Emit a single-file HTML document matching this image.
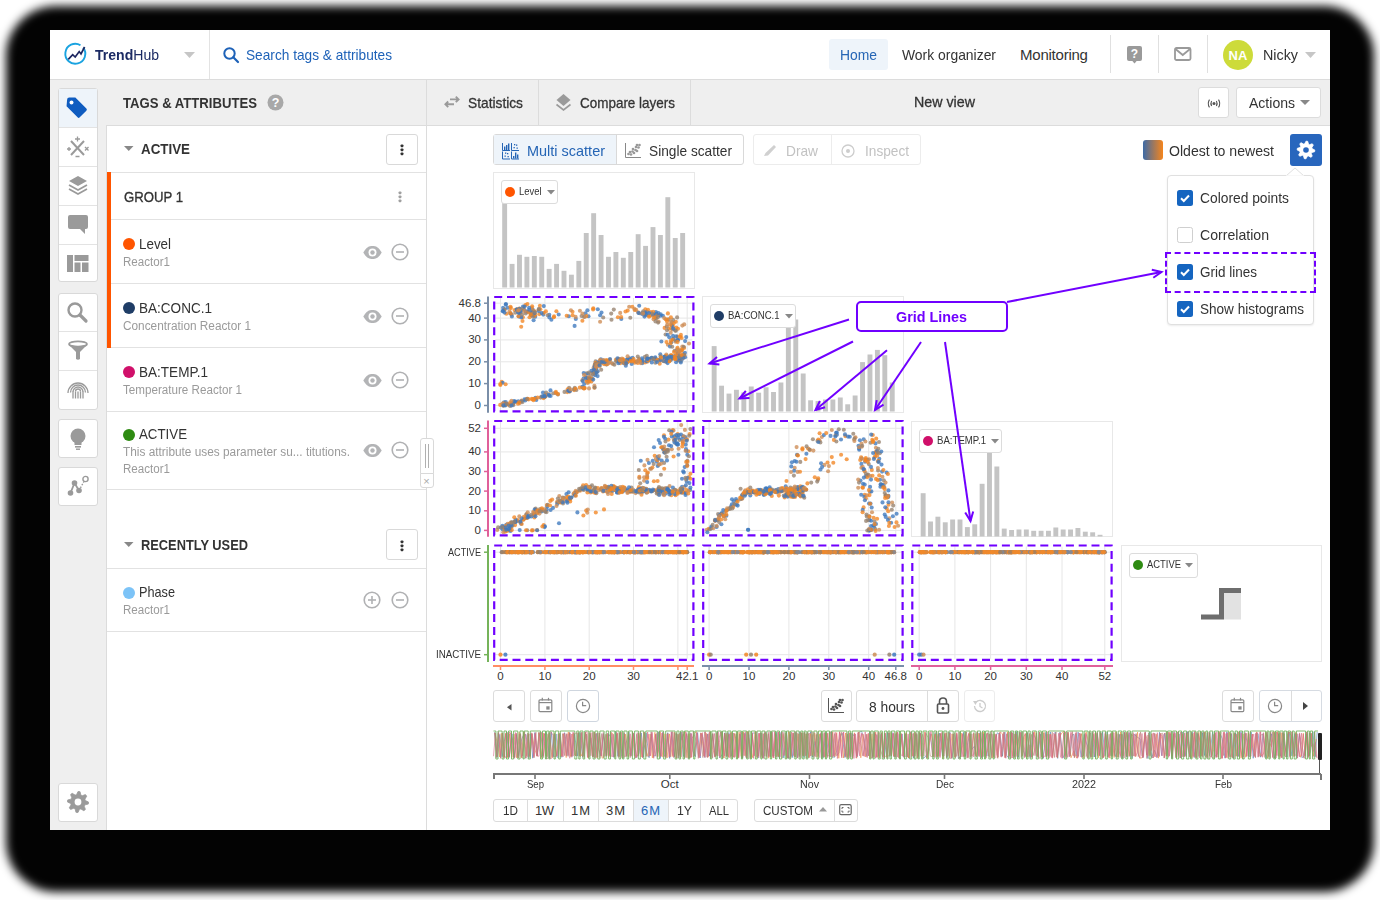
<!DOCTYPE html><html><head><meta charset="utf-8"><style>
*{box-sizing:border-box}
body{margin:0;width:1380px;height:900px;position:relative;overflow:hidden;background:#fff;font-family:"Liberation Sans", sans-serif;color:#333}
.ab{position:absolute}
.t{position:absolute;white-space:nowrap;line-height:1}
svg{position:absolute;overflow:visible}
</style></head><body>
<div class="ab" style="left:6px;top:6px;width:1368px;height:886px;border-radius:50px;background:#030303;filter:blur(5px)"></div>
<div class="ab" style="left:50px;top:30px;width:1280px;height:800px;background:#fff"></div>
<div class="ab" style="left:50px;top:79px;width:1280px;height:1px;background:#dcdcdc"></div>
<div class="ab" style="left:209px;top:30px;width:1px;height:49px;background:#e3e3e3"></div>
<svg style="left:64px;top:42px;" width="24" height="24" viewBox="0 0 24 24"><path d="M19.2,5.6 A10,10 0 1 1 16.5,3.2" fill="none" stroke="#1aa3e0" stroke-width="1.9"/><polyline points="4.3,17.3 8.7,12.6 11.2,15 15.2,9.6 17,12 20.6,5" fill="none" stroke="#1d2660" stroke-width="1.7" stroke-linejoin="miter"/></svg>
<div class="t" style="left:94.5px;top:46.9px;font-size:15.5px;color:#1b2a63;transform:scaleX(0.906);transform-origin:0 0"><b>Trend</b>Hub</div>
<svg style="left:183.5px;top:52px;" width="11" height="6" viewBox="0 0 11 6"><polygon points="0,0 11,0 5.5,6" fill="#c6c6c6"/></svg>
<svg style="left:223px;top:47px;" width="17" height="17" viewBox="0 0 17 17"><circle cx="6.5" cy="6.5" r="5.2" fill="none" stroke="#1e62b8" stroke-width="2"/><line x1="10.3" y1="10.3" x2="15" y2="15" stroke="#1e62b8" stroke-width="2.2" stroke-linecap="round"/></svg>
<div class="t" style="left:246.0px;top:47.3px;font-size:15px;color:#1e62b8;font-weight:normal;letter-spacing:0.00px;transform:scaleX(0.9120);transform-origin:0 0;">Search tags &amp; attributes</div>
<div class="ab" style="left:829px;top:39px;width:59px;height:31px;background:#eef4fa;border-radius:3px"></div>
<div class="t" style="left:840.0px;top:46.8px;font-size:15px;color:#2565b5;font-weight:normal;letter-spacing:0.00px;transform:scaleX(0.9247);transform-origin:0 0;">Home</div>
<div class="t" style="left:901.5px;top:46.8px;font-size:15px;color:#333;font-weight:normal;letter-spacing:0.00px;transform:scaleX(0.9268);transform-origin:0 0;">Work organizer</div>
<div class="t" style="left:1020.0px;top:46.8px;font-size:15px;color:#333;font-weight:normal;letter-spacing:-0.23px;">Monitoring</div>
<div class="ab" style="left:1110px;top:35px;width:1px;height:38px;background:#e0e0e0"></div>
<div class="ab" style="left:1158px;top:35px;width:1px;height:38px;background:#e0e0e0"></div>
<div class="ab" style="left:1207px;top:35px;width:1px;height:38px;background:#e0e0e0"></div>
<svg style="left:1126px;top:45px;" width="18" height="20" viewBox="0 0 18 20"><rect x="1" y="1" width="15" height="15" rx="2" fill="#9a9a9a"/><polygon points="5.5,15 11.5,15 8.5,18.5" fill="#9a9a9a"/><text x="8.5" y="13" font-size="12" font-weight="bold" text-anchor="middle" fill="#fff" font-family="Liberation Sans">?</text></svg>
<svg style="left:1174px;top:47px;" width="18" height="15" viewBox="0 0 18 15"><rect x="1" y="1" width="15.5" height="12" rx="1.5" fill="none" stroke="#9a9a9a" stroke-width="1.8"/><polyline points="1.5,2 8.75,8 16,2" fill="none" stroke="#9a9a9a" stroke-width="1.8"/></svg>
<div class="ab" style="left:1223px;top:39.5px;width:30px;height:30px;border-radius:50%;background:#cddb3a"></div>
<div class="t" style="left:1228.5px;top:48.5px;font-size:13px;color:#fff;font-weight:bold;letter-spacing:0.22px;">NA</div>
<div class="t" style="left:1263.0px;top:46.8px;font-size:15px;color:#333;font-weight:normal;letter-spacing:0.00px;transform:scaleX(0.9546);transform-origin:0 0;">Nicky</div>
<svg style="left:1304.5px;top:52px;" width="11" height="6" viewBox="0 0 11 6"><polygon points="0,0 11,0 5.5,6" fill="#c6c6c6"/></svg>
<div class="ab" style="left:50px;top:80px;width:57px;height:750px;background:#efefef"></div>
<div class="ab" style="left:107px;top:80px;width:320px;height:46px;background:#efefef"></div>
<div class="ab" style="left:427px;top:80px;width:903px;height:46px;background:#efefef"></div>
<div class="ab" style="left:107px;top:125px;width:1223px;height:1px;background:#dcdcdc"></div>
<div class="ab" style="left:106px;top:125px;width:1px;height:705px;background:#dcdcdc"></div>
<div class="ab" style="left:426px;top:80px;width:1px;height:750px;background:#dcdcdc"></div>
<div class="ab" style="left:58px;top:88px;width:40px;height:194px;background:#fff;border:1px solid #d9d9d9;border-radius:3px"></div>
<div class="ab" style="left:59px;top:127px;width:38px;height:1px;background:#e3e3e3"></div>
<div class="ab" style="left:59px;top:166px;width:38px;height:1px;background:#e3e3e3"></div>
<div class="ab" style="left:59px;top:205px;width:38px;height:1px;background:#e3e3e3"></div>
<div class="ab" style="left:59px;top:244px;width:38px;height:1px;background:#e3e3e3"></div>
<div class="ab" style="left:59px;top:89px;width:38px;height:38px;background:#eef4fa"></div>
<div class="ab" style="left:58px;top:292.5px;width:40px;height:117px;background:#fff;border:1px solid #d9d9d9;border-radius:3px"></div>
<div class="ab" style="left:59px;top:331px;width:38px;height:1px;background:#e3e3e3"></div>
<div class="ab" style="left:59px;top:370px;width:38px;height:1px;background:#e3e3e3"></div>
<div class="ab" style="left:58px;top:419px;width:40px;height:39px;background:#fff;border:1px solid #d9d9d9;border-radius:3px"></div>
<div class="ab" style="left:58px;top:466.5px;width:40px;height:39px;background:#fff;border:1px solid #d9d9d9;border-radius:3px"></div>
<div class="ab" style="left:58px;top:782.5px;width:40px;height:39px;background:#fff;border:1px solid #d9d9d9;border-radius:3px"></div>
<svg style="left:65px;top:96px;" width="24" height="24" viewBox="0 0 24 24"><g transform="translate(12,12) scale(1.1) translate(-12,-12)"><path d="M3,4.5 Q3,2.5 5,2.5 L10.5,2.5 L20.5,12.5 Q21.5,13.5 20.5,14.5 L14.5,20.5 Q13.5,21.5 12.5,20.5 L2.5,10.5 Z" fill="#0f5cc0"/><circle cx="7" cy="7" r="1.8" fill="#fff"/></g></svg>
<svg style="left:66px;top:136px;" width="24" height="24" viewBox="0 0 24 24"><line x1="5" y1="5" x2="18" y2="19" stroke="#9a9a9a" stroke-width="2"/><line x1="18" y1="5" x2="5" y2="19" stroke="#9a9a9a" stroke-width="2"/><path d="M11.5,0.5 v5 M9,3 h5 M1,13 h4 M3,11 v4 M19,11 l3.5,3.5 M22.5,11 l-3.5,3.5 M9.5,20.5 h4" stroke="#9a9a9a" stroke-width="1.3" fill="none"/></svg>
<svg style="left:66px;top:175px;" width="24" height="22" viewBox="0 0 24 22"><polygon points="12,1 21,6 12,11 3,6" fill="#9a9a9a"/><polyline points="3,10 12,15 21,10" fill="none" stroke="#9a9a9a" stroke-width="1.8"/><polyline points="3,14 12,19 21,14" fill="none" stroke="#9a9a9a" stroke-width="1.8"/></svg>
<svg style="left:66px;top:214px;" width="24" height="22" viewBox="0 0 24 22"><path d="M2,3 Q2,1 4,1 L20,1 Q22,1 22,3 L22,13 Q22,15 20,15 L19,15 L19,20 L14,15 L4,15 Q2,15 2,13 Z" fill="#9a9a9a"/></svg>
<svg style="left:66px;top:254px;" width="24" height="20" viewBox="0 0 24 20"><rect x="1" y="1" width="6" height="17" fill="#9a9a9a"/><rect x="8.5" y="1" width="14" height="6" fill="#9a9a9a"/><rect x="8.5" y="8.5" width="6" height="9.5" fill="#9a9a9a"/><rect x="16" y="8.5" width="6.5" height="9.5" fill="#9a9a9a"/></svg>
<svg style="left:66px;top:301px;" width="24" height="22" viewBox="0 0 24 22"><circle cx="9" cy="9" r="6.5" fill="none" stroke="#9a9a9a" stroke-width="2.4"/><line x1="14" y1="14" x2="20" y2="20" stroke="#9a9a9a" stroke-width="3.2" stroke-linecap="round"/></svg>
<svg style="left:67px;top:340px;" width="22" height="22" viewBox="0 0 22 22"><ellipse cx="11" cy="4" rx="9" ry="2.6" fill="none" stroke="#9a9a9a" stroke-width="1.8"/><path d="M2,4.5 Q3,6 9,12 L9,19 Q11,20.5 13,19 L13,12 Q19,6 20,4.5 Q11,8 2,4.5Z" fill="#9a9a9a"/></svg>
<svg style="left:67px;top:378px;" width="22" height="22" viewBox="0 0 22 22"><path d="M8.5,13.5 A2.5,2.5 0 0 1 13.5,13.5" fill="none" stroke="#9a9a9a" stroke-width="1.3"/><path d="M6,14.0 A5,5 0 0 1 16,14.0" fill="none" stroke="#9a9a9a" stroke-width="1.3"/><path d="M3.5,14.5 A7.5,7.5 0 0 1 18.5,14.5" fill="none" stroke="#9a9a9a" stroke-width="1.3"/><path d="M1,15.0 A10,10 0 0 1 21,15.0" fill="none" stroke="#9a9a9a" stroke-width="1.3"/><line x1="6" y1="13.5" x2="6" y2="20.5" stroke="#9a9a9a" stroke-width="1.3"/><line x1="8.5" y1="13.5" x2="8.5" y2="20.5" stroke="#9a9a9a" stroke-width="1.3"/><line x1="11" y1="13.5" x2="11" y2="20.5" stroke="#9a9a9a" stroke-width="1.3"/><line x1="13.5" y1="13.5" x2="13.5" y2="20.5" stroke="#9a9a9a" stroke-width="1.3"/><line x1="16" y1="13.5" x2="16" y2="20.5" stroke="#9a9a9a" stroke-width="1.3"/></svg>
<svg style="left:68px;top:427px;" width="20" height="24" viewBox="0 0 20 24"><circle cx="10" cy="9" r="7.5" fill="#9a9a9a"/><rect x="6.5" y="14" width="7" height="4" fill="#9a9a9a"/><rect x="7" y="19" width="6" height="1.6" fill="#9a9a9a"/><rect x="8" y="21.5" width="4" height="1.4" fill="#9a9a9a"/></svg>
<svg style="left:67px;top:475px;" width="22" height="22" viewBox="0 0 22 22"><circle cx="3.5" cy="18" r="2.8" fill="#9a9a9a"/><circle cx="7.5" cy="8" r="2.8" fill="#9a9a9a"/><circle cx="12" cy="15.5" r="2.8" fill="#9a9a9a"/><circle cx="18.5" cy="4" r="2.6" fill="none" stroke="#9a9a9a" stroke-width="1.4"/><polyline points="3.5,18 7.5,8 12,15.5" fill="none" stroke="#9a9a9a" stroke-width="1.8"/><line x1="12" y1="15.5" x2="17" y2="6.5" stroke="#9a9a9a" stroke-width="1.4" stroke-dasharray="1.5,1.5"/></svg>
<svg style="left:66px;top:790px;" width="24" height="24" viewBox="0 0 24 24"><polygon points="22.50,12.00 22.30,14.05 18.93,14.87 18.24,16.17 19.42,19.42 17.83,20.73 14.87,18.93 13.46,19.36 12.00,22.50 9.95,22.30 9.13,18.93 7.83,18.24 4.58,19.42 3.27,17.83 5.07,14.87 4.64,13.46 1.50,12.00 1.70,9.95 5.07,9.13 5.76,7.83 4.58,4.58 6.17,3.27 9.13,5.07 10.54,4.64 12.00,1.50 14.05,1.70 14.87,5.07 16.17,5.76 19.42,4.58 20.73,6.17 18.93,9.13 19.36,10.54" fill="#9a9a9a" stroke="#9a9a9a" stroke-width="0.8" stroke-linejoin="round"/><circle cx="12" cy="12" r="3.4" fill="#fff"/></svg>
<div class="t" style="left:122.5px;top:94.8px;font-size:15px;color:#333;font-weight:bold;letter-spacing:0.00px;transform:scaleX(0.8755);transform-origin:0 0;">TAGS &amp; ATTRIBUTES</div>
<svg style="left:267px;top:94px;" width="17" height="17" viewBox="0 0 17 17"><circle cx="8.5" cy="8.5" r="8" fill="#a8a8a8"/><text x="8.5" y="13.2" font-size="12.5" font-weight="bold" text-anchor="middle" fill="#fff" font-family="Liberation Sans">?</text></svg>
<div class="ab" style="left:107px;top:126px;width:319px;height:704px;background:#fff"></div>
<svg style="left:123.5px;top:146px;" width="9.5" height="5" viewBox="0 0 9.5 5"><polygon points="0,0 9.5,0 4.75,5" fill="#888"/></svg>
<div class="t" style="left:141.0px;top:141.3px;font-size:15px;color:#333;font-weight:bold;letter-spacing:0.00px;transform:scaleX(0.8908);transform-origin:0 0;">ACTIVE</div>
<div class="ab" style="left:386px;top:133.5px;width:32px;height:31px;background:#fff;border:1px solid #d9d9d9;border-radius:3px"></div>
<svg style="left:400.0px;top:142.0px;" width="4" height="14" viewBox="0 0 4 14"><rect x="0.6" y="2.4" width="2.8" height="2.8" rx="0.9" fill="#333"/><rect x="0.6" y="6.4" width="2.8" height="2.8" rx="0.9" fill="#333"/><rect x="0.6" y="10.4" width="2.8" height="2.8" rx="0.9" fill="#333"/></svg>
<div class="ab" style="left:107px;top:172px;width:319px;height:1px;background:#e2e2e2"></div>
<div class="ab" style="left:107px;top:172px;width:4px;height:176px;background:#ff5500"></div>
<div class="t" style="left:123.5px;top:189.3px;font-size:15px;color:#333;font-weight:normal;letter-spacing:0.00px;transform:scaleX(0.8774);transform-origin:0 0;-webkit-text-stroke:0.35px #333">GROUP 1</div>
<svg style="left:398.0px;top:188.5px;" width="4" height="14" viewBox="0 0 4 14"><rect x="0.6" y="2.4" width="2.8" height="2.8" rx="0.9" fill="#a0a0a0"/><rect x="0.6" y="6.4" width="2.8" height="2.8" rx="0.9" fill="#a0a0a0"/><rect x="0.6" y="10.4" width="2.8" height="2.8" rx="0.9" fill="#a0a0a0"/></svg>
<div class="ab" style="left:111px;top:219px;width:315px;height:1px;background:#e2e2e2"></div>
<div class="ab" style="left:123px;top:238.0px;width:12px;height:12px;border-radius:50%;background:#ff5500"></div>
<div class="t" style="left:139.0px;top:235.8px;font-size:15px;color:#333;font-weight:normal;letter-spacing:0.00px;transform:scaleX(0.8923);transform-origin:0 0;">Level</div>
<div class="t" style="left:123.0px;top:255.9px;font-size:12.5px;color:#9a9a9a;font-weight:normal;letter-spacing:0.00px;transform:scaleX(0.9266);transform-origin:0 0;">Reactor1</div>
<svg style="left:362.5px;top:245.5px;" width="19" height="13" viewBox="0 0 19 13"><path d="M0.3,6.5 C3.5,1 6,0 9.5,0 C13,0 15.5,1 18.7,6.5 C15.5,12 13,13 9.5,13 C6,13 3.5,12 0.3,6.5Z" fill="#b3b4b6"/><circle cx="9.5" cy="6.5" r="4" fill="#fff"/><circle cx="9.5" cy="6.5" r="2.2" fill="#b3b4b6"/></svg>
<svg style="left:391px;top:243px;" width="18" height="18" viewBox="0 0 18 18"><circle cx="9" cy="9" r="7.8" fill="none" stroke="#b0b1b3" stroke-width="1.6"/><line x1="5" y1="9" x2="13" y2="9" stroke="#b0b1b3" stroke-width="1.6"/></svg>
<div class="ab" style="left:111px;top:283px;width:315px;height:1px;background:#e2e2e2"></div>
<div class="ab" style="left:123px;top:302.0px;width:12px;height:12px;border-radius:50%;background:#1f3d66"></div>
<div class="t" style="left:139.0px;top:299.8px;font-size:15px;color:#333;font-weight:normal;letter-spacing:0.00px;transform:scaleX(0.9029);transform-origin:0 0;">BA:CONC.1</div>
<div class="t" style="left:123.0px;top:319.9px;font-size:12.5px;color:#9a9a9a;font-weight:normal;letter-spacing:0.00px;transform:scaleX(0.9447);transform-origin:0 0;">Concentration Reactor 1</div>
<svg style="left:362.5px;top:309.5px;" width="19" height="13" viewBox="0 0 19 13"><path d="M0.3,6.5 C3.5,1 6,0 9.5,0 C13,0 15.5,1 18.7,6.5 C15.5,12 13,13 9.5,13 C6,13 3.5,12 0.3,6.5Z" fill="#b3b4b6"/><circle cx="9.5" cy="6.5" r="4" fill="#fff"/><circle cx="9.5" cy="6.5" r="2.2" fill="#b3b4b6"/></svg>
<svg style="left:391px;top:307px;" width="18" height="18" viewBox="0 0 18 18"><circle cx="9" cy="9" r="7.8" fill="none" stroke="#b0b1b3" stroke-width="1.6"/><line x1="5" y1="9" x2="13" y2="9" stroke="#b0b1b3" stroke-width="1.6"/></svg>
<div class="ab" style="left:111px;top:347px;width:315px;height:1px;background:#e2e2e2"></div>
<div class="ab" style="left:123px;top:366.0px;width:12px;height:12px;border-radius:50%;background:#d0106a"></div>
<div class="t" style="left:139.0px;top:363.8px;font-size:15px;color:#333;font-weight:normal;letter-spacing:0.00px;transform:scaleX(0.9029);transform-origin:0 0;">BA:TEMP.1</div>
<div class="t" style="left:123.0px;top:383.9px;font-size:12.5px;color:#9a9a9a;font-weight:normal;letter-spacing:0.00px;transform:scaleX(0.9308);transform-origin:0 0;">Temperature Reactor 1</div>
<svg style="left:362.5px;top:373.5px;" width="19" height="13" viewBox="0 0 19 13"><path d="M0.3,6.5 C3.5,1 6,0 9.5,0 C13,0 15.5,1 18.7,6.5 C15.5,12 13,13 9.5,13 C6,13 3.5,12 0.3,6.5Z" fill="#b3b4b6"/><circle cx="9.5" cy="6.5" r="4" fill="#fff"/><circle cx="9.5" cy="6.5" r="2.2" fill="#b3b4b6"/></svg>
<svg style="left:391px;top:371px;" width="18" height="18" viewBox="0 0 18 18"><circle cx="9" cy="9" r="7.8" fill="none" stroke="#b0b1b3" stroke-width="1.6"/><line x1="5" y1="9" x2="13" y2="9" stroke="#b0b1b3" stroke-width="1.6"/></svg>
<div class="ab" style="left:107px;top:411px;width:319px;height:1px;background:#e2e2e2"></div>
<div class="ab" style="left:123px;top:428.5px;width:12px;height:12px;border-radius:50%;background:#2e8b12"></div>
<div class="t" style="left:139.0px;top:426.3px;font-size:15px;color:#333;font-weight:normal;letter-spacing:0.00px;transform:scaleX(0.8859);transform-origin:0 0;">ACTIVE</div>
<div class="t" style="left:123.0px;top:445.9px;font-size:12.5px;color:#9a9a9a;font-weight:normal;letter-spacing:0.00px;transform:scaleX(0.9470);transform-origin:0 0;">This attribute uses parameter su... titutions.</div>
<div class="t" style="left:123.0px;top:462.9px;font-size:12.5px;color:#9a9a9a;font-weight:normal;letter-spacing:0.00px;transform:scaleX(0.9266);transform-origin:0 0;">Reactor1</div>
<svg style="left:362.5px;top:443.5px;" width="19" height="13" viewBox="0 0 19 13"><path d="M0.3,6.5 C3.5,1 6,0 9.5,0 C13,0 15.5,1 18.7,6.5 C15.5,12 13,13 9.5,13 C6,13 3.5,12 0.3,6.5Z" fill="#b3b4b6"/><circle cx="9.5" cy="6.5" r="4" fill="#fff"/><circle cx="9.5" cy="6.5" r="2.2" fill="#b3b4b6"/></svg>
<svg style="left:391px;top:441px;" width="18" height="18" viewBox="0 0 18 18"><circle cx="9" cy="9" r="7.8" fill="none" stroke="#b0b1b3" stroke-width="1.6"/><line x1="5" y1="9" x2="13" y2="9" stroke="#b0b1b3" stroke-width="1.6"/></svg>
<div class="ab" style="left:107px;top:489px;width:319px;height:1px;background:#e2e2e2"></div>
<div class="ab" style="left:419.5px;top:438px;width:14px;height:36px;background:#fff;border:1px solid #d9d9d9;border-radius:3px 3px 0 0"></div>
<div class="ab" style="left:424.5px;top:444px;width:1.3px;height:24px;background:#b0b0b0"></div>
<div class="ab" style="left:428px;top:444px;width:1.3px;height:24px;background:#b0b0b0"></div>
<div class="ab" style="left:419.5px;top:473px;width:14px;height:15px;background:#fff;border:1px solid #d9d9d9;border-radius:0 0 3px 3px"></div>
<div class="t" style="left:423.3px;top:475.7px;font-size:11px;color:#aaa;font-weight:normal;letter-spacing:0.00px;">×</div>
<svg style="left:123.5px;top:542px;" width="9.5" height="5" viewBox="0 0 9.5 5"><polygon points="0,0 9.5,0 4.75,5" fill="#888"/></svg>
<div class="t" style="left:141.0px;top:537.3px;font-size:15px;color:#333;font-weight:bold;letter-spacing:0.00px;transform:scaleX(0.8557);transform-origin:0 0;">RECENTLY USED</div>
<div class="ab" style="left:386px;top:529px;width:32px;height:31px;background:#fff;border:1px solid #d9d9d9;border-radius:3px"></div>
<svg style="left:400.0px;top:537.5px;" width="4" height="14" viewBox="0 0 4 14"><rect x="0.6" y="2.4" width="2.8" height="2.8" rx="0.9" fill="#333"/><rect x="0.6" y="6.4" width="2.8" height="2.8" rx="0.9" fill="#333"/><rect x="0.6" y="10.4" width="2.8" height="2.8" rx="0.9" fill="#333"/></svg>
<div class="ab" style="left:107px;top:568px;width:319px;height:1px;background:#e2e2e2"></div>
<div class="ab" style="left:123px;top:586.5px;width:12px;height:12px;border-radius:50%;background:#7cc3f7"></div>
<div class="t" style="left:139.0px;top:584.3px;font-size:15px;color:#333;font-weight:normal;letter-spacing:0.00px;transform:scaleX(0.8464);transform-origin:0 0;">Phase</div>
<div class="t" style="left:123.0px;top:604.4px;font-size:12.5px;color:#9a9a9a;font-weight:normal;letter-spacing:0.00px;transform:scaleX(0.9266);transform-origin:0 0;">Reactor1</div>
<svg style="left:363px;top:591px;" width="18" height="18" viewBox="0 0 18 18"><circle cx="9" cy="9" r="7.8" fill="none" stroke="#b0b1b3" stroke-width="1.6"/><line x1="5" y1="9" x2="13" y2="9" stroke="#b0b1b3" stroke-width="1.6"/><line x1="9" y1="5" x2="9" y2="13" stroke="#b0b1b3" stroke-width="1.6"/></svg>
<svg style="left:391px;top:591px;" width="18" height="18" viewBox="0 0 18 18"><circle cx="9" cy="9" r="7.8" fill="none" stroke="#b0b1b3" stroke-width="1.6"/><line x1="5" y1="9" x2="13" y2="9" stroke="#b0b1b3" stroke-width="1.6"/></svg>
<div class="ab" style="left:107px;top:631px;width:319px;height:1px;background:#e2e2e2"></div>
<!--MAIN-->
<div class="ab" style="left:538px;top:80px;width:1px;height:45px;background:#dcdcdc"></div>
<div class="ab" style="left:690px;top:80px;width:1px;height:45px;background:#dcdcdc"></div>
<svg style="left:444px;top:95px;" width="16" height="14" viewBox="0 0 16 14"><path d="M6,4.4 H14.5 M11.8,1.6 L14.6,4.4 L11.8,7.2" fill="none" stroke="#9a9a9a" stroke-width="1.9" stroke-linejoin="miter"/><path d="M10,9.3 H1.5 M4.2,6.5 L1.4,9.3 L4.2,12.1" fill="none" stroke="#9a9a9a" stroke-width="1.9"/></svg>
<div class="t" style="left:468.0px;top:94.8px;font-size:15px;color:#333;font-weight:normal;letter-spacing:0.00px;transform:scaleX(0.9164);transform-origin:0 0;-webkit-text-stroke:0.3px #333">Statistics</div>
<svg style="left:555px;top:93px;" width="17" height="18" viewBox="0 0 17 18"><polygon points="8.5,1 15.5,7 8.5,13 1.5,7" fill="#9a9a9a"/><polyline points="1.5,11.5 8.5,17 15.5,11.5" fill="none" stroke="#9a9a9a" stroke-width="1.6"/></svg>
<div class="t" style="left:580.0px;top:94.8px;font-size:15px;color:#333;font-weight:normal;letter-spacing:0.00px;transform:scaleX(0.8973);transform-origin:0 0;-webkit-text-stroke:0.3px #333">Compare layers</div>
<div class="t" style="left:914.0px;top:94.3px;font-size:15px;color:#333;font-weight:normal;letter-spacing:0.00px;transform:scaleX(0.9504);transform-origin:0 0;-webkit-text-stroke:0.3px #333">New view</div>
<div class="ab" style="left:1198px;top:87px;width:31px;height:31px;background:#fff;border:1px solid #dcdcdc;border-radius:3px"></div>
<svg style="left:1206.5px;top:98.5px;" width="14" height="9" viewBox="0 0 14 9"><circle cx="7" cy="4.5" r="1.5" fill="#555"/><path d="M4.6,2 Q3.2,4.5 4.6,7 M9.4,2 Q10.8,4.5 9.4,7 M2.5,0.6 Q0,4.5 2.5,8.4 M11.5,0.6 Q14,4.5 11.5,8.4" fill="none" stroke="#555" stroke-width="1.1"/></svg>
<div class="ab" style="left:1236px;top:87px;width:85px;height:31px;background:#fff;border:1px solid #dcdcdc;border-radius:3px"></div>
<div class="t" style="left:1248.5px;top:95.3px;font-size:15px;color:#333;font-weight:normal;letter-spacing:0.00px;transform:scaleX(0.9351);transform-origin:0 0;">Actions</div>
<svg style="left:1299.5px;top:100px;" width="10" height="5" viewBox="0 0 10 5"><polygon points="0,0 10,0 5.0,5" fill="#888"/></svg>
<div class="ab" style="left:493px;top:134px;width:251px;height:31px;background:#fff;border:1px solid #d9d9d9;border-radius:3px"></div>
<div class="ab" style="left:494px;top:135px;width:122px;height:29px;background:#eef4fa"></div>
<div class="ab" style="left:616px;top:135px;width:1px;height:29px;background:#d9d9d9"></div>
<svg style="left:501.5px;top:143px;" width="18" height="17" viewBox="0 0 18 17"><path d="M0.5,0 V7.5 H8" fill="none" stroke="#2565b5" stroke-width="1"/><rect x="2" y="3.5" width="1.4" height="3.5" fill="#2565b5"/><rect x="4" y="2" width="1.4" height="5" fill="#2565b5"/><rect x="6" y="0.5" width="1.4" height="6.5" fill="#2565b5"/><path d="M9.5,0 V7.5 H17" fill="none" stroke="#2565b5" stroke-width="1"/><rect x="11.5" y="4" width="1.3" height="1.3" fill="#2565b5"/><rect x="14" y="1.5" width="1.3" height="1.3" fill="#2565b5"/><rect x="14.5" y="4.5" width="1.3" height="1.3" fill="#2565b5"/><rect x="12" y="1" width="1.3" height="1.3" fill="#2565b5"/><path d="M0.5,8.5 V16.0 H8" fill="none" stroke="#2565b5" stroke-width="1"/><rect x="2.5" y="12.5" width="1.3" height="1.3" fill="#2565b5"/><rect x="5" y="10.0" width="1.3" height="1.3" fill="#2565b5"/><rect x="5.5" y="13.0" width="1.3" height="1.3" fill="#2565b5"/><rect x="3" y="9.5" width="1.3" height="1.3" fill="#2565b5"/><path d="M9.5,8.5 V16.0 H17" fill="none" stroke="#2565b5" stroke-width="1"/><rect x="11" y="13.0" width="1.4" height="2.5" fill="#2565b5"/><rect x="13" y="9.5" width="1.4" height="6" fill="#2565b5"/><rect x="15" y="11.5" width="1.4" height="4" fill="#2565b5"/></svg>
<div class="t" style="left:526.5px;top:142.8px;font-size:15px;color:#2565b5;font-weight:normal;letter-spacing:0.00px;transform:scaleX(0.9647);transform-origin:0 0;">Multi scatter</div>
<svg style="left:625px;top:142px;" width="18" height="17" viewBox="0 0 18 17"><path d="M0.5,1 V15.5 H16" fill="none" stroke="#888" stroke-width="1"/><circle cx="3.5" cy="12" r="1.35" fill="#999"/><circle cx="6" cy="12.5" r="1.35" fill="#999"/><circle cx="5" cy="10" r="1.35" fill="#999"/><circle cx="7.5" cy="9.5" r="1.35" fill="#999"/><circle cx="9" cy="11" r="1.35" fill="#999"/><circle cx="8" cy="7" r="1.35" fill="#999"/><circle cx="10.5" cy="8" r="1.35" fill="#999"/><circle cx="12" cy="9" r="1.35" fill="#999"/><circle cx="11" cy="5" r="1.35" fill="#999"/><circle cx="13.5" cy="5.5" r="1.35" fill="#999"/><circle cx="14.5" cy="3" r="1.35" fill="#999"/><circle cx="12" cy="3" r="1.35" fill="#999"/></svg>
<div class="t" style="left:649.0px;top:142.8px;font-size:15px;color:#333;font-weight:normal;letter-spacing:0.00px;transform:scaleX(0.9133);transform-origin:0 0;">Single scatter</div>
<div class="ab" style="left:753px;top:134px;width:168px;height:31px;background:#fff;border:1px solid #ececec;border-radius:3px"></div>
<div class="ab" style="left:831px;top:135px;width:1px;height:29px;background:#ececec"></div>
<svg style="left:762px;top:143px;" width="16" height="15" viewBox="0 0 16 15"><path d="M2,13 L3.5,10 L12,2 L14,4 L6,12.5Z" fill="#d0d0d0"/></svg>
<div class="t" style="left:786.0px;top:142.8px;font-size:15px;color:#c2c2c2;font-weight:normal;letter-spacing:0.00px;transform:scaleX(0.9142);transform-origin:0 0;">Draw</div>
<svg style="left:841px;top:144px;" width="14" height="14" viewBox="0 0 14 14"><circle cx="7" cy="7" r="6" fill="none" stroke="#cdcdcd" stroke-width="1.3"/><circle cx="7" cy="7" r="2" fill="#cdcdcd"/></svg>
<div class="t" style="left:864.5px;top:142.8px;font-size:15px;color:#c2c2c2;font-weight:normal;letter-spacing:0.00px;transform:scaleX(0.9098);transform-origin:0 0;">Inspect</div>
<div class="ab" style="left:1142.5px;top:140px;width:20px;height:20px;border-radius:3px;background:linear-gradient(90deg,#3d6aa6,#f5851d)"></div>
<div class="t" style="left:1169.0px;top:142.8px;font-size:15px;color:#333;font-weight:normal;letter-spacing:0.00px;transform:scaleX(0.9398);transform-origin:0 0;">Oldest to newest</div>
<div class="ab" style="left:1290px;top:134px;width:32px;height:31.5px;background:#2866bd;border-radius:3px"></div>
<svg style="left:1296px;top:140px;" width="20" height="20" viewBox="0 0 20 20"><polygon points="18.80,10.00 18.63,11.72 15.91,12.45 15.32,13.56 16.22,16.22 14.89,17.32 12.45,15.91 11.25,16.28 10.00,18.80 8.28,18.63 7.55,15.91 6.44,15.32 3.78,16.22 2.68,14.89 4.09,12.45 3.72,11.25 1.20,10.00 1.37,8.28 4.09,7.55 4.68,6.44 3.78,3.78 5.11,2.68 7.55,4.09 8.75,3.72 10.00,1.20 11.72,1.37 12.45,4.09 13.56,4.68 16.22,3.78 17.32,5.11 15.91,7.55 16.28,8.75" fill="#fff" stroke="#fff" stroke-width="0.8" stroke-linejoin="round"/><circle cx="10" cy="10" r="2.8" fill="#2866bd"/></svg>
<div class="ab" style="left:1166.5px;top:175px;width:147.5px;height:149.5px;background:#fff;border:1px solid #e0e0e0;border-radius:4px;box-shadow:0 1px 2px rgba(0,0,0,.08)"></div>
<svg style="left:1286px;top:168px;" width="18" height="8" viewBox="0 0 18 8"><polygon points="0,8 9,0 18,8" fill="#fff" stroke="#e0e0e0" stroke-width="1"/><rect x="0" y="7.5" width="18" height="2" fill="#fff"/></svg>
<svg style="left:1176.5px;top:189.8px;" width="16" height="16" viewBox="0 0 16 16"><rect x="0" y="0" width="16" height="16" rx="2.5" fill="#1565c0"/><polyline points="4,8.2 6.8,11 12,5.5" fill="none" stroke="#fff" stroke-width="2"/></svg>
<div class="t" style="left:1200.0px;top:190.3px;font-size:15px;color:#333;font-weight:normal;letter-spacing:0.00px;transform:scaleX(0.9201);transform-origin:0 0;">Colored points</div>
<div class="ab" style="left:1176.5px;top:226.7px;width:16px;height:16px;border:1px solid #cfcfcf;border-radius:2.5px;background:#fff"></div>
<div class="t" style="left:1200.0px;top:227.3px;font-size:15px;color:#333;font-weight:normal;letter-spacing:0.00px;transform:scaleX(0.9404);transform-origin:0 0;">Correlation</div>
<svg style="left:1176.5px;top:263.7px;" width="16" height="16" viewBox="0 0 16 16"><rect x="0" y="0" width="16" height="16" rx="2.5" fill="#1565c0"/><polyline points="4,8.2 6.8,11 12,5.5" fill="none" stroke="#fff" stroke-width="2"/></svg>
<div class="t" style="left:1200.0px;top:264.3px;font-size:15px;color:#333;font-weight:normal;letter-spacing:0.00px;transform:scaleX(0.8997);transform-origin:0 0;">Grid lines</div>
<svg style="left:1176.5px;top:300.5px;" width="16" height="16" viewBox="0 0 16 16"><rect x="0" y="0" width="16" height="16" rx="2.5" fill="#1565c0"/><polyline points="4,8.2 6.8,11 12,5.5" fill="none" stroke="#fff" stroke-width="2"/></svg>
<div class="t" style="left:1200.0px;top:301.3px;font-size:15px;color:#333;font-weight:normal;letter-spacing:0.00px;transform:scaleX(0.9039);transform-origin:0 0;">Show histograms</div>
<div class="ab" style="left:493px;top:172px;width:201.5px;height:116.5px;background:#fff;border:1px solid #e8e8e8"></div>
<svg style="left:493px;top:172px;" width="201" height="116.5" viewBox="0 0 201 116.5"><rect x="9.20" y="25.50" width="4.9" height="90.00" fill="#c4c4c4"/><rect x="16.62" y="91.90" width="4.9" height="23.60" fill="#c4c4c4"/><rect x="24.03" y="82.80" width="4.9" height="32.70" fill="#c4c4c4"/><rect x="31.45" y="84.80" width="4.9" height="30.70" fill="#c4c4c4"/><rect x="38.87" y="84.00" width="4.9" height="31.50" fill="#c4c4c4"/><rect x="46.28" y="84.80" width="4.9" height="30.70" fill="#c4c4c4"/><rect x="53.70" y="96.90" width="4.9" height="18.60" fill="#c4c4c4"/><rect x="61.12" y="91.90" width="4.9" height="23.60" fill="#c4c4c4"/><rect x="68.54" y="98.80" width="4.9" height="16.70" fill="#c4c4c4"/><rect x="75.95" y="102.70" width="4.9" height="12.80" fill="#c4c4c4"/><rect x="83.37" y="88.90" width="4.9" height="26.60" fill="#c4c4c4"/><rect x="90.79" y="61.00" width="4.9" height="54.50" fill="#c4c4c4"/><rect x="98.20" y="41.20" width="4.9" height="74.30" fill="#c4c4c4"/><rect x="105.62" y="63.00" width="4.9" height="52.50" fill="#c4c4c4"/><rect x="113.04" y="84.80" width="4.9" height="30.70" fill="#c4c4c4"/><rect x="120.45" y="80.00" width="4.9" height="35.50" fill="#c4c4c4"/><rect x="127.87" y="85.80" width="4.9" height="29.70" fill="#c4c4c4"/><rect x="135.29" y="80.00" width="4.9" height="35.50" fill="#c4c4c4"/><rect x="142.71" y="62.20" width="4.9" height="53.30" fill="#c4c4c4"/><rect x="150.12" y="73.90" width="4.9" height="41.60" fill="#c4c4c4"/><rect x="157.54" y="55.10" width="4.9" height="60.40" fill="#c4c4c4"/><rect x="164.96" y="63.00" width="4.9" height="52.50" fill="#c4c4c4"/><rect x="172.37" y="25.20" width="4.9" height="90.30" fill="#c4c4c4"/><rect x="179.79" y="66.00" width="4.9" height="49.50" fill="#c4c4c4"/><rect x="187.21" y="61.00" width="4.9" height="54.50" fill="#c4c4c4"/></svg>
<div class="ab" style="left:500.5px;top:180px;width:57px;height:24px;background:#fff;border:1px solid #dcdcdc;border-radius:3px"></div>
<div class="ab" style="left:504.5px;top:187px;width:10px;height:10px;border-radius:50%;background:#ff5500"></div>
<div class="t" style="left:519.0px;top:186.3px;font-size:11.5px;color:#333;font-weight:normal;letter-spacing:0.00px;transform:scaleX(0.8184);transform-origin:0 0;">Level</div>
<svg style="left:546.5px;top:190px;" width="8" height="4.5" viewBox="0 0 8 4.5"><polygon points="0,0 8,0 4.0,4.5" fill="#888"/></svg>
<div class="ab" style="left:702px;top:296px;width:201.5px;height:116.5px;background:#fff;border:1px solid #e8e8e8"></div>
<svg style="left:702px;top:296px;" width="201" height="116.5" viewBox="0 0 201 116.5"><rect x="9.70" y="50.10" width="4.9" height="65.40" fill="#c4c4c4"/><rect x="17.12" y="89.70" width="4.9" height="25.80" fill="#c4c4c4"/><rect x="24.54" y="97.60" width="4.9" height="17.90" fill="#c4c4c4"/><rect x="31.96" y="93.80" width="4.9" height="21.70" fill="#c4c4c4"/><rect x="39.38" y="96.40" width="4.9" height="19.10" fill="#c4c4c4"/><rect x="46.80" y="90.50" width="4.9" height="25.00" fill="#c4c4c4"/><rect x="54.22" y="96.70" width="4.9" height="18.80" fill="#c4c4c4"/><rect x="61.64" y="91.30" width="4.9" height="24.20" fill="#c4c4c4"/><rect x="69.06" y="96.00" width="4.9" height="19.50" fill="#c4c4c4"/><rect x="76.48" y="86.50" width="4.9" height="29.00" fill="#c4c4c4"/><rect x="83.90" y="23.50" width="4.9" height="92.00" fill="#c4c4c4"/><rect x="91.32" y="23.50" width="4.9" height="92.00" fill="#c4c4c4"/><rect x="98.74" y="77.50" width="4.9" height="38.00" fill="#c4c4c4"/><rect x="106.16" y="104.30" width="4.9" height="11.20" fill="#c4c4c4"/><rect x="113.58" y="105.10" width="4.9" height="10.40" fill="#c4c4c4"/><rect x="121.00" y="103.50" width="4.9" height="12.00" fill="#c4c4c4"/><rect x="128.42" y="103.50" width="4.9" height="12.00" fill="#c4c4c4"/><rect x="135.84" y="101.50" width="4.9" height="14.00" fill="#c4c4c4"/><rect x="143.26" y="108.30" width="4.9" height="7.20" fill="#c4c4c4"/><rect x="150.68" y="99.50" width="4.9" height="16.00" fill="#c4c4c4"/><rect x="158.10" y="66.10" width="4.9" height="49.40" fill="#c4c4c4"/><rect x="165.52" y="58.50" width="4.9" height="57.00" fill="#c4c4c4"/><rect x="172.94" y="53.90" width="4.9" height="61.60" fill="#c4c4c4"/><rect x="180.36" y="59.20" width="4.9" height="56.30" fill="#c4c4c4"/><rect x="187.78" y="86.50" width="4.9" height="29.00" fill="#c4c4c4"/></svg>
<div class="ab" style="left:709.5px;top:304px;width:86px;height:24px;background:#fff;border:1px solid #dcdcdc;border-radius:3px"></div>
<div class="ab" style="left:713.5px;top:311px;width:10px;height:10px;border-radius:50%;background:#1f3d66"></div>
<div class="t" style="left:728.0px;top:310.3px;font-size:11.5px;color:#333;font-weight:normal;letter-spacing:0.00px;transform:scaleX(0.8308);transform-origin:0 0;">BA:CONC.1</div>
<svg style="left:784.5px;top:314px;" width="8" height="4.5" viewBox="0 0 8 4.5"><polygon points="0,0 8,0 4.0,4.5" fill="#888"/></svg>
<div class="ab" style="left:911px;top:420.5px;width:201.5px;height:116.5px;background:#fff;border:1px solid #e8e8e8"></div>
<svg style="left:911px;top:420.5px;" width="201" height="116.5" viewBox="0 0 201 116.5"><rect x="9.70" y="72.20" width="4.9" height="43.30" fill="#c4c4c4"/><rect x="17.07" y="100.50" width="4.9" height="15.00" fill="#c4c4c4"/><rect x="24.44" y="95.70" width="4.9" height="19.80" fill="#c4c4c4"/><rect x="31.81" y="101.30" width="4.9" height="14.20" fill="#c4c4c4"/><rect x="39.18" y="98.50" width="4.9" height="17.00" fill="#c4c4c4"/><rect x="46.55" y="98.50" width="4.9" height="17.00" fill="#c4c4c4"/><rect x="53.92" y="106.10" width="4.9" height="9.40" fill="#c4c4c4"/><rect x="61.29" y="103.30" width="4.9" height="12.20" fill="#c4c4c4"/><rect x="68.66" y="62.80" width="4.9" height="52.70" fill="#c4c4c4"/><rect x="76.03" y="31.50" width="4.9" height="84.00" fill="#c4c4c4"/><rect x="83.40" y="45.50" width="4.9" height="70.00" fill="#c4c4c4"/><rect x="90.77" y="107.60" width="4.9" height="7.90" fill="#c4c4c4"/><rect x="98.14" y="109.00" width="4.9" height="6.50" fill="#c4c4c4"/><rect x="105.51" y="108.50" width="4.9" height="7.00" fill="#c4c4c4"/><rect x="112.88" y="108.50" width="4.9" height="7.00" fill="#c4c4c4"/><rect x="120.25" y="109.80" width="4.9" height="5.70" fill="#c4c4c4"/><rect x="127.62" y="109.80" width="4.9" height="5.70" fill="#c4c4c4"/><rect x="134.99" y="109.80" width="4.9" height="5.70" fill="#c4c4c4"/><rect x="142.36" y="106.50" width="4.9" height="9.00" fill="#c4c4c4"/><rect x="149.73" y="108.50" width="4.9" height="7.00" fill="#c4c4c4"/><rect x="157.10" y="108.50" width="4.9" height="7.00" fill="#c4c4c4"/><rect x="164.47" y="107.00" width="4.9" height="8.50" fill="#c4c4c4"/><rect x="171.84" y="110.70" width="4.9" height="4.80" fill="#c4c4c4"/><rect x="179.21" y="111.30" width="4.9" height="4.20" fill="#c4c4c4"/><rect x="186.58" y="113.80" width="4.9" height="1.70" fill="#c4c4c4"/></svg>
<div class="ab" style="left:918.5px;top:428.5px;width:83px;height:24px;background:#fff;border:1px solid #dcdcdc;border-radius:3px"></div>
<div class="ab" style="left:922.5px;top:435.5px;width:10px;height:10px;border-radius:50%;background:#d0106a"></div>
<div class="t" style="left:937.0px;top:434.8px;font-size:11.5px;color:#333;font-weight:normal;letter-spacing:0.00px;transform:scaleX(0.8363);transform-origin:0 0;">BA:TEMP.1</div>
<svg style="left:990.5px;top:438.5px;" width="8" height="4.5" viewBox="0 0 8 4.5"><polygon points="0,0 8,0 4.0,4.5" fill="#888"/></svg>
<div class="ab" style="left:1121px;top:545px;width:201px;height:117px;background:#fff;border:1px solid #e8e8e8"></div>
<div class="ab" style="left:1128.5px;top:553px;width:69px;height:24.5px;background:#fff;border:1px solid #dcdcdc;border-radius:3px"></div>
<div class="ab" style="left:1132.5px;top:560px;width:10px;height:10px;border-radius:50%;background:#2e8b12"></div>
<div class="t" style="left:1147.0px;top:559.3px;font-size:11.5px;color:#333;font-weight:normal;letter-spacing:0.00px;transform:scaleX(0.8185);transform-origin:0 0;">ACTIVE</div>
<svg style="left:1185px;top:563px;" width="8" height="4.5" viewBox="0 0 8 4.5"><polygon points="0,0 8,0 4.0,4.5" fill="#888"/></svg>
<svg style="left:1201px;top:588px;" width="41" height="32" viewBox="0 0 41 32"><rect x="23" y="5" width="17" height="26.5" fill="#e2e2e2"/><path d="M0,29 H20.5 V2.5 H40" fill="none" stroke="#6e6e6e" stroke-width="5"/></svg>
<!--SCATTER-->
<svg style="left:0px;top:0px;" width="1380" height="900" viewBox="0 0 1380 900"><line x1="500.5" y1="298" x2="500.5" y2="410.3" stroke="#e6e6e6" stroke-width="1"/><line x1="544.9" y1="298" x2="544.9" y2="410.3" stroke="#e6e6e6" stroke-width="1"/><line x1="589.2" y1="298" x2="589.2" y2="410.3" stroke="#e6e6e6" stroke-width="1"/><line x1="633.5" y1="298" x2="633.5" y2="410.3" stroke="#e6e6e6" stroke-width="1"/><line x1="677.9" y1="298" x2="677.9" y2="410.3" stroke="#e6e6e6" stroke-width="1"/><line x1="687.2" y1="298" x2="687.2" y2="410.3" stroke="#e6e6e6" stroke-width="1"/><line x1="495.2" y1="405.5" x2="692.4" y2="405.5" stroke="#e6e6e6" stroke-width="1"/><line x1="495.2" y1="383.6" x2="692.4" y2="383.6" stroke="#e6e6e6" stroke-width="1"/><line x1="495.2" y1="361.8" x2="692.4" y2="361.8" stroke="#e6e6e6" stroke-width="1"/><line x1="495.2" y1="339.9" x2="692.4" y2="339.9" stroke="#e6e6e6" stroke-width="1"/><line x1="495.2" y1="318.1" x2="692.4" y2="318.1" stroke="#e6e6e6" stroke-width="1"/><line x1="495.2" y1="303.2" x2="692.4" y2="303.2" stroke="#e6e6e6" stroke-width="1"/><line x1="500.5" y1="422" x2="500.5" y2="534.3" stroke="#e6e6e6" stroke-width="1"/><line x1="544.9" y1="422" x2="544.9" y2="534.3" stroke="#e6e6e6" stroke-width="1"/><line x1="589.2" y1="422" x2="589.2" y2="534.3" stroke="#e6e6e6" stroke-width="1"/><line x1="633.5" y1="422" x2="633.5" y2="534.3" stroke="#e6e6e6" stroke-width="1"/><line x1="677.9" y1="422" x2="677.9" y2="534.3" stroke="#e6e6e6" stroke-width="1"/><line x1="687.2" y1="422" x2="687.2" y2="534.3" stroke="#e6e6e6" stroke-width="1"/><line x1="495.2" y1="530.4" x2="692.4" y2="530.4" stroke="#e6e6e6" stroke-width="1"/><line x1="495.2" y1="510.8" x2="692.4" y2="510.8" stroke="#e6e6e6" stroke-width="1"/><line x1="495.2" y1="491.1" x2="692.4" y2="491.1" stroke="#e6e6e6" stroke-width="1"/><line x1="495.2" y1="471.5" x2="692.4" y2="471.5" stroke="#e6e6e6" stroke-width="1"/><line x1="495.2" y1="451.9" x2="692.4" y2="451.9" stroke="#e6e6e6" stroke-width="1"/><line x1="495.2" y1="428.3" x2="692.4" y2="428.3" stroke="#e6e6e6" stroke-width="1"/><line x1="709.1" y1="422" x2="709.1" y2="534.3" stroke="#e6e6e6" stroke-width="1"/><line x1="749.0" y1="422" x2="749.0" y2="534.3" stroke="#e6e6e6" stroke-width="1"/><line x1="788.9" y1="422" x2="788.9" y2="534.3" stroke="#e6e6e6" stroke-width="1"/><line x1="828.8" y1="422" x2="828.8" y2="534.3" stroke="#e6e6e6" stroke-width="1"/><line x1="868.7" y1="422" x2="868.7" y2="534.3" stroke="#e6e6e6" stroke-width="1"/><line x1="895.8" y1="422" x2="895.8" y2="534.3" stroke="#e6e6e6" stroke-width="1"/><line x1="704.2" y1="530.4" x2="901.6" y2="530.4" stroke="#e6e6e6" stroke-width="1"/><line x1="704.2" y1="510.8" x2="901.6" y2="510.8" stroke="#e6e6e6" stroke-width="1"/><line x1="704.2" y1="491.1" x2="901.6" y2="491.1" stroke="#e6e6e6" stroke-width="1"/><line x1="704.2" y1="471.5" x2="901.6" y2="471.5" stroke="#e6e6e6" stroke-width="1"/><line x1="704.2" y1="451.9" x2="901.6" y2="451.9" stroke="#e6e6e6" stroke-width="1"/><line x1="704.2" y1="428.3" x2="901.6" y2="428.3" stroke="#e6e6e6" stroke-width="1"/><line x1="500.5" y1="546.5" x2="500.5" y2="658.8" stroke="#e6e6e6" stroke-width="1"/><line x1="544.9" y1="546.5" x2="544.9" y2="658.8" stroke="#e6e6e6" stroke-width="1"/><line x1="589.2" y1="546.5" x2="589.2" y2="658.8" stroke="#e6e6e6" stroke-width="1"/><line x1="633.5" y1="546.5" x2="633.5" y2="658.8" stroke="#e6e6e6" stroke-width="1"/><line x1="677.9" y1="546.5" x2="677.9" y2="658.8" stroke="#e6e6e6" stroke-width="1"/><line x1="687.2" y1="546.5" x2="687.2" y2="658.8" stroke="#e6e6e6" stroke-width="1"/><line x1="495.2" y1="552.2" x2="692.4" y2="552.2" stroke="#e6e6e6" stroke-width="1"/><line x1="495.2" y1="654.7" x2="692.4" y2="654.7" stroke="#e6e6e6" stroke-width="1"/><line x1="709.1" y1="546.5" x2="709.1" y2="658.8" stroke="#e6e6e6" stroke-width="1"/><line x1="749.0" y1="546.5" x2="749.0" y2="658.8" stroke="#e6e6e6" stroke-width="1"/><line x1="788.9" y1="546.5" x2="788.9" y2="658.8" stroke="#e6e6e6" stroke-width="1"/><line x1="828.8" y1="546.5" x2="828.8" y2="658.8" stroke="#e6e6e6" stroke-width="1"/><line x1="868.7" y1="546.5" x2="868.7" y2="658.8" stroke="#e6e6e6" stroke-width="1"/><line x1="895.8" y1="546.5" x2="895.8" y2="658.8" stroke="#e6e6e6" stroke-width="1"/><line x1="704.2" y1="552.2" x2="901.6" y2="552.2" stroke="#e6e6e6" stroke-width="1"/><line x1="704.2" y1="654.7" x2="901.6" y2="654.7" stroke="#e6e6e6" stroke-width="1"/><line x1="919.2" y1="546.5" x2="919.2" y2="658.8" stroke="#e6e6e6" stroke-width="1"/><line x1="954.9" y1="546.5" x2="954.9" y2="658.8" stroke="#e6e6e6" stroke-width="1"/><line x1="990.6" y1="546.5" x2="990.6" y2="658.8" stroke="#e6e6e6" stroke-width="1"/><line x1="1026.3" y1="546.5" x2="1026.3" y2="658.8" stroke="#e6e6e6" stroke-width="1"/><line x1="1062.0" y1="546.5" x2="1062.0" y2="658.8" stroke="#e6e6e6" stroke-width="1"/><line x1="1104.8" y1="546.5" x2="1104.8" y2="658.8" stroke="#e6e6e6" stroke-width="1"/><line x1="913.3" y1="552.2" x2="1110.6" y2="552.2" stroke="#e6e6e6" stroke-width="1"/><line x1="913.3" y1="654.7" x2="1110.6" y2="654.7" stroke="#e6e6e6" stroke-width="1"/><circle cx="540.6" cy="397.6" r="2.05" fill="#96826e" fill-opacity="0.78"/><circle cx="524.5" cy="399.3" r="2.05" fill="#3e78be" fill-opacity="0.78"/><circle cx="548.9" cy="394.4" r="2.05" fill="#cd8c55" fill-opacity="0.78"/><circle cx="535.5" cy="397.8" r="2.05" fill="#3e78be" fill-opacity="0.78"/><circle cx="543.0" cy="392.6" r="2.05" fill="#3e78be" fill-opacity="0.78"/><circle cx="510.9" cy="404.0" r="2.05" fill="#96826e" fill-opacity="0.78"/><circle cx="545.5" cy="394.5" r="2.05" fill="#cd8c55" fill-opacity="0.78"/><circle cx="516.2" cy="401.7" r="2.05" fill="#96826e" fill-opacity="0.78"/><circle cx="536.3" cy="399.9" r="2.05" fill="#3e78be" fill-opacity="0.78"/><circle cx="569.6" cy="391.6" r="2.05" fill="#cd8c55" fill-opacity="0.78"/><circle cx="574.1" cy="390.1" r="2.05" fill="#f28523" fill-opacity="0.78"/><circle cx="504.1" cy="402.3" r="2.05" fill="#3e78be" fill-opacity="0.78"/><circle cx="549.0" cy="395.7" r="2.05" fill="#3e78be" fill-opacity="0.78"/><circle cx="543.4" cy="398.1" r="2.05" fill="#f28523" fill-opacity="0.78"/><circle cx="569.1" cy="387.9" r="2.05" fill="#96826e" fill-opacity="0.78"/><circle cx="519.8" cy="403.1" r="2.05" fill="#cd8c55" fill-opacity="0.78"/><circle cx="513.4" cy="402.9" r="2.05" fill="#96826e" fill-opacity="0.78"/><circle cx="582.8" cy="387.5" r="2.05" fill="#96826e" fill-opacity="0.78"/><circle cx="584.1" cy="387.9" r="2.05" fill="#3e78be" fill-opacity="0.78"/><circle cx="518.3" cy="401.4" r="2.05" fill="#3e78be" fill-opacity="0.78"/><circle cx="531.8" cy="398.9" r="2.05" fill="#f28523" fill-opacity="0.78"/><circle cx="513.1" cy="404.1" r="2.05" fill="#cd8c55" fill-opacity="0.78"/><circle cx="567.3" cy="392.1" r="2.05" fill="#f28523" fill-opacity="0.78"/><circle cx="557.9" cy="394.4" r="2.05" fill="#96826e" fill-opacity="0.78"/><circle cx="504.0" cy="405.2" r="2.05" fill="#f28523" fill-opacity="0.78"/><circle cx="546.1" cy="392.6" r="2.05" fill="#96826e" fill-opacity="0.78"/><circle cx="518.0" cy="403.8" r="2.05" fill="#f28523" fill-opacity="0.78"/><circle cx="548.8" cy="394.8" r="2.05" fill="#3e78be" fill-opacity="0.78"/><circle cx="582.2" cy="386.8" r="2.05" fill="#3e78be" fill-opacity="0.78"/><circle cx="521.7" cy="400.5" r="2.05" fill="#f28523" fill-opacity="0.78"/><circle cx="503.9" cy="405.4" r="2.05" fill="#96826e" fill-opacity="0.78"/><circle cx="512.4" cy="403.5" r="2.05" fill="#cd8c55" fill-opacity="0.78"/><circle cx="505.9" cy="403.8" r="2.05" fill="#f28523" fill-opacity="0.78"/><circle cx="569.8" cy="391.2" r="2.05" fill="#3e78be" fill-opacity="0.78"/><circle cx="521.5" cy="401.2" r="2.05" fill="#3e78be" fill-opacity="0.78"/><circle cx="527.0" cy="398.9" r="2.05" fill="#3e78be" fill-opacity="0.78"/><circle cx="555.8" cy="393.0" r="2.05" fill="#cd8c55" fill-opacity="0.78"/><circle cx="534.5" cy="398.9" r="2.05" fill="#f28523" fill-opacity="0.78"/><circle cx="504.5" cy="404.0" r="2.05" fill="#3e78be" fill-opacity="0.78"/><circle cx="553.3" cy="393.3" r="2.05" fill="#96826e" fill-opacity="0.78"/><circle cx="574.8" cy="387.9" r="2.05" fill="#96826e" fill-opacity="0.78"/><circle cx="544.5" cy="397.3" r="2.05" fill="#96826e" fill-opacity="0.78"/><circle cx="567.6" cy="389.3" r="2.05" fill="#f28523" fill-opacity="0.78"/><circle cx="527.7" cy="398.9" r="2.05" fill="#f28523" fill-opacity="0.78"/><circle cx="555.9" cy="393.3" r="2.05" fill="#cd8c55" fill-opacity="0.78"/><circle cx="564.5" cy="391.9" r="2.05" fill="#96826e" fill-opacity="0.78"/><circle cx="555.9" cy="391.9" r="2.05" fill="#f28523" fill-opacity="0.78"/><circle cx="522.5" cy="402.1" r="2.05" fill="#96826e" fill-opacity="0.78"/><circle cx="525.2" cy="400.4" r="2.05" fill="#3e78be" fill-opacity="0.78"/><circle cx="576.4" cy="390.0" r="2.05" fill="#96826e" fill-opacity="0.78"/><circle cx="582.7" cy="387.8" r="2.05" fill="#cd8c55" fill-opacity="0.78"/><circle cx="515.0" cy="401.5" r="2.05" fill="#3e78be" fill-opacity="0.78"/><circle cx="533.4" cy="400.2" r="2.05" fill="#f28523" fill-opacity="0.78"/><circle cx="573.8" cy="389.3" r="2.05" fill="#96826e" fill-opacity="0.78"/><circle cx="568.2" cy="390.7" r="2.05" fill="#3e78be" fill-opacity="0.78"/><circle cx="508.2" cy="404.8" r="2.05" fill="#f28523" fill-opacity="0.78"/><circle cx="537.6" cy="397.6" r="2.05" fill="#f28523" fill-opacity="0.78"/><circle cx="544.4" cy="397.1" r="2.05" fill="#f28523" fill-opacity="0.78"/><circle cx="528.6" cy="399.4" r="2.05" fill="#f28523" fill-opacity="0.78"/><circle cx="514.0" cy="401.1" r="2.05" fill="#3e78be" fill-opacity="0.78"/><circle cx="532.9" cy="399.0" r="2.05" fill="#f28523" fill-opacity="0.78"/><circle cx="575.4" cy="388.7" r="2.05" fill="#f28523" fill-opacity="0.78"/><circle cx="545.3" cy="396.4" r="2.05" fill="#f28523" fill-opacity="0.78"/><circle cx="544.9" cy="396.5" r="2.05" fill="#3e78be" fill-opacity="0.78"/><circle cx="541.3" cy="396.8" r="2.05" fill="#cd8c55" fill-opacity="0.78"/><circle cx="513.8" cy="402.3" r="2.05" fill="#3e78be" fill-opacity="0.78"/><circle cx="558.0" cy="394.1" r="2.05" fill="#f28523" fill-opacity="0.78"/><circle cx="569.0" cy="390.5" r="2.05" fill="#3e78be" fill-opacity="0.78"/><circle cx="542.3" cy="396.4" r="2.05" fill="#3e78be" fill-opacity="0.78"/><circle cx="570.4" cy="389.4" r="2.05" fill="#cd8c55" fill-opacity="0.78"/><circle cx="510.3" cy="402.4" r="2.05" fill="#f28523" fill-opacity="0.78"/><circle cx="511.5" cy="400.9" r="2.05" fill="#cd8c55" fill-opacity="0.78"/><circle cx="526.8" cy="399.2" r="2.05" fill="#96826e" fill-opacity="0.78"/><circle cx="544.3" cy="395.9" r="2.05" fill="#3e78be" fill-opacity="0.78"/><circle cx="519.2" cy="402.2" r="2.05" fill="#f28523" fill-opacity="0.78"/><circle cx="550.5" cy="390.4" r="2.05" fill="#3e78be" fill-opacity="0.78"/><circle cx="589.0" cy="388.4" r="2.05" fill="#cd8c55" fill-opacity="0.78"/><circle cx="550.6" cy="396.0" r="2.05" fill="#3e78be" fill-opacity="0.78"/><circle cx="513.4" cy="405.1" r="2.05" fill="#96826e" fill-opacity="0.78"/><circle cx="503.3" cy="403.1" r="2.05" fill="#cd8c55" fill-opacity="0.78"/><circle cx="505.4" cy="405.5" r="2.05" fill="#3e78be" fill-opacity="0.78"/><circle cx="506.9" cy="403.9" r="2.05" fill="#f28523" fill-opacity="0.78"/><circle cx="505.8" cy="402.0" r="2.05" fill="#3e78be" fill-opacity="0.78"/><circle cx="505.5" cy="403.6" r="2.05" fill="#f28523" fill-opacity="0.78"/><circle cx="503.0" cy="405.6" r="2.05" fill="#96826e" fill-opacity="0.78"/><circle cx="500.2" cy="404.9" r="2.05" fill="#f28523" fill-opacity="0.78"/><circle cx="510.1" cy="405.9" r="2.05" fill="#96826e" fill-opacity="0.78"/><circle cx="505.6" cy="404.3" r="2.05" fill="#3e78be" fill-opacity="0.78"/><circle cx="511.6" cy="405.4" r="2.05" fill="#3e78be" fill-opacity="0.78"/><circle cx="502.5" cy="403.8" r="2.05" fill="#cd8c55" fill-opacity="0.78"/><circle cx="503.5" cy="405.2" r="2.05" fill="#3e78be" fill-opacity="0.78"/><circle cx="507.0" cy="404.0" r="2.05" fill="#96826e" fill-opacity="0.78"/><circle cx="587.1" cy="380.3" r="2.05" fill="#96826e" fill-opacity="0.78"/><circle cx="597.7" cy="371.3" r="2.05" fill="#3e78be" fill-opacity="0.78"/><circle cx="587.5" cy="378.1" r="2.05" fill="#3e78be" fill-opacity="0.78"/><circle cx="586.5" cy="373.3" r="2.05" fill="#96826e" fill-opacity="0.78"/><circle cx="594.3" cy="387.8" r="2.05" fill="#f28523" fill-opacity="0.78"/><circle cx="595.2" cy="367.3" r="2.05" fill="#f28523" fill-opacity="0.78"/><circle cx="584.2" cy="384.0" r="2.05" fill="#3e78be" fill-opacity="0.78"/><circle cx="592.1" cy="372.8" r="2.05" fill="#cd8c55" fill-opacity="0.78"/><circle cx="594.5" cy="365.4" r="2.05" fill="#cd8c55" fill-opacity="0.78"/><circle cx="579.8" cy="387.6" r="2.05" fill="#f28523" fill-opacity="0.78"/><circle cx="593.5" cy="368.1" r="2.05" fill="#cd8c55" fill-opacity="0.78"/><circle cx="591.4" cy="370.8" r="2.05" fill="#3e78be" fill-opacity="0.78"/><circle cx="583.6" cy="378.6" r="2.05" fill="#3e78be" fill-opacity="0.78"/><circle cx="586.5" cy="381.4" r="2.05" fill="#f28523" fill-opacity="0.78"/><circle cx="583.7" cy="373.0" r="2.05" fill="#3e78be" fill-opacity="0.78"/><circle cx="585.7" cy="376.5" r="2.05" fill="#cd8c55" fill-opacity="0.78"/><circle cx="593.8" cy="372.2" r="2.05" fill="#3e78be" fill-opacity="0.78"/><circle cx="582.3" cy="380.3" r="2.05" fill="#cd8c55" fill-opacity="0.78"/><circle cx="595.4" cy="372.7" r="2.05" fill="#3e78be" fill-opacity="0.78"/><circle cx="586.0" cy="377.7" r="2.05" fill="#3e78be" fill-opacity="0.78"/><circle cx="582.7" cy="381.1" r="2.05" fill="#3e78be" fill-opacity="0.78"/><circle cx="594.7" cy="366.3" r="2.05" fill="#3e78be" fill-opacity="0.78"/><circle cx="594.5" cy="369.8" r="2.05" fill="#96826e" fill-opacity="0.78"/><circle cx="584.0" cy="388.6" r="2.05" fill="#f28523" fill-opacity="0.78"/><circle cx="588.1" cy="373.8" r="2.05" fill="#3e78be" fill-opacity="0.78"/><circle cx="592.4" cy="378.7" r="2.05" fill="#96826e" fill-opacity="0.78"/><circle cx="588.9" cy="372.6" r="2.05" fill="#96826e" fill-opacity="0.78"/><circle cx="594.7" cy="373.7" r="2.05" fill="#cd8c55" fill-opacity="0.78"/><circle cx="588.2" cy="381.8" r="2.05" fill="#f28523" fill-opacity="0.78"/><circle cx="596.3" cy="368.7" r="2.05" fill="#3e78be" fill-opacity="0.78"/><circle cx="597.6" cy="376.1" r="2.05" fill="#3e78be" fill-opacity="0.78"/><circle cx="591.4" cy="381.4" r="2.05" fill="#f28523" fill-opacity="0.78"/><circle cx="584.0" cy="375.0" r="2.05" fill="#cd8c55" fill-opacity="0.78"/><circle cx="595.0" cy="375.3" r="2.05" fill="#3e78be" fill-opacity="0.78"/><circle cx="587.6" cy="382.9" r="2.05" fill="#cd8c55" fill-opacity="0.78"/><circle cx="591.0" cy="375.9" r="2.05" fill="#96826e" fill-opacity="0.78"/><circle cx="595.4" cy="368.8" r="2.05" fill="#3e78be" fill-opacity="0.78"/><circle cx="596.7" cy="372.1" r="2.05" fill="#96826e" fill-opacity="0.78"/><circle cx="589.2" cy="377.1" r="2.05" fill="#cd8c55" fill-opacity="0.78"/><circle cx="599.6" cy="366.5" r="2.05" fill="#cd8c55" fill-opacity="0.78"/><circle cx="591.5" cy="379.1" r="2.05" fill="#f28523" fill-opacity="0.78"/><circle cx="588.9" cy="378.5" r="2.05" fill="#3e78be" fill-opacity="0.78"/><circle cx="584.8" cy="388.0" r="2.05" fill="#f28523" fill-opacity="0.78"/><circle cx="593.1" cy="373.9" r="2.05" fill="#96826e" fill-opacity="0.78"/><circle cx="594.4" cy="385.8" r="2.05" fill="#cd8c55" fill-opacity="0.78"/><circle cx="594.7" cy="387.5" r="2.05" fill="#96826e" fill-opacity="0.78"/><circle cx="595.6" cy="361.4" r="2.05" fill="#96826e" fill-opacity="0.78"/><circle cx="595.4" cy="368.4" r="2.05" fill="#f28523" fill-opacity="0.78"/><circle cx="589.3" cy="378.3" r="2.05" fill="#f28523" fill-opacity="0.78"/><circle cx="594.0" cy="369.3" r="2.05" fill="#3e78be" fill-opacity="0.78"/><circle cx="596.6" cy="372.5" r="2.05" fill="#3e78be" fill-opacity="0.78"/><circle cx="601.2" cy="369.7" r="2.05" fill="#96826e" fill-opacity="0.78"/><circle cx="593.2" cy="379.6" r="2.05" fill="#3e78be" fill-opacity="0.78"/><circle cx="589.5" cy="378.8" r="2.05" fill="#96826e" fill-opacity="0.78"/><circle cx="589.2" cy="381.4" r="2.05" fill="#f28523" fill-opacity="0.78"/><circle cx="642.5" cy="360.3" r="2.05" fill="#3e78be" fill-opacity="0.78"/><circle cx="600.9" cy="359.2" r="2.05" fill="#3e78be" fill-opacity="0.78"/><circle cx="606.5" cy="364.6" r="2.05" fill="#96826e" fill-opacity="0.78"/><circle cx="649.3" cy="360.2" r="2.05" fill="#96826e" fill-opacity="0.78"/><circle cx="654.5" cy="359.3" r="2.05" fill="#96826e" fill-opacity="0.78"/><circle cx="630.8" cy="359.8" r="2.05" fill="#cd8c55" fill-opacity="0.78"/><circle cx="674.7" cy="358.8" r="2.05" fill="#3e78be" fill-opacity="0.78"/><circle cx="666.6" cy="355.7" r="2.05" fill="#f28523" fill-opacity="0.78"/><circle cx="647.2" cy="361.7" r="2.05" fill="#cd8c55" fill-opacity="0.78"/><circle cx="678.0" cy="359.9" r="2.05" fill="#f28523" fill-opacity="0.78"/><circle cx="606.3" cy="361.1" r="2.05" fill="#96826e" fill-opacity="0.78"/><circle cx="642.2" cy="363.3" r="2.05" fill="#3e78be" fill-opacity="0.78"/><circle cx="649.3" cy="358.7" r="2.05" fill="#f28523" fill-opacity="0.78"/><circle cx="663.8" cy="361.2" r="2.05" fill="#f28523" fill-opacity="0.78"/><circle cx="644.9" cy="362.5" r="2.05" fill="#f28523" fill-opacity="0.78"/><circle cx="617.3" cy="360.2" r="2.05" fill="#f28523" fill-opacity="0.78"/><circle cx="623.9" cy="363.2" r="2.05" fill="#3e78be" fill-opacity="0.78"/><circle cx="646.5" cy="358.8" r="2.05" fill="#3e78be" fill-opacity="0.78"/><circle cx="602.0" cy="361.9" r="2.05" fill="#f28523" fill-opacity="0.78"/><circle cx="617.7" cy="361.3" r="2.05" fill="#3e78be" fill-opacity="0.78"/><circle cx="679.6" cy="355.6" r="2.05" fill="#3e78be" fill-opacity="0.78"/><circle cx="666.1" cy="362.0" r="2.05" fill="#96826e" fill-opacity="0.78"/><circle cx="616.0" cy="359.6" r="2.05" fill="#f28523" fill-opacity="0.78"/><circle cx="667.8" cy="358.2" r="2.05" fill="#3e78be" fill-opacity="0.78"/><circle cx="679.2" cy="358.6" r="2.05" fill="#3e78be" fill-opacity="0.78"/><circle cx="666.3" cy="354.6" r="2.05" fill="#cd8c55" fill-opacity="0.78"/><circle cx="595.7" cy="363.8" r="2.05" fill="#3e78be" fill-opacity="0.78"/><circle cx="654.0" cy="358.9" r="2.05" fill="#3e78be" fill-opacity="0.78"/><circle cx="603.7" cy="362.1" r="2.05" fill="#f28523" fill-opacity="0.78"/><circle cx="630.1" cy="359.3" r="2.05" fill="#96826e" fill-opacity="0.78"/><circle cx="634.8" cy="362.8" r="2.05" fill="#f28523" fill-opacity="0.78"/><circle cx="642.5" cy="361.7" r="2.05" fill="#3e78be" fill-opacity="0.78"/><circle cx="607.5" cy="363.9" r="2.05" fill="#f28523" fill-opacity="0.78"/><circle cx="676.4" cy="357.6" r="2.05" fill="#3e78be" fill-opacity="0.78"/><circle cx="628.0" cy="361.6" r="2.05" fill="#cd8c55" fill-opacity="0.78"/><circle cx="665.0" cy="356.3" r="2.05" fill="#f28523" fill-opacity="0.78"/><circle cx="602.7" cy="361.5" r="2.05" fill="#3e78be" fill-opacity="0.78"/><circle cx="629.4" cy="358.3" r="2.05" fill="#3e78be" fill-opacity="0.78"/><circle cx="652.1" cy="357.7" r="2.05" fill="#96826e" fill-opacity="0.78"/><circle cx="599.5" cy="361.3" r="2.05" fill="#f28523" fill-opacity="0.78"/><circle cx="674.5" cy="356.0" r="2.05" fill="#3e78be" fill-opacity="0.78"/><circle cx="595.0" cy="364.0" r="2.05" fill="#96826e" fill-opacity="0.78"/><circle cx="623.1" cy="360.0" r="2.05" fill="#f28523" fill-opacity="0.78"/><circle cx="632.5" cy="357.7" r="2.05" fill="#3e78be" fill-opacity="0.78"/><circle cx="678.3" cy="358.9" r="2.05" fill="#f28523" fill-opacity="0.78"/><circle cx="597.2" cy="365.1" r="2.05" fill="#3e78be" fill-opacity="0.78"/><circle cx="640.7" cy="363.1" r="2.05" fill="#cd8c55" fill-opacity="0.78"/><circle cx="639.6" cy="359.6" r="2.05" fill="#96826e" fill-opacity="0.78"/><circle cx="600.1" cy="361.6" r="2.05" fill="#f28523" fill-opacity="0.78"/><circle cx="676.7" cy="358.0" r="2.05" fill="#3e78be" fill-opacity="0.78"/><circle cx="619.8" cy="359.1" r="2.05" fill="#96826e" fill-opacity="0.78"/><circle cx="629.9" cy="361.1" r="2.05" fill="#f28523" fill-opacity="0.78"/><circle cx="627.2" cy="359.4" r="2.05" fill="#3e78be" fill-opacity="0.78"/><circle cx="637.8" cy="362.9" r="2.05" fill="#f28523" fill-opacity="0.78"/><circle cx="603.3" cy="360.6" r="2.05" fill="#3e78be" fill-opacity="0.78"/><circle cx="660.3" cy="354.2" r="2.05" fill="#3e78be" fill-opacity="0.78"/><circle cx="663.8" cy="360.9" r="2.05" fill="#3e78be" fill-opacity="0.78"/><circle cx="655.2" cy="358.3" r="2.05" fill="#cd8c55" fill-opacity="0.78"/><circle cx="664.7" cy="356.9" r="2.05" fill="#3e78be" fill-opacity="0.78"/><circle cx="657.1" cy="359.9" r="2.05" fill="#96826e" fill-opacity="0.78"/><circle cx="655.3" cy="357.2" r="2.05" fill="#3e78be" fill-opacity="0.78"/><circle cx="625.8" cy="365.8" r="2.05" fill="#3e78be" fill-opacity="0.78"/><circle cx="606.3" cy="362.1" r="2.05" fill="#3e78be" fill-opacity="0.78"/><circle cx="651.4" cy="357.8" r="2.05" fill="#3e78be" fill-opacity="0.78"/><circle cx="677.9" cy="360.3" r="2.05" fill="#cd8c55" fill-opacity="0.78"/><circle cx="605.6" cy="363.6" r="2.05" fill="#cd8c55" fill-opacity="0.78"/><circle cx="616.0" cy="361.3" r="2.05" fill="#96826e" fill-opacity="0.78"/><circle cx="680.9" cy="358.6" r="2.05" fill="#3e78be" fill-opacity="0.78"/><circle cx="670.3" cy="356.4" r="2.05" fill="#f28523" fill-opacity="0.78"/><circle cx="667.6" cy="363.1" r="2.05" fill="#3e78be" fill-opacity="0.78"/><circle cx="674.0" cy="358.0" r="2.05" fill="#f28523" fill-opacity="0.78"/><circle cx="646.8" cy="355.7" r="2.05" fill="#96826e" fill-opacity="0.78"/><circle cx="659.7" cy="363.8" r="2.05" fill="#f28523" fill-opacity="0.78"/><circle cx="659.5" cy="359.6" r="2.05" fill="#3e78be" fill-opacity="0.78"/><circle cx="602.2" cy="362.7" r="2.05" fill="#96826e" fill-opacity="0.78"/><circle cx="648.5" cy="358.7" r="2.05" fill="#3e78be" fill-opacity="0.78"/><circle cx="610.0" cy="359.9" r="2.05" fill="#f28523" fill-opacity="0.78"/><circle cx="618.7" cy="358.8" r="2.05" fill="#cd8c55" fill-opacity="0.78"/><circle cx="623.4" cy="362.7" r="2.05" fill="#96826e" fill-opacity="0.78"/><circle cx="627.0" cy="359.8" r="2.05" fill="#3e78be" fill-opacity="0.78"/><circle cx="604.2" cy="364.3" r="2.05" fill="#f28523" fill-opacity="0.78"/><circle cx="612.0" cy="363.3" r="2.05" fill="#96826e" fill-opacity="0.78"/><circle cx="617.5" cy="358.3" r="2.05" fill="#3e78be" fill-opacity="0.78"/><circle cx="636.2" cy="361.6" r="2.05" fill="#96826e" fill-opacity="0.78"/><circle cx="660.6" cy="356.4" r="2.05" fill="#96826e" fill-opacity="0.78"/><circle cx="669.2" cy="361.3" r="2.05" fill="#f28523" fill-opacity="0.78"/><circle cx="664.7" cy="358.9" r="2.05" fill="#3e78be" fill-opacity="0.78"/><circle cx="627.1" cy="362.4" r="2.05" fill="#f28523" fill-opacity="0.78"/><circle cx="598.1" cy="364.5" r="2.05" fill="#f28523" fill-opacity="0.78"/><circle cx="681.7" cy="359.7" r="2.05" fill="#3e78be" fill-opacity="0.78"/><circle cx="596.6" cy="366.7" r="2.05" fill="#cd8c55" fill-opacity="0.78"/><circle cx="639.8" cy="360.4" r="2.05" fill="#f28523" fill-opacity="0.78"/><circle cx="620.2" cy="363.2" r="2.05" fill="#f28523" fill-opacity="0.78"/><circle cx="625.4" cy="363.5" r="2.05" fill="#f28523" fill-opacity="0.78"/><circle cx="644.9" cy="356.8" r="2.05" fill="#96826e" fill-opacity="0.78"/><circle cx="603.6" cy="360.1" r="2.05" fill="#cd8c55" fill-opacity="0.78"/><circle cx="672.3" cy="358.6" r="2.05" fill="#cd8c55" fill-opacity="0.78"/><circle cx="672.8" cy="357.7" r="2.05" fill="#96826e" fill-opacity="0.78"/><circle cx="679.1" cy="359.7" r="2.05" fill="#3e78be" fill-opacity="0.78"/><circle cx="627.6" cy="356.3" r="2.05" fill="#cd8c55" fill-opacity="0.78"/><circle cx="660.7" cy="360.5" r="2.05" fill="#cd8c55" fill-opacity="0.78"/><circle cx="680.5" cy="361.3" r="2.05" fill="#96826e" fill-opacity="0.78"/><circle cx="671.2" cy="355.9" r="2.05" fill="#f28523" fill-opacity="0.78"/><circle cx="634.3" cy="361.3" r="2.05" fill="#f28523" fill-opacity="0.78"/><circle cx="653.3" cy="359.3" r="2.05" fill="#96826e" fill-opacity="0.78"/><circle cx="621.6" cy="361.3" r="2.05" fill="#96826e" fill-opacity="0.78"/><circle cx="619.4" cy="360.5" r="2.05" fill="#96826e" fill-opacity="0.78"/><circle cx="671.0" cy="355.0" r="2.05" fill="#f28523" fill-opacity="0.78"/><circle cx="685.1" cy="357.3" r="2.05" fill="#3e78be" fill-opacity="0.78"/><circle cx="608.2" cy="360.5" r="2.05" fill="#f28523" fill-opacity="0.78"/><circle cx="675.9" cy="358.5" r="2.05" fill="#cd8c55" fill-opacity="0.78"/><circle cx="666.0" cy="357.6" r="2.05" fill="#f28523" fill-opacity="0.78"/><circle cx="683.1" cy="358.1" r="2.05" fill="#cd8c55" fill-opacity="0.78"/><circle cx="642.0" cy="358.3" r="2.05" fill="#3e78be" fill-opacity="0.78"/><circle cx="665.3" cy="359.9" r="2.05" fill="#cd8c55" fill-opacity="0.78"/><circle cx="673.8" cy="357.4" r="2.05" fill="#f28523" fill-opacity="0.78"/><circle cx="609.6" cy="362.0" r="2.05" fill="#cd8c55" fill-opacity="0.78"/><circle cx="669.4" cy="361.2" r="2.05" fill="#f28523" fill-opacity="0.78"/><circle cx="646.6" cy="361.3" r="2.05" fill="#3e78be" fill-opacity="0.78"/><circle cx="655.4" cy="362.8" r="2.05" fill="#96826e" fill-opacity="0.78"/><circle cx="657.6" cy="359.7" r="2.05" fill="#f28523" fill-opacity="0.78"/><circle cx="622.4" cy="360.6" r="2.05" fill="#f28523" fill-opacity="0.78"/><circle cx="610.0" cy="359.0" r="2.05" fill="#3e78be" fill-opacity="0.78"/><circle cx="619.2" cy="361.5" r="2.05" fill="#3e78be" fill-opacity="0.78"/><circle cx="631.7" cy="364.0" r="2.05" fill="#3e78be" fill-opacity="0.78"/><circle cx="597.5" cy="362.3" r="2.05" fill="#3e78be" fill-opacity="0.78"/><circle cx="646.6" cy="358.6" r="2.05" fill="#cd8c55" fill-opacity="0.78"/><circle cx="622.0" cy="360.1" r="2.05" fill="#96826e" fill-opacity="0.78"/><circle cx="631.7" cy="361.4" r="2.05" fill="#f28523" fill-opacity="0.78"/><circle cx="600.2" cy="359.7" r="2.05" fill="#cd8c55" fill-opacity="0.78"/><circle cx="595.7" cy="362.9" r="2.05" fill="#f28523" fill-opacity="0.78"/><circle cx="671.5" cy="355.8" r="2.05" fill="#f28523" fill-opacity="0.78"/><circle cx="600.0" cy="363.5" r="2.05" fill="#f28523" fill-opacity="0.78"/><circle cx="676.1" cy="362.2" r="2.05" fill="#3e78be" fill-opacity="0.78"/><circle cx="596.8" cy="363.5" r="2.05" fill="#96826e" fill-opacity="0.78"/><circle cx="674.7" cy="358.2" r="2.05" fill="#cd8c55" fill-opacity="0.78"/><circle cx="648.2" cy="360.5" r="2.05" fill="#f28523" fill-opacity="0.78"/><circle cx="671.9" cy="357.4" r="2.05" fill="#f28523" fill-opacity="0.78"/><circle cx="618.4" cy="363.3" r="2.05" fill="#3e78be" fill-opacity="0.78"/><circle cx="625.5" cy="360.8" r="2.05" fill="#96826e" fill-opacity="0.78"/><circle cx="669.5" cy="359.7" r="2.05" fill="#f28523" fill-opacity="0.78"/><circle cx="601.3" cy="362.0" r="2.05" fill="#3e78be" fill-opacity="0.78"/><circle cx="663.6" cy="357.1" r="2.05" fill="#3e78be" fill-opacity="0.78"/><circle cx="595.4" cy="364.3" r="2.05" fill="#96826e" fill-opacity="0.78"/><circle cx="651.8" cy="362.4" r="2.05" fill="#3e78be" fill-opacity="0.78"/><circle cx="604.4" cy="362.2" r="2.05" fill="#3e78be" fill-opacity="0.78"/><circle cx="672.6" cy="357.6" r="2.05" fill="#96826e" fill-opacity="0.78"/><circle cx="637.2" cy="361.6" r="2.05" fill="#cd8c55" fill-opacity="0.78"/><circle cx="608.6" cy="363.3" r="2.05" fill="#cd8c55" fill-opacity="0.78"/><circle cx="633.6" cy="359.0" r="2.05" fill="#f28523" fill-opacity="0.78"/><circle cx="670.9" cy="359.7" r="2.05" fill="#3e78be" fill-opacity="0.78"/><circle cx="660.6" cy="360.0" r="2.05" fill="#3e78be" fill-opacity="0.78"/><circle cx="684.2" cy="355.4" r="2.05" fill="#f28523" fill-opacity="0.78"/><circle cx="669.4" cy="356.6" r="2.05" fill="#3e78be" fill-opacity="0.78"/><circle cx="622.0" cy="358.5" r="2.05" fill="#cd8c55" fill-opacity="0.78"/><circle cx="657.0" cy="362.0" r="2.05" fill="#3e78be" fill-opacity="0.78"/><circle cx="619.9" cy="360.6" r="2.05" fill="#f28523" fill-opacity="0.78"/><circle cx="666.7" cy="358.3" r="2.05" fill="#3e78be" fill-opacity="0.78"/><circle cx="623.2" cy="359.3" r="2.05" fill="#f28523" fill-opacity="0.78"/><circle cx="647.7" cy="358.6" r="2.05" fill="#3e78be" fill-opacity="0.78"/><circle cx="669.4" cy="360.2" r="2.05" fill="#f28523" fill-opacity="0.78"/><circle cx="612.9" cy="364.0" r="2.05" fill="#cd8c55" fill-opacity="0.78"/><circle cx="661.1" cy="357.6" r="2.05" fill="#f28523" fill-opacity="0.78"/><circle cx="626.2" cy="363.4" r="2.05" fill="#3e78be" fill-opacity="0.78"/><circle cx="596.1" cy="366.5" r="2.05" fill="#cd8c55" fill-opacity="0.78"/><circle cx="638.8" cy="358.8" r="2.05" fill="#cd8c55" fill-opacity="0.78"/><circle cx="614.4" cy="364.7" r="2.05" fill="#96826e" fill-opacity="0.78"/><circle cx="621.2" cy="360.2" r="2.05" fill="#cd8c55" fill-opacity="0.78"/><circle cx="637.6" cy="361.0" r="2.05" fill="#cd8c55" fill-opacity="0.78"/><circle cx="681.3" cy="355.7" r="2.05" fill="#f28523" fill-opacity="0.78"/><circle cx="675.2" cy="358.9" r="2.05" fill="#f28523" fill-opacity="0.78"/><circle cx="674.6" cy="358.6" r="2.05" fill="#f28523" fill-opacity="0.78"/><circle cx="637.8" cy="356.5" r="2.05" fill="#96826e" fill-opacity="0.78"/><circle cx="647.2" cy="358.9" r="2.05" fill="#3e78be" fill-opacity="0.78"/><circle cx="596.8" cy="364.5" r="2.05" fill="#cd8c55" fill-opacity="0.78"/><circle cx="606.4" cy="360.0" r="2.05" fill="#f28523" fill-opacity="0.78"/><circle cx="668.0" cy="358.1" r="2.05" fill="#3e78be" fill-opacity="0.78"/><circle cx="666.2" cy="360.7" r="2.05" fill="#3e78be" fill-opacity="0.78"/><circle cx="671.7" cy="356.8" r="2.05" fill="#3e78be" fill-opacity="0.78"/><circle cx="599.6" cy="365.3" r="2.05" fill="#3e78be" fill-opacity="0.78"/><circle cx="683.1" cy="354.2" r="2.05" fill="#96826e" fill-opacity="0.78"/><circle cx="673.0" cy="335.9" r="2.05" fill="#3e78be" fill-opacity="0.78"/><circle cx="684.1" cy="347.9" r="2.05" fill="#f28523" fill-opacity="0.78"/><circle cx="664.6" cy="327.9" r="2.05" fill="#f28523" fill-opacity="0.78"/><circle cx="668.8" cy="328.8" r="2.05" fill="#f28523" fill-opacity="0.78"/><circle cx="667.9" cy="344.8" r="2.05" fill="#cd8c55" fill-opacity="0.78"/><circle cx="667.0" cy="330.2" r="2.05" fill="#96826e" fill-opacity="0.78"/><circle cx="682.3" cy="325.6" r="2.05" fill="#cd8c55" fill-opacity="0.78"/><circle cx="678.0" cy="354.9" r="2.05" fill="#96826e" fill-opacity="0.78"/><circle cx="682.3" cy="346.5" r="2.05" fill="#cd8c55" fill-opacity="0.78"/><circle cx="684.9" cy="352.7" r="2.05" fill="#3e78be" fill-opacity="0.78"/><circle cx="682.0" cy="350.4" r="2.05" fill="#cd8c55" fill-opacity="0.78"/><circle cx="677.0" cy="349.3" r="2.05" fill="#cd8c55" fill-opacity="0.78"/><circle cx="679.6" cy="358.0" r="2.05" fill="#3e78be" fill-opacity="0.78"/><circle cx="685.1" cy="341.1" r="2.05" fill="#3e78be" fill-opacity="0.78"/><circle cx="665.6" cy="334.5" r="2.05" fill="#96826e" fill-opacity="0.78"/><circle cx="674.9" cy="356.5" r="2.05" fill="#f28523" fill-opacity="0.78"/><circle cx="666.5" cy="342.1" r="2.05" fill="#f28523" fill-opacity="0.78"/><circle cx="671.3" cy="328.6" r="2.05" fill="#f28523" fill-opacity="0.78"/><circle cx="684.4" cy="354.9" r="2.05" fill="#96826e" fill-opacity="0.78"/><circle cx="671.9" cy="322.4" r="2.05" fill="#96826e" fill-opacity="0.78"/><circle cx="672.9" cy="325.9" r="2.05" fill="#f28523" fill-opacity="0.78"/><circle cx="678.3" cy="339.8" r="2.05" fill="#3e78be" fill-opacity="0.78"/><circle cx="684.2" cy="324.4" r="2.05" fill="#cd8c55" fill-opacity="0.78"/><circle cx="678.0" cy="351.3" r="2.05" fill="#f28523" fill-opacity="0.78"/><circle cx="671.3" cy="342.3" r="2.05" fill="#3e78be" fill-opacity="0.78"/><circle cx="680.2" cy="336.8" r="2.05" fill="#f28523" fill-opacity="0.78"/><circle cx="670.0" cy="346.4" r="2.05" fill="#3e78be" fill-opacity="0.78"/><circle cx="677.6" cy="336.6" r="2.05" fill="#f28523" fill-opacity="0.78"/><circle cx="680.9" cy="334.9" r="2.05" fill="#f28523" fill-opacity="0.78"/><circle cx="670.7" cy="332.7" r="2.05" fill="#cd8c55" fill-opacity="0.78"/><circle cx="675.6" cy="341.8" r="2.05" fill="#cd8c55" fill-opacity="0.78"/><circle cx="677.5" cy="347.7" r="2.05" fill="#f28523" fill-opacity="0.78"/><circle cx="678.0" cy="328.8" r="2.05" fill="#f28523" fill-opacity="0.78"/><circle cx="677.9" cy="353.2" r="2.05" fill="#3e78be" fill-opacity="0.78"/><circle cx="680.8" cy="362.5" r="2.05" fill="#3e78be" fill-opacity="0.78"/><circle cx="683.3" cy="357.8" r="2.05" fill="#3e78be" fill-opacity="0.78"/><circle cx="666.8" cy="326.5" r="2.05" fill="#96826e" fill-opacity="0.78"/><circle cx="667.9" cy="313.4" r="2.05" fill="#f28523" fill-opacity="0.78"/><circle cx="683.7" cy="346.8" r="2.05" fill="#96826e" fill-opacity="0.78"/><circle cx="672.5" cy="329.4" r="2.05" fill="#cd8c55" fill-opacity="0.78"/><circle cx="673.2" cy="338.9" r="2.05" fill="#3e78be" fill-opacity="0.78"/><circle cx="671.9" cy="325.4" r="2.05" fill="#3e78be" fill-opacity="0.78"/><circle cx="679.7" cy="357.0" r="2.05" fill="#96826e" fill-opacity="0.78"/><circle cx="676.1" cy="336.4" r="2.05" fill="#3e78be" fill-opacity="0.78"/><circle cx="670.3" cy="324.9" r="2.05" fill="#f28523" fill-opacity="0.78"/><circle cx="670.6" cy="343.3" r="2.05" fill="#f28523" fill-opacity="0.78"/><circle cx="686.2" cy="337.1" r="2.05" fill="#3e78be" fill-opacity="0.78"/><circle cx="676.3" cy="354.0" r="2.05" fill="#f28523" fill-opacity="0.78"/><circle cx="675.9" cy="330.7" r="2.05" fill="#96826e" fill-opacity="0.78"/><circle cx="676.2" cy="327.5" r="2.05" fill="#f28523" fill-opacity="0.78"/><circle cx="672.7" cy="339.6" r="2.05" fill="#f28523" fill-opacity="0.78"/><circle cx="675.6" cy="340.5" r="2.05" fill="#96826e" fill-opacity="0.78"/><circle cx="679.5" cy="351.1" r="2.05" fill="#f28523" fill-opacity="0.78"/><circle cx="670.9" cy="340.5" r="2.05" fill="#f28523" fill-opacity="0.78"/><circle cx="677.5" cy="340.1" r="2.05" fill="#3e78be" fill-opacity="0.78"/><circle cx="681.6" cy="338.0" r="2.05" fill="#f28523" fill-opacity="0.78"/><circle cx="674.6" cy="350.8" r="2.05" fill="#96826e" fill-opacity="0.78"/><circle cx="667.6" cy="334.7" r="2.05" fill="#3e78be" fill-opacity="0.78"/><circle cx="681.8" cy="355.0" r="2.05" fill="#f28523" fill-opacity="0.78"/><circle cx="675.8" cy="321.7" r="2.05" fill="#f28523" fill-opacity="0.78"/><circle cx="678.1" cy="349.6" r="2.05" fill="#cd8c55" fill-opacity="0.78"/><circle cx="669.3" cy="337.3" r="2.05" fill="#3e78be" fill-opacity="0.78"/><circle cx="661.4" cy="341.5" r="2.05" fill="#3e78be" fill-opacity="0.78"/><circle cx="681.9" cy="349.3" r="2.05" fill="#f28523" fill-opacity="0.78"/><circle cx="673.8" cy="323.1" r="2.05" fill="#f28523" fill-opacity="0.78"/><circle cx="677.6" cy="341.9" r="2.05" fill="#f28523" fill-opacity="0.78"/><circle cx="674.0" cy="352.0" r="2.05" fill="#f28523" fill-opacity="0.78"/><circle cx="679.2" cy="352.7" r="2.05" fill="#cd8c55" fill-opacity="0.78"/><circle cx="681.2" cy="350.8" r="2.05" fill="#f28523" fill-opacity="0.78"/><circle cx="675.2" cy="330.6" r="2.05" fill="#96826e" fill-opacity="0.78"/><circle cx="672.2" cy="346.7" r="2.05" fill="#96826e" fill-opacity="0.78"/><circle cx="689.0" cy="343.5" r="2.05" fill="#cd8c55" fill-opacity="0.78"/><circle cx="673.2" cy="328.6" r="2.05" fill="#3e78be" fill-opacity="0.78"/><circle cx="679.5" cy="350.6" r="2.05" fill="#cd8c55" fill-opacity="0.78"/><circle cx="632.3" cy="306.8" r="2.05" fill="#f28523" fill-opacity="0.78"/><circle cx="673.1" cy="319.7" r="2.05" fill="#96826e" fill-opacity="0.78"/><circle cx="645.3" cy="309.4" r="2.05" fill="#f28523" fill-opacity="0.78"/><circle cx="650.8" cy="312.1" r="2.05" fill="#f28523" fill-opacity="0.78"/><circle cx="642.8" cy="312.9" r="2.05" fill="#3e78be" fill-opacity="0.78"/><circle cx="655.9" cy="312.1" r="2.05" fill="#3e78be" fill-opacity="0.78"/><circle cx="654.4" cy="315.1" r="2.05" fill="#3e78be" fill-opacity="0.78"/><circle cx="653.6" cy="319.3" r="2.05" fill="#cd8c55" fill-opacity="0.78"/><circle cx="629.2" cy="306.8" r="2.05" fill="#cd8c55" fill-opacity="0.78"/><circle cx="662.9" cy="315.7" r="2.05" fill="#3e78be" fill-opacity="0.78"/><circle cx="653.2" cy="311.8" r="2.05" fill="#f28523" fill-opacity="0.78"/><circle cx="642.1" cy="314.0" r="2.05" fill="#3e78be" fill-opacity="0.78"/><circle cx="648.2" cy="315.4" r="2.05" fill="#96826e" fill-opacity="0.78"/><circle cx="645.1" cy="313.0" r="2.05" fill="#3e78be" fill-opacity="0.78"/><circle cx="650.4" cy="315.8" r="2.05" fill="#f28523" fill-opacity="0.78"/><circle cx="645.4" cy="312.6" r="2.05" fill="#3e78be" fill-opacity="0.78"/><circle cx="647.0" cy="311.8" r="2.05" fill="#3e78be" fill-opacity="0.78"/><circle cx="667.1" cy="321.6" r="2.05" fill="#f28523" fill-opacity="0.78"/><circle cx="644.6" cy="314.9" r="2.05" fill="#96826e" fill-opacity="0.78"/><circle cx="655.9" cy="316.5" r="2.05" fill="#f28523" fill-opacity="0.78"/><circle cx="653.1" cy="315.0" r="2.05" fill="#3e78be" fill-opacity="0.78"/><circle cx="652.3" cy="313.6" r="2.05" fill="#96826e" fill-opacity="0.78"/><circle cx="655.5" cy="318.1" r="2.05" fill="#cd8c55" fill-opacity="0.78"/><circle cx="665.6" cy="319.3" r="2.05" fill="#f28523" fill-opacity="0.78"/><circle cx="658.1" cy="317.0" r="2.05" fill="#96826e" fill-opacity="0.78"/><circle cx="646.1" cy="314.7" r="2.05" fill="#3e78be" fill-opacity="0.78"/><circle cx="658.6" cy="321.6" r="2.05" fill="#cd8c55" fill-opacity="0.78"/><circle cx="648.0" cy="309.8" r="2.05" fill="#f28523" fill-opacity="0.78"/><circle cx="660.7" cy="314.3" r="2.05" fill="#3e78be" fill-opacity="0.78"/><circle cx="639.5" cy="313.2" r="2.05" fill="#96826e" fill-opacity="0.78"/><circle cx="636.2" cy="309.9" r="2.05" fill="#cd8c55" fill-opacity="0.78"/><circle cx="643.2" cy="311.2" r="2.05" fill="#96826e" fill-opacity="0.78"/><circle cx="671.0" cy="321.8" r="2.05" fill="#cd8c55" fill-opacity="0.78"/><circle cx="668.7" cy="319.3" r="2.05" fill="#96826e" fill-opacity="0.78"/><circle cx="656.3" cy="313.9" r="2.05" fill="#3e78be" fill-opacity="0.78"/><circle cx="655.5" cy="321.5" r="2.05" fill="#96826e" fill-opacity="0.78"/><circle cx="649.1" cy="313.0" r="2.05" fill="#3e78be" fill-opacity="0.78"/><circle cx="644.5" cy="316.6" r="2.05" fill="#3e78be" fill-opacity="0.78"/><circle cx="656.4" cy="318.2" r="2.05" fill="#96826e" fill-opacity="0.78"/><circle cx="677.1" cy="317.4" r="2.05" fill="#96826e" fill-opacity="0.78"/><circle cx="634.7" cy="310.0" r="2.05" fill="#f28523" fill-opacity="0.78"/><circle cx="660.6" cy="315.8" r="2.05" fill="#3e78be" fill-opacity="0.78"/><circle cx="658.1" cy="322.6" r="2.05" fill="#96826e" fill-opacity="0.78"/><circle cx="667.3" cy="324.6" r="2.05" fill="#cd8c55" fill-opacity="0.78"/><circle cx="638.1" cy="312.3" r="2.05" fill="#cd8c55" fill-opacity="0.78"/><circle cx="643.0" cy="313.6" r="2.05" fill="#cd8c55" fill-opacity="0.78"/><circle cx="657.4" cy="315.2" r="2.05" fill="#cd8c55" fill-opacity="0.78"/><circle cx="667.0" cy="319.5" r="2.05" fill="#f28523" fill-opacity="0.78"/><circle cx="639.2" cy="305.7" r="2.05" fill="#3e78be" fill-opacity="0.78"/><circle cx="657.9" cy="315.2" r="2.05" fill="#96826e" fill-opacity="0.78"/><circle cx="638.5" cy="313.0" r="2.05" fill="#3e78be" fill-opacity="0.78"/><circle cx="670.9" cy="317.4" r="2.05" fill="#f28523" fill-opacity="0.78"/><circle cx="664.2" cy="318.0" r="2.05" fill="#cd8c55" fill-opacity="0.78"/><circle cx="649.0" cy="316.6" r="2.05" fill="#f28523" fill-opacity="0.78"/><circle cx="658.4" cy="313.0" r="2.05" fill="#3e78be" fill-opacity="0.78"/><circle cx="634.4" cy="308.7" r="2.05" fill="#cd8c55" fill-opacity="0.78"/><circle cx="543.2" cy="314.6" r="2.05" fill="#3e78be" fill-opacity="0.78"/><circle cx="613.8" cy="309.6" r="2.05" fill="#96826e" fill-opacity="0.78"/><circle cx="521.2" cy="326.8" r="2.05" fill="#f28523" fill-opacity="0.78"/><circle cx="568.8" cy="316.2" r="2.05" fill="#3e78be" fill-opacity="0.78"/><circle cx="535.2" cy="316.8" r="2.05" fill="#3e78be" fill-opacity="0.78"/><circle cx="611.2" cy="313.6" r="2.05" fill="#96826e" fill-opacity="0.78"/><circle cx="558.7" cy="314.5" r="2.05" fill="#3e78be" fill-opacity="0.78"/><circle cx="556.4" cy="311.2" r="2.05" fill="#f28523" fill-opacity="0.78"/><circle cx="539.4" cy="314.1" r="2.05" fill="#f28523" fill-opacity="0.78"/><circle cx="585.5" cy="313.2" r="2.05" fill="#3e78be" fill-opacity="0.78"/><circle cx="522.9" cy="317.2" r="2.05" fill="#f28523" fill-opacity="0.78"/><circle cx="549.3" cy="314.7" r="2.05" fill="#3e78be" fill-opacity="0.78"/><circle cx="584.3" cy="316.8" r="2.05" fill="#3e78be" fill-opacity="0.78"/><circle cx="588.5" cy="316.2" r="2.05" fill="#3e78be" fill-opacity="0.78"/><circle cx="620.2" cy="312.9" r="2.05" fill="#cd8c55" fill-opacity="0.78"/><circle cx="617.9" cy="317.3" r="2.05" fill="#f28523" fill-opacity="0.78"/><circle cx="572.5" cy="311.7" r="2.05" fill="#f28523" fill-opacity="0.78"/><circle cx="575.8" cy="318.9" r="2.05" fill="#3e78be" fill-opacity="0.78"/><circle cx="603.2" cy="317.5" r="2.05" fill="#96826e" fill-opacity="0.78"/><circle cx="593.1" cy="309.4" r="2.05" fill="#f28523" fill-opacity="0.78"/><circle cx="570.9" cy="310.3" r="2.05" fill="#cd8c55" fill-opacity="0.78"/><circle cx="654.0" cy="317.4" r="2.05" fill="#f28523" fill-opacity="0.78"/><circle cx="587.4" cy="310.2" r="2.05" fill="#3e78be" fill-opacity="0.78"/><circle cx="586.4" cy="316.1" r="2.05" fill="#f28523" fill-opacity="0.78"/><circle cx="600.1" cy="315.2" r="2.05" fill="#3e78be" fill-opacity="0.78"/><circle cx="621.3" cy="319.0" r="2.05" fill="#3e78be" fill-opacity="0.78"/><circle cx="611.5" cy="319.8" r="2.05" fill="#96826e" fill-opacity="0.78"/><circle cx="575.6" cy="316.9" r="2.05" fill="#cd8c55" fill-opacity="0.78"/><circle cx="584.3" cy="317.0" r="2.05" fill="#cd8c55" fill-opacity="0.78"/><circle cx="630.3" cy="317.7" r="2.05" fill="#96826e" fill-opacity="0.78"/><circle cx="601.5" cy="312.6" r="2.05" fill="#3e78be" fill-opacity="0.78"/><circle cx="524.2" cy="309.6" r="2.05" fill="#cd8c55" fill-opacity="0.78"/><circle cx="547.7" cy="315.2" r="2.05" fill="#96826e" fill-opacity="0.78"/><circle cx="549.4" cy="317.4" r="2.05" fill="#3e78be" fill-opacity="0.78"/><circle cx="551.4" cy="319.8" r="2.05" fill="#3e78be" fill-opacity="0.78"/><circle cx="531.2" cy="312.7" r="2.05" fill="#96826e" fill-opacity="0.78"/><circle cx="593.3" cy="308.2" r="2.05" fill="#f28523" fill-opacity="0.78"/><circle cx="553.8" cy="317.2" r="2.05" fill="#f28523" fill-opacity="0.78"/><circle cx="582.4" cy="320.7" r="2.05" fill="#f28523" fill-opacity="0.78"/><circle cx="579.9" cy="310.7" r="2.05" fill="#cd8c55" fill-opacity="0.78"/><circle cx="581.6" cy="316.0" r="2.05" fill="#96826e" fill-opacity="0.78"/><circle cx="621.2" cy="317.1" r="2.05" fill="#f28523" fill-opacity="0.78"/><circle cx="554.1" cy="316.4" r="2.05" fill="#f28523" fill-opacity="0.78"/><circle cx="572.6" cy="315.2" r="2.05" fill="#f28523" fill-opacity="0.78"/><circle cx="543.8" cy="306.1" r="2.05" fill="#3e78be" fill-opacity="0.78"/><circle cx="627.7" cy="310.6" r="2.05" fill="#f28523" fill-opacity="0.78"/><circle cx="600.1" cy="321.8" r="2.05" fill="#cd8c55" fill-opacity="0.78"/><circle cx="582.5" cy="313.5" r="2.05" fill="#cd8c55" fill-opacity="0.78"/><circle cx="574.6" cy="325.9" r="2.05" fill="#3e78be" fill-opacity="0.78"/><circle cx="539.9" cy="305.7" r="2.05" fill="#f28523" fill-opacity="0.78"/><circle cx="597.8" cy="309.2" r="2.05" fill="#3e78be" fill-opacity="0.78"/><circle cx="543.9" cy="312.8" r="2.05" fill="#f28523" fill-opacity="0.78"/><circle cx="625.5" cy="311.5" r="2.05" fill="#f28523" fill-opacity="0.78"/><circle cx="566.7" cy="315.7" r="2.05" fill="#f28523" fill-opacity="0.78"/><circle cx="505.8" cy="304.6" r="2.05" fill="#3e78be" fill-opacity="0.78"/><circle cx="519.3" cy="308.6" r="2.05" fill="#f28523" fill-opacity="0.78"/><circle cx="511.7" cy="314.6" r="2.05" fill="#f28523" fill-opacity="0.78"/><circle cx="504.5" cy="309.7" r="2.05" fill="#f28523" fill-opacity="0.78"/><circle cx="516.8" cy="309.6" r="2.05" fill="#f28523" fill-opacity="0.78"/><circle cx="506.4" cy="313.7" r="2.05" fill="#f28523" fill-opacity="0.78"/><circle cx="541.6" cy="313.0" r="2.05" fill="#3e78be" fill-opacity="0.78"/><circle cx="510.5" cy="313.6" r="2.05" fill="#3e78be" fill-opacity="0.78"/><circle cx="511.9" cy="316.4" r="2.05" fill="#3e78be" fill-opacity="0.78"/><circle cx="525.7" cy="313.5" r="2.05" fill="#96826e" fill-opacity="0.78"/><circle cx="532.7" cy="309.5" r="2.05" fill="#3e78be" fill-opacity="0.78"/><circle cx="520.2" cy="313.1" r="2.05" fill="#f28523" fill-opacity="0.78"/><circle cx="534.2" cy="315.9" r="2.05" fill="#f28523" fill-opacity="0.78"/><circle cx="532.4" cy="310.2" r="2.05" fill="#96826e" fill-opacity="0.78"/><circle cx="538.7" cy="310.9" r="2.05" fill="#3e78be" fill-opacity="0.78"/><circle cx="533.5" cy="314.7" r="2.05" fill="#3e78be" fill-opacity="0.78"/><circle cx="531.0" cy="315.0" r="2.05" fill="#3e78be" fill-opacity="0.78"/><circle cx="528.0" cy="311.8" r="2.05" fill="#3e78be" fill-opacity="0.78"/><circle cx="503.1" cy="307.7" r="2.05" fill="#3e78be" fill-opacity="0.78"/><circle cx="534.7" cy="311.2" r="2.05" fill="#f28523" fill-opacity="0.78"/><circle cx="531.8" cy="312.9" r="2.05" fill="#3e78be" fill-opacity="0.78"/><circle cx="533.7" cy="313.0" r="2.05" fill="#cd8c55" fill-opacity="0.78"/><circle cx="514.6" cy="310.0" r="2.05" fill="#f28523" fill-opacity="0.78"/><circle cx="523.0" cy="306.5" r="2.05" fill="#3e78be" fill-opacity="0.78"/><circle cx="519.1" cy="310.9" r="2.05" fill="#cd8c55" fill-opacity="0.78"/><circle cx="519.7" cy="308.8" r="2.05" fill="#3e78be" fill-opacity="0.78"/><circle cx="532.1" cy="314.4" r="2.05" fill="#f28523" fill-opacity="0.78"/><circle cx="521.3" cy="310.2" r="2.05" fill="#96826e" fill-opacity="0.78"/><circle cx="517.1" cy="309.4" r="2.05" fill="#96826e" fill-opacity="0.78"/><circle cx="535.5" cy="314.7" r="2.05" fill="#f28523" fill-opacity="0.78"/><circle cx="504.6" cy="309.2" r="2.05" fill="#96826e" fill-opacity="0.78"/><circle cx="515.3" cy="312.8" r="2.05" fill="#96826e" fill-opacity="0.78"/><circle cx="521.2" cy="317.4" r="2.05" fill="#3e78be" fill-opacity="0.78"/><circle cx="526.0" cy="311.4" r="2.05" fill="#3e78be" fill-opacity="0.78"/><circle cx="519.0" cy="316.4" r="2.05" fill="#3e78be" fill-opacity="0.78"/><circle cx="518.1" cy="312.3" r="2.05" fill="#3e78be" fill-opacity="0.78"/><circle cx="518.4" cy="316.2" r="2.05" fill="#f28523" fill-opacity="0.78"/><circle cx="525.4" cy="305.1" r="2.05" fill="#f28523" fill-opacity="0.78"/><circle cx="527.4" cy="304.1" r="2.05" fill="#f28523" fill-opacity="0.78"/><circle cx="522.9" cy="308.5" r="2.05" fill="#96826e" fill-opacity="0.78"/><circle cx="519.6" cy="312.0" r="2.05" fill="#96826e" fill-opacity="0.78"/><circle cx="502.8" cy="311.2" r="2.05" fill="#3e78be" fill-opacity="0.78"/><circle cx="519.0" cy="312.9" r="2.05" fill="#3e78be" fill-opacity="0.78"/><circle cx="520.8" cy="312.0" r="2.05" fill="#3e78be" fill-opacity="0.78"/><circle cx="533.6" cy="320.2" r="2.05" fill="#3e78be" fill-opacity="0.78"/><circle cx="531.1" cy="314.3" r="2.05" fill="#96826e" fill-opacity="0.78"/><circle cx="534.6" cy="313.0" r="2.05" fill="#3e78be" fill-opacity="0.78"/><circle cx="532.0" cy="308.1" r="2.05" fill="#cd8c55" fill-opacity="0.78"/><circle cx="522.0" cy="314.5" r="2.05" fill="#96826e" fill-opacity="0.78"/><circle cx="516.7" cy="309.6" r="2.05" fill="#3e78be" fill-opacity="0.78"/><circle cx="509.5" cy="311.4" r="2.05" fill="#cd8c55" fill-opacity="0.78"/><circle cx="545.9" cy="311.4" r="2.05" fill="#f28523" fill-opacity="0.78"/><circle cx="528.1" cy="312.1" r="2.05" fill="#f28523" fill-opacity="0.78"/><circle cx="518.0" cy="310.5" r="2.05" fill="#cd8c55" fill-opacity="0.78"/><circle cx="502.9" cy="310.7" r="2.05" fill="#3e78be" fill-opacity="0.78"/><circle cx="540.3" cy="309.3" r="2.05" fill="#f28523" fill-opacity="0.78"/><circle cx="529.2" cy="309.7" r="2.05" fill="#3e78be" fill-opacity="0.78"/><circle cx="510.5" cy="313.4" r="2.05" fill="#f28523" fill-opacity="0.78"/><circle cx="505.9" cy="304.0" r="2.05" fill="#3e78be" fill-opacity="0.78"/><circle cx="507.6" cy="307.7" r="2.05" fill="#3e78be" fill-opacity="0.78"/><circle cx="532.1" cy="306.2" r="2.05" fill="#f28523" fill-opacity="0.78"/><circle cx="504.5" cy="312.6" r="2.05" fill="#3e78be" fill-opacity="0.78"/><circle cx="529.1" cy="307.8" r="2.05" fill="#3e78be" fill-opacity="0.78"/><circle cx="510.5" cy="306.7" r="2.05" fill="#f28523" fill-opacity="0.78"/><circle cx="538.7" cy="309.2" r="2.05" fill="#96826e" fill-opacity="0.78"/><circle cx="538.9" cy="309.0" r="2.05" fill="#96826e" fill-opacity="0.78"/><circle cx="529.5" cy="317.3" r="2.05" fill="#f28523" fill-opacity="0.78"/><circle cx="522.5" cy="321.0" r="2.05" fill="#f28523" fill-opacity="0.78"/><circle cx="510.9" cy="308.1" r="2.05" fill="#f28523" fill-opacity="0.78"/><circle cx="524.5" cy="311.4" r="2.05" fill="#cd8c55" fill-opacity="0.78"/><circle cx="534.9" cy="312.1" r="2.05" fill="#96826e" fill-opacity="0.78"/><circle cx="518.9" cy="310.3" r="2.05" fill="#cd8c55" fill-opacity="0.78"/><circle cx="532.8" cy="316.4" r="2.05" fill="#96826e" fill-opacity="0.78"/><circle cx="530.7" cy="314.6" r="2.05" fill="#f28523" fill-opacity="0.78"/><circle cx="524.6" cy="306.6" r="2.05" fill="#3e78be" fill-opacity="0.78"/><circle cx="500.4" cy="385.0" r="2.05" fill="#f28523" fill-opacity="0.78"/><circle cx="501.7" cy="381.9" r="2.05" fill="#f28523" fill-opacity="0.78"/><circle cx="502.7" cy="382.8" r="2.05" fill="#3e78be" fill-opacity="0.78"/><circle cx="500.3" cy="384.0" r="2.05" fill="#f28523" fill-opacity="0.78"/><circle cx="505.6" cy="384.3" r="2.05" fill="#f28523" fill-opacity="0.78"/><circle cx="564.2" cy="497.7" r="2.05" fill="#96826e" fill-opacity="0.78"/><circle cx="546.6" cy="512.1" r="2.05" fill="#96826e" fill-opacity="0.78"/><circle cx="526.3" cy="517.7" r="2.05" fill="#f28523" fill-opacity="0.78"/><circle cx="556.9" cy="502.0" r="2.05" fill="#cd8c55" fill-opacity="0.78"/><circle cx="524.7" cy="518.3" r="2.05" fill="#3e78be" fill-opacity="0.78"/><circle cx="534.1" cy="512.1" r="2.05" fill="#f28523" fill-opacity="0.78"/><circle cx="559.4" cy="501.7" r="2.05" fill="#3e78be" fill-opacity="0.78"/><circle cx="526.3" cy="514.5" r="2.05" fill="#cd8c55" fill-opacity="0.78"/><circle cx="575.8" cy="490.7" r="2.05" fill="#cd8c55" fill-opacity="0.78"/><circle cx="569.9" cy="499.3" r="2.05" fill="#f28523" fill-opacity="0.78"/><circle cx="580.0" cy="490.8" r="2.05" fill="#f28523" fill-opacity="0.78"/><circle cx="523.6" cy="519.5" r="2.05" fill="#cd8c55" fill-opacity="0.78"/><circle cx="574.0" cy="494.4" r="2.05" fill="#96826e" fill-opacity="0.78"/><circle cx="566.4" cy="494.1" r="2.05" fill="#3e78be" fill-opacity="0.78"/><circle cx="541.6" cy="511.4" r="2.05" fill="#3e78be" fill-opacity="0.78"/><circle cx="510.6" cy="527.6" r="2.05" fill="#f28523" fill-opacity="0.78"/><circle cx="520.5" cy="521.7" r="2.05" fill="#96826e" fill-opacity="0.78"/><circle cx="527.0" cy="517.9" r="2.05" fill="#f28523" fill-opacity="0.78"/><circle cx="545.2" cy="511.6" r="2.05" fill="#96826e" fill-opacity="0.78"/><circle cx="502.8" cy="529.4" r="2.05" fill="#3e78be" fill-opacity="0.78"/><circle cx="517.2" cy="521.0" r="2.05" fill="#96826e" fill-opacity="0.78"/><circle cx="552.1" cy="499.6" r="2.05" fill="#f28523" fill-opacity="0.78"/><circle cx="542.3" cy="509.5" r="2.05" fill="#f28523" fill-opacity="0.78"/><circle cx="541.4" cy="509.8" r="2.05" fill="#cd8c55" fill-opacity="0.78"/><circle cx="511.9" cy="522.6" r="2.05" fill="#3e78be" fill-opacity="0.78"/><circle cx="515.1" cy="525.1" r="2.05" fill="#f28523" fill-opacity="0.78"/><circle cx="512.7" cy="525.1" r="2.05" fill="#96826e" fill-opacity="0.78"/><circle cx="526.5" cy="514.4" r="2.05" fill="#96826e" fill-opacity="0.78"/><circle cx="546.7" cy="509.3" r="2.05" fill="#3e78be" fill-opacity="0.78"/><circle cx="515.1" cy="521.8" r="2.05" fill="#3e78be" fill-opacity="0.78"/><circle cx="547.2" cy="506.5" r="2.05" fill="#3e78be" fill-opacity="0.78"/><circle cx="580.8" cy="488.6" r="2.05" fill="#96826e" fill-opacity="0.78"/><circle cx="562.7" cy="497.6" r="2.05" fill="#96826e" fill-opacity="0.78"/><circle cx="546.9" cy="505.0" r="2.05" fill="#f28523" fill-opacity="0.78"/><circle cx="505.2" cy="531.7" r="2.05" fill="#f28523" fill-opacity="0.78"/><circle cx="562.3" cy="499.9" r="2.05" fill="#cd8c55" fill-opacity="0.78"/><circle cx="523.9" cy="516.9" r="2.05" fill="#f28523" fill-opacity="0.78"/><circle cx="521.1" cy="523.8" r="2.05" fill="#3e78be" fill-opacity="0.78"/><circle cx="509.1" cy="530.2" r="2.05" fill="#cd8c55" fill-opacity="0.78"/><circle cx="523.3" cy="519.8" r="2.05" fill="#f28523" fill-opacity="0.78"/><circle cx="550.6" cy="510.0" r="2.05" fill="#3e78be" fill-opacity="0.78"/><circle cx="568.6" cy="492.3" r="2.05" fill="#3e78be" fill-opacity="0.78"/><circle cx="505.2" cy="530.0" r="2.05" fill="#3e78be" fill-opacity="0.78"/><circle cx="557.2" cy="503.9" r="2.05" fill="#3e78be" fill-opacity="0.78"/><circle cx="567.4" cy="500.0" r="2.05" fill="#96826e" fill-opacity="0.78"/><circle cx="497.2" cy="529.9" r="2.05" fill="#cd8c55" fill-opacity="0.78"/><circle cx="561.8" cy="501.1" r="2.05" fill="#f28523" fill-opacity="0.78"/><circle cx="541.2" cy="510.6" r="2.05" fill="#96826e" fill-opacity="0.78"/><circle cx="574.6" cy="492.6" r="2.05" fill="#f28523" fill-opacity="0.78"/><circle cx="553.0" cy="507.9" r="2.05" fill="#3e78be" fill-opacity="0.78"/><circle cx="534.7" cy="509.2" r="2.05" fill="#3e78be" fill-opacity="0.78"/><circle cx="556.5" cy="506.0" r="2.05" fill="#cd8c55" fill-opacity="0.78"/><circle cx="507.1" cy="530.9" r="2.05" fill="#f28523" fill-opacity="0.78"/><circle cx="563.6" cy="501.1" r="2.05" fill="#cd8c55" fill-opacity="0.78"/><circle cx="563.0" cy="503.5" r="2.05" fill="#96826e" fill-opacity="0.78"/><circle cx="535.7" cy="508.6" r="2.05" fill="#96826e" fill-opacity="0.78"/><circle cx="517.7" cy="520.0" r="2.05" fill="#f28523" fill-opacity="0.78"/><circle cx="571.3" cy="497.6" r="2.05" fill="#96826e" fill-opacity="0.78"/><circle cx="534.4" cy="517.5" r="2.05" fill="#f28523" fill-opacity="0.78"/><circle cx="539.5" cy="513.6" r="2.05" fill="#cd8c55" fill-opacity="0.78"/><circle cx="506.3" cy="524.8" r="2.05" fill="#3e78be" fill-opacity="0.78"/><circle cx="510.1" cy="526.5" r="2.05" fill="#3e78be" fill-opacity="0.78"/><circle cx="560.0" cy="502.4" r="2.05" fill="#cd8c55" fill-opacity="0.78"/><circle cx="520.0" cy="522.1" r="2.05" fill="#cd8c55" fill-opacity="0.78"/><circle cx="562.2" cy="500.5" r="2.05" fill="#cd8c55" fill-opacity="0.78"/><circle cx="527.7" cy="517.4" r="2.05" fill="#3e78be" fill-opacity="0.78"/><circle cx="511.9" cy="526.3" r="2.05" fill="#96826e" fill-opacity="0.78"/><circle cx="521.7" cy="524.0" r="2.05" fill="#f28523" fill-opacity="0.78"/><circle cx="583.7" cy="489.9" r="2.05" fill="#96826e" fill-opacity="0.78"/><circle cx="535.6" cy="509.8" r="2.05" fill="#3e78be" fill-opacity="0.78"/><circle cx="559.3" cy="496.1" r="2.05" fill="#cd8c55" fill-opacity="0.78"/><circle cx="576.2" cy="492.6" r="2.05" fill="#3e78be" fill-opacity="0.78"/><circle cx="505.7" cy="526.1" r="2.05" fill="#f28523" fill-opacity="0.78"/><circle cx="582.5" cy="489.3" r="2.05" fill="#96826e" fill-opacity="0.78"/><circle cx="573.5" cy="493.8" r="2.05" fill="#cd8c55" fill-opacity="0.78"/><circle cx="560.3" cy="502.3" r="2.05" fill="#f28523" fill-opacity="0.78"/><circle cx="544.7" cy="509.3" r="2.05" fill="#cd8c55" fill-opacity="0.78"/><circle cx="521.5" cy="518.3" r="2.05" fill="#3e78be" fill-opacity="0.78"/><circle cx="547.7" cy="504.8" r="2.05" fill="#96826e" fill-opacity="0.78"/><circle cx="567.1" cy="497.3" r="2.05" fill="#f28523" fill-opacity="0.78"/><circle cx="540.0" cy="509.0" r="2.05" fill="#96826e" fill-opacity="0.78"/><circle cx="510.5" cy="530.9" r="2.05" fill="#3e78be" fill-opacity="0.78"/><circle cx="536.7" cy="513.5" r="2.05" fill="#f28523" fill-opacity="0.78"/><circle cx="503.3" cy="532.3" r="2.05" fill="#cd8c55" fill-opacity="0.78"/><circle cx="514.9" cy="522.0" r="2.05" fill="#96826e" fill-opacity="0.78"/><circle cx="541.9" cy="508.2" r="2.05" fill="#f28523" fill-opacity="0.78"/><circle cx="571.3" cy="497.6" r="2.05" fill="#3e78be" fill-opacity="0.78"/><circle cx="537.3" cy="510.3" r="2.05" fill="#f28523" fill-opacity="0.78"/><circle cx="531.4" cy="516.5" r="2.05" fill="#3e78be" fill-opacity="0.78"/><circle cx="529.0" cy="516.7" r="2.05" fill="#3e78be" fill-opacity="0.78"/><circle cx="515.6" cy="522.0" r="2.05" fill="#3e78be" fill-opacity="0.78"/><circle cx="507.6" cy="523.9" r="2.05" fill="#cd8c55" fill-opacity="0.78"/><circle cx="538.1" cy="512.0" r="2.05" fill="#f28523" fill-opacity="0.78"/><circle cx="557.9" cy="498.5" r="2.05" fill="#96826e" fill-opacity="0.78"/><circle cx="568.4" cy="496.6" r="2.05" fill="#f28523" fill-opacity="0.78"/><circle cx="527.7" cy="512.2" r="2.05" fill="#cd8c55" fill-opacity="0.78"/><circle cx="557.9" cy="502.0" r="2.05" fill="#96826e" fill-opacity="0.78"/><circle cx="562.9" cy="498.4" r="2.05" fill="#cd8c55" fill-opacity="0.78"/><circle cx="536.7" cy="512.5" r="2.05" fill="#cd8c55" fill-opacity="0.78"/><circle cx="570.2" cy="501.4" r="2.05" fill="#f28523" fill-opacity="0.78"/><circle cx="509.4" cy="524.0" r="2.05" fill="#f28523" fill-opacity="0.78"/><circle cx="538.5" cy="510.8" r="2.05" fill="#f28523" fill-opacity="0.78"/><circle cx="511.3" cy="525.1" r="2.05" fill="#3e78be" fill-opacity="0.78"/><circle cx="567.3" cy="499.4" r="2.05" fill="#f28523" fill-opacity="0.78"/><circle cx="515.5" cy="519.9" r="2.05" fill="#3e78be" fill-opacity="0.78"/><circle cx="550.3" cy="500.9" r="2.05" fill="#f28523" fill-opacity="0.78"/><circle cx="567.4" cy="502.7" r="2.05" fill="#3e78be" fill-opacity="0.78"/><circle cx="566.7" cy="501.3" r="2.05" fill="#3e78be" fill-opacity="0.78"/><circle cx="534.4" cy="514.2" r="2.05" fill="#96826e" fill-opacity="0.78"/><circle cx="575.0" cy="495.4" r="2.05" fill="#3e78be" fill-opacity="0.78"/><circle cx="505.7" cy="530.1" r="2.05" fill="#cd8c55" fill-opacity="0.78"/><circle cx="519.3" cy="516.4" r="2.05" fill="#cd8c55" fill-opacity="0.78"/><circle cx="558.9" cy="501.2" r="2.05" fill="#cd8c55" fill-opacity="0.78"/><circle cx="533.9" cy="514.3" r="2.05" fill="#f28523" fill-opacity="0.78"/><circle cx="535.4" cy="516.2" r="2.05" fill="#3e78be" fill-opacity="0.78"/><circle cx="510.6" cy="522.5" r="2.05" fill="#cd8c55" fill-opacity="0.78"/><circle cx="528.7" cy="515.8" r="2.05" fill="#3e78be" fill-opacity="0.78"/><circle cx="562.5" cy="502.3" r="2.05" fill="#3e78be" fill-opacity="0.78"/><circle cx="545.2" cy="511.5" r="2.05" fill="#96826e" fill-opacity="0.78"/><circle cx="575.9" cy="495.8" r="2.05" fill="#f28523" fill-opacity="0.78"/><circle cx="514.3" cy="517.3" r="2.05" fill="#f28523" fill-opacity="0.78"/><circle cx="533.1" cy="512.1" r="2.05" fill="#cd8c55" fill-opacity="0.78"/><circle cx="570.0" cy="498.5" r="2.05" fill="#f28523" fill-opacity="0.78"/><circle cx="514.3" cy="521.7" r="2.05" fill="#96826e" fill-opacity="0.78"/><circle cx="531.0" cy="514.9" r="2.05" fill="#96826e" fill-opacity="0.78"/><circle cx="539.6" cy="511.2" r="2.05" fill="#96826e" fill-opacity="0.78"/><circle cx="550.0" cy="505.5" r="2.05" fill="#f28523" fill-opacity="0.78"/><circle cx="577.1" cy="492.1" r="2.05" fill="#f28523" fill-opacity="0.78"/><circle cx="511.7" cy="522.4" r="2.05" fill="#96826e" fill-opacity="0.78"/><circle cx="560.0" cy="500.5" r="2.05" fill="#96826e" fill-opacity="0.78"/><circle cx="579.5" cy="490.2" r="2.05" fill="#96826e" fill-opacity="0.78"/><circle cx="569.9" cy="497.9" r="2.05" fill="#3e78be" fill-opacity="0.78"/><circle cx="503.1" cy="527.0" r="2.05" fill="#96826e" fill-opacity="0.78"/><circle cx="520.4" cy="521.6" r="2.05" fill="#3e78be" fill-opacity="0.78"/><circle cx="504.9" cy="528.8" r="2.05" fill="#f28523" fill-opacity="0.78"/><circle cx="500.8" cy="527.6" r="2.05" fill="#3e78be" fill-opacity="0.78"/><circle cx="502.4" cy="525.9" r="2.05" fill="#3e78be" fill-opacity="0.78"/><circle cx="511.8" cy="529.9" r="2.05" fill="#f28523" fill-opacity="0.78"/><circle cx="508.2" cy="529.0" r="2.05" fill="#3e78be" fill-opacity="0.78"/><circle cx="498.1" cy="527.4" r="2.05" fill="#96826e" fill-opacity="0.78"/><circle cx="508.7" cy="525.5" r="2.05" fill="#3e78be" fill-opacity="0.78"/><circle cx="506.2" cy="529.7" r="2.05" fill="#3e78be" fill-opacity="0.78"/><circle cx="509.3" cy="528.4" r="2.05" fill="#3e78be" fill-opacity="0.78"/><circle cx="505.7" cy="527.5" r="2.05" fill="#3e78be" fill-opacity="0.78"/><circle cx="502.2" cy="527.4" r="2.05" fill="#96826e" fill-opacity="0.78"/><circle cx="658.5" cy="494.3" r="2.05" fill="#f28523" fill-opacity="0.78"/><circle cx="661.6" cy="489.5" r="2.05" fill="#f28523" fill-opacity="0.78"/><circle cx="619.2" cy="490.3" r="2.05" fill="#cd8c55" fill-opacity="0.78"/><circle cx="643.9" cy="491.3" r="2.05" fill="#3e78be" fill-opacity="0.78"/><circle cx="642.3" cy="487.7" r="2.05" fill="#96826e" fill-opacity="0.78"/><circle cx="641.9" cy="492.4" r="2.05" fill="#3e78be" fill-opacity="0.78"/><circle cx="595.6" cy="488.1" r="2.05" fill="#96826e" fill-opacity="0.78"/><circle cx="605.8" cy="491.1" r="2.05" fill="#f28523" fill-opacity="0.78"/><circle cx="682.7" cy="491.6" r="2.05" fill="#96826e" fill-opacity="0.78"/><circle cx="611.5" cy="489.7" r="2.05" fill="#f28523" fill-opacity="0.78"/><circle cx="631.5" cy="487.5" r="2.05" fill="#96826e" fill-opacity="0.78"/><circle cx="669.9" cy="491.9" r="2.05" fill="#3e78be" fill-opacity="0.78"/><circle cx="642.3" cy="490.9" r="2.05" fill="#96826e" fill-opacity="0.78"/><circle cx="658.4" cy="488.6" r="2.05" fill="#96826e" fill-opacity="0.78"/><circle cx="668.5" cy="492.2" r="2.05" fill="#f28523" fill-opacity="0.78"/><circle cx="615.8" cy="490.0" r="2.05" fill="#3e78be" fill-opacity="0.78"/><circle cx="657.8" cy="492.0" r="2.05" fill="#3e78be" fill-opacity="0.78"/><circle cx="617.7" cy="488.5" r="2.05" fill="#3e78be" fill-opacity="0.78"/><circle cx="637.3" cy="491.4" r="2.05" fill="#f28523" fill-opacity="0.78"/><circle cx="665.5" cy="493.6" r="2.05" fill="#3e78be" fill-opacity="0.78"/><circle cx="601.8" cy="488.0" r="2.05" fill="#f28523" fill-opacity="0.78"/><circle cx="664.0" cy="495.2" r="2.05" fill="#cd8c55" fill-opacity="0.78"/><circle cx="669.6" cy="486.1" r="2.05" fill="#cd8c55" fill-opacity="0.78"/><circle cx="681.0" cy="492.6" r="2.05" fill="#96826e" fill-opacity="0.78"/><circle cx="671.3" cy="495.2" r="2.05" fill="#f28523" fill-opacity="0.78"/><circle cx="633.3" cy="491.8" r="2.05" fill="#cd8c55" fill-opacity="0.78"/><circle cx="625.3" cy="489.9" r="2.05" fill="#cd8c55" fill-opacity="0.78"/><circle cx="586.1" cy="485.1" r="2.05" fill="#f28523" fill-opacity="0.78"/><circle cx="590.7" cy="492.4" r="2.05" fill="#f28523" fill-opacity="0.78"/><circle cx="635.6" cy="493.1" r="2.05" fill="#cd8c55" fill-opacity="0.78"/><circle cx="622.9" cy="491.4" r="2.05" fill="#3e78be" fill-opacity="0.78"/><circle cx="624.8" cy="488.3" r="2.05" fill="#3e78be" fill-opacity="0.78"/><circle cx="682.8" cy="492.6" r="2.05" fill="#3e78be" fill-opacity="0.78"/><circle cx="596.3" cy="493.3" r="2.05" fill="#96826e" fill-opacity="0.78"/><circle cx="690.1" cy="489.9" r="2.05" fill="#3e78be" fill-opacity="0.78"/><circle cx="615.4" cy="487.4" r="2.05" fill="#cd8c55" fill-opacity="0.78"/><circle cx="615.8" cy="490.3" r="2.05" fill="#f28523" fill-opacity="0.78"/><circle cx="622.7" cy="486.9" r="2.05" fill="#f28523" fill-opacity="0.78"/><circle cx="628.2" cy="489.8" r="2.05" fill="#3e78be" fill-opacity="0.78"/><circle cx="638.8" cy="490.7" r="2.05" fill="#cd8c55" fill-opacity="0.78"/><circle cx="646.9" cy="492.2" r="2.05" fill="#f28523" fill-opacity="0.78"/><circle cx="656.8" cy="490.8" r="2.05" fill="#cd8c55" fill-opacity="0.78"/><circle cx="646.6" cy="492.8" r="2.05" fill="#96826e" fill-opacity="0.78"/><circle cx="682.1" cy="486.8" r="2.05" fill="#3e78be" fill-opacity="0.78"/><circle cx="600.6" cy="489.5" r="2.05" fill="#f28523" fill-opacity="0.78"/><circle cx="604.9" cy="485.9" r="2.05" fill="#cd8c55" fill-opacity="0.78"/><circle cx="637.4" cy="491.6" r="2.05" fill="#96826e" fill-opacity="0.78"/><circle cx="597.8" cy="488.1" r="2.05" fill="#f28523" fill-opacity="0.78"/><circle cx="665.7" cy="491.7" r="2.05" fill="#f28523" fill-opacity="0.78"/><circle cx="636.3" cy="491.6" r="2.05" fill="#3e78be" fill-opacity="0.78"/><circle cx="670.6" cy="492.9" r="2.05" fill="#96826e" fill-opacity="0.78"/><circle cx="633.3" cy="489.9" r="2.05" fill="#cd8c55" fill-opacity="0.78"/><circle cx="591.5" cy="491.4" r="2.05" fill="#3e78be" fill-opacity="0.78"/><circle cx="601.1" cy="489.4" r="2.05" fill="#96826e" fill-opacity="0.78"/><circle cx="622.0" cy="492.1" r="2.05" fill="#f28523" fill-opacity="0.78"/><circle cx="658.7" cy="489.0" r="2.05" fill="#3e78be" fill-opacity="0.78"/><circle cx="586.2" cy="487.2" r="2.05" fill="#cd8c55" fill-opacity="0.78"/><circle cx="641.5" cy="494.7" r="2.05" fill="#f28523" fill-opacity="0.78"/><circle cx="618.9" cy="489.1" r="2.05" fill="#f28523" fill-opacity="0.78"/><circle cx="613.6" cy="486.0" r="2.05" fill="#f28523" fill-opacity="0.78"/><circle cx="647.7" cy="491.2" r="2.05" fill="#cd8c55" fill-opacity="0.78"/><circle cx="631.2" cy="491.4" r="2.05" fill="#f28523" fill-opacity="0.78"/><circle cx="641.9" cy="489.4" r="2.05" fill="#3e78be" fill-opacity="0.78"/><circle cx="644.8" cy="490.9" r="2.05" fill="#3e78be" fill-opacity="0.78"/><circle cx="638.2" cy="489.1" r="2.05" fill="#f28523" fill-opacity="0.78"/><circle cx="681.4" cy="491.6" r="2.05" fill="#cd8c55" fill-opacity="0.78"/><circle cx="635.3" cy="491.0" r="2.05" fill="#3e78be" fill-opacity="0.78"/><circle cx="632.6" cy="491.4" r="2.05" fill="#96826e" fill-opacity="0.78"/><circle cx="594.3" cy="489.3" r="2.05" fill="#96826e" fill-opacity="0.78"/><circle cx="672.3" cy="492.1" r="2.05" fill="#96826e" fill-opacity="0.78"/><circle cx="617.6" cy="490.9" r="2.05" fill="#3e78be" fill-opacity="0.78"/><circle cx="613.5" cy="487.1" r="2.05" fill="#96826e" fill-opacity="0.78"/><circle cx="658.8" cy="488.7" r="2.05" fill="#96826e" fill-opacity="0.78"/><circle cx="669.4" cy="494.4" r="2.05" fill="#3e78be" fill-opacity="0.78"/><circle cx="669.3" cy="491.1" r="2.05" fill="#f28523" fill-opacity="0.78"/><circle cx="609.9" cy="490.6" r="2.05" fill="#3e78be" fill-opacity="0.78"/><circle cx="612.1" cy="491.3" r="2.05" fill="#3e78be" fill-opacity="0.78"/><circle cx="609.8" cy="488.9" r="2.05" fill="#f28523" fill-opacity="0.78"/><circle cx="663.6" cy="489.3" r="2.05" fill="#f28523" fill-opacity="0.78"/><circle cx="590.4" cy="486.9" r="2.05" fill="#3e78be" fill-opacity="0.78"/><circle cx="583.1" cy="485.3" r="2.05" fill="#f28523" fill-opacity="0.78"/><circle cx="594.0" cy="492.4" r="2.05" fill="#f28523" fill-opacity="0.78"/><circle cx="608.3" cy="486.7" r="2.05" fill="#3e78be" fill-opacity="0.78"/><circle cx="638.9" cy="487.1" r="2.05" fill="#f28523" fill-opacity="0.78"/><circle cx="641.6" cy="491.1" r="2.05" fill="#3e78be" fill-opacity="0.78"/><circle cx="630.0" cy="491.7" r="2.05" fill="#f28523" fill-opacity="0.78"/><circle cx="663.0" cy="493.8" r="2.05" fill="#96826e" fill-opacity="0.78"/><circle cx="646.4" cy="491.3" r="2.05" fill="#3e78be" fill-opacity="0.78"/><circle cx="684.1" cy="492.5" r="2.05" fill="#f28523" fill-opacity="0.78"/><circle cx="588.5" cy="489.2" r="2.05" fill="#96826e" fill-opacity="0.78"/><circle cx="650.7" cy="490.6" r="2.05" fill="#cd8c55" fill-opacity="0.78"/><circle cx="613.2" cy="489.0" r="2.05" fill="#96826e" fill-opacity="0.78"/><circle cx="603.0" cy="491.5" r="2.05" fill="#f28523" fill-opacity="0.78"/><circle cx="621.6" cy="488.2" r="2.05" fill="#f28523" fill-opacity="0.78"/><circle cx="654.7" cy="490.0" r="2.05" fill="#f28523" fill-opacity="0.78"/><circle cx="615.8" cy="488.5" r="2.05" fill="#cd8c55" fill-opacity="0.78"/><circle cx="647.0" cy="491.1" r="2.05" fill="#f28523" fill-opacity="0.78"/><circle cx="592.0" cy="485.4" r="2.05" fill="#96826e" fill-opacity="0.78"/><circle cx="682.3" cy="489.4" r="2.05" fill="#f28523" fill-opacity="0.78"/><circle cx="608.0" cy="494.0" r="2.05" fill="#cd8c55" fill-opacity="0.78"/><circle cx="643.5" cy="490.6" r="2.05" fill="#3e78be" fill-opacity="0.78"/><circle cx="671.5" cy="491.1" r="2.05" fill="#cd8c55" fill-opacity="0.78"/><circle cx="617.3" cy="491.3" r="2.05" fill="#f28523" fill-opacity="0.78"/><circle cx="663.4" cy="492.8" r="2.05" fill="#3e78be" fill-opacity="0.78"/><circle cx="677.4" cy="491.9" r="2.05" fill="#f28523" fill-opacity="0.78"/><circle cx="595.4" cy="492.8" r="2.05" fill="#f28523" fill-opacity="0.78"/><circle cx="606.8" cy="487.4" r="2.05" fill="#f28523" fill-opacity="0.78"/><circle cx="605.1" cy="486.5" r="2.05" fill="#cd8c55" fill-opacity="0.78"/><circle cx="583.8" cy="488.8" r="2.05" fill="#96826e" fill-opacity="0.78"/><circle cx="629.0" cy="491.5" r="2.05" fill="#cd8c55" fill-opacity="0.78"/><circle cx="594.0" cy="489.5" r="2.05" fill="#96826e" fill-opacity="0.78"/><circle cx="640.1" cy="489.6" r="2.05" fill="#cd8c55" fill-opacity="0.78"/><circle cx="667.3" cy="488.0" r="2.05" fill="#96826e" fill-opacity="0.78"/><circle cx="587.8" cy="490.3" r="2.05" fill="#3e78be" fill-opacity="0.78"/><circle cx="653.3" cy="490.5" r="2.05" fill="#96826e" fill-opacity="0.78"/><circle cx="660.3" cy="488.4" r="2.05" fill="#cd8c55" fill-opacity="0.78"/><circle cx="651.2" cy="491.1" r="2.05" fill="#3e78be" fill-opacity="0.78"/><circle cx="620.8" cy="490.9" r="2.05" fill="#cd8c55" fill-opacity="0.78"/><circle cx="659.5" cy="491.3" r="2.05" fill="#3e78be" fill-opacity="0.78"/><circle cx="671.6" cy="492.2" r="2.05" fill="#3e78be" fill-opacity="0.78"/><circle cx="617.1" cy="492.5" r="2.05" fill="#3e78be" fill-opacity="0.78"/><circle cx="627.1" cy="490.7" r="2.05" fill="#3e78be" fill-opacity="0.78"/><circle cx="609.8" cy="487.8" r="2.05" fill="#3e78be" fill-opacity="0.78"/><circle cx="656.7" cy="493.5" r="2.05" fill="#96826e" fill-opacity="0.78"/><circle cx="614.8" cy="489.9" r="2.05" fill="#cd8c55" fill-opacity="0.78"/><circle cx="598.1" cy="490.5" r="2.05" fill="#cd8c55" fill-opacity="0.78"/><circle cx="611.7" cy="494.0" r="2.05" fill="#f28523" fill-opacity="0.78"/><circle cx="592.9" cy="491.0" r="2.05" fill="#96826e" fill-opacity="0.78"/><circle cx="684.4" cy="487.1" r="2.05" fill="#cd8c55" fill-opacity="0.78"/><circle cx="611.4" cy="485.7" r="2.05" fill="#3e78be" fill-opacity="0.78"/><circle cx="618.7" cy="488.3" r="2.05" fill="#3e78be" fill-opacity="0.78"/><circle cx="677.0" cy="491.8" r="2.05" fill="#3e78be" fill-opacity="0.78"/><circle cx="643.8" cy="488.5" r="2.05" fill="#f28523" fill-opacity="0.78"/><circle cx="658.5" cy="490.6" r="2.05" fill="#f28523" fill-opacity="0.78"/><circle cx="677.2" cy="490.9" r="2.05" fill="#f28523" fill-opacity="0.78"/><circle cx="645.6" cy="489.9" r="2.05" fill="#f28523" fill-opacity="0.78"/><circle cx="680.3" cy="489.1" r="2.05" fill="#f28523" fill-opacity="0.78"/><circle cx="621.1" cy="491.8" r="2.05" fill="#f28523" fill-opacity="0.78"/><circle cx="610.6" cy="488.1" r="2.05" fill="#f28523" fill-opacity="0.78"/><circle cx="682.2" cy="489.3" r="2.05" fill="#3e78be" fill-opacity="0.78"/><circle cx="646.3" cy="488.8" r="2.05" fill="#96826e" fill-opacity="0.78"/><circle cx="657.0" cy="492.0" r="2.05" fill="#96826e" fill-opacity="0.78"/><circle cx="613.7" cy="489.5" r="2.05" fill="#cd8c55" fill-opacity="0.78"/><circle cx="643.2" cy="490.5" r="2.05" fill="#f28523" fill-opacity="0.78"/><circle cx="601.4" cy="488.4" r="2.05" fill="#cd8c55" fill-opacity="0.78"/><circle cx="652.2" cy="491.3" r="2.05" fill="#96826e" fill-opacity="0.78"/><circle cx="641.3" cy="489.1" r="2.05" fill="#f28523" fill-opacity="0.78"/><circle cx="648.5" cy="490.6" r="2.05" fill="#f28523" fill-opacity="0.78"/><circle cx="638.3" cy="489.5" r="2.05" fill="#3e78be" fill-opacity="0.78"/><circle cx="685.5" cy="495.0" r="2.05" fill="#3e78be" fill-opacity="0.78"/><circle cx="652.9" cy="489.6" r="2.05" fill="#3e78be" fill-opacity="0.78"/><circle cx="681.1" cy="490.6" r="2.05" fill="#3e78be" fill-opacity="0.78"/><circle cx="682.1" cy="492.4" r="2.05" fill="#f28523" fill-opacity="0.78"/><circle cx="677.5" cy="492.6" r="2.05" fill="#f28523" fill-opacity="0.78"/><circle cx="585.6" cy="487.2" r="2.05" fill="#3e78be" fill-opacity="0.78"/><circle cx="606.4" cy="488.0" r="2.05" fill="#3e78be" fill-opacity="0.78"/><circle cx="607.8" cy="491.6" r="2.05" fill="#96826e" fill-opacity="0.78"/><circle cx="680.6" cy="492.0" r="2.05" fill="#3e78be" fill-opacity="0.78"/><circle cx="588.7" cy="486.7" r="2.05" fill="#cd8c55" fill-opacity="0.78"/><circle cx="675.6" cy="495.3" r="2.05" fill="#f28523" fill-opacity="0.78"/><circle cx="659.5" cy="490.9" r="2.05" fill="#96826e" fill-opacity="0.78"/><circle cx="603.1" cy="489.3" r="2.05" fill="#cd8c55" fill-opacity="0.78"/><circle cx="646.3" cy="489.3" r="2.05" fill="#cd8c55" fill-opacity="0.78"/><circle cx="582.9" cy="488.8" r="2.05" fill="#3e78be" fill-opacity="0.78"/><circle cx="674.5" cy="489.8" r="2.05" fill="#f28523" fill-opacity="0.78"/><circle cx="629.9" cy="491.3" r="2.05" fill="#3e78be" fill-opacity="0.78"/><circle cx="644.0" cy="488.2" r="2.05" fill="#96826e" fill-opacity="0.78"/><circle cx="607.4" cy="491.9" r="2.05" fill="#cd8c55" fill-opacity="0.78"/><circle cx="579.1" cy="488.7" r="2.05" fill="#96826e" fill-opacity="0.78"/><circle cx="595.7" cy="492.1" r="2.05" fill="#3e78be" fill-opacity="0.78"/><circle cx="660.4" cy="491.2" r="2.05" fill="#3e78be" fill-opacity="0.78"/><circle cx="627.5" cy="492.9" r="2.05" fill="#cd8c55" fill-opacity="0.78"/><circle cx="659.4" cy="492.1" r="2.05" fill="#96826e" fill-opacity="0.78"/><circle cx="672.9" cy="487.6" r="2.05" fill="#3e78be" fill-opacity="0.78"/><circle cx="665.5" cy="490.5" r="2.05" fill="#f28523" fill-opacity="0.78"/><circle cx="658.7" cy="490.4" r="2.05" fill="#3e78be" fill-opacity="0.78"/><circle cx="665.7" cy="488.6" r="2.05" fill="#3e78be" fill-opacity="0.78"/><circle cx="662.4" cy="491.4" r="2.05" fill="#3e78be" fill-opacity="0.78"/><circle cx="624.4" cy="487.6" r="2.05" fill="#f28523" fill-opacity="0.78"/><circle cx="620.3" cy="487.1" r="2.05" fill="#cd8c55" fill-opacity="0.78"/><circle cx="630.9" cy="491.2" r="2.05" fill="#96826e" fill-opacity="0.78"/><circle cx="611.1" cy="489.2" r="2.05" fill="#f28523" fill-opacity="0.78"/><circle cx="627.4" cy="492.0" r="2.05" fill="#cd8c55" fill-opacity="0.78"/><circle cx="606.3" cy="487.3" r="2.05" fill="#f28523" fill-opacity="0.78"/><circle cx="671.0" cy="492.4" r="2.05" fill="#3e78be" fill-opacity="0.78"/><circle cx="685.8" cy="493.1" r="2.05" fill="#3e78be" fill-opacity="0.78"/><circle cx="639.1" cy="492.5" r="2.05" fill="#96826e" fill-opacity="0.78"/><circle cx="649.2" cy="489.7" r="2.05" fill="#3e78be" fill-opacity="0.78"/><circle cx="665.0" cy="488.4" r="2.05" fill="#cd8c55" fill-opacity="0.78"/><circle cx="617.2" cy="488.1" r="2.05" fill="#96826e" fill-opacity="0.78"/><circle cx="629.0" cy="487.2" r="2.05" fill="#3e78be" fill-opacity="0.78"/><circle cx="595.0" cy="487.5" r="2.05" fill="#96826e" fill-opacity="0.78"/><circle cx="640.3" cy="488.7" r="2.05" fill="#3e78be" fill-opacity="0.78"/><circle cx="587.4" cy="492.5" r="2.05" fill="#f28523" fill-opacity="0.78"/><circle cx="589.9" cy="488.1" r="2.05" fill="#f28523" fill-opacity="0.78"/><circle cx="647.0" cy="490.7" r="2.05" fill="#f28523" fill-opacity="0.78"/><circle cx="669.3" cy="492.1" r="2.05" fill="#3e78be" fill-opacity="0.78"/><circle cx="659.0" cy="487.1" r="2.05" fill="#96826e" fill-opacity="0.78"/><circle cx="674.9" cy="494.1" r="2.05" fill="#3e78be" fill-opacity="0.78"/><circle cx="614.2" cy="487.2" r="2.05" fill="#f28523" fill-opacity="0.78"/><circle cx="587.4" cy="489.4" r="2.05" fill="#3e78be" fill-opacity="0.78"/><circle cx="644.6" cy="490.5" r="2.05" fill="#f28523" fill-opacity="0.78"/><circle cx="620.1" cy="489.6" r="2.05" fill="#f28523" fill-opacity="0.78"/><circle cx="619.5" cy="489.8" r="2.05" fill="#f28523" fill-opacity="0.78"/><circle cx="643.3" cy="490.1" r="2.05" fill="#f28523" fill-opacity="0.78"/><circle cx="618.8" cy="492.9" r="2.05" fill="#cd8c55" fill-opacity="0.78"/><circle cx="662.1" cy="488.3" r="2.05" fill="#96826e" fill-opacity="0.78"/><circle cx="588.8" cy="487.0" r="2.05" fill="#cd8c55" fill-opacity="0.78"/><circle cx="672.7" cy="492.4" r="2.05" fill="#96826e" fill-opacity="0.78"/><circle cx="608.3" cy="487.7" r="2.05" fill="#96826e" fill-opacity="0.78"/><circle cx="678.1" cy="491.8" r="2.05" fill="#cd8c55" fill-opacity="0.78"/><circle cx="617.1" cy="492.4" r="2.05" fill="#3e78be" fill-opacity="0.78"/><circle cx="668.7" cy="490.4" r="2.05" fill="#3e78be" fill-opacity="0.78"/><circle cx="619.1" cy="491.0" r="2.05" fill="#3e78be" fill-opacity="0.78"/><circle cx="623.3" cy="490.1" r="2.05" fill="#f28523" fill-opacity="0.78"/><circle cx="624.1" cy="488.7" r="2.05" fill="#cd8c55" fill-opacity="0.78"/><circle cx="677.9" cy="493.6" r="2.05" fill="#f28523" fill-opacity="0.78"/><circle cx="641.4" cy="490.1" r="2.05" fill="#f28523" fill-opacity="0.78"/><circle cx="609.9" cy="490.2" r="2.05" fill="#f28523" fill-opacity="0.78"/><circle cx="680.6" cy="490.6" r="2.05" fill="#96826e" fill-opacity="0.78"/><circle cx="663.8" cy="493.5" r="2.05" fill="#cd8c55" fill-opacity="0.78"/><circle cx="639.4" cy="491.5" r="2.05" fill="#3e78be" fill-opacity="0.78"/><circle cx="617.3" cy="489.2" r="2.05" fill="#3e78be" fill-opacity="0.78"/><circle cx="646.3" cy="490.8" r="2.05" fill="#3e78be" fill-opacity="0.78"/><circle cx="675.2" cy="489.8" r="2.05" fill="#96826e" fill-opacity="0.78"/><circle cx="603.4" cy="490.9" r="2.05" fill="#3e78be" fill-opacity="0.78"/><circle cx="590.5" cy="491.2" r="2.05" fill="#3e78be" fill-opacity="0.78"/><circle cx="659.2" cy="494.9" r="2.05" fill="#3e78be" fill-opacity="0.78"/><circle cx="619.8" cy="492.3" r="2.05" fill="#f28523" fill-opacity="0.78"/><circle cx="667.9" cy="489.8" r="2.05" fill="#3e78be" fill-opacity="0.78"/><circle cx="651.1" cy="491.4" r="2.05" fill="#3e78be" fill-opacity="0.78"/><circle cx="639.7" cy="490.7" r="2.05" fill="#f28523" fill-opacity="0.78"/><circle cx="647.5" cy="492.2" r="2.05" fill="#cd8c55" fill-opacity="0.78"/><circle cx="582.3" cy="487.3" r="2.05" fill="#96826e" fill-opacity="0.78"/><circle cx="645.7" cy="489.7" r="2.05" fill="#3e78be" fill-opacity="0.78"/><circle cx="672.6" cy="491.7" r="2.05" fill="#f28523" fill-opacity="0.78"/><circle cx="667.3" cy="489.0" r="2.05" fill="#3e78be" fill-opacity="0.78"/><circle cx="667.6" cy="489.5" r="2.05" fill="#3e78be" fill-opacity="0.78"/><circle cx="680.8" cy="488.4" r="2.05" fill="#96826e" fill-opacity="0.78"/><circle cx="630.5" cy="490.2" r="2.05" fill="#f28523" fill-opacity="0.78"/><circle cx="654.7" cy="455.8" r="2.05" fill="#f28523" fill-opacity="0.78"/><circle cx="660.0" cy="443.0" r="2.05" fill="#3e78be" fill-opacity="0.78"/><circle cx="640.2" cy="483.2" r="2.05" fill="#96826e" fill-opacity="0.78"/><circle cx="671.8" cy="449.2" r="2.05" fill="#cd8c55" fill-opacity="0.78"/><circle cx="664.0" cy="435.2" r="2.05" fill="#f28523" fill-opacity="0.78"/><circle cx="639.3" cy="476.9" r="2.05" fill="#f28523" fill-opacity="0.78"/><circle cx="664.2" cy="452.2" r="2.05" fill="#96826e" fill-opacity="0.78"/><circle cx="672.8" cy="430.1" r="2.05" fill="#f28523" fill-opacity="0.78"/><circle cx="662.1" cy="447.2" r="2.05" fill="#96826e" fill-opacity="0.78"/><circle cx="654.0" cy="447.3" r="2.05" fill="#3e78be" fill-opacity="0.78"/><circle cx="656.9" cy="461.8" r="2.05" fill="#3e78be" fill-opacity="0.78"/><circle cx="661.7" cy="460.5" r="2.05" fill="#3e78be" fill-opacity="0.78"/><circle cx="667.0" cy="449.8" r="2.05" fill="#f28523" fill-opacity="0.78"/><circle cx="658.7" cy="440.1" r="2.05" fill="#3e78be" fill-opacity="0.78"/><circle cx="640.8" cy="460.7" r="2.05" fill="#3e78be" fill-opacity="0.78"/><circle cx="676.4" cy="443.7" r="2.05" fill="#f28523" fill-opacity="0.78"/><circle cx="673.6" cy="456.5" r="2.05" fill="#f28523" fill-opacity="0.78"/><circle cx="638.8" cy="470.0" r="2.05" fill="#96826e" fill-opacity="0.78"/><circle cx="657.7" cy="466.0" r="2.05" fill="#3e78be" fill-opacity="0.78"/><circle cx="663.6" cy="448.7" r="2.05" fill="#96826e" fill-opacity="0.78"/><circle cx="663.1" cy="449.2" r="2.05" fill="#3e78be" fill-opacity="0.78"/><circle cx="671.2" cy="446.1" r="2.05" fill="#3e78be" fill-opacity="0.78"/><circle cx="668.2" cy="449.7" r="2.05" fill="#96826e" fill-opacity="0.78"/><circle cx="657.5" cy="460.3" r="2.05" fill="#f28523" fill-opacity="0.78"/><circle cx="663.9" cy="436.7" r="2.05" fill="#3e78be" fill-opacity="0.78"/><circle cx="664.2" cy="446.5" r="2.05" fill="#cd8c55" fill-opacity="0.78"/><circle cx="674.3" cy="436.3" r="2.05" fill="#3e78be" fill-opacity="0.78"/><circle cx="657.7" cy="456.9" r="2.05" fill="#3e78be" fill-opacity="0.78"/><circle cx="650.2" cy="468.7" r="2.05" fill="#96826e" fill-opacity="0.78"/><circle cx="668.5" cy="439.6" r="2.05" fill="#f28523" fill-opacity="0.78"/><circle cx="658.5" cy="458.5" r="2.05" fill="#3e78be" fill-opacity="0.78"/><circle cx="647.5" cy="459.9" r="2.05" fill="#cd8c55" fill-opacity="0.78"/><circle cx="661.3" cy="447.2" r="2.05" fill="#f28523" fill-opacity="0.78"/><circle cx="655.8" cy="459.1" r="2.05" fill="#cd8c55" fill-opacity="0.78"/><circle cx="647.2" cy="476.9" r="2.05" fill="#96826e" fill-opacity="0.78"/><circle cx="652.7" cy="460.9" r="2.05" fill="#3e78be" fill-opacity="0.78"/><circle cx="645.3" cy="470.3" r="2.05" fill="#f28523" fill-opacity="0.78"/><circle cx="647.2" cy="473.6" r="2.05" fill="#cd8c55" fill-opacity="0.78"/><circle cx="644.4" cy="465.4" r="2.05" fill="#cd8c55" fill-opacity="0.78"/><circle cx="639.4" cy="478.0" r="2.05" fill="#cd8c55" fill-opacity="0.78"/><circle cx="644.1" cy="477.3" r="2.05" fill="#cd8c55" fill-opacity="0.78"/><circle cx="660.9" cy="474.7" r="2.05" fill="#96826e" fill-opacity="0.78"/><circle cx="664.5" cy="450.2" r="2.05" fill="#f28523" fill-opacity="0.78"/><circle cx="685.7" cy="444.6" r="2.05" fill="#3e78be" fill-opacity="0.78"/><circle cx="678.1" cy="444.4" r="2.05" fill="#3e78be" fill-opacity="0.78"/><circle cx="653.7" cy="464.1" r="2.05" fill="#96826e" fill-opacity="0.78"/><circle cx="674.9" cy="440.7" r="2.05" fill="#f28523" fill-opacity="0.78"/><circle cx="667.0" cy="450.4" r="2.05" fill="#96826e" fill-opacity="0.78"/><circle cx="682.3" cy="446.4" r="2.05" fill="#f28523" fill-opacity="0.78"/><circle cx="667.8" cy="451.6" r="2.05" fill="#96826e" fill-opacity="0.78"/><circle cx="643.4" cy="488.6" r="2.05" fill="#cd8c55" fill-opacity="0.78"/><circle cx="653.9" cy="481.3" r="2.05" fill="#f28523" fill-opacity="0.78"/><circle cx="664.2" cy="468.7" r="2.05" fill="#f28523" fill-opacity="0.78"/><circle cx="642.2" cy="489.9" r="2.05" fill="#96826e" fill-opacity="0.78"/><circle cx="664.1" cy="462.9" r="2.05" fill="#96826e" fill-opacity="0.78"/><circle cx="647.8" cy="472.6" r="2.05" fill="#f28523" fill-opacity="0.78"/><circle cx="658.7" cy="464.8" r="2.05" fill="#96826e" fill-opacity="0.78"/><circle cx="647.1" cy="475.9" r="2.05" fill="#cd8c55" fill-opacity="0.78"/><circle cx="659.2" cy="456.0" r="2.05" fill="#cd8c55" fill-opacity="0.78"/><circle cx="644.1" cy="480.8" r="2.05" fill="#cd8c55" fill-opacity="0.78"/><circle cx="678.4" cy="454.8" r="2.05" fill="#3e78be" fill-opacity="0.78"/><circle cx="661.0" cy="463.8" r="2.05" fill="#cd8c55" fill-opacity="0.78"/><circle cx="659.2" cy="464.2" r="2.05" fill="#cd8c55" fill-opacity="0.78"/><circle cx="652.4" cy="467.5" r="2.05" fill="#f28523" fill-opacity="0.78"/><circle cx="685.8" cy="439.2" r="2.05" fill="#f28523" fill-opacity="0.78"/><circle cx="651.2" cy="468.7" r="2.05" fill="#cd8c55" fill-opacity="0.78"/><circle cx="678.6" cy="448.8" r="2.05" fill="#cd8c55" fill-opacity="0.78"/><circle cx="647.0" cy="478.3" r="2.05" fill="#f28523" fill-opacity="0.78"/><circle cx="664.5" cy="452.6" r="2.05" fill="#3e78be" fill-opacity="0.78"/><circle cx="648.9" cy="463.0" r="2.05" fill="#3e78be" fill-opacity="0.78"/><circle cx="657.6" cy="481.0" r="2.05" fill="#f28523" fill-opacity="0.78"/><circle cx="665.5" cy="452.8" r="2.05" fill="#96826e" fill-opacity="0.78"/><circle cx="666.6" cy="456.8" r="2.05" fill="#96826e" fill-opacity="0.78"/><circle cx="647.2" cy="482.1" r="2.05" fill="#3e78be" fill-opacity="0.78"/><circle cx="667.0" cy="460.4" r="2.05" fill="#3e78be" fill-opacity="0.78"/><circle cx="673.5" cy="430.6" r="2.05" fill="#cd8c55" fill-opacity="0.78"/><circle cx="669.2" cy="430.3" r="2.05" fill="#96826e" fill-opacity="0.78"/><circle cx="689.7" cy="434.1" r="2.05" fill="#f28523" fill-opacity="0.78"/><circle cx="675.5" cy="437.7" r="2.05" fill="#cd8c55" fill-opacity="0.78"/><circle cx="681.0" cy="434.5" r="2.05" fill="#3e78be" fill-opacity="0.78"/><circle cx="679.6" cy="440.0" r="2.05" fill="#96826e" fill-opacity="0.78"/><circle cx="685.3" cy="437.1" r="2.05" fill="#3e78be" fill-opacity="0.78"/><circle cx="677.7" cy="434.1" r="2.05" fill="#f28523" fill-opacity="0.78"/><circle cx="676.7" cy="443.6" r="2.05" fill="#3e78be" fill-opacity="0.78"/><circle cx="682.7" cy="443.4" r="2.05" fill="#f28523" fill-opacity="0.78"/><circle cx="683.1" cy="436.2" r="2.05" fill="#3e78be" fill-opacity="0.78"/><circle cx="677.1" cy="443.4" r="2.05" fill="#3e78be" fill-opacity="0.78"/><circle cx="677.3" cy="444.6" r="2.05" fill="#3e78be" fill-opacity="0.78"/><circle cx="665.2" cy="438.8" r="2.05" fill="#3e78be" fill-opacity="0.78"/><circle cx="674.1" cy="440.6" r="2.05" fill="#3e78be" fill-opacity="0.78"/><circle cx="665.5" cy="441.5" r="2.05" fill="#96826e" fill-opacity="0.78"/><circle cx="669.0" cy="445.2" r="2.05" fill="#3e78be" fill-opacity="0.78"/><circle cx="678.8" cy="435.1" r="2.05" fill="#3e78be" fill-opacity="0.78"/><circle cx="671.5" cy="431.8" r="2.05" fill="#3e78be" fill-opacity="0.78"/><circle cx="676.3" cy="435.1" r="2.05" fill="#3e78be" fill-opacity="0.78"/><circle cx="674.5" cy="442.6" r="2.05" fill="#3e78be" fill-opacity="0.78"/><circle cx="681.2" cy="425.1" r="2.05" fill="#cd8c55" fill-opacity="0.78"/><circle cx="683.7" cy="436.2" r="2.05" fill="#cd8c55" fill-opacity="0.78"/><circle cx="682.8" cy="441.9" r="2.05" fill="#f28523" fill-opacity="0.78"/><circle cx="671.8" cy="436.4" r="2.05" fill="#3e78be" fill-opacity="0.78"/><circle cx="673.9" cy="439.6" r="2.05" fill="#cd8c55" fill-opacity="0.78"/><circle cx="681.9" cy="439.0" r="2.05" fill="#3e78be" fill-opacity="0.78"/><circle cx="671.2" cy="433.7" r="2.05" fill="#f28523" fill-opacity="0.78"/><circle cx="678.2" cy="437.7" r="2.05" fill="#3e78be" fill-opacity="0.78"/><circle cx="675.2" cy="439.8" r="2.05" fill="#3e78be" fill-opacity="0.78"/><circle cx="686.8" cy="439.6" r="2.05" fill="#f28523" fill-opacity="0.78"/><circle cx="686.2" cy="461.9" r="2.05" fill="#f28523" fill-opacity="0.78"/><circle cx="689.0" cy="477.1" r="2.05" fill="#f28523" fill-opacity="0.78"/><circle cx="687.2" cy="465.3" r="2.05" fill="#3e78be" fill-opacity="0.78"/><circle cx="683.2" cy="471.2" r="2.05" fill="#3e78be" fill-opacity="0.78"/><circle cx="682.0" cy="478.7" r="2.05" fill="#3e78be" fill-opacity="0.78"/><circle cx="684.9" cy="429.9" r="2.05" fill="#cd8c55" fill-opacity="0.78"/><circle cx="690.4" cy="473.8" r="2.05" fill="#f28523" fill-opacity="0.78"/><circle cx="684.7" cy="467.1" r="2.05" fill="#3e78be" fill-opacity="0.78"/><circle cx="686.7" cy="481.7" r="2.05" fill="#3e78be" fill-opacity="0.78"/><circle cx="690.4" cy="429.1" r="2.05" fill="#96826e" fill-opacity="0.78"/><circle cx="683.0" cy="441.0" r="2.05" fill="#cd8c55" fill-opacity="0.78"/><circle cx="688.3" cy="451.3" r="2.05" fill="#f28523" fill-opacity="0.78"/><circle cx="689.4" cy="483.1" r="2.05" fill="#3e78be" fill-opacity="0.78"/><circle cx="686.0" cy="479.4" r="2.05" fill="#96826e" fill-opacity="0.78"/><circle cx="686.5" cy="490.1" r="2.05" fill="#f28523" fill-opacity="0.78"/><circle cx="687.4" cy="460.8" r="2.05" fill="#96826e" fill-opacity="0.78"/><circle cx="687.5" cy="478.1" r="2.05" fill="#3e78be" fill-opacity="0.78"/><circle cx="688.8" cy="490.6" r="2.05" fill="#cd8c55" fill-opacity="0.78"/><circle cx="683.8" cy="472.5" r="2.05" fill="#3e78be" fill-opacity="0.78"/><circle cx="689.2" cy="435.7" r="2.05" fill="#96826e" fill-opacity="0.78"/><circle cx="687.2" cy="465.9" r="2.05" fill="#f28523" fill-opacity="0.78"/><circle cx="686.4" cy="450.7" r="2.05" fill="#3e78be" fill-opacity="0.78"/><circle cx="685.9" cy="449.1" r="2.05" fill="#3e78be" fill-opacity="0.78"/><circle cx="686.8" cy="439.6" r="2.05" fill="#cd8c55" fill-opacity="0.78"/><circle cx="685.8" cy="485.3" r="2.05" fill="#3e78be" fill-opacity="0.78"/><circle cx="685.5" cy="477.8" r="2.05" fill="#96826e" fill-opacity="0.78"/><circle cx="687.5" cy="461.9" r="2.05" fill="#f28523" fill-opacity="0.78"/><circle cx="690.4" cy="487.6" r="2.05" fill="#3e78be" fill-opacity="0.78"/><circle cx="687.3" cy="454.7" r="2.05" fill="#3e78be" fill-opacity="0.78"/><circle cx="686.7" cy="440.8" r="2.05" fill="#3e78be" fill-opacity="0.78"/><circle cx="690.4" cy="478.8" r="2.05" fill="#f28523" fill-opacity="0.78"/><circle cx="685.6" cy="450.7" r="2.05" fill="#cd8c55" fill-opacity="0.78"/><circle cx="688.3" cy="493.5" r="2.05" fill="#f28523" fill-opacity="0.78"/><circle cx="688.9" cy="456.3" r="2.05" fill="#96826e" fill-opacity="0.78"/><circle cx="527.3" cy="530.2" r="2.05" fill="#96826e" fill-opacity="0.78"/><circle cx="519.7" cy="530.1" r="2.05" fill="#3e78be" fill-opacity="0.78"/><circle cx="537.1" cy="530.0" r="2.05" fill="#f28523" fill-opacity="0.78"/><circle cx="526.0" cy="530.2" r="2.05" fill="#f28523" fill-opacity="0.78"/><circle cx="532.9" cy="530.2" r="2.05" fill="#cd8c55" fill-opacity="0.78"/><circle cx="537.1" cy="530.2" r="2.05" fill="#3e78be" fill-opacity="0.78"/><circle cx="531.9" cy="530.4" r="2.05" fill="#f28523" fill-opacity="0.78"/><circle cx="543.7" cy="525.1" r="2.05" fill="#f28523" fill-opacity="0.78"/><circle cx="544.6" cy="527.1" r="2.05" fill="#3e78be" fill-opacity="0.78"/><circle cx="544.9" cy="526.2" r="2.05" fill="#3e78be" fill-opacity="0.78"/><circle cx="542.4" cy="526.5" r="2.05" fill="#f28523" fill-opacity="0.78"/><circle cx="587.3" cy="512.8" r="2.05" fill="#cd8c55" fill-opacity="0.78"/><circle cx="583.4" cy="515.5" r="2.05" fill="#f28523" fill-opacity="0.78"/><circle cx="604.0" cy="509.4" r="2.05" fill="#f28523" fill-opacity="0.78"/><circle cx="595.8" cy="512.5" r="2.05" fill="#f28523" fill-opacity="0.78"/><circle cx="559.0" cy="523.2" r="2.05" fill="#3e78be" fill-opacity="0.78"/><circle cx="577.4" cy="512.4" r="2.05" fill="#3e78be" fill-opacity="0.78"/><circle cx="586.2" cy="510.6" r="2.05" fill="#f28523" fill-opacity="0.78"/><circle cx="587.8" cy="509.6" r="2.05" fill="#cd8c55" fill-opacity="0.78"/><circle cx="741.8" cy="498.9" r="2.05" fill="#cd8c55" fill-opacity="0.78"/><circle cx="728.4" cy="509.0" r="2.05" fill="#3e78be" fill-opacity="0.78"/><circle cx="744.0" cy="493.9" r="2.05" fill="#cd8c55" fill-opacity="0.78"/><circle cx="731.9" cy="504.3" r="2.05" fill="#3e78be" fill-opacity="0.78"/><circle cx="717.4" cy="520.1" r="2.05" fill="#3e78be" fill-opacity="0.78"/><circle cx="721.4" cy="513.5" r="2.05" fill="#3e78be" fill-opacity="0.78"/><circle cx="715.1" cy="519.8" r="2.05" fill="#3e78be" fill-opacity="0.78"/><circle cx="718.1" cy="514.0" r="2.05" fill="#96826e" fill-opacity="0.78"/><circle cx="708.8" cy="528.8" r="2.05" fill="#f28523" fill-opacity="0.78"/><circle cx="750.3" cy="495.4" r="2.05" fill="#3e78be" fill-opacity="0.78"/><circle cx="725.9" cy="510.6" r="2.05" fill="#cd8c55" fill-opacity="0.78"/><circle cx="737.7" cy="505.6" r="2.05" fill="#3e78be" fill-opacity="0.78"/><circle cx="734.9" cy="504.7" r="2.05" fill="#3e78be" fill-opacity="0.78"/><circle cx="721.6" cy="513.2" r="2.05" fill="#3e78be" fill-opacity="0.78"/><circle cx="742.5" cy="498.1" r="2.05" fill="#96826e" fill-opacity="0.78"/><circle cx="750.1" cy="492.9" r="2.05" fill="#f28523" fill-opacity="0.78"/><circle cx="711.4" cy="526.6" r="2.05" fill="#3e78be" fill-opacity="0.78"/><circle cx="723.8" cy="516.5" r="2.05" fill="#96826e" fill-opacity="0.78"/><circle cx="740.3" cy="499.2" r="2.05" fill="#96826e" fill-opacity="0.78"/><circle cx="731.1" cy="506.6" r="2.05" fill="#3e78be" fill-opacity="0.78"/><circle cx="744.8" cy="495.7" r="2.05" fill="#3e78be" fill-opacity="0.78"/><circle cx="721.4" cy="524.2" r="2.05" fill="#3e78be" fill-opacity="0.78"/><circle cx="715.1" cy="520.8" r="2.05" fill="#cd8c55" fill-opacity="0.78"/><circle cx="718.0" cy="519.4" r="2.05" fill="#f28523" fill-opacity="0.78"/><circle cx="741.4" cy="497.1" r="2.05" fill="#f28523" fill-opacity="0.78"/><circle cx="742.0" cy="495.5" r="2.05" fill="#96826e" fill-opacity="0.78"/><circle cx="711.3" cy="528.3" r="2.05" fill="#3e78be" fill-opacity="0.78"/><circle cx="733.8" cy="501.3" r="2.05" fill="#3e78be" fill-opacity="0.78"/><circle cx="733.1" cy="507.1" r="2.05" fill="#f28523" fill-opacity="0.78"/><circle cx="730.1" cy="509.0" r="2.05" fill="#96826e" fill-opacity="0.78"/><circle cx="729.9" cy="507.9" r="2.05" fill="#96826e" fill-opacity="0.78"/><circle cx="736.7" cy="504.5" r="2.05" fill="#3e78be" fill-opacity="0.78"/><circle cx="721.3" cy="514.5" r="2.05" fill="#f28523" fill-opacity="0.78"/><circle cx="706.8" cy="529.8" r="2.05" fill="#cd8c55" fill-opacity="0.78"/><circle cx="732.4" cy="508.4" r="2.05" fill="#96826e" fill-opacity="0.78"/><circle cx="710.0" cy="529.2" r="2.05" fill="#96826e" fill-opacity="0.78"/><circle cx="726.4" cy="515.8" r="2.05" fill="#3e78be" fill-opacity="0.78"/><circle cx="724.1" cy="513.3" r="2.05" fill="#96826e" fill-opacity="0.78"/><circle cx="715.0" cy="520.6" r="2.05" fill="#f28523" fill-opacity="0.78"/><circle cx="725.2" cy="519.2" r="2.05" fill="#cd8c55" fill-opacity="0.78"/><circle cx="745.3" cy="490.3" r="2.05" fill="#cd8c55" fill-opacity="0.78"/><circle cx="736.7" cy="500.7" r="2.05" fill="#96826e" fill-opacity="0.78"/><circle cx="734.4" cy="504.0" r="2.05" fill="#96826e" fill-opacity="0.78"/><circle cx="718.9" cy="517.6" r="2.05" fill="#cd8c55" fill-opacity="0.78"/><circle cx="719.1" cy="522.1" r="2.05" fill="#96826e" fill-opacity="0.78"/><circle cx="719.3" cy="515.2" r="2.05" fill="#3e78be" fill-opacity="0.78"/><circle cx="732.0" cy="499.2" r="2.05" fill="#3e78be" fill-opacity="0.78"/><circle cx="715.3" cy="520.4" r="2.05" fill="#3e78be" fill-opacity="0.78"/><circle cx="726.8" cy="510.3" r="2.05" fill="#96826e" fill-opacity="0.78"/><circle cx="713.3" cy="528.2" r="2.05" fill="#cd8c55" fill-opacity="0.78"/><circle cx="736.0" cy="499.1" r="2.05" fill="#3e78be" fill-opacity="0.78"/><circle cx="721.2" cy="519.5" r="2.05" fill="#f28523" fill-opacity="0.78"/><circle cx="716.6" cy="526.9" r="2.05" fill="#3e78be" fill-opacity="0.78"/><circle cx="719.3" cy="516.1" r="2.05" fill="#cd8c55" fill-opacity="0.78"/><circle cx="716.7" cy="525.9" r="2.05" fill="#cd8c55" fill-opacity="0.78"/><circle cx="740.1" cy="497.8" r="2.05" fill="#f28523" fill-opacity="0.78"/><circle cx="737.6" cy="501.5" r="2.05" fill="#f28523" fill-opacity="0.78"/><circle cx="723.8" cy="516.0" r="2.05" fill="#f28523" fill-opacity="0.78"/><circle cx="742.5" cy="494.5" r="2.05" fill="#3e78be" fill-opacity="0.78"/><circle cx="712.7" cy="524.9" r="2.05" fill="#96826e" fill-opacity="0.78"/><circle cx="707.3" cy="532.3" r="2.05" fill="#3e78be" fill-opacity="0.78"/><circle cx="726.3" cy="514.6" r="2.05" fill="#f28523" fill-opacity="0.78"/><circle cx="723.2" cy="510.1" r="2.05" fill="#3e78be" fill-opacity="0.78"/><circle cx="727.1" cy="508.4" r="2.05" fill="#cd8c55" fill-opacity="0.78"/><circle cx="726.4" cy="510.9" r="2.05" fill="#f28523" fill-opacity="0.78"/><circle cx="802.5" cy="490.0" r="2.05" fill="#cd8c55" fill-opacity="0.78"/><circle cx="748.0" cy="489.4" r="2.05" fill="#f28523" fill-opacity="0.78"/><circle cx="800.9" cy="488.1" r="2.05" fill="#96826e" fill-opacity="0.78"/><circle cx="760.9" cy="491.6" r="2.05" fill="#f28523" fill-opacity="0.78"/><circle cx="776.8" cy="492.4" r="2.05" fill="#cd8c55" fill-opacity="0.78"/><circle cx="790.8" cy="490.0" r="2.05" fill="#96826e" fill-opacity="0.78"/><circle cx="790.5" cy="487.5" r="2.05" fill="#96826e" fill-opacity="0.78"/><circle cx="779.9" cy="492.0" r="2.05" fill="#f28523" fill-opacity="0.78"/><circle cx="768.9" cy="492.0" r="2.05" fill="#3e78be" fill-opacity="0.78"/><circle cx="769.6" cy="489.2" r="2.05" fill="#cd8c55" fill-opacity="0.78"/><circle cx="756.9" cy="492.6" r="2.05" fill="#96826e" fill-opacity="0.78"/><circle cx="771.9" cy="490.4" r="2.05" fill="#96826e" fill-opacity="0.78"/><circle cx="785.2" cy="489.6" r="2.05" fill="#3e78be" fill-opacity="0.78"/><circle cx="803.1" cy="487.7" r="2.05" fill="#cd8c55" fill-opacity="0.78"/><circle cx="801.9" cy="490.1" r="2.05" fill="#3e78be" fill-opacity="0.78"/><circle cx="763.5" cy="491.0" r="2.05" fill="#3e78be" fill-opacity="0.78"/><circle cx="761.6" cy="491.9" r="2.05" fill="#f28523" fill-opacity="0.78"/><circle cx="799.1" cy="490.0" r="2.05" fill="#3e78be" fill-opacity="0.78"/><circle cx="743.3" cy="493.7" r="2.05" fill="#f28523" fill-opacity="0.78"/><circle cx="793.6" cy="492.0" r="2.05" fill="#96826e" fill-opacity="0.78"/><circle cx="740.6" cy="488.8" r="2.05" fill="#96826e" fill-opacity="0.78"/><circle cx="759.4" cy="494.0" r="2.05" fill="#3e78be" fill-opacity="0.78"/><circle cx="782.9" cy="490.5" r="2.05" fill="#f28523" fill-opacity="0.78"/><circle cx="791.4" cy="492.7" r="2.05" fill="#3e78be" fill-opacity="0.78"/><circle cx="744.8" cy="491.6" r="2.05" fill="#cd8c55" fill-opacity="0.78"/><circle cx="748.5" cy="492.2" r="2.05" fill="#96826e" fill-opacity="0.78"/><circle cx="802.7" cy="486.8" r="2.05" fill="#3e78be" fill-opacity="0.78"/><circle cx="752.9" cy="492.3" r="2.05" fill="#3e78be" fill-opacity="0.78"/><circle cx="752.1" cy="490.8" r="2.05" fill="#3e78be" fill-opacity="0.78"/><circle cx="799.3" cy="490.2" r="2.05" fill="#3e78be" fill-opacity="0.78"/><circle cx="791.2" cy="492.6" r="2.05" fill="#f28523" fill-opacity="0.78"/><circle cx="778.3" cy="489.0" r="2.05" fill="#3e78be" fill-opacity="0.78"/><circle cx="749.8" cy="492.2" r="2.05" fill="#f28523" fill-opacity="0.78"/><circle cx="748.1" cy="492.2" r="2.05" fill="#3e78be" fill-opacity="0.78"/><circle cx="766.2" cy="493.3" r="2.05" fill="#96826e" fill-opacity="0.78"/><circle cx="785.7" cy="486.3" r="2.05" fill="#3e78be" fill-opacity="0.78"/><circle cx="749.8" cy="492.8" r="2.05" fill="#cd8c55" fill-opacity="0.78"/><circle cx="770.6" cy="491.2" r="2.05" fill="#3e78be" fill-opacity="0.78"/><circle cx="801.0" cy="493.2" r="2.05" fill="#3e78be" fill-opacity="0.78"/><circle cx="745.2" cy="494.5" r="2.05" fill="#3e78be" fill-opacity="0.78"/><circle cx="762.2" cy="490.5" r="2.05" fill="#96826e" fill-opacity="0.78"/><circle cx="766.4" cy="488.2" r="2.05" fill="#3e78be" fill-opacity="0.78"/><circle cx="798.4" cy="487.6" r="2.05" fill="#3e78be" fill-opacity="0.78"/><circle cx="748.1" cy="491.9" r="2.05" fill="#96826e" fill-opacity="0.78"/><circle cx="787.2" cy="488.9" r="2.05" fill="#cd8c55" fill-opacity="0.78"/><circle cx="765.4" cy="488.6" r="2.05" fill="#3e78be" fill-opacity="0.78"/><circle cx="757.8" cy="493.4" r="2.05" fill="#cd8c55" fill-opacity="0.78"/><circle cx="800.5" cy="489.5" r="2.05" fill="#cd8c55" fill-opacity="0.78"/><circle cx="786.2" cy="488.3" r="2.05" fill="#f28523" fill-opacity="0.78"/><circle cx="770.2" cy="489.4" r="2.05" fill="#f28523" fill-opacity="0.78"/><circle cx="800.9" cy="491.4" r="2.05" fill="#f28523" fill-opacity="0.78"/><circle cx="759.9" cy="491.2" r="2.05" fill="#96826e" fill-opacity="0.78"/><circle cx="763.5" cy="494.3" r="2.05" fill="#cd8c55" fill-opacity="0.78"/><circle cx="758.7" cy="493.2" r="2.05" fill="#f28523" fill-opacity="0.78"/><circle cx="802.7" cy="491.0" r="2.05" fill="#f28523" fill-opacity="0.78"/><circle cx="782.2" cy="488.0" r="2.05" fill="#f28523" fill-opacity="0.78"/><circle cx="802.4" cy="493.2" r="2.05" fill="#f28523" fill-opacity="0.78"/><circle cx="750.3" cy="487.6" r="2.05" fill="#96826e" fill-opacity="0.78"/><circle cx="769.3" cy="493.3" r="2.05" fill="#96826e" fill-opacity="0.78"/><circle cx="802.7" cy="491.4" r="2.05" fill="#96826e" fill-opacity="0.78"/><circle cx="798.9" cy="489.6" r="2.05" fill="#f28523" fill-opacity="0.78"/><circle cx="793.6" cy="491.9" r="2.05" fill="#96826e" fill-opacity="0.78"/><circle cx="763.9" cy="495.0" r="2.05" fill="#3e78be" fill-opacity="0.78"/><circle cx="756.4" cy="494.8" r="2.05" fill="#f28523" fill-opacity="0.78"/><circle cx="788.9" cy="493.0" r="2.05" fill="#3e78be" fill-opacity="0.78"/><circle cx="789.3" cy="492.4" r="2.05" fill="#f28523" fill-opacity="0.78"/><circle cx="805.7" cy="489.5" r="2.05" fill="#f28523" fill-opacity="0.78"/><circle cx="803.1" cy="489.9" r="2.05" fill="#96826e" fill-opacity="0.78"/><circle cx="767.7" cy="492.0" r="2.05" fill="#f28523" fill-opacity="0.78"/><circle cx="802.0" cy="490.3" r="2.05" fill="#3e78be" fill-opacity="0.78"/><circle cx="794.0" cy="489.4" r="2.05" fill="#3e78be" fill-opacity="0.78"/><circle cx="766.5" cy="488.8" r="2.05" fill="#3e78be" fill-opacity="0.78"/><circle cx="797.8" cy="487.0" r="2.05" fill="#3e78be" fill-opacity="0.78"/><circle cx="793.9" cy="489.4" r="2.05" fill="#96826e" fill-opacity="0.78"/><circle cx="797.2" cy="487.7" r="2.05" fill="#3e78be" fill-opacity="0.78"/><circle cx="799.7" cy="490.8" r="2.05" fill="#f28523" fill-opacity="0.78"/><circle cx="775.3" cy="491.9" r="2.05" fill="#96826e" fill-opacity="0.78"/><circle cx="765.1" cy="491.3" r="2.05" fill="#96826e" fill-opacity="0.78"/><circle cx="746.1" cy="493.4" r="2.05" fill="#96826e" fill-opacity="0.78"/><circle cx="768.6" cy="490.8" r="2.05" fill="#3e78be" fill-opacity="0.78"/><circle cx="760.9" cy="490.0" r="2.05" fill="#f28523" fill-opacity="0.78"/><circle cx="767.9" cy="490.2" r="2.05" fill="#3e78be" fill-opacity="0.78"/><circle cx="771.8" cy="495.9" r="2.05" fill="#f28523" fill-opacity="0.78"/><circle cx="775.7" cy="490.1" r="2.05" fill="#3e78be" fill-opacity="0.78"/><circle cx="790.4" cy="489.7" r="2.05" fill="#f28523" fill-opacity="0.78"/><circle cx="780.0" cy="490.9" r="2.05" fill="#96826e" fill-opacity="0.78"/><circle cx="749.5" cy="492.1" r="2.05" fill="#3e78be" fill-opacity="0.78"/><circle cx="796.0" cy="491.9" r="2.05" fill="#f28523" fill-opacity="0.78"/><circle cx="797.4" cy="489.3" r="2.05" fill="#3e78be" fill-opacity="0.78"/><circle cx="791.8" cy="489.9" r="2.05" fill="#f28523" fill-opacity="0.78"/><circle cx="795.9" cy="487.5" r="2.05" fill="#96826e" fill-opacity="0.78"/><circle cx="769.7" cy="487.4" r="2.05" fill="#3e78be" fill-opacity="0.78"/><circle cx="786.5" cy="490.2" r="2.05" fill="#3e78be" fill-opacity="0.78"/><circle cx="764.8" cy="492.5" r="2.05" fill="#f28523" fill-opacity="0.78"/><circle cx="758.0" cy="491.2" r="2.05" fill="#3e78be" fill-opacity="0.78"/><circle cx="744.2" cy="492.5" r="2.05" fill="#f28523" fill-opacity="0.78"/><circle cx="770.0" cy="494.1" r="2.05" fill="#3e78be" fill-opacity="0.78"/><circle cx="793.1" cy="494.0" r="2.05" fill="#cd8c55" fill-opacity="0.78"/><circle cx="791.2" cy="489.0" r="2.05" fill="#cd8c55" fill-opacity="0.78"/><circle cx="759.1" cy="491.7" r="2.05" fill="#cd8c55" fill-opacity="0.78"/><circle cx="772.1" cy="489.6" r="2.05" fill="#96826e" fill-opacity="0.78"/><circle cx="792.4" cy="490.2" r="2.05" fill="#96826e" fill-opacity="0.78"/><circle cx="772.9" cy="490.9" r="2.05" fill="#96826e" fill-opacity="0.78"/><circle cx="793.2" cy="488.3" r="2.05" fill="#cd8c55" fill-opacity="0.78"/><circle cx="800.4" cy="486.4" r="2.05" fill="#f28523" fill-opacity="0.78"/><circle cx="758.1" cy="489.7" r="2.05" fill="#3e78be" fill-opacity="0.78"/><circle cx="752.7" cy="490.6" r="2.05" fill="#f28523" fill-opacity="0.78"/><circle cx="769.7" cy="490.0" r="2.05" fill="#f28523" fill-opacity="0.78"/><circle cx="788.9" cy="489.1" r="2.05" fill="#cd8c55" fill-opacity="0.78"/><circle cx="753.0" cy="492.3" r="2.05" fill="#cd8c55" fill-opacity="0.78"/><circle cx="786.2" cy="493.3" r="2.05" fill="#f28523" fill-opacity="0.78"/><circle cx="770.0" cy="490.6" r="2.05" fill="#f28523" fill-opacity="0.78"/><circle cx="786.7" cy="490.4" r="2.05" fill="#f28523" fill-opacity="0.78"/><circle cx="771.2" cy="493.0" r="2.05" fill="#3e78be" fill-opacity="0.78"/><circle cx="776.5" cy="490.3" r="2.05" fill="#96826e" fill-opacity="0.78"/><circle cx="782.0" cy="488.8" r="2.05" fill="#f28523" fill-opacity="0.78"/><circle cx="794.8" cy="486.6" r="2.05" fill="#cd8c55" fill-opacity="0.78"/><circle cx="782.1" cy="491.1" r="2.05" fill="#f28523" fill-opacity="0.78"/><circle cx="781.7" cy="491.0" r="2.05" fill="#3e78be" fill-opacity="0.78"/><circle cx="760.1" cy="489.9" r="2.05" fill="#3e78be" fill-opacity="0.78"/><circle cx="806.1" cy="489.8" r="2.05" fill="#3e78be" fill-opacity="0.78"/><circle cx="777.6" cy="491.8" r="2.05" fill="#3e78be" fill-opacity="0.78"/><circle cx="785.7" cy="490.6" r="2.05" fill="#cd8c55" fill-opacity="0.78"/><circle cx="795.0" cy="490.9" r="2.05" fill="#f28523" fill-opacity="0.78"/><circle cx="801.7" cy="487.3" r="2.05" fill="#3e78be" fill-opacity="0.78"/><circle cx="788.9" cy="490.2" r="2.05" fill="#f28523" fill-opacity="0.78"/><circle cx="759.3" cy="493.0" r="2.05" fill="#f28523" fill-opacity="0.78"/><circle cx="775.1" cy="492.0" r="2.05" fill="#f28523" fill-opacity="0.78"/><circle cx="803.4" cy="488.7" r="2.05" fill="#cd8c55" fill-opacity="0.78"/><circle cx="780.5" cy="488.5" r="2.05" fill="#cd8c55" fill-opacity="0.78"/><circle cx="765.2" cy="492.4" r="2.05" fill="#3e78be" fill-opacity="0.78"/><circle cx="754.6" cy="492.6" r="2.05" fill="#96826e" fill-opacity="0.78"/><circle cx="791.0" cy="490.9" r="2.05" fill="#cd8c55" fill-opacity="0.78"/><circle cx="749.8" cy="491.3" r="2.05" fill="#f28523" fill-opacity="0.78"/><circle cx="806.2" cy="489.5" r="2.05" fill="#f28523" fill-opacity="0.78"/><circle cx="753.7" cy="492.1" r="2.05" fill="#3e78be" fill-opacity="0.78"/><circle cx="755.0" cy="491.8" r="2.05" fill="#f28523" fill-opacity="0.78"/><circle cx="765.5" cy="494.3" r="2.05" fill="#f28523" fill-opacity="0.78"/><circle cx="763.7" cy="491.6" r="2.05" fill="#3e78be" fill-opacity="0.78"/><circle cx="756.1" cy="490.6" r="2.05" fill="#f28523" fill-opacity="0.78"/><circle cx="790.2" cy="496.4" r="2.05" fill="#f28523" fill-opacity="0.78"/><circle cx="800.7" cy="496.5" r="2.05" fill="#f28523" fill-opacity="0.78"/><circle cx="787.1" cy="495.3" r="2.05" fill="#3e78be" fill-opacity="0.78"/><circle cx="778.9" cy="495.6" r="2.05" fill="#f28523" fill-opacity="0.78"/><circle cx="788.1" cy="495.0" r="2.05" fill="#f28523" fill-opacity="0.78"/><circle cx="798.9" cy="493.7" r="2.05" fill="#3e78be" fill-opacity="0.78"/><circle cx="795.0" cy="496.9" r="2.05" fill="#f28523" fill-opacity="0.78"/><circle cx="793.9" cy="496.4" r="2.05" fill="#f28523" fill-opacity="0.78"/><circle cx="794.5" cy="496.0" r="2.05" fill="#3e78be" fill-opacity="0.78"/><circle cx="800.6" cy="495.5" r="2.05" fill="#3e78be" fill-opacity="0.78"/><circle cx="792.9" cy="496.7" r="2.05" fill="#96826e" fill-opacity="0.78"/><circle cx="786.6" cy="495.7" r="2.05" fill="#cd8c55" fill-opacity="0.78"/><circle cx="799.4" cy="495.2" r="2.05" fill="#f28523" fill-opacity="0.78"/><circle cx="793.6" cy="495.6" r="2.05" fill="#96826e" fill-opacity="0.78"/><circle cx="792.6" cy="494.3" r="2.05" fill="#96826e" fill-opacity="0.78"/><circle cx="786.6" cy="494.6" r="2.05" fill="#3e78be" fill-opacity="0.78"/><circle cx="796.9" cy="494.3" r="2.05" fill="#3e78be" fill-opacity="0.78"/><circle cx="783.8" cy="495.5" r="2.05" fill="#96826e" fill-opacity="0.78"/><circle cx="787.7" cy="496.6" r="2.05" fill="#3e78be" fill-opacity="0.78"/><circle cx="790.3" cy="493.3" r="2.05" fill="#3e78be" fill-opacity="0.78"/><circle cx="788.3" cy="494.4" r="2.05" fill="#96826e" fill-opacity="0.78"/><circle cx="787.8" cy="493.8" r="2.05" fill="#96826e" fill-opacity="0.78"/><circle cx="792.0" cy="496.7" r="2.05" fill="#f28523" fill-opacity="0.78"/><circle cx="803.3" cy="496.4" r="2.05" fill="#96826e" fill-opacity="0.78"/><circle cx="790.2" cy="494.9" r="2.05" fill="#f28523" fill-opacity="0.78"/><circle cx="791.2" cy="494.8" r="2.05" fill="#3e78be" fill-opacity="0.78"/><circle cx="792.3" cy="495.0" r="2.05" fill="#cd8c55" fill-opacity="0.78"/><circle cx="793.3" cy="496.4" r="2.05" fill="#96826e" fill-opacity="0.78"/><circle cx="793.3" cy="495.6" r="2.05" fill="#3e78be" fill-opacity="0.78"/><circle cx="788.5" cy="493.1" r="2.05" fill="#f28523" fill-opacity="0.78"/><circle cx="804.3" cy="497.8" r="2.05" fill="#96826e" fill-opacity="0.78"/><circle cx="803.6" cy="495.8" r="2.05" fill="#3e78be" fill-opacity="0.78"/><circle cx="784.6" cy="497.5" r="2.05" fill="#f28523" fill-opacity="0.78"/><circle cx="796.4" cy="494.6" r="2.05" fill="#f28523" fill-opacity="0.78"/><circle cx="784.7" cy="496.2" r="2.05" fill="#3e78be" fill-opacity="0.78"/><circle cx="797.9" cy="455.5" r="2.05" fill="#f28523" fill-opacity="0.78"/><circle cx="794.7" cy="467.9" r="2.05" fill="#cd8c55" fill-opacity="0.78"/><circle cx="809.9" cy="449.9" r="2.05" fill="#f28523" fill-opacity="0.78"/><circle cx="791.9" cy="462.2" r="2.05" fill="#3e78be" fill-opacity="0.78"/><circle cx="800.0" cy="471.8" r="2.05" fill="#f28523" fill-opacity="0.78"/><circle cx="786.5" cy="481.0" r="2.05" fill="#f28523" fill-opacity="0.78"/><circle cx="797.0" cy="454.7" r="2.05" fill="#3e78be" fill-opacity="0.78"/><circle cx="797.5" cy="455.2" r="2.05" fill="#f28523" fill-opacity="0.78"/><circle cx="793.9" cy="475.6" r="2.05" fill="#96826e" fill-opacity="0.78"/><circle cx="791.1" cy="489.4" r="2.05" fill="#f28523" fill-opacity="0.78"/><circle cx="794.1" cy="470.8" r="2.05" fill="#3e78be" fill-opacity="0.78"/><circle cx="805.6" cy="459.1" r="2.05" fill="#f28523" fill-opacity="0.78"/><circle cx="794.7" cy="461.0" r="2.05" fill="#3e78be" fill-opacity="0.78"/><circle cx="791.0" cy="472.0" r="2.05" fill="#cd8c55" fill-opacity="0.78"/><circle cx="797.6" cy="471.9" r="2.05" fill="#cd8c55" fill-opacity="0.78"/><circle cx="791.3" cy="466.4" r="2.05" fill="#3e78be" fill-opacity="0.78"/><circle cx="796.5" cy="461.7" r="2.05" fill="#3e78be" fill-opacity="0.78"/><circle cx="800.3" cy="461.9" r="2.05" fill="#96826e" fill-opacity="0.78"/><circle cx="819.6" cy="433.3" r="2.05" fill="#f28523" fill-opacity="0.78"/><circle cx="813.4" cy="450.6" r="2.05" fill="#cd8c55" fill-opacity="0.78"/><circle cx="808.1" cy="448.5" r="2.05" fill="#f28523" fill-opacity="0.78"/><circle cx="802.5" cy="448.4" r="2.05" fill="#f28523" fill-opacity="0.78"/><circle cx="817.5" cy="440.9" r="2.05" fill="#96826e" fill-opacity="0.78"/><circle cx="802.4" cy="449.4" r="2.05" fill="#f28523" fill-opacity="0.78"/><circle cx="821.8" cy="437.0" r="2.05" fill="#cd8c55" fill-opacity="0.78"/><circle cx="809.5" cy="449.6" r="2.05" fill="#96826e" fill-opacity="0.78"/><circle cx="796.6" cy="447.1" r="2.05" fill="#cd8c55" fill-opacity="0.78"/><circle cx="823.9" cy="435.1" r="2.05" fill="#3e78be" fill-opacity="0.78"/><circle cx="819.5" cy="440.5" r="2.05" fill="#cd8c55" fill-opacity="0.78"/><circle cx="820.4" cy="442.4" r="2.05" fill="#96826e" fill-opacity="0.78"/><circle cx="818.3" cy="439.6" r="2.05" fill="#f28523" fill-opacity="0.78"/><circle cx="806.4" cy="453.8" r="2.05" fill="#3e78be" fill-opacity="0.78"/><circle cx="806.6" cy="446.4" r="2.05" fill="#96826e" fill-opacity="0.78"/><circle cx="818.3" cy="442.0" r="2.05" fill="#3e78be" fill-opacity="0.78"/><circle cx="826.2" cy="433.1" r="2.05" fill="#f28523" fill-opacity="0.78"/><circle cx="812.9" cy="439.3" r="2.05" fill="#96826e" fill-opacity="0.78"/><circle cx="841.1" cy="454.7" r="2.05" fill="#f28523" fill-opacity="0.78"/><circle cx="821.1" cy="463.3" r="2.05" fill="#3e78be" fill-opacity="0.78"/><circle cx="827.5" cy="462.5" r="2.05" fill="#f28523" fill-opacity="0.78"/><circle cx="828.9" cy="466.1" r="2.05" fill="#cd8c55" fill-opacity="0.78"/><circle cx="831.8" cy="457.1" r="2.05" fill="#f28523" fill-opacity="0.78"/><circle cx="817.9" cy="479.7" r="2.05" fill="#96826e" fill-opacity="0.78"/><circle cx="811.2" cy="482.6" r="2.05" fill="#96826e" fill-opacity="0.78"/><circle cx="804.5" cy="487.8" r="2.05" fill="#cd8c55" fill-opacity="0.78"/><circle cx="820.5" cy="469.5" r="2.05" fill="#3e78be" fill-opacity="0.78"/><circle cx="824.5" cy="464.9" r="2.05" fill="#cd8c55" fill-opacity="0.78"/><circle cx="814.8" cy="477.3" r="2.05" fill="#f28523" fill-opacity="0.78"/><circle cx="828.1" cy="471.2" r="2.05" fill="#cd8c55" fill-opacity="0.78"/><circle cx="822.1" cy="466.9" r="2.05" fill="#3e78be" fill-opacity="0.78"/><circle cx="833.3" cy="462.7" r="2.05" fill="#f28523" fill-opacity="0.78"/><circle cx="846.7" cy="459.3" r="2.05" fill="#f28523" fill-opacity="0.78"/><circle cx="807.4" cy="483.4" r="2.05" fill="#f28523" fill-opacity="0.78"/><circle cx="818.2" cy="478.4" r="2.05" fill="#f28523" fill-opacity="0.78"/><circle cx="817.2" cy="481.6" r="2.05" fill="#96826e" fill-opacity="0.78"/><circle cx="858.5" cy="445.8" r="2.05" fill="#3e78be" fill-opacity="0.78"/><circle cx="861.5" cy="443.5" r="2.05" fill="#cd8c55" fill-opacity="0.78"/><circle cx="854.8" cy="438.0" r="2.05" fill="#96826e" fill-opacity="0.78"/><circle cx="836.9" cy="434.7" r="2.05" fill="#3e78be" fill-opacity="0.78"/><circle cx="859.9" cy="440.3" r="2.05" fill="#3e78be" fill-opacity="0.78"/><circle cx="853.3" cy="433.8" r="2.05" fill="#96826e" fill-opacity="0.78"/><circle cx="836.1" cy="432.7" r="2.05" fill="#3e78be" fill-opacity="0.78"/><circle cx="843.8" cy="429.8" r="2.05" fill="#96826e" fill-opacity="0.78"/><circle cx="835.5" cy="435.2" r="2.05" fill="#96826e" fill-opacity="0.78"/><circle cx="833.9" cy="439.9" r="2.05" fill="#f28523" fill-opacity="0.78"/><circle cx="830.6" cy="435.9" r="2.05" fill="#3e78be" fill-opacity="0.78"/><circle cx="845.3" cy="436.1" r="2.05" fill="#f28523" fill-opacity="0.78"/><circle cx="838.8" cy="429.2" r="2.05" fill="#96826e" fill-opacity="0.78"/><circle cx="835.4" cy="436.5" r="2.05" fill="#3e78be" fill-opacity="0.78"/><circle cx="848.0" cy="436.6" r="2.05" fill="#3e78be" fill-opacity="0.78"/><circle cx="836.8" cy="432.5" r="2.05" fill="#3e78be" fill-opacity="0.78"/><circle cx="863.7" cy="439.2" r="2.05" fill="#3e78be" fill-opacity="0.78"/><circle cx="855.5" cy="437.3" r="2.05" fill="#cd8c55" fill-opacity="0.78"/><circle cx="854.2" cy="439.2" r="2.05" fill="#96826e" fill-opacity="0.78"/><circle cx="854.4" cy="441.0" r="2.05" fill="#cd8c55" fill-opacity="0.78"/><circle cx="841.0" cy="439.5" r="2.05" fill="#3e78be" fill-opacity="0.78"/><circle cx="845.0" cy="434.4" r="2.05" fill="#3e78be" fill-opacity="0.78"/><circle cx="831.8" cy="430.0" r="2.05" fill="#cd8c55" fill-opacity="0.78"/><circle cx="849.8" cy="436.7" r="2.05" fill="#3e78be" fill-opacity="0.78"/><circle cx="836.4" cy="441.5" r="2.05" fill="#96826e" fill-opacity="0.78"/><circle cx="870.5" cy="503.6" r="2.05" fill="#3e78be" fill-opacity="0.78"/><circle cx="863.6" cy="507.4" r="2.05" fill="#f28523" fill-opacity="0.78"/><circle cx="867.3" cy="475.1" r="2.05" fill="#96826e" fill-opacity="0.78"/><circle cx="864.7" cy="494.9" r="2.05" fill="#f28523" fill-opacity="0.78"/><circle cx="871.8" cy="469.9" r="2.05" fill="#f28523" fill-opacity="0.78"/><circle cx="869.5" cy="519.9" r="2.05" fill="#3e78be" fill-opacity="0.78"/><circle cx="871.0" cy="466.9" r="2.05" fill="#3e78be" fill-opacity="0.78"/><circle cx="869.0" cy="503.5" r="2.05" fill="#3e78be" fill-opacity="0.78"/><circle cx="869.9" cy="491.7" r="2.05" fill="#96826e" fill-opacity="0.78"/><circle cx="864.1" cy="469.5" r="2.05" fill="#3e78be" fill-opacity="0.78"/><circle cx="861.2" cy="494.8" r="2.05" fill="#3e78be" fill-opacity="0.78"/><circle cx="868.4" cy="474.9" r="2.05" fill="#96826e" fill-opacity="0.78"/><circle cx="876.0" cy="524.0" r="2.05" fill="#3e78be" fill-opacity="0.78"/><circle cx="860.5" cy="480.5" r="2.05" fill="#3e78be" fill-opacity="0.78"/><circle cx="871.4" cy="491.4" r="2.05" fill="#3e78be" fill-opacity="0.78"/><circle cx="869.2" cy="516.2" r="2.05" fill="#96826e" fill-opacity="0.78"/><circle cx="861.7" cy="446.8" r="2.05" fill="#cd8c55" fill-opacity="0.78"/><circle cx="874.4" cy="521.2" r="2.05" fill="#96826e" fill-opacity="0.78"/><circle cx="861.4" cy="467.7" r="2.05" fill="#cd8c55" fill-opacity="0.78"/><circle cx="858.2" cy="487.7" r="2.05" fill="#cd8c55" fill-opacity="0.78"/><circle cx="877.1" cy="518.7" r="2.05" fill="#f28523" fill-opacity="0.78"/><circle cx="864.3" cy="496.7" r="2.05" fill="#3e78be" fill-opacity="0.78"/><circle cx="871.0" cy="520.8" r="2.05" fill="#3e78be" fill-opacity="0.78"/><circle cx="864.6" cy="471.2" r="2.05" fill="#f28523" fill-opacity="0.78"/><circle cx="861.4" cy="463.9" r="2.05" fill="#3e78be" fill-opacity="0.78"/><circle cx="860.2" cy="460.0" r="2.05" fill="#f28523" fill-opacity="0.78"/><circle cx="865.7" cy="459.3" r="2.05" fill="#f28523" fill-opacity="0.78"/><circle cx="872.5" cy="475.7" r="2.05" fill="#f28523" fill-opacity="0.78"/><circle cx="866.8" cy="516.5" r="2.05" fill="#96826e" fill-opacity="0.78"/><circle cx="866.9" cy="495.3" r="2.05" fill="#cd8c55" fill-opacity="0.78"/><circle cx="861.9" cy="458.6" r="2.05" fill="#96826e" fill-opacity="0.78"/><circle cx="862.7" cy="509.9" r="2.05" fill="#3e78be" fill-opacity="0.78"/><circle cx="866.1" cy="520.9" r="2.05" fill="#96826e" fill-opacity="0.78"/><circle cx="867.8" cy="459.7" r="2.05" fill="#3e78be" fill-opacity="0.78"/><circle cx="872.0" cy="512.3" r="2.05" fill="#cd8c55" fill-opacity="0.78"/><circle cx="859.0" cy="482.6" r="2.05" fill="#96826e" fill-opacity="0.78"/><circle cx="873.4" cy="525.2" r="2.05" fill="#3e78be" fill-opacity="0.78"/><circle cx="871.7" cy="507.5" r="2.05" fill="#3e78be" fill-opacity="0.78"/><circle cx="862.7" cy="466.9" r="2.05" fill="#cd8c55" fill-opacity="0.78"/><circle cx="865.1" cy="461.8" r="2.05" fill="#3e78be" fill-opacity="0.78"/><circle cx="866.0" cy="476.1" r="2.05" fill="#3e78be" fill-opacity="0.78"/><circle cx="870.2" cy="476.1" r="2.05" fill="#cd8c55" fill-opacity="0.78"/><circle cx="865.5" cy="460.0" r="2.05" fill="#f28523" fill-opacity="0.78"/><circle cx="858.2" cy="479.6" r="2.05" fill="#cd8c55" fill-opacity="0.78"/><circle cx="874.1" cy="526.8" r="2.05" fill="#3e78be" fill-opacity="0.78"/><circle cx="861.1" cy="457.2" r="2.05" fill="#f28523" fill-opacity="0.78"/><circle cx="870.1" cy="486.9" r="2.05" fill="#3e78be" fill-opacity="0.78"/><circle cx="868.8" cy="464.1" r="2.05" fill="#96826e" fill-opacity="0.78"/><circle cx="868.9" cy="490.1" r="2.05" fill="#f28523" fill-opacity="0.78"/><circle cx="864.7" cy="484.6" r="2.05" fill="#3e78be" fill-opacity="0.78"/><circle cx="868.1" cy="520.1" r="2.05" fill="#96826e" fill-opacity="0.78"/><circle cx="869.1" cy="459.2" r="2.05" fill="#cd8c55" fill-opacity="0.78"/><circle cx="874.6" cy="524.2" r="2.05" fill="#f28523" fill-opacity="0.78"/><circle cx="866.5" cy="514.6" r="2.05" fill="#96826e" fill-opacity="0.78"/><circle cx="869.5" cy="495.1" r="2.05" fill="#f28523" fill-opacity="0.78"/><circle cx="871.0" cy="526.1" r="2.05" fill="#3e78be" fill-opacity="0.78"/><circle cx="865.4" cy="441.5" r="2.05" fill="#cd8c55" fill-opacity="0.78"/><circle cx="865.9" cy="473.6" r="2.05" fill="#96826e" fill-opacity="0.78"/><circle cx="861.5" cy="458.6" r="2.05" fill="#cd8c55" fill-opacity="0.78"/><circle cx="859.2" cy="449.8" r="2.05" fill="#3e78be" fill-opacity="0.78"/><circle cx="862.5" cy="487.4" r="2.05" fill="#f28523" fill-opacity="0.78"/><circle cx="865.9" cy="498.4" r="2.05" fill="#f28523" fill-opacity="0.78"/><circle cx="859.1" cy="448.4" r="2.05" fill="#3e78be" fill-opacity="0.78"/><circle cx="862.6" cy="512.3" r="2.05" fill="#f28523" fill-opacity="0.78"/><circle cx="870.1" cy="503.8" r="2.05" fill="#f28523" fill-opacity="0.78"/><circle cx="869.5" cy="516.6" r="2.05" fill="#f28523" fill-opacity="0.78"/><circle cx="864.9" cy="500.3" r="2.05" fill="#3e78be" fill-opacity="0.78"/><circle cx="863.5" cy="469.1" r="2.05" fill="#3e78be" fill-opacity="0.78"/><circle cx="863.0" cy="483.7" r="2.05" fill="#3e78be" fill-opacity="0.78"/><circle cx="867.0" cy="477.2" r="2.05" fill="#f28523" fill-opacity="0.78"/><circle cx="862.9" cy="487.8" r="2.05" fill="#f28523" fill-opacity="0.78"/><circle cx="871.0" cy="479.6" r="2.05" fill="#3e78be" fill-opacity="0.78"/><circle cx="859.1" cy="447.2" r="2.05" fill="#cd8c55" fill-opacity="0.78"/><circle cx="867.8" cy="461.9" r="2.05" fill="#f28523" fill-opacity="0.78"/><circle cx="862.2" cy="445.7" r="2.05" fill="#96826e" fill-opacity="0.78"/><circle cx="865.2" cy="460.8" r="2.05" fill="#f28523" fill-opacity="0.78"/><circle cx="876.0" cy="451.7" r="2.05" fill="#f28523" fill-opacity="0.78"/><circle cx="873.6" cy="517.7" r="2.05" fill="#f28523" fill-opacity="0.78"/><circle cx="865.8" cy="458.1" r="2.05" fill="#f28523" fill-opacity="0.78"/><circle cx="863.9" cy="477.6" r="2.05" fill="#3e78be" fill-opacity="0.78"/><circle cx="883.8" cy="480.3" r="2.05" fill="#96826e" fill-opacity="0.78"/><circle cx="880.0" cy="479.8" r="2.05" fill="#3e78be" fill-opacity="0.78"/><circle cx="886.6" cy="472.6" r="2.05" fill="#3e78be" fill-opacity="0.78"/><circle cx="872.8" cy="435.0" r="2.05" fill="#f28523" fill-opacity="0.78"/><circle cx="882.4" cy="476.8" r="2.05" fill="#cd8c55" fill-opacity="0.78"/><circle cx="876.2" cy="452.4" r="2.05" fill="#f28523" fill-opacity="0.78"/><circle cx="871.2" cy="434.6" r="2.05" fill="#3e78be" fill-opacity="0.78"/><circle cx="892.9" cy="516.3" r="2.05" fill="#3e78be" fill-opacity="0.78"/><circle cx="889.2" cy="518.3" r="2.05" fill="#cd8c55" fill-opacity="0.78"/><circle cx="875.3" cy="456.1" r="2.05" fill="#cd8c55" fill-opacity="0.78"/><circle cx="888.2" cy="511.3" r="2.05" fill="#f28523" fill-opacity="0.78"/><circle cx="881.2" cy="484.4" r="2.05" fill="#96826e" fill-opacity="0.78"/><circle cx="874.5" cy="457.4" r="2.05" fill="#f28523" fill-opacity="0.78"/><circle cx="879.3" cy="458.8" r="2.05" fill="#3e78be" fill-opacity="0.78"/><circle cx="891.8" cy="509.8" r="2.05" fill="#96826e" fill-opacity="0.78"/><circle cx="879.8" cy="453.3" r="2.05" fill="#96826e" fill-opacity="0.78"/><circle cx="884.7" cy="514.5" r="2.05" fill="#3e78be" fill-opacity="0.78"/><circle cx="878.3" cy="460.9" r="2.05" fill="#f28523" fill-opacity="0.78"/><circle cx="876.3" cy="453.2" r="2.05" fill="#f28523" fill-opacity="0.78"/><circle cx="877.7" cy="480.1" r="2.05" fill="#f28523" fill-opacity="0.78"/><circle cx="885.8" cy="495.6" r="2.05" fill="#f28523" fill-opacity="0.78"/><circle cx="873.1" cy="453.0" r="2.05" fill="#3e78be" fill-opacity="0.78"/><circle cx="896.5" cy="522.4" r="2.05" fill="#f28523" fill-opacity="0.78"/><circle cx="888.5" cy="504.7" r="2.05" fill="#f28523" fill-opacity="0.78"/><circle cx="882.1" cy="485.1" r="2.05" fill="#3e78be" fill-opacity="0.78"/><circle cx="882.1" cy="471.6" r="2.05" fill="#3e78be" fill-opacity="0.78"/><circle cx="875.5" cy="443.4" r="2.05" fill="#3e78be" fill-opacity="0.78"/><circle cx="875.9" cy="447.7" r="2.05" fill="#cd8c55" fill-opacity="0.78"/><circle cx="888.4" cy="495.7" r="2.05" fill="#3e78be" fill-opacity="0.78"/><circle cx="888.4" cy="490.4" r="2.05" fill="#3e78be" fill-opacity="0.78"/><circle cx="881.3" cy="451.5" r="2.05" fill="#3e78be" fill-opacity="0.78"/><circle cx="873.9" cy="458.9" r="2.05" fill="#3e78be" fill-opacity="0.78"/><circle cx="888.3" cy="496.9" r="2.05" fill="#3e78be" fill-opacity="0.78"/><circle cx="891.1" cy="522.7" r="2.05" fill="#3e78be" fill-opacity="0.78"/><circle cx="887.9" cy="474.0" r="2.05" fill="#f28523" fill-opacity="0.78"/><circle cx="883.4" cy="470.0" r="2.05" fill="#f28523" fill-opacity="0.78"/><circle cx="883.5" cy="484.7" r="2.05" fill="#3e78be" fill-opacity="0.78"/><circle cx="888.5" cy="502.3" r="2.05" fill="#3e78be" fill-opacity="0.78"/><circle cx="888.0" cy="496.1" r="2.05" fill="#f28523" fill-opacity="0.78"/><circle cx="878.1" cy="470.5" r="2.05" fill="#96826e" fill-opacity="0.78"/><circle cx="887.9" cy="519.9" r="2.05" fill="#3e78be" fill-opacity="0.78"/><circle cx="877.1" cy="455.8" r="2.05" fill="#f28523" fill-opacity="0.78"/><circle cx="884.3" cy="487.0" r="2.05" fill="#96826e" fill-opacity="0.78"/><circle cx="872.3" cy="439.7" r="2.05" fill="#f28523" fill-opacity="0.78"/><circle cx="879.2" cy="475.4" r="2.05" fill="#f28523" fill-opacity="0.78"/><circle cx="877.1" cy="450.8" r="2.05" fill="#3e78be" fill-opacity="0.78"/><circle cx="898.1" cy="525.8" r="2.05" fill="#cd8c55" fill-opacity="0.78"/><circle cx="878.0" cy="461.6" r="2.05" fill="#96826e" fill-opacity="0.78"/><circle cx="889.3" cy="522.7" r="2.05" fill="#f28523" fill-opacity="0.78"/><circle cx="878.4" cy="448.7" r="2.05" fill="#96826e" fill-opacity="0.78"/><circle cx="870.6" cy="442.7" r="2.05" fill="#96826e" fill-opacity="0.78"/><circle cx="888.9" cy="526.0" r="2.05" fill="#f28523" fill-opacity="0.78"/><circle cx="886.7" cy="508.4" r="2.05" fill="#f28523" fill-opacity="0.78"/><circle cx="887.2" cy="497.6" r="2.05" fill="#f28523" fill-opacity="0.78"/><circle cx="873.1" cy="441.0" r="2.05" fill="#f28523" fill-opacity="0.78"/><circle cx="882.5" cy="502.4" r="2.05" fill="#3e78be" fill-opacity="0.78"/><circle cx="885.7" cy="495.4" r="2.05" fill="#96826e" fill-opacity="0.78"/><circle cx="876.2" cy="438.6" r="2.05" fill="#f28523" fill-opacity="0.78"/><circle cx="892.1" cy="502.5" r="2.05" fill="#cd8c55" fill-opacity="0.78"/><circle cx="880.4" cy="486.8" r="2.05" fill="#3e78be" fill-opacity="0.78"/><circle cx="873.0" cy="442.1" r="2.05" fill="#f28523" fill-opacity="0.78"/><circle cx="877.8" cy="452.6" r="2.05" fill="#96826e" fill-opacity="0.78"/><circle cx="885.7" cy="495.9" r="2.05" fill="#96826e" fill-opacity="0.78"/><circle cx="876.0" cy="478.9" r="2.05" fill="#f28523" fill-opacity="0.78"/><circle cx="884.7" cy="489.1" r="2.05" fill="#f28523" fill-opacity="0.78"/><circle cx="885.5" cy="482.6" r="2.05" fill="#cd8c55" fill-opacity="0.78"/><circle cx="879.0" cy="442.0" r="2.05" fill="#96826e" fill-opacity="0.78"/><circle cx="880.6" cy="484.2" r="2.05" fill="#3e78be" fill-opacity="0.78"/><circle cx="896.6" cy="513.7" r="2.05" fill="#3e78be" fill-opacity="0.78"/><circle cx="885.3" cy="507.3" r="2.05" fill="#3e78be" fill-opacity="0.78"/><circle cx="885.7" cy="516.9" r="2.05" fill="#3e78be" fill-opacity="0.78"/><circle cx="881.5" cy="464.6" r="2.05" fill="#3e78be" fill-opacity="0.78"/><circle cx="893.2" cy="505.6" r="2.05" fill="#96826e" fill-opacity="0.78"/><circle cx="887.1" cy="496.4" r="2.05" fill="#cd8c55" fill-opacity="0.78"/><circle cx="884.7" cy="493.0" r="2.05" fill="#96826e" fill-opacity="0.78"/><circle cx="877.9" cy="468.1" r="2.05" fill="#cd8c55" fill-opacity="0.78"/><circle cx="878.8" cy="462.0" r="2.05" fill="#3e78be" fill-opacity="0.78"/><circle cx="894.6" cy="527.0" r="2.05" fill="#f28523" fill-opacity="0.78"/><circle cx="885.1" cy="497.9" r="2.05" fill="#f28523" fill-opacity="0.78"/><circle cx="883.2" cy="487.4" r="2.05" fill="#f28523" fill-opacity="0.78"/><circle cx="870.8" cy="530.2" r="2.05" fill="#cd8c55" fill-opacity="0.78"/><circle cx="875.3" cy="529.1" r="2.05" fill="#96826e" fill-opacity="0.78"/><circle cx="869.2" cy="529.7" r="2.05" fill="#f28523" fill-opacity="0.78"/><circle cx="869.8" cy="530.2" r="2.05" fill="#f28523" fill-opacity="0.78"/><circle cx="869.2" cy="529.9" r="2.05" fill="#3e78be" fill-opacity="0.78"/><circle cx="869.1" cy="530.6" r="2.05" fill="#3e78be" fill-opacity="0.78"/><circle cx="870.1" cy="529.6" r="2.05" fill="#3e78be" fill-opacity="0.78"/><circle cx="869.4" cy="530.2" r="2.05" fill="#3e78be" fill-opacity="0.78"/><circle cx="875.6" cy="530.9" r="2.05" fill="#f28523" fill-opacity="0.78"/><circle cx="871.7" cy="529.7" r="2.05" fill="#3e78be" fill-opacity="0.78"/><circle cx="871.2" cy="529.8" r="2.05" fill="#f28523" fill-opacity="0.78"/><circle cx="879.1" cy="529.7" r="2.05" fill="#cd8c55" fill-opacity="0.78"/><circle cx="869.2" cy="528.9" r="2.05" fill="#cd8c55" fill-opacity="0.78"/><circle cx="867.3" cy="530.5" r="2.05" fill="#96826e" fill-opacity="0.78"/><circle cx="748.0" cy="529.7" r="2.05" fill="#3e78be" fill-opacity="0.78"/><circle cx="748.2" cy="529.8" r="2.05" fill="#3e78be" fill-opacity="0.78"/><circle cx="648.3" cy="552.2" r="2.1" fill="#7a8aa0" fill-opacity="0.85"/><circle cx="592.6" cy="552.2" r="2.1" fill="#7a8aa0" fill-opacity="0.85"/><circle cx="524.8" cy="552.2" r="2.1" fill="#f08a2c" fill-opacity="0.85"/><circle cx="584.1" cy="552.2" r="2.1" fill="#a08060" fill-opacity="0.85"/><circle cx="640.1" cy="552.2" r="2.1" fill="#7a8aa0" fill-opacity="0.85"/><circle cx="553.2" cy="552.2" r="2.1" fill="#f08a2c" fill-opacity="0.85"/><circle cx="567.6" cy="552.2" r="2.1" fill="#f08a2c" fill-opacity="0.85"/><circle cx="614.7" cy="552.2" r="2.1" fill="#7a8aa0" fill-opacity="0.85"/><circle cx="629.8" cy="552.2" r="2.1" fill="#a08060" fill-opacity="0.85"/><circle cx="588.2" cy="552.2" r="2.1" fill="#f08a2c" fill-opacity="0.85"/><circle cx="556.9" cy="552.2" r="2.1" fill="#f08a2c" fill-opacity="0.85"/><circle cx="580.0" cy="552.2" r="2.1" fill="#f08a2c" fill-opacity="0.85"/><circle cx="664.9" cy="552.2" r="2.1" fill="#f08a2c" fill-opacity="0.85"/><circle cx="506.5" cy="552.2" r="2.1" fill="#7a8aa0" fill-opacity="0.85"/><circle cx="683.4" cy="552.2" r="2.1" fill="#a08060" fill-opacity="0.85"/><circle cx="573.7" cy="552.2" r="2.1" fill="#f08a2c" fill-opacity="0.85"/><circle cx="616.8" cy="552.2" r="2.1" fill="#f08a2c" fill-opacity="0.85"/><circle cx="639.9" cy="552.2" r="2.1" fill="#f08a2c" fill-opacity="0.85"/><circle cx="556.0" cy="552.2" r="2.1" fill="#f08a2c" fill-opacity="0.85"/><circle cx="595.4" cy="552.2" r="2.1" fill="#a08060" fill-opacity="0.85"/><circle cx="569.6" cy="552.2" r="2.1" fill="#f08a2c" fill-opacity="0.85"/><circle cx="574.6" cy="552.2" r="2.1" fill="#f08a2c" fill-opacity="0.85"/><circle cx="643.8" cy="552.2" r="2.1" fill="#7a8aa0" fill-opacity="0.85"/><circle cx="682.5" cy="552.2" r="2.1" fill="#7a8aa0" fill-opacity="0.85"/><circle cx="636.9" cy="552.2" r="2.1" fill="#f08a2c" fill-opacity="0.85"/><circle cx="593.2" cy="552.2" r="2.1" fill="#f08a2c" fill-opacity="0.85"/><circle cx="576.2" cy="552.2" r="2.1" fill="#f08a2c" fill-opacity="0.85"/><circle cx="667.7" cy="552.2" r="2.1" fill="#f08a2c" fill-opacity="0.85"/><circle cx="575.6" cy="552.2" r="2.1" fill="#f08a2c" fill-opacity="0.85"/><circle cx="531.7" cy="552.2" r="2.1" fill="#f08a2c" fill-opacity="0.85"/><circle cx="512.5" cy="552.2" r="2.1" fill="#f08a2c" fill-opacity="0.85"/><circle cx="553.7" cy="552.2" r="2.1" fill="#7a8aa0" fill-opacity="0.85"/><circle cx="614.7" cy="552.2" r="2.1" fill="#f08a2c" fill-opacity="0.85"/><circle cx="611.9" cy="552.2" r="2.1" fill="#f08a2c" fill-opacity="0.85"/><circle cx="683.4" cy="552.2" r="2.1" fill="#f08a2c" fill-opacity="0.85"/><circle cx="554.6" cy="552.2" r="2.1" fill="#a08060" fill-opacity="0.85"/><circle cx="583.3" cy="552.2" r="2.1" fill="#f08a2c" fill-opacity="0.85"/><circle cx="563.4" cy="552.2" r="2.1" fill="#f08a2c" fill-opacity="0.85"/><circle cx="590.1" cy="552.2" r="2.1" fill="#f08a2c" fill-opacity="0.85"/><circle cx="674.3" cy="552.2" r="2.1" fill="#f08a2c" fill-opacity="0.85"/><circle cx="676.7" cy="552.2" r="2.1" fill="#7a8aa0" fill-opacity="0.85"/><circle cx="531.0" cy="552.2" r="2.1" fill="#f08a2c" fill-opacity="0.85"/><circle cx="507.0" cy="552.2" r="2.1" fill="#f08a2c" fill-opacity="0.85"/><circle cx="604.9" cy="552.2" r="2.1" fill="#7a8aa0" fill-opacity="0.85"/><circle cx="540.5" cy="552.2" r="2.1" fill="#a08060" fill-opacity="0.85"/><circle cx="653.6" cy="552.2" r="2.1" fill="#f08a2c" fill-opacity="0.85"/><circle cx="506.5" cy="552.2" r="2.1" fill="#f08a2c" fill-opacity="0.85"/><circle cx="685.1" cy="552.2" r="2.1" fill="#f08a2c" fill-opacity="0.85"/><circle cx="600.8" cy="552.2" r="2.1" fill="#f08a2c" fill-opacity="0.85"/><circle cx="524.7" cy="552.2" r="2.1" fill="#a08060" fill-opacity="0.85"/><circle cx="579.2" cy="552.2" r="2.1" fill="#7a8aa0" fill-opacity="0.85"/><circle cx="596.9" cy="552.2" r="2.1" fill="#7a8aa0" fill-opacity="0.85"/><circle cx="613.6" cy="552.2" r="2.1" fill="#f08a2c" fill-opacity="0.85"/><circle cx="571.6" cy="552.2" r="2.1" fill="#f08a2c" fill-opacity="0.85"/><circle cx="666.5" cy="552.2" r="2.1" fill="#f08a2c" fill-opacity="0.85"/><circle cx="522.6" cy="552.2" r="2.1" fill="#a08060" fill-opacity="0.85"/><circle cx="615.1" cy="552.2" r="2.1" fill="#f08a2c" fill-opacity="0.85"/><circle cx="537.7" cy="552.2" r="2.1" fill="#f08a2c" fill-opacity="0.85"/><circle cx="503.9" cy="552.2" r="2.1" fill="#f08a2c" fill-opacity="0.85"/><circle cx="608.9" cy="552.2" r="2.1" fill="#f08a2c" fill-opacity="0.85"/><circle cx="642.2" cy="552.2" r="2.1" fill="#f08a2c" fill-opacity="0.85"/><circle cx="672.7" cy="552.2" r="2.1" fill="#f08a2c" fill-opacity="0.85"/><circle cx="541.4" cy="552.2" r="2.1" fill="#f08a2c" fill-opacity="0.85"/><circle cx="596.0" cy="552.2" r="2.1" fill="#7a8aa0" fill-opacity="0.85"/><circle cx="674.2" cy="552.2" r="2.1" fill="#a08060" fill-opacity="0.85"/><circle cx="526.7" cy="552.2" r="2.1" fill="#a08060" fill-opacity="0.85"/><circle cx="521.9" cy="552.2" r="2.1" fill="#7a8aa0" fill-opacity="0.85"/><circle cx="681.1" cy="552.2" r="2.1" fill="#a08060" fill-opacity="0.85"/><circle cx="519.0" cy="552.2" r="2.1" fill="#7a8aa0" fill-opacity="0.85"/><circle cx="636.0" cy="552.2" r="2.1" fill="#7a8aa0" fill-opacity="0.85"/><circle cx="660.3" cy="552.2" r="2.1" fill="#f08a2c" fill-opacity="0.85"/><circle cx="547.2" cy="552.2" r="2.1" fill="#7a8aa0" fill-opacity="0.85"/><circle cx="621.0" cy="552.2" r="2.1" fill="#f08a2c" fill-opacity="0.85"/><circle cx="550.5" cy="552.2" r="2.1" fill="#7a8aa0" fill-opacity="0.85"/><circle cx="512.2" cy="552.2" r="2.1" fill="#7a8aa0" fill-opacity="0.85"/><circle cx="588.4" cy="552.2" r="2.1" fill="#7a8aa0" fill-opacity="0.85"/><circle cx="515.2" cy="552.2" r="2.1" fill="#f08a2c" fill-opacity="0.85"/><circle cx="579.1" cy="552.2" r="2.1" fill="#f08a2c" fill-opacity="0.85"/><circle cx="548.9" cy="552.2" r="2.1" fill="#f08a2c" fill-opacity="0.85"/><circle cx="530.5" cy="552.2" r="2.1" fill="#f08a2c" fill-opacity="0.85"/><circle cx="544.2" cy="552.2" r="2.1" fill="#a08060" fill-opacity="0.85"/><circle cx="687.2" cy="552.2" r="2.1" fill="#7a8aa0" fill-opacity="0.85"/><circle cx="635.5" cy="552.2" r="2.1" fill="#a08060" fill-opacity="0.85"/><circle cx="639.1" cy="552.2" r="2.1" fill="#f08a2c" fill-opacity="0.85"/><circle cx="529.5" cy="552.2" r="2.1" fill="#a08060" fill-opacity="0.85"/><circle cx="676.4" cy="552.2" r="2.1" fill="#f08a2c" fill-opacity="0.85"/><circle cx="526.1" cy="552.2" r="2.1" fill="#f08a2c" fill-opacity="0.85"/><circle cx="578.6" cy="552.2" r="2.1" fill="#a08060" fill-opacity="0.85"/><circle cx="652.2" cy="552.2" r="2.1" fill="#7a8aa0" fill-opacity="0.85"/><circle cx="629.0" cy="552.2" r="2.1" fill="#7a8aa0" fill-opacity="0.85"/><circle cx="529.9" cy="552.2" r="2.1" fill="#7a8aa0" fill-opacity="0.85"/><circle cx="522.5" cy="552.2" r="2.1" fill="#f08a2c" fill-opacity="0.85"/><circle cx="641.4" cy="552.2" r="2.1" fill="#f08a2c" fill-opacity="0.85"/><circle cx="660.5" cy="552.2" r="2.1" fill="#7a8aa0" fill-opacity="0.85"/><circle cx="658.8" cy="552.2" r="2.1" fill="#a08060" fill-opacity="0.85"/><circle cx="529.5" cy="552.2" r="2.1" fill="#f08a2c" fill-opacity="0.85"/><circle cx="517.4" cy="552.2" r="2.1" fill="#f08a2c" fill-opacity="0.85"/><circle cx="635.3" cy="552.2" r="2.1" fill="#f08a2c" fill-opacity="0.85"/><circle cx="645.7" cy="552.2" r="2.1" fill="#f08a2c" fill-opacity="0.85"/><circle cx="624.0" cy="552.2" r="2.1" fill="#7a8aa0" fill-opacity="0.85"/><circle cx="597.9" cy="552.2" r="2.1" fill="#f08a2c" fill-opacity="0.85"/><circle cx="611.8" cy="552.2" r="2.1" fill="#f08a2c" fill-opacity="0.85"/><circle cx="574.7" cy="552.2" r="2.1" fill="#f08a2c" fill-opacity="0.85"/><circle cx="531.7" cy="552.2" r="2.1" fill="#7a8aa0" fill-opacity="0.85"/><circle cx="617.3" cy="552.2" r="2.1" fill="#f08a2c" fill-opacity="0.85"/><circle cx="531.3" cy="552.2" r="2.1" fill="#f08a2c" fill-opacity="0.85"/><circle cx="643.3" cy="552.2" r="2.1" fill="#a08060" fill-opacity="0.85"/><circle cx="662.6" cy="552.2" r="2.1" fill="#f08a2c" fill-opacity="0.85"/><circle cx="599.6" cy="552.2" r="2.1" fill="#7a8aa0" fill-opacity="0.85"/><circle cx="593.1" cy="552.2" r="2.1" fill="#f08a2c" fill-opacity="0.85"/><circle cx="681.9" cy="552.2" r="2.1" fill="#f08a2c" fill-opacity="0.85"/><circle cx="633.3" cy="552.2" r="2.1" fill="#f08a2c" fill-opacity="0.85"/><circle cx="668.6" cy="552.2" r="2.1" fill="#7a8aa0" fill-opacity="0.85"/><circle cx="539.6" cy="552.2" r="2.1" fill="#f08a2c" fill-opacity="0.85"/><circle cx="550.2" cy="552.2" r="2.1" fill="#7a8aa0" fill-opacity="0.85"/><circle cx="509.7" cy="552.2" r="2.1" fill="#f08a2c" fill-opacity="0.85"/><circle cx="597.4" cy="552.2" r="2.1" fill="#7a8aa0" fill-opacity="0.85"/><circle cx="676.5" cy="552.2" r="2.1" fill="#7a8aa0" fill-opacity="0.85"/><circle cx="556.9" cy="552.2" r="2.1" fill="#7a8aa0" fill-opacity="0.85"/><circle cx="567.3" cy="552.2" r="2.1" fill="#f08a2c" fill-opacity="0.85"/><circle cx="670.4" cy="552.2" r="2.1" fill="#7a8aa0" fill-opacity="0.85"/><circle cx="557.0" cy="552.2" r="2.1" fill="#7a8aa0" fill-opacity="0.85"/><circle cx="619.0" cy="552.2" r="2.1" fill="#f08a2c" fill-opacity="0.85"/><circle cx="637.6" cy="552.2" r="2.1" fill="#f08a2c" fill-opacity="0.85"/><circle cx="529.7" cy="552.2" r="2.1" fill="#a08060" fill-opacity="0.85"/><circle cx="676.9" cy="552.2" r="2.1" fill="#a08060" fill-opacity="0.85"/><circle cx="640.4" cy="552.2" r="2.1" fill="#f08a2c" fill-opacity="0.85"/><circle cx="652.8" cy="552.2" r="2.1" fill="#f08a2c" fill-opacity="0.85"/><circle cx="568.9" cy="552.2" r="2.1" fill="#f08a2c" fill-opacity="0.85"/><circle cx="558.1" cy="552.2" r="2.1" fill="#f08a2c" fill-opacity="0.85"/><circle cx="614.1" cy="552.2" r="2.1" fill="#a08060" fill-opacity="0.85"/><circle cx="525.1" cy="552.2" r="2.1" fill="#f08a2c" fill-opacity="0.85"/><circle cx="557.8" cy="552.2" r="2.1" fill="#a08060" fill-opacity="0.85"/><circle cx="513.6" cy="552.2" r="2.1" fill="#7a8aa0" fill-opacity="0.85"/><circle cx="672.5" cy="552.2" r="2.1" fill="#f08a2c" fill-opacity="0.85"/><circle cx="633.8" cy="552.2" r="2.1" fill="#a08060" fill-opacity="0.85"/><circle cx="507.5" cy="552.2" r="2.1" fill="#f08a2c" fill-opacity="0.85"/><circle cx="579.4" cy="552.2" r="2.1" fill="#f08a2c" fill-opacity="0.85"/><circle cx="588.7" cy="552.2" r="2.1" fill="#f08a2c" fill-opacity="0.85"/><circle cx="530.9" cy="552.2" r="2.1" fill="#f08a2c" fill-opacity="0.85"/><circle cx="581.9" cy="552.2" r="2.1" fill="#7a8aa0" fill-opacity="0.85"/><circle cx="582.8" cy="552.2" r="2.1" fill="#f08a2c" fill-opacity="0.85"/><circle cx="540.1" cy="552.2" r="2.1" fill="#f08a2c" fill-opacity="0.85"/><circle cx="611.0" cy="552.2" r="2.1" fill="#f08a2c" fill-opacity="0.85"/><circle cx="525.3" cy="552.2" r="2.1" fill="#f08a2c" fill-opacity="0.85"/><circle cx="548.5" cy="552.2" r="2.1" fill="#f08a2c" fill-opacity="0.85"/><circle cx="597.9" cy="552.2" r="2.1" fill="#f08a2c" fill-opacity="0.85"/><circle cx="524.1" cy="552.2" r="2.1" fill="#f08a2c" fill-opacity="0.85"/><circle cx="555.0" cy="552.2" r="2.1" fill="#7a8aa0" fill-opacity="0.85"/><circle cx="509.6" cy="552.2" r="2.1" fill="#a08060" fill-opacity="0.85"/><circle cx="637.5" cy="552.2" r="2.1" fill="#7a8aa0" fill-opacity="0.85"/><circle cx="614.6" cy="552.2" r="2.1" fill="#f08a2c" fill-opacity="0.85"/><circle cx="517.6" cy="552.2" r="2.1" fill="#f08a2c" fill-opacity="0.85"/><circle cx="627.2" cy="552.2" r="2.1" fill="#f08a2c" fill-opacity="0.85"/><circle cx="667.8" cy="552.2" r="2.1" fill="#f08a2c" fill-opacity="0.85"/><circle cx="531.5" cy="552.2" r="2.1" fill="#f08a2c" fill-opacity="0.85"/><circle cx="575.8" cy="552.2" r="2.1" fill="#a08060" fill-opacity="0.85"/><circle cx="642.8" cy="552.2" r="2.1" fill="#7a8aa0" fill-opacity="0.85"/><circle cx="638.3" cy="552.2" r="2.1" fill="#7a8aa0" fill-opacity="0.85"/><circle cx="565.8" cy="552.2" r="2.1" fill="#7a8aa0" fill-opacity="0.85"/><circle cx="579.7" cy="552.2" r="2.1" fill="#a08060" fill-opacity="0.85"/><circle cx="624.3" cy="552.2" r="2.1" fill="#f08a2c" fill-opacity="0.85"/><circle cx="634.2" cy="552.2" r="2.1" fill="#7a8aa0" fill-opacity="0.85"/><circle cx="521.3" cy="552.2" r="2.1" fill="#a08060" fill-opacity="0.85"/><circle cx="608.9" cy="552.2" r="2.1" fill="#f08a2c" fill-opacity="0.85"/><circle cx="676.4" cy="552.2" r="2.1" fill="#7a8aa0" fill-opacity="0.85"/><circle cx="663.9" cy="552.2" r="2.1" fill="#f08a2c" fill-opacity="0.85"/><circle cx="660.9" cy="552.2" r="2.1" fill="#7a8aa0" fill-opacity="0.85"/><circle cx="623.7" cy="552.2" r="2.1" fill="#7a8aa0" fill-opacity="0.85"/><circle cx="675.5" cy="552.2" r="2.1" fill="#7a8aa0" fill-opacity="0.85"/><circle cx="579.0" cy="552.2" r="2.1" fill="#a08060" fill-opacity="0.85"/><circle cx="517.9" cy="552.2" r="2.1" fill="#f08a2c" fill-opacity="0.85"/><circle cx="609.0" cy="552.2" r="2.1" fill="#7a8aa0" fill-opacity="0.85"/><circle cx="518.9" cy="552.2" r="2.1" fill="#7a8aa0" fill-opacity="0.85"/><circle cx="561.8" cy="552.2" r="2.1" fill="#f08a2c" fill-opacity="0.85"/><circle cx="531.0" cy="552.2" r="2.1" fill="#f08a2c" fill-opacity="0.85"/><circle cx="597.6" cy="552.2" r="2.1" fill="#f08a2c" fill-opacity="0.85"/><circle cx="671.0" cy="552.2" r="2.1" fill="#f08a2c" fill-opacity="0.85"/><circle cx="563.1" cy="552.2" r="2.1" fill="#f08a2c" fill-opacity="0.85"/><circle cx="516.0" cy="552.2" r="2.1" fill="#f08a2c" fill-opacity="0.85"/><circle cx="617.9" cy="552.2" r="2.1" fill="#f08a2c" fill-opacity="0.85"/><circle cx="597.3" cy="552.2" r="2.1" fill="#f08a2c" fill-opacity="0.85"/><circle cx="545.4" cy="552.2" r="2.1" fill="#f08a2c" fill-opacity="0.85"/><circle cx="571.5" cy="552.2" r="2.1" fill="#f08a2c" fill-opacity="0.85"/><circle cx="640.3" cy="552.2" r="2.1" fill="#f08a2c" fill-opacity="0.85"/><circle cx="603.2" cy="552.2" r="2.1" fill="#7a8aa0" fill-opacity="0.85"/><circle cx="582.7" cy="552.2" r="2.1" fill="#f08a2c" fill-opacity="0.85"/><circle cx="556.3" cy="552.2" r="2.1" fill="#f08a2c" fill-opacity="0.85"/><circle cx="574.6" cy="552.2" r="2.1" fill="#f08a2c" fill-opacity="0.85"/><circle cx="630.8" cy="552.2" r="2.1" fill="#f08a2c" fill-opacity="0.85"/><circle cx="623.3" cy="552.2" r="2.1" fill="#7a8aa0" fill-opacity="0.85"/><circle cx="662.3" cy="552.2" r="2.1" fill="#f08a2c" fill-opacity="0.85"/><circle cx="540.9" cy="552.2" r="2.1" fill="#f08a2c" fill-opacity="0.85"/><circle cx="658.5" cy="552.2" r="2.1" fill="#7a8aa0" fill-opacity="0.85"/><circle cx="515.6" cy="552.2" r="2.1" fill="#7a8aa0" fill-opacity="0.85"/><circle cx="656.6" cy="552.2" r="2.1" fill="#7a8aa0" fill-opacity="0.85"/><circle cx="647.9" cy="552.2" r="2.1" fill="#f08a2c" fill-opacity="0.85"/><circle cx="587.1" cy="552.2" r="2.1" fill="#a08060" fill-opacity="0.85"/><circle cx="626.4" cy="552.2" r="2.1" fill="#f08a2c" fill-opacity="0.85"/><circle cx="610.8" cy="552.2" r="2.1" fill="#f08a2c" fill-opacity="0.85"/><circle cx="592.7" cy="552.2" r="2.1" fill="#f08a2c" fill-opacity="0.85"/><circle cx="599.6" cy="552.2" r="2.1" fill="#a08060" fill-opacity="0.85"/><circle cx="635.5" cy="552.2" r="2.1" fill="#f08a2c" fill-opacity="0.85"/><circle cx="560.1" cy="552.2" r="2.1" fill="#f08a2c" fill-opacity="0.85"/><circle cx="635.4" cy="552.2" r="2.1" fill="#f08a2c" fill-opacity="0.85"/><circle cx="585.5" cy="552.2" r="2.1" fill="#f08a2c" fill-opacity="0.85"/><circle cx="517.3" cy="552.2" r="2.1" fill="#f08a2c" fill-opacity="0.85"/><circle cx="564.0" cy="552.2" r="2.1" fill="#f08a2c" fill-opacity="0.85"/><circle cx="673.0" cy="552.2" r="2.1" fill="#f08a2c" fill-opacity="0.85"/><circle cx="683.3" cy="552.2" r="2.1" fill="#f08a2c" fill-opacity="0.85"/><circle cx="580.4" cy="552.2" r="2.1" fill="#f08a2c" fill-opacity="0.85"/><circle cx="651.7" cy="552.2" r="2.1" fill="#a08060" fill-opacity="0.85"/><circle cx="618.7" cy="552.2" r="2.1" fill="#7a8aa0" fill-opacity="0.85"/><circle cx="641.9" cy="552.2" r="2.1" fill="#f08a2c" fill-opacity="0.85"/><circle cx="564.6" cy="552.2" r="2.1" fill="#f08a2c" fill-opacity="0.85"/><circle cx="617.3" cy="552.2" r="2.1" fill="#f08a2c" fill-opacity="0.85"/><circle cx="592.2" cy="552.2" r="2.1" fill="#7a8aa0" fill-opacity="0.85"/><circle cx="680.0" cy="552.2" r="2.1" fill="#f08a2c" fill-opacity="0.85"/><circle cx="603.3" cy="552.2" r="2.1" fill="#7a8aa0" fill-opacity="0.85"/><circle cx="519.0" cy="552.2" r="2.1" fill="#f08a2c" fill-opacity="0.85"/><circle cx="678.1" cy="552.2" r="2.1" fill="#f08a2c" fill-opacity="0.85"/><circle cx="505.6" cy="552.2" r="2.1" fill="#a08060" fill-opacity="0.85"/><circle cx="599.7" cy="552.2" r="2.1" fill="#a08060" fill-opacity="0.85"/><circle cx="511.5" cy="552.2" r="2.1" fill="#f08a2c" fill-opacity="0.85"/><circle cx="668.5" cy="552.2" r="2.1" fill="#7a8aa0" fill-opacity="0.85"/><circle cx="577.4" cy="552.2" r="2.1" fill="#f08a2c" fill-opacity="0.85"/><circle cx="523.0" cy="552.2" r="2.1" fill="#a08060" fill-opacity="0.85"/><circle cx="508.6" cy="552.2" r="2.1" fill="#f08a2c" fill-opacity="0.85"/><circle cx="561.0" cy="552.2" r="2.1" fill="#7a8aa0" fill-opacity="0.85"/><circle cx="576.7" cy="552.2" r="2.1" fill="#f08a2c" fill-opacity="0.85"/><circle cx="668.5" cy="552.2" r="2.1" fill="#7a8aa0" fill-opacity="0.85"/><circle cx="566.3" cy="552.2" r="2.1" fill="#7a8aa0" fill-opacity="0.85"/><circle cx="623.7" cy="552.2" r="2.1" fill="#7a8aa0" fill-opacity="0.85"/><circle cx="598.8" cy="552.2" r="2.1" fill="#f08a2c" fill-opacity="0.85"/><circle cx="667.4" cy="552.2" r="2.1" fill="#f08a2c" fill-opacity="0.85"/><circle cx="580.4" cy="552.2" r="2.1" fill="#7a8aa0" fill-opacity="0.85"/><circle cx="624.6" cy="552.2" r="2.1" fill="#a08060" fill-opacity="0.85"/><circle cx="658.1" cy="552.2" r="2.1" fill="#a08060" fill-opacity="0.85"/><circle cx="531.4" cy="552.2" r="2.1" fill="#f08a2c" fill-opacity="0.85"/><circle cx="686.4" cy="552.2" r="2.1" fill="#f08a2c" fill-opacity="0.85"/><circle cx="669.4" cy="552.2" r="2.1" fill="#f08a2c" fill-opacity="0.85"/><circle cx="518.2" cy="552.2" r="2.1" fill="#f08a2c" fill-opacity="0.85"/><circle cx="655.8" cy="552.2" r="2.1" fill="#7a8aa0" fill-opacity="0.85"/><circle cx="626.5" cy="552.2" r="2.1" fill="#f08a2c" fill-opacity="0.85"/><circle cx="596.6" cy="552.2" r="2.1" fill="#f08a2c" fill-opacity="0.85"/><circle cx="518.4" cy="552.2" r="2.1" fill="#f08a2c" fill-opacity="0.85"/><circle cx="554.8" cy="552.2" r="2.1" fill="#7a8aa0" fill-opacity="0.85"/><circle cx="561.6" cy="552.2" r="2.1" fill="#a08060" fill-opacity="0.85"/><circle cx="514.8" cy="552.2" r="2.1" fill="#f08a2c" fill-opacity="0.85"/><circle cx="680.7" cy="552.2" r="2.1" fill="#f08a2c" fill-opacity="0.85"/><circle cx="660.6" cy="552.2" r="2.1" fill="#f08a2c" fill-opacity="0.85"/><circle cx="570.9" cy="552.2" r="2.1" fill="#7a8aa0" fill-opacity="0.85"/><circle cx="664.5" cy="552.2" r="2.1" fill="#7a8aa0" fill-opacity="0.85"/><circle cx="546.4" cy="552.2" r="2.1" fill="#f08a2c" fill-opacity="0.85"/><circle cx="594.9" cy="552.2" r="2.1" fill="#f08a2c" fill-opacity="0.85"/><circle cx="633.6" cy="552.2" r="2.1" fill="#f08a2c" fill-opacity="0.85"/><circle cx="678.8" cy="552.2" r="2.1" fill="#f08a2c" fill-opacity="0.85"/><circle cx="591.8" cy="552.2" r="2.1" fill="#f08a2c" fill-opacity="0.85"/><circle cx="563.4" cy="552.2" r="2.1" fill="#7a8aa0" fill-opacity="0.85"/><circle cx="641.6" cy="552.2" r="2.1" fill="#a08060" fill-opacity="0.85"/><circle cx="662.5" cy="552.2" r="2.1" fill="#7a8aa0" fill-opacity="0.85"/><circle cx="554.6" cy="552.2" r="2.1" fill="#f08a2c" fill-opacity="0.85"/><circle cx="526.7" cy="552.2" r="2.1" fill="#a08060" fill-opacity="0.85"/><circle cx="643.8" cy="552.2" r="2.1" fill="#f08a2c" fill-opacity="0.85"/><circle cx="649.8" cy="552.2" r="2.1" fill="#f08a2c" fill-opacity="0.85"/><circle cx="594.0" cy="552.2" r="2.1" fill="#7a8aa0" fill-opacity="0.85"/><circle cx="630.3" cy="552.2" r="2.1" fill="#a08060" fill-opacity="0.85"/><circle cx="640.9" cy="552.2" r="2.1" fill="#7a8aa0" fill-opacity="0.85"/><circle cx="602.3" cy="552.2" r="2.1" fill="#a08060" fill-opacity="0.85"/><circle cx="501.7" cy="552.2" r="2.1" fill="#7a8aa0" fill-opacity="0.85"/><circle cx="591.9" cy="552.2" r="2.1" fill="#7a8aa0" fill-opacity="0.85"/><circle cx="683.0" cy="552.2" r="2.1" fill="#f08a2c" fill-opacity="0.85"/><circle cx="528.3" cy="552.2" r="2.1" fill="#7a8aa0" fill-opacity="0.85"/><circle cx="507.4" cy="552.2" r="2.1" fill="#f08a2c" fill-opacity="0.85"/><circle cx="531.6" cy="552.2" r="2.1" fill="#f08a2c" fill-opacity="0.85"/><circle cx="554.0" cy="552.2" r="2.1" fill="#f08a2c" fill-opacity="0.85"/><circle cx="683.6" cy="552.2" r="2.1" fill="#f08a2c" fill-opacity="0.85"/><circle cx="656.0" cy="552.2" r="2.1" fill="#f08a2c" fill-opacity="0.85"/><circle cx="617.2" cy="552.2" r="2.1" fill="#f08a2c" fill-opacity="0.85"/><circle cx="665.7" cy="552.2" r="2.1" fill="#f08a2c" fill-opacity="0.85"/><circle cx="612.9" cy="552.2" r="2.1" fill="#7a8aa0" fill-opacity="0.85"/><circle cx="651.3" cy="552.2" r="2.1" fill="#f08a2c" fill-opacity="0.85"/><circle cx="611.1" cy="552.2" r="2.1" fill="#a08060" fill-opacity="0.85"/><circle cx="601.9" cy="552.2" r="2.1" fill="#a08060" fill-opacity="0.85"/><circle cx="634.5" cy="552.2" r="2.1" fill="#f08a2c" fill-opacity="0.85"/><circle cx="600.9" cy="552.2" r="2.1" fill="#f08a2c" fill-opacity="0.85"/><circle cx="521.3" cy="552.2" r="2.1" fill="#f08a2c" fill-opacity="0.85"/><circle cx="519.1" cy="552.2" r="2.1" fill="#f08a2c" fill-opacity="0.85"/><circle cx="565.5" cy="552.2" r="2.1" fill="#f08a2c" fill-opacity="0.85"/><circle cx="644.5" cy="552.2" r="2.1" fill="#a08060" fill-opacity="0.85"/><circle cx="563.7" cy="552.2" r="2.1" fill="#f08a2c" fill-opacity="0.85"/><circle cx="646.9" cy="552.2" r="2.1" fill="#f08a2c" fill-opacity="0.85"/><circle cx="673.5" cy="552.2" r="2.1" fill="#f08a2c" fill-opacity="0.85"/><circle cx="583.5" cy="552.2" r="2.1" fill="#f08a2c" fill-opacity="0.85"/><circle cx="540.0" cy="552.2" r="2.1" fill="#7a8aa0" fill-opacity="0.85"/><circle cx="609.5" cy="552.2" r="2.1" fill="#f08a2c" fill-opacity="0.85"/><circle cx="595.6" cy="552.2" r="2.1" fill="#f08a2c" fill-opacity="0.85"/><circle cx="576.0" cy="552.2" r="2.1" fill="#7a8aa0" fill-opacity="0.85"/><circle cx="525.1" cy="552.2" r="2.1" fill="#f08a2c" fill-opacity="0.85"/><circle cx="510.6" cy="552.2" r="2.1" fill="#a08060" fill-opacity="0.85"/><circle cx="562.1" cy="552.2" r="2.1" fill="#f08a2c" fill-opacity="0.85"/><circle cx="655.8" cy="552.2" r="2.1" fill="#f08a2c" fill-opacity="0.85"/><circle cx="630.4" cy="552.2" r="2.1" fill="#f08a2c" fill-opacity="0.85"/><circle cx="605.4" cy="552.2" r="2.1" fill="#f08a2c" fill-opacity="0.85"/><circle cx="582.5" cy="552.2" r="2.1" fill="#f08a2c" fill-opacity="0.85"/><circle cx="677.0" cy="552.2" r="2.1" fill="#f08a2c" fill-opacity="0.85"/><circle cx="575.8" cy="552.2" r="2.1" fill="#7a8aa0" fill-opacity="0.85"/><circle cx="624.2" cy="552.2" r="2.1" fill="#f08a2c" fill-opacity="0.85"/><circle cx="572.2" cy="552.2" r="2.1" fill="#f08a2c" fill-opacity="0.85"/><circle cx="644.3" cy="552.2" r="2.1" fill="#f08a2c" fill-opacity="0.85"/><circle cx="564.8" cy="552.2" r="2.1" fill="#7a8aa0" fill-opacity="0.85"/><circle cx="634.3" cy="552.2" r="2.1" fill="#f08a2c" fill-opacity="0.85"/><circle cx="642.3" cy="552.2" r="2.1" fill="#7a8aa0" fill-opacity="0.85"/><circle cx="654.2" cy="552.2" r="2.1" fill="#7a8aa0" fill-opacity="0.85"/><circle cx="580.2" cy="552.2" r="2.1" fill="#f08a2c" fill-opacity="0.85"/><circle cx="578.9" cy="552.2" r="2.1" fill="#f08a2c" fill-opacity="0.85"/><circle cx="634.9" cy="552.2" r="2.1" fill="#f08a2c" fill-opacity="0.85"/><circle cx="687.1" cy="552.2" r="2.1" fill="#a08060" fill-opacity="0.85"/><circle cx="576.8" cy="552.2" r="2.1" fill="#f08a2c" fill-opacity="0.85"/><circle cx="619.6" cy="552.2" r="2.1" fill="#f08a2c" fill-opacity="0.85"/><circle cx="650.9" cy="552.2" r="2.1" fill="#f08a2c" fill-opacity="0.85"/><circle cx="533.1" cy="552.2" r="2.1" fill="#7a8aa0" fill-opacity="0.85"/><circle cx="672.1" cy="552.2" r="2.1" fill="#f08a2c" fill-opacity="0.85"/><circle cx="572.5" cy="552.2" r="2.1" fill="#f08a2c" fill-opacity="0.85"/><circle cx="552.6" cy="552.2" r="2.1" fill="#f08a2c" fill-opacity="0.85"/><circle cx="582.4" cy="552.2" r="2.1" fill="#f08a2c" fill-opacity="0.85"/><circle cx="675.2" cy="552.2" r="2.1" fill="#f08a2c" fill-opacity="0.85"/><circle cx="588.4" cy="552.2" r="2.1" fill="#f08a2c" fill-opacity="0.85"/><circle cx="683.0" cy="552.2" r="2.1" fill="#f08a2c" fill-opacity="0.85"/><circle cx="575.0" cy="552.2" r="2.1" fill="#7a8aa0" fill-opacity="0.85"/><circle cx="649.7" cy="552.2" r="2.1" fill="#a08060" fill-opacity="0.85"/><circle cx="645.0" cy="552.2" r="2.1" fill="#f08a2c" fill-opacity="0.85"/><circle cx="618.0" cy="552.2" r="2.1" fill="#7a8aa0" fill-opacity="0.85"/><circle cx="603.9" cy="552.2" r="2.1" fill="#7a8aa0" fill-opacity="0.85"/><circle cx="576.6" cy="552.2" r="2.1" fill="#7a8aa0" fill-opacity="0.85"/><circle cx="580.1" cy="552.2" r="2.1" fill="#f08a2c" fill-opacity="0.85"/><circle cx="545.6" cy="552.2" r="2.1" fill="#f08a2c" fill-opacity="0.85"/><circle cx="530.2" cy="552.2" r="2.1" fill="#7a8aa0" fill-opacity="0.85"/><circle cx="685.7" cy="552.2" r="2.1" fill="#f08a2c" fill-opacity="0.85"/><circle cx="641.5" cy="552.2" r="2.1" fill="#7a8aa0" fill-opacity="0.85"/><circle cx="613.0" cy="552.2" r="2.1" fill="#f08a2c" fill-opacity="0.85"/><circle cx="614.1" cy="552.2" r="2.1" fill="#f08a2c" fill-opacity="0.85"/><circle cx="522.8" cy="552.2" r="2.1" fill="#a08060" fill-opacity="0.85"/><circle cx="588.9" cy="552.2" r="2.1" fill="#7a8aa0" fill-opacity="0.85"/><circle cx="628.9" cy="552.2" r="2.1" fill="#a08060" fill-opacity="0.85"/><circle cx="502.1" cy="552.2" r="2.1" fill="#a08060" fill-opacity="0.85"/><circle cx="599.1" cy="552.2" r="2.1" fill="#f08a2c" fill-opacity="0.85"/><circle cx="608.4" cy="552.2" r="2.1" fill="#f08a2c" fill-opacity="0.85"/><circle cx="656.0" cy="552.2" r="2.1" fill="#f08a2c" fill-opacity="0.85"/><circle cx="565.6" cy="552.2" r="2.1" fill="#f08a2c" fill-opacity="0.85"/><circle cx="668.3" cy="552.2" r="2.1" fill="#f08a2c" fill-opacity="0.85"/><circle cx="675.0" cy="552.2" r="2.1" fill="#f08a2c" fill-opacity="0.85"/><circle cx="629.9" cy="552.2" r="2.1" fill="#f08a2c" fill-opacity="0.85"/><circle cx="634.0" cy="552.2" r="2.1" fill="#7a8aa0" fill-opacity="0.85"/><circle cx="537.9" cy="552.2" r="2.1" fill="#a08060" fill-opacity="0.85"/><circle cx="577.6" cy="552.2" r="2.1" fill="#f08a2c" fill-opacity="0.85"/><circle cx="684.4" cy="552.2" r="2.1" fill="#f08a2c" fill-opacity="0.85"/><circle cx="645.3" cy="552.2" r="2.1" fill="#f08a2c" fill-opacity="0.85"/><circle cx="580.2" cy="552.2" r="2.1" fill="#f08a2c" fill-opacity="0.85"/><circle cx="655.2" cy="552.2" r="2.1" fill="#a08060" fill-opacity="0.85"/><circle cx="550.2" cy="552.2" r="2.1" fill="#f08a2c" fill-opacity="0.85"/><circle cx="561.2" cy="552.2" r="2.1" fill="#7a8aa0" fill-opacity="0.85"/><circle cx="596.8" cy="552.2" r="2.1" fill="#f08a2c" fill-opacity="0.85"/><circle cx="511.5" cy="552.2" r="2.1" fill="#f08a2c" fill-opacity="0.85"/><circle cx="612.2" cy="552.2" r="2.1" fill="#f08a2c" fill-opacity="0.85"/><circle cx="616.8" cy="552.2" r="2.1" fill="#7a8aa0" fill-opacity="0.85"/><circle cx="577.7" cy="552.2" r="2.1" fill="#f08a2c" fill-opacity="0.85"/><circle cx="614.4" cy="552.2" r="2.1" fill="#f08a2c" fill-opacity="0.85"/><circle cx="673.8" cy="552.2" r="2.1" fill="#f08a2c" fill-opacity="0.85"/><circle cx="560.8" cy="552.2" r="2.1" fill="#f08a2c" fill-opacity="0.85"/><circle cx="549.9" cy="552.2" r="2.1" fill="#7a8aa0" fill-opacity="0.85"/><circle cx="679.3" cy="552.2" r="2.1" fill="#f08a2c" fill-opacity="0.85"/><circle cx="522.1" cy="552.2" r="2.1" fill="#f08a2c" fill-opacity="0.85"/><circle cx="512.1" cy="552.2" r="2.1" fill="#f08a2c" fill-opacity="0.85"/><circle cx="572.6" cy="552.2" r="2.1" fill="#f08a2c" fill-opacity="0.85"/><circle cx="531.8" cy="552.2" r="2.1" fill="#f08a2c" fill-opacity="0.85"/><circle cx="679.2" cy="552.2" r="2.1" fill="#a08060" fill-opacity="0.85"/><circle cx="527.5" cy="552.2" r="2.1" fill="#f08a2c" fill-opacity="0.85"/><circle cx="589.8" cy="552.2" r="2.1" fill="#f08a2c" fill-opacity="0.85"/><circle cx="551.0" cy="552.2" r="2.1" fill="#f08a2c" fill-opacity="0.85"/><circle cx="500.5" cy="654.7" r="2.1" fill="#f28523" fill-opacity="0.85"/><circle cx="505.4" cy="654.7" r="2.1" fill="#3e78be" fill-opacity="0.85"/><circle cx="730.4" cy="552.2" r="2.1" fill="#f08a2c" fill-opacity="0.85"/><circle cx="773.8" cy="552.2" r="2.1" fill="#f08a2c" fill-opacity="0.85"/><circle cx="772.7" cy="552.2" r="2.1" fill="#f08a2c" fill-opacity="0.85"/><circle cx="862.1" cy="552.2" r="2.1" fill="#a08060" fill-opacity="0.85"/><circle cx="839.5" cy="552.2" r="2.1" fill="#7a8aa0" fill-opacity="0.85"/><circle cx="796.3" cy="552.2" r="2.1" fill="#f08a2c" fill-opacity="0.85"/><circle cx="804.5" cy="552.2" r="2.1" fill="#f08a2c" fill-opacity="0.85"/><circle cx="794.1" cy="552.2" r="2.1" fill="#f08a2c" fill-opacity="0.85"/><circle cx="718.4" cy="552.2" r="2.1" fill="#7a8aa0" fill-opacity="0.85"/><circle cx="820.5" cy="552.2" r="2.1" fill="#f08a2c" fill-opacity="0.85"/><circle cx="797.9" cy="552.2" r="2.1" fill="#f08a2c" fill-opacity="0.85"/><circle cx="795.9" cy="552.2" r="2.1" fill="#f08a2c" fill-opacity="0.85"/><circle cx="860.3" cy="552.2" r="2.1" fill="#a08060" fill-opacity="0.85"/><circle cx="840.3" cy="552.2" r="2.1" fill="#a08060" fill-opacity="0.85"/><circle cx="893.9" cy="552.2" r="2.1" fill="#f08a2c" fill-opacity="0.85"/><circle cx="797.1" cy="552.2" r="2.1" fill="#f08a2c" fill-opacity="0.85"/><circle cx="757.8" cy="552.2" r="2.1" fill="#7a8aa0" fill-opacity="0.85"/><circle cx="778.4" cy="552.2" r="2.1" fill="#f08a2c" fill-opacity="0.85"/><circle cx="888.2" cy="552.2" r="2.1" fill="#a08060" fill-opacity="0.85"/><circle cx="764.6" cy="552.2" r="2.1" fill="#f08a2c" fill-opacity="0.85"/><circle cx="888.8" cy="552.2" r="2.1" fill="#f08a2c" fill-opacity="0.85"/><circle cx="741.1" cy="552.2" r="2.1" fill="#f08a2c" fill-opacity="0.85"/><circle cx="816.3" cy="552.2" r="2.1" fill="#7a8aa0" fill-opacity="0.85"/><circle cx="735.7" cy="552.2" r="2.1" fill="#f08a2c" fill-opacity="0.85"/><circle cx="776.8" cy="552.2" r="2.1" fill="#f08a2c" fill-opacity="0.85"/><circle cx="848.4" cy="552.2" r="2.1" fill="#f08a2c" fill-opacity="0.85"/><circle cx="791.2" cy="552.2" r="2.1" fill="#a08060" fill-opacity="0.85"/><circle cx="750.1" cy="552.2" r="2.1" fill="#f08a2c" fill-opacity="0.85"/><circle cx="840.2" cy="552.2" r="2.1" fill="#f08a2c" fill-opacity="0.85"/><circle cx="778.3" cy="552.2" r="2.1" fill="#f08a2c" fill-opacity="0.85"/><circle cx="865.0" cy="552.2" r="2.1" fill="#f08a2c" fill-opacity="0.85"/><circle cx="717.7" cy="552.2" r="2.1" fill="#f08a2c" fill-opacity="0.85"/><circle cx="755.3" cy="552.2" r="2.1" fill="#f08a2c" fill-opacity="0.85"/><circle cx="882.1" cy="552.2" r="2.1" fill="#f08a2c" fill-opacity="0.85"/><circle cx="827.8" cy="552.2" r="2.1" fill="#f08a2c" fill-opacity="0.85"/><circle cx="763.2" cy="552.2" r="2.1" fill="#f08a2c" fill-opacity="0.85"/><circle cx="821.0" cy="552.2" r="2.1" fill="#7a8aa0" fill-opacity="0.85"/><circle cx="825.7" cy="552.2" r="2.1" fill="#7a8aa0" fill-opacity="0.85"/><circle cx="856.5" cy="552.2" r="2.1" fill="#f08a2c" fill-opacity="0.85"/><circle cx="879.2" cy="552.2" r="2.1" fill="#f08a2c" fill-opacity="0.85"/><circle cx="718.7" cy="552.2" r="2.1" fill="#f08a2c" fill-opacity="0.85"/><circle cx="848.1" cy="552.2" r="2.1" fill="#f08a2c" fill-opacity="0.85"/><circle cx="787.2" cy="552.2" r="2.1" fill="#f08a2c" fill-opacity="0.85"/><circle cx="807.3" cy="552.2" r="2.1" fill="#f08a2c" fill-opacity="0.85"/><circle cx="830.3" cy="552.2" r="2.1" fill="#f08a2c" fill-opacity="0.85"/><circle cx="721.4" cy="552.2" r="2.1" fill="#7a8aa0" fill-opacity="0.85"/><circle cx="760.1" cy="552.2" r="2.1" fill="#f08a2c" fill-opacity="0.85"/><circle cx="875.6" cy="552.2" r="2.1" fill="#f08a2c" fill-opacity="0.85"/><circle cx="728.3" cy="552.2" r="2.1" fill="#f08a2c" fill-opacity="0.85"/><circle cx="751.4" cy="552.2" r="2.1" fill="#7a8aa0" fill-opacity="0.85"/><circle cx="780.2" cy="552.2" r="2.1" fill="#f08a2c" fill-opacity="0.85"/><circle cx="862.7" cy="552.2" r="2.1" fill="#f08a2c" fill-opacity="0.85"/><circle cx="773.8" cy="552.2" r="2.1" fill="#7a8aa0" fill-opacity="0.85"/><circle cx="797.2" cy="552.2" r="2.1" fill="#a08060" fill-opacity="0.85"/><circle cx="719.1" cy="552.2" r="2.1" fill="#f08a2c" fill-opacity="0.85"/><circle cx="785.9" cy="552.2" r="2.1" fill="#f08a2c" fill-opacity="0.85"/><circle cx="844.9" cy="552.2" r="2.1" fill="#f08a2c" fill-opacity="0.85"/><circle cx="829.9" cy="552.2" r="2.1" fill="#f08a2c" fill-opacity="0.85"/><circle cx="859.5" cy="552.2" r="2.1" fill="#f08a2c" fill-opacity="0.85"/><circle cx="791.2" cy="552.2" r="2.1" fill="#f08a2c" fill-opacity="0.85"/><circle cx="854.5" cy="552.2" r="2.1" fill="#f08a2c" fill-opacity="0.85"/><circle cx="818.8" cy="552.2" r="2.1" fill="#7a8aa0" fill-opacity="0.85"/><circle cx="853.6" cy="552.2" r="2.1" fill="#a08060" fill-opacity="0.85"/><circle cx="797.5" cy="552.2" r="2.1" fill="#7a8aa0" fill-opacity="0.85"/><circle cx="841.2" cy="552.2" r="2.1" fill="#f08a2c" fill-opacity="0.85"/><circle cx="853.0" cy="552.2" r="2.1" fill="#f08a2c" fill-opacity="0.85"/><circle cx="749.8" cy="552.2" r="2.1" fill="#a08060" fill-opacity="0.85"/><circle cx="788.1" cy="552.2" r="2.1" fill="#7a8aa0" fill-opacity="0.85"/><circle cx="718.2" cy="552.2" r="2.1" fill="#7a8aa0" fill-opacity="0.85"/><circle cx="789.3" cy="552.2" r="2.1" fill="#f08a2c" fill-opacity="0.85"/><circle cx="728.2" cy="552.2" r="2.1" fill="#7a8aa0" fill-opacity="0.85"/><circle cx="784.3" cy="552.2" r="2.1" fill="#f08a2c" fill-opacity="0.85"/><circle cx="717.0" cy="552.2" r="2.1" fill="#f08a2c" fill-opacity="0.85"/><circle cx="798.9" cy="552.2" r="2.1" fill="#7a8aa0" fill-opacity="0.85"/><circle cx="748.9" cy="552.2" r="2.1" fill="#f08a2c" fill-opacity="0.85"/><circle cx="854.3" cy="552.2" r="2.1" fill="#f08a2c" fill-opacity="0.85"/><circle cx="848.5" cy="552.2" r="2.1" fill="#f08a2c" fill-opacity="0.85"/><circle cx="719.2" cy="552.2" r="2.1" fill="#f08a2c" fill-opacity="0.85"/><circle cx="716.4" cy="552.2" r="2.1" fill="#7a8aa0" fill-opacity="0.85"/><circle cx="804.5" cy="552.2" r="2.1" fill="#7a8aa0" fill-opacity="0.85"/><circle cx="851.4" cy="552.2" r="2.1" fill="#f08a2c" fill-opacity="0.85"/><circle cx="891.0" cy="552.2" r="2.1" fill="#f08a2c" fill-opacity="0.85"/><circle cx="838.2" cy="552.2" r="2.1" fill="#a08060" fill-opacity="0.85"/><circle cx="764.0" cy="552.2" r="2.1" fill="#f08a2c" fill-opacity="0.85"/><circle cx="808.3" cy="552.2" r="2.1" fill="#f08a2c" fill-opacity="0.85"/><circle cx="750.1" cy="552.2" r="2.1" fill="#f08a2c" fill-opacity="0.85"/><circle cx="876.2" cy="552.2" r="2.1" fill="#7a8aa0" fill-opacity="0.85"/><circle cx="823.8" cy="552.2" r="2.1" fill="#f08a2c" fill-opacity="0.85"/><circle cx="820.3" cy="552.2" r="2.1" fill="#f08a2c" fill-opacity="0.85"/><circle cx="753.0" cy="552.2" r="2.1" fill="#f08a2c" fill-opacity="0.85"/><circle cx="866.5" cy="552.2" r="2.1" fill="#7a8aa0" fill-opacity="0.85"/><circle cx="814.3" cy="552.2" r="2.1" fill="#f08a2c" fill-opacity="0.85"/><circle cx="877.5" cy="552.2" r="2.1" fill="#a08060" fill-opacity="0.85"/><circle cx="739.4" cy="552.2" r="2.1" fill="#f08a2c" fill-opacity="0.85"/><circle cx="831.2" cy="552.2" r="2.1" fill="#f08a2c" fill-opacity="0.85"/><circle cx="877.9" cy="552.2" r="2.1" fill="#7a8aa0" fill-opacity="0.85"/><circle cx="870.0" cy="552.2" r="2.1" fill="#f08a2c" fill-opacity="0.85"/><circle cx="720.5" cy="552.2" r="2.1" fill="#f08a2c" fill-opacity="0.85"/><circle cx="882.6" cy="552.2" r="2.1" fill="#f08a2c" fill-opacity="0.85"/><circle cx="853.1" cy="552.2" r="2.1" fill="#f08a2c" fill-opacity="0.85"/><circle cx="854.0" cy="552.2" r="2.1" fill="#7a8aa0" fill-opacity="0.85"/><circle cx="858.8" cy="552.2" r="2.1" fill="#f08a2c" fill-opacity="0.85"/><circle cx="776.9" cy="552.2" r="2.1" fill="#7a8aa0" fill-opacity="0.85"/><circle cx="836.2" cy="552.2" r="2.1" fill="#f08a2c" fill-opacity="0.85"/><circle cx="889.8" cy="552.2" r="2.1" fill="#f08a2c" fill-opacity="0.85"/><circle cx="721.7" cy="552.2" r="2.1" fill="#7a8aa0" fill-opacity="0.85"/><circle cx="866.5" cy="552.2" r="2.1" fill="#f08a2c" fill-opacity="0.85"/><circle cx="743.9" cy="552.2" r="2.1" fill="#f08a2c" fill-opacity="0.85"/><circle cx="720.9" cy="552.2" r="2.1" fill="#f08a2c" fill-opacity="0.85"/><circle cx="833.8" cy="552.2" r="2.1" fill="#f08a2c" fill-opacity="0.85"/><circle cx="773.4" cy="552.2" r="2.1" fill="#f08a2c" fill-opacity="0.85"/><circle cx="891.6" cy="552.2" r="2.1" fill="#f08a2c" fill-opacity="0.85"/><circle cx="773.2" cy="552.2" r="2.1" fill="#f08a2c" fill-opacity="0.85"/><circle cx="878.9" cy="552.2" r="2.1" fill="#f08a2c" fill-opacity="0.85"/><circle cx="712.7" cy="552.2" r="2.1" fill="#a08060" fill-opacity="0.85"/><circle cx="794.6" cy="552.2" r="2.1" fill="#f08a2c" fill-opacity="0.85"/><circle cx="859.4" cy="552.2" r="2.1" fill="#f08a2c" fill-opacity="0.85"/><circle cx="845.7" cy="552.2" r="2.1" fill="#f08a2c" fill-opacity="0.85"/><circle cx="830.8" cy="552.2" r="2.1" fill="#7a8aa0" fill-opacity="0.85"/><circle cx="773.8" cy="552.2" r="2.1" fill="#7a8aa0" fill-opacity="0.85"/><circle cx="860.3" cy="552.2" r="2.1" fill="#7a8aa0" fill-opacity="0.85"/><circle cx="752.3" cy="552.2" r="2.1" fill="#7a8aa0" fill-opacity="0.85"/><circle cx="763.0" cy="552.2" r="2.1" fill="#f08a2c" fill-opacity="0.85"/><circle cx="844.3" cy="552.2" r="2.1" fill="#f08a2c" fill-opacity="0.85"/><circle cx="860.0" cy="552.2" r="2.1" fill="#7a8aa0" fill-opacity="0.85"/><circle cx="748.1" cy="552.2" r="2.1" fill="#f08a2c" fill-opacity="0.85"/><circle cx="852.4" cy="552.2" r="2.1" fill="#f08a2c" fill-opacity="0.85"/><circle cx="776.8" cy="552.2" r="2.1" fill="#7a8aa0" fill-opacity="0.85"/><circle cx="818.4" cy="552.2" r="2.1" fill="#f08a2c" fill-opacity="0.85"/><circle cx="714.3" cy="552.2" r="2.1" fill="#f08a2c" fill-opacity="0.85"/><circle cx="824.3" cy="552.2" r="2.1" fill="#7a8aa0" fill-opacity="0.85"/><circle cx="794.9" cy="552.2" r="2.1" fill="#f08a2c" fill-opacity="0.85"/><circle cx="755.0" cy="552.2" r="2.1" fill="#f08a2c" fill-opacity="0.85"/><circle cx="718.6" cy="552.2" r="2.1" fill="#7a8aa0" fill-opacity="0.85"/><circle cx="778.0" cy="552.2" r="2.1" fill="#7a8aa0" fill-opacity="0.85"/><circle cx="854.3" cy="552.2" r="2.1" fill="#f08a2c" fill-opacity="0.85"/><circle cx="743.1" cy="552.2" r="2.1" fill="#f08a2c" fill-opacity="0.85"/><circle cx="844.3" cy="552.2" r="2.1" fill="#7a8aa0" fill-opacity="0.85"/><circle cx="754.4" cy="552.2" r="2.1" fill="#f08a2c" fill-opacity="0.85"/><circle cx="741.7" cy="552.2" r="2.1" fill="#7a8aa0" fill-opacity="0.85"/><circle cx="781.6" cy="552.2" r="2.1" fill="#f08a2c" fill-opacity="0.85"/><circle cx="853.2" cy="552.2" r="2.1" fill="#7a8aa0" fill-opacity="0.85"/><circle cx="742.0" cy="552.2" r="2.1" fill="#f08a2c" fill-opacity="0.85"/><circle cx="811.6" cy="552.2" r="2.1" fill="#f08a2c" fill-opacity="0.85"/><circle cx="752.4" cy="552.2" r="2.1" fill="#f08a2c" fill-opacity="0.85"/><circle cx="749.3" cy="552.2" r="2.1" fill="#7a8aa0" fill-opacity="0.85"/><circle cx="740.8" cy="552.2" r="2.1" fill="#f08a2c" fill-opacity="0.85"/><circle cx="838.8" cy="552.2" r="2.1" fill="#a08060" fill-opacity="0.85"/><circle cx="851.4" cy="552.2" r="2.1" fill="#f08a2c" fill-opacity="0.85"/><circle cx="797.5" cy="552.2" r="2.1" fill="#7a8aa0" fill-opacity="0.85"/><circle cx="827.8" cy="552.2" r="2.1" fill="#a08060" fill-opacity="0.85"/><circle cx="794.4" cy="552.2" r="2.1" fill="#f08a2c" fill-opacity="0.85"/><circle cx="749.0" cy="552.2" r="2.1" fill="#f08a2c" fill-opacity="0.85"/><circle cx="836.4" cy="552.2" r="2.1" fill="#f08a2c" fill-opacity="0.85"/><circle cx="815.3" cy="552.2" r="2.1" fill="#f08a2c" fill-opacity="0.85"/><circle cx="736.1" cy="552.2" r="2.1" fill="#7a8aa0" fill-opacity="0.85"/><circle cx="714.0" cy="552.2" r="2.1" fill="#f08a2c" fill-opacity="0.85"/><circle cx="888.3" cy="552.2" r="2.1" fill="#f08a2c" fill-opacity="0.85"/><circle cx="734.7" cy="552.2" r="2.1" fill="#f08a2c" fill-opacity="0.85"/><circle cx="823.1" cy="552.2" r="2.1" fill="#f08a2c" fill-opacity="0.85"/><circle cx="820.4" cy="552.2" r="2.1" fill="#7a8aa0" fill-opacity="0.85"/><circle cx="832.0" cy="552.2" r="2.1" fill="#7a8aa0" fill-opacity="0.85"/><circle cx="889.0" cy="552.2" r="2.1" fill="#f08a2c" fill-opacity="0.85"/><circle cx="762.1" cy="552.2" r="2.1" fill="#7a8aa0" fill-opacity="0.85"/><circle cx="882.7" cy="552.2" r="2.1" fill="#7a8aa0" fill-opacity="0.85"/><circle cx="770.2" cy="552.2" r="2.1" fill="#a08060" fill-opacity="0.85"/><circle cx="875.5" cy="552.2" r="2.1" fill="#f08a2c" fill-opacity="0.85"/><circle cx="829.4" cy="552.2" r="2.1" fill="#f08a2c" fill-opacity="0.85"/><circle cx="790.3" cy="552.2" r="2.1" fill="#f08a2c" fill-opacity="0.85"/><circle cx="746.9" cy="552.2" r="2.1" fill="#f08a2c" fill-opacity="0.85"/><circle cx="871.7" cy="552.2" r="2.1" fill="#f08a2c" fill-opacity="0.85"/><circle cx="819.6" cy="552.2" r="2.1" fill="#f08a2c" fill-opacity="0.85"/><circle cx="873.3" cy="552.2" r="2.1" fill="#a08060" fill-opacity="0.85"/><circle cx="718.4" cy="552.2" r="2.1" fill="#7a8aa0" fill-opacity="0.85"/><circle cx="884.4" cy="552.2" r="2.1" fill="#f08a2c" fill-opacity="0.85"/><circle cx="717.1" cy="552.2" r="2.1" fill="#7a8aa0" fill-opacity="0.85"/><circle cx="743.0" cy="552.2" r="2.1" fill="#f08a2c" fill-opacity="0.85"/><circle cx="860.4" cy="552.2" r="2.1" fill="#f08a2c" fill-opacity="0.85"/><circle cx="871.4" cy="552.2" r="2.1" fill="#f08a2c" fill-opacity="0.85"/><circle cx="812.5" cy="552.2" r="2.1" fill="#f08a2c" fill-opacity="0.85"/><circle cx="874.3" cy="552.2" r="2.1" fill="#f08a2c" fill-opacity="0.85"/><circle cx="771.4" cy="552.2" r="2.1" fill="#f08a2c" fill-opacity="0.85"/><circle cx="780.8" cy="552.2" r="2.1" fill="#f08a2c" fill-opacity="0.85"/><circle cx="886.9" cy="552.2" r="2.1" fill="#f08a2c" fill-opacity="0.85"/><circle cx="761.7" cy="552.2" r="2.1" fill="#f08a2c" fill-opacity="0.85"/><circle cx="866.4" cy="552.2" r="2.1" fill="#a08060" fill-opacity="0.85"/><circle cx="806.4" cy="552.2" r="2.1" fill="#a08060" fill-opacity="0.85"/><circle cx="720.2" cy="552.2" r="2.1" fill="#a08060" fill-opacity="0.85"/><circle cx="878.6" cy="552.2" r="2.1" fill="#f08a2c" fill-opacity="0.85"/><circle cx="710.4" cy="552.2" r="2.1" fill="#f08a2c" fill-opacity="0.85"/><circle cx="890.2" cy="552.2" r="2.1" fill="#f08a2c" fill-opacity="0.85"/><circle cx="755.1" cy="552.2" r="2.1" fill="#f08a2c" fill-opacity="0.85"/><circle cx="763.1" cy="552.2" r="2.1" fill="#f08a2c" fill-opacity="0.85"/><circle cx="728.4" cy="552.2" r="2.1" fill="#f08a2c" fill-opacity="0.85"/><circle cx="840.6" cy="552.2" r="2.1" fill="#f08a2c" fill-opacity="0.85"/><circle cx="838.9" cy="552.2" r="2.1" fill="#f08a2c" fill-opacity="0.85"/><circle cx="743.0" cy="552.2" r="2.1" fill="#7a8aa0" fill-opacity="0.85"/><circle cx="732.0" cy="552.2" r="2.1" fill="#7a8aa0" fill-opacity="0.85"/><circle cx="742.6" cy="552.2" r="2.1" fill="#f08a2c" fill-opacity="0.85"/><circle cx="767.9" cy="552.2" r="2.1" fill="#f08a2c" fill-opacity="0.85"/><circle cx="751.4" cy="552.2" r="2.1" fill="#7a8aa0" fill-opacity="0.85"/><circle cx="780.6" cy="552.2" r="2.1" fill="#a08060" fill-opacity="0.85"/><circle cx="836.2" cy="552.2" r="2.1" fill="#f08a2c" fill-opacity="0.85"/><circle cx="811.8" cy="552.2" r="2.1" fill="#7a8aa0" fill-opacity="0.85"/><circle cx="855.9" cy="552.2" r="2.1" fill="#f08a2c" fill-opacity="0.85"/><circle cx="763.3" cy="552.2" r="2.1" fill="#7a8aa0" fill-opacity="0.85"/><circle cx="852.5" cy="552.2" r="2.1" fill="#a08060" fill-opacity="0.85"/><circle cx="887.6" cy="552.2" r="2.1" fill="#f08a2c" fill-opacity="0.85"/><circle cx="731.3" cy="552.2" r="2.1" fill="#f08a2c" fill-opacity="0.85"/><circle cx="720.2" cy="552.2" r="2.1" fill="#f08a2c" fill-opacity="0.85"/><circle cx="814.4" cy="552.2" r="2.1" fill="#f08a2c" fill-opacity="0.85"/><circle cx="868.3" cy="552.2" r="2.1" fill="#7a8aa0" fill-opacity="0.85"/><circle cx="877.0" cy="552.2" r="2.1" fill="#a08060" fill-opacity="0.85"/><circle cx="790.0" cy="552.2" r="2.1" fill="#a08060" fill-opacity="0.85"/><circle cx="766.5" cy="552.2" r="2.1" fill="#f08a2c" fill-opacity="0.85"/><circle cx="812.9" cy="552.2" r="2.1" fill="#7a8aa0" fill-opacity="0.85"/><circle cx="762.8" cy="552.2" r="2.1" fill="#7a8aa0" fill-opacity="0.85"/><circle cx="850.3" cy="552.2" r="2.1" fill="#7a8aa0" fill-opacity="0.85"/><circle cx="865.2" cy="552.2" r="2.1" fill="#f08a2c" fill-opacity="0.85"/><circle cx="772.4" cy="552.2" r="2.1" fill="#f08a2c" fill-opacity="0.85"/><circle cx="862.1" cy="552.2" r="2.1" fill="#a08060" fill-opacity="0.85"/><circle cx="806.1" cy="552.2" r="2.1" fill="#f08a2c" fill-opacity="0.85"/><circle cx="710.4" cy="552.2" r="2.1" fill="#7a8aa0" fill-opacity="0.85"/><circle cx="811.1" cy="552.2" r="2.1" fill="#f08a2c" fill-opacity="0.85"/><circle cx="808.6" cy="552.2" r="2.1" fill="#f08a2c" fill-opacity="0.85"/><circle cx="793.7" cy="552.2" r="2.1" fill="#7a8aa0" fill-opacity="0.85"/><circle cx="760.5" cy="552.2" r="2.1" fill="#a08060" fill-opacity="0.85"/><circle cx="740.3" cy="552.2" r="2.1" fill="#7a8aa0" fill-opacity="0.85"/><circle cx="836.0" cy="552.2" r="2.1" fill="#7a8aa0" fill-opacity="0.85"/><circle cx="775.9" cy="552.2" r="2.1" fill="#f08a2c" fill-opacity="0.85"/><circle cx="727.6" cy="552.2" r="2.1" fill="#f08a2c" fill-opacity="0.85"/><circle cx="880.6" cy="552.2" r="2.1" fill="#7a8aa0" fill-opacity="0.85"/><circle cx="796.7" cy="552.2" r="2.1" fill="#f08a2c" fill-opacity="0.85"/><circle cx="867.3" cy="552.2" r="2.1" fill="#a08060" fill-opacity="0.85"/><circle cx="716.5" cy="552.2" r="2.1" fill="#f08a2c" fill-opacity="0.85"/><circle cx="743.3" cy="552.2" r="2.1" fill="#f08a2c" fill-opacity="0.85"/><circle cx="847.7" cy="552.2" r="2.1" fill="#f08a2c" fill-opacity="0.85"/><circle cx="772.7" cy="552.2" r="2.1" fill="#a08060" fill-opacity="0.85"/><circle cx="866.0" cy="552.2" r="2.1" fill="#f08a2c" fill-opacity="0.85"/><circle cx="842.2" cy="552.2" r="2.1" fill="#f08a2c" fill-opacity="0.85"/><circle cx="795.4" cy="552.2" r="2.1" fill="#f08a2c" fill-opacity="0.85"/><circle cx="726.1" cy="552.2" r="2.1" fill="#f08a2c" fill-opacity="0.85"/><circle cx="822.8" cy="552.2" r="2.1" fill="#f08a2c" fill-opacity="0.85"/><circle cx="771.8" cy="552.2" r="2.1" fill="#f08a2c" fill-opacity="0.85"/><circle cx="810.7" cy="552.2" r="2.1" fill="#f08a2c" fill-opacity="0.85"/><circle cx="729.4" cy="552.2" r="2.1" fill="#f08a2c" fill-opacity="0.85"/><circle cx="829.1" cy="552.2" r="2.1" fill="#f08a2c" fill-opacity="0.85"/><circle cx="767.9" cy="552.2" r="2.1" fill="#7a8aa0" fill-opacity="0.85"/><circle cx="886.5" cy="552.2" r="2.1" fill="#f08a2c" fill-opacity="0.85"/><circle cx="770.7" cy="552.2" r="2.1" fill="#f08a2c" fill-opacity="0.85"/><circle cx="828.2" cy="552.2" r="2.1" fill="#a08060" fill-opacity="0.85"/><circle cx="761.7" cy="552.2" r="2.1" fill="#7a8aa0" fill-opacity="0.85"/><circle cx="816.3" cy="552.2" r="2.1" fill="#7a8aa0" fill-opacity="0.85"/><circle cx="809.3" cy="552.2" r="2.1" fill="#f08a2c" fill-opacity="0.85"/><circle cx="742.2" cy="552.2" r="2.1" fill="#f08a2c" fill-opacity="0.85"/><circle cx="877.2" cy="552.2" r="2.1" fill="#f08a2c" fill-opacity="0.85"/><circle cx="837.2" cy="552.2" r="2.1" fill="#f08a2c" fill-opacity="0.85"/><circle cx="759.4" cy="552.2" r="2.1" fill="#f08a2c" fill-opacity="0.85"/><circle cx="763.1" cy="552.2" r="2.1" fill="#f08a2c" fill-opacity="0.85"/><circle cx="835.8" cy="552.2" r="2.1" fill="#f08a2c" fill-opacity="0.85"/><circle cx="876.4" cy="552.2" r="2.1" fill="#7a8aa0" fill-opacity="0.85"/><circle cx="806.8" cy="552.2" r="2.1" fill="#f08a2c" fill-opacity="0.85"/><circle cx="776.1" cy="552.2" r="2.1" fill="#f08a2c" fill-opacity="0.85"/><circle cx="875.5" cy="552.2" r="2.1" fill="#f08a2c" fill-opacity="0.85"/><circle cx="778.1" cy="552.2" r="2.1" fill="#f08a2c" fill-opacity="0.85"/><circle cx="838.7" cy="552.2" r="2.1" fill="#a08060" fill-opacity="0.85"/><circle cx="723.8" cy="552.2" r="2.1" fill="#f08a2c" fill-opacity="0.85"/><circle cx="767.5" cy="552.2" r="2.1" fill="#f08a2c" fill-opacity="0.85"/><circle cx="893.6" cy="552.2" r="2.1" fill="#f08a2c" fill-opacity="0.85"/><circle cx="820.1" cy="552.2" r="2.1" fill="#a08060" fill-opacity="0.85"/><circle cx="748.9" cy="552.2" r="2.1" fill="#f08a2c" fill-opacity="0.85"/><circle cx="887.9" cy="552.2" r="2.1" fill="#f08a2c" fill-opacity="0.85"/><circle cx="844.1" cy="552.2" r="2.1" fill="#f08a2c" fill-opacity="0.85"/><circle cx="758.3" cy="552.2" r="2.1" fill="#a08060" fill-opacity="0.85"/><circle cx="856.0" cy="552.2" r="2.1" fill="#f08a2c" fill-opacity="0.85"/><circle cx="827.4" cy="552.2" r="2.1" fill="#f08a2c" fill-opacity="0.85"/><circle cx="756.6" cy="552.2" r="2.1" fill="#a08060" fill-opacity="0.85"/><circle cx="814.3" cy="552.2" r="2.1" fill="#a08060" fill-opacity="0.85"/><circle cx="807.3" cy="552.2" r="2.1" fill="#f08a2c" fill-opacity="0.85"/><circle cx="857.8" cy="552.2" r="2.1" fill="#f08a2c" fill-opacity="0.85"/><circle cx="767.5" cy="552.2" r="2.1" fill="#f08a2c" fill-opacity="0.85"/><circle cx="857.9" cy="552.2" r="2.1" fill="#f08a2c" fill-opacity="0.85"/><circle cx="880.2" cy="552.2" r="2.1" fill="#f08a2c" fill-opacity="0.85"/><circle cx="842.6" cy="552.2" r="2.1" fill="#f08a2c" fill-opacity="0.85"/><circle cx="749.4" cy="552.2" r="2.1" fill="#f08a2c" fill-opacity="0.85"/><circle cx="801.3" cy="552.2" r="2.1" fill="#7a8aa0" fill-opacity="0.85"/><circle cx="808.6" cy="552.2" r="2.1" fill="#f08a2c" fill-opacity="0.85"/><circle cx="724.8" cy="552.2" r="2.1" fill="#f08a2c" fill-opacity="0.85"/><circle cx="812.2" cy="552.2" r="2.1" fill="#f08a2c" fill-opacity="0.85"/><circle cx="747.9" cy="552.2" r="2.1" fill="#f08a2c" fill-opacity="0.85"/><circle cx="763.9" cy="552.2" r="2.1" fill="#f08a2c" fill-opacity="0.85"/><circle cx="722.8" cy="552.2" r="2.1" fill="#f08a2c" fill-opacity="0.85"/><circle cx="865.5" cy="552.2" r="2.1" fill="#f08a2c" fill-opacity="0.85"/><circle cx="739.9" cy="552.2" r="2.1" fill="#f08a2c" fill-opacity="0.85"/><circle cx="762.9" cy="552.2" r="2.1" fill="#f08a2c" fill-opacity="0.85"/><circle cx="784.5" cy="552.2" r="2.1" fill="#7a8aa0" fill-opacity="0.85"/><circle cx="790.6" cy="552.2" r="2.1" fill="#f08a2c" fill-opacity="0.85"/><circle cx="826.4" cy="552.2" r="2.1" fill="#7a8aa0" fill-opacity="0.85"/><circle cx="734.5" cy="552.2" r="2.1" fill="#a08060" fill-opacity="0.85"/><circle cx="726.2" cy="552.2" r="2.1" fill="#f08a2c" fill-opacity="0.85"/><circle cx="832.9" cy="552.2" r="2.1" fill="#a08060" fill-opacity="0.85"/><circle cx="826.6" cy="552.2" r="2.1" fill="#f08a2c" fill-opacity="0.85"/><circle cx="760.7" cy="552.2" r="2.1" fill="#f08a2c" fill-opacity="0.85"/><circle cx="857.9" cy="552.2" r="2.1" fill="#f08a2c" fill-opacity="0.85"/><circle cx="802.7" cy="552.2" r="2.1" fill="#a08060" fill-opacity="0.85"/><circle cx="797.0" cy="552.2" r="2.1" fill="#f08a2c" fill-opacity="0.85"/><circle cx="831.1" cy="552.2" r="2.1" fill="#f08a2c" fill-opacity="0.85"/><circle cx="724.1" cy="552.2" r="2.1" fill="#f08a2c" fill-opacity="0.85"/><circle cx="814.6" cy="552.2" r="2.1" fill="#a08060" fill-opacity="0.85"/><circle cx="807.0" cy="552.2" r="2.1" fill="#f08a2c" fill-opacity="0.85"/><circle cx="739.7" cy="552.2" r="2.1" fill="#f08a2c" fill-opacity="0.85"/><circle cx="853.8" cy="552.2" r="2.1" fill="#a08060" fill-opacity="0.85"/><circle cx="757.6" cy="552.2" r="2.1" fill="#f08a2c" fill-opacity="0.85"/><circle cx="788.3" cy="552.2" r="2.1" fill="#a08060" fill-opacity="0.85"/><circle cx="862.4" cy="552.2" r="2.1" fill="#7a8aa0" fill-opacity="0.85"/><circle cx="736.9" cy="552.2" r="2.1" fill="#f08a2c" fill-opacity="0.85"/><circle cx="716.9" cy="552.2" r="2.1" fill="#f08a2c" fill-opacity="0.85"/><circle cx="868.1" cy="552.2" r="2.1" fill="#f08a2c" fill-opacity="0.85"/><circle cx="894.0" cy="552.2" r="2.1" fill="#f08a2c" fill-opacity="0.85"/><circle cx="767.2" cy="552.2" r="2.1" fill="#7a8aa0" fill-opacity="0.85"/><circle cx="784.6" cy="552.2" r="2.1" fill="#f08a2c" fill-opacity="0.85"/><circle cx="795.2" cy="552.2" r="2.1" fill="#a08060" fill-opacity="0.85"/><circle cx="824.9" cy="552.2" r="2.1" fill="#f08a2c" fill-opacity="0.85"/><circle cx="753.0" cy="552.2" r="2.1" fill="#f08a2c" fill-opacity="0.85"/><circle cx="784.2" cy="552.2" r="2.1" fill="#a08060" fill-opacity="0.85"/><circle cx="811.5" cy="552.2" r="2.1" fill="#7a8aa0" fill-opacity="0.85"/><circle cx="751.2" cy="552.2" r="2.1" fill="#f08a2c" fill-opacity="0.85"/><circle cx="835.6" cy="552.2" r="2.1" fill="#7a8aa0" fill-opacity="0.85"/><circle cx="849.7" cy="552.2" r="2.1" fill="#f08a2c" fill-opacity="0.85"/><circle cx="889.4" cy="552.2" r="2.1" fill="#f08a2c" fill-opacity="0.85"/><circle cx="752.1" cy="552.2" r="2.1" fill="#f08a2c" fill-opacity="0.85"/><circle cx="752.3" cy="552.2" r="2.1" fill="#a08060" fill-opacity="0.85"/><circle cx="764.2" cy="552.2" r="2.1" fill="#f08a2c" fill-opacity="0.85"/><circle cx="709.8" cy="552.2" r="2.1" fill="#a08060" fill-opacity="0.85"/><circle cx="841.3" cy="552.2" r="2.1" fill="#f08a2c" fill-opacity="0.85"/><circle cx="763.6" cy="552.2" r="2.1" fill="#f08a2c" fill-opacity="0.85"/><circle cx="791.7" cy="552.2" r="2.1" fill="#f08a2c" fill-opacity="0.85"/><circle cx="774.4" cy="552.2" r="2.1" fill="#f08a2c" fill-opacity="0.85"/><circle cx="758.4" cy="552.2" r="2.1" fill="#f08a2c" fill-opacity="0.85"/><circle cx="846.7" cy="552.2" r="2.1" fill="#f08a2c" fill-opacity="0.85"/><circle cx="805.4" cy="552.2" r="2.1" fill="#a08060" fill-opacity="0.85"/><circle cx="853.0" cy="552.2" r="2.1" fill="#7a8aa0" fill-opacity="0.85"/><circle cx="718.2" cy="552.2" r="2.1" fill="#7a8aa0" fill-opacity="0.85"/><circle cx="763.5" cy="552.2" r="2.1" fill="#f08a2c" fill-opacity="0.85"/><circle cx="754.4" cy="552.2" r="2.1" fill="#f08a2c" fill-opacity="0.85"/><circle cx="843.8" cy="552.2" r="2.1" fill="#f08a2c" fill-opacity="0.85"/><circle cx="891.2" cy="552.2" r="2.1" fill="#f08a2c" fill-opacity="0.85"/><circle cx="884.2" cy="552.2" r="2.1" fill="#7a8aa0" fill-opacity="0.85"/><circle cx="759.4" cy="552.2" r="2.1" fill="#f08a2c" fill-opacity="0.85"/><circle cx="830.2" cy="552.2" r="2.1" fill="#f08a2c" fill-opacity="0.85"/><circle cx="742.9" cy="552.2" r="2.1" fill="#f08a2c" fill-opacity="0.85"/><circle cx="768.3" cy="552.2" r="2.1" fill="#7a8aa0" fill-opacity="0.85"/><circle cx="852.4" cy="552.2" r="2.1" fill="#a08060" fill-opacity="0.85"/><circle cx="730.5" cy="552.2" r="2.1" fill="#f08a2c" fill-opacity="0.85"/><circle cx="797.4" cy="552.2" r="2.1" fill="#7a8aa0" fill-opacity="0.85"/><circle cx="835.0" cy="552.2" r="2.1" fill="#f08a2c" fill-opacity="0.85"/><circle cx="883.1" cy="552.2" r="2.1" fill="#f08a2c" fill-opacity="0.85"/><circle cx="830.3" cy="552.2" r="2.1" fill="#f08a2c" fill-opacity="0.85"/><circle cx="751.3" cy="552.2" r="2.1" fill="#f08a2c" fill-opacity="0.85"/><circle cx="863.9" cy="552.2" r="2.1" fill="#a08060" fill-opacity="0.85"/><circle cx="813.0" cy="552.2" r="2.1" fill="#a08060" fill-opacity="0.85"/><circle cx="889.2" cy="552.2" r="2.1" fill="#f08a2c" fill-opacity="0.85"/><circle cx="887.3" cy="552.2" r="2.1" fill="#f08a2c" fill-opacity="0.85"/><circle cx="830.8" cy="552.2" r="2.1" fill="#7a8aa0" fill-opacity="0.85"/><circle cx="710.5" cy="552.2" r="2.1" fill="#f08a2c" fill-opacity="0.85"/><circle cx="804.5" cy="552.2" r="2.1" fill="#f08a2c" fill-opacity="0.85"/><circle cx="830.6" cy="552.2" r="2.1" fill="#f08a2c" fill-opacity="0.85"/><circle cx="727.9" cy="552.2" r="2.1" fill="#f08a2c" fill-opacity="0.85"/><circle cx="732.8" cy="552.2" r="2.1" fill="#7a8aa0" fill-opacity="0.85"/><circle cx="764.1" cy="552.2" r="2.1" fill="#a08060" fill-opacity="0.85"/><circle cx="894.0" cy="552.2" r="2.1" fill="#7a8aa0" fill-opacity="0.85"/><circle cx="849.4" cy="552.2" r="2.1" fill="#f08a2c" fill-opacity="0.85"/><circle cx="848.8" cy="552.2" r="2.1" fill="#7a8aa0" fill-opacity="0.85"/><circle cx="891.3" cy="552.2" r="2.1" fill="#a08060" fill-opacity="0.85"/><circle cx="888.3" cy="552.2" r="2.1" fill="#f08a2c" fill-opacity="0.85"/><circle cx="710.2" cy="552.2" r="2.1" fill="#f08a2c" fill-opacity="0.85"/><circle cx="811.4" cy="552.2" r="2.1" fill="#f08a2c" fill-opacity="0.85"/><circle cx="774.9" cy="552.2" r="2.1" fill="#f08a2c" fill-opacity="0.85"/><circle cx="737.6" cy="552.2" r="2.1" fill="#7a8aa0" fill-opacity="0.85"/><circle cx="857.0" cy="552.2" r="2.1" fill="#7a8aa0" fill-opacity="0.85"/><circle cx="709.1" cy="654.7" r="2.1" fill="#f28523" fill-opacity="0.85"/><circle cx="710.7" cy="654.7" r="2.1" fill="#96826e" fill-opacity="0.85"/><circle cx="746.2" cy="654.7" r="2.1" fill="#f28523" fill-opacity="0.85"/><circle cx="751.0" cy="654.7" r="2.1" fill="#96826e" fill-opacity="0.85"/><circle cx="756.2" cy="654.7" r="2.1" fill="#f28523" fill-opacity="0.85"/><circle cx="874.7" cy="654.7" r="2.1" fill="#cd8c55" fill-opacity="0.85"/><circle cx="889.4" cy="654.7" r="2.1" fill="#96826e" fill-opacity="0.85"/><circle cx="894.2" cy="654.7" r="2.1" fill="#3e78be" fill-opacity="0.85"/><circle cx="980.4" cy="552.2" r="2.1" fill="#7a8aa0" fill-opacity="0.85"/><circle cx="1073.6" cy="552.2" r="2.1" fill="#f08a2c" fill-opacity="0.85"/><circle cx="1098.1" cy="552.2" r="2.1" fill="#f08a2c" fill-opacity="0.85"/><circle cx="933.0" cy="552.2" r="2.1" fill="#f08a2c" fill-opacity="0.85"/><circle cx="932.5" cy="552.2" r="2.1" fill="#f08a2c" fill-opacity="0.85"/><circle cx="920.7" cy="552.2" r="2.1" fill="#7a8aa0" fill-opacity="0.85"/><circle cx="1007.8" cy="552.2" r="2.1" fill="#7a8aa0" fill-opacity="0.85"/><circle cx="925.5" cy="552.2" r="2.1" fill="#f08a2c" fill-opacity="0.85"/><circle cx="1060.2" cy="552.2" r="2.1" fill="#7a8aa0" fill-opacity="0.85"/><circle cx="1010.4" cy="552.2" r="2.1" fill="#f08a2c" fill-opacity="0.85"/><circle cx="1047.2" cy="552.2" r="2.1" fill="#f08a2c" fill-opacity="0.85"/><circle cx="1077.4" cy="552.2" r="2.1" fill="#f08a2c" fill-opacity="0.85"/><circle cx="1014.7" cy="552.2" r="2.1" fill="#a08060" fill-opacity="0.85"/><circle cx="924.0" cy="552.2" r="2.1" fill="#a08060" fill-opacity="0.85"/><circle cx="984.2" cy="552.2" r="2.1" fill="#7a8aa0" fill-opacity="0.85"/><circle cx="1094.5" cy="552.2" r="2.1" fill="#f08a2c" fill-opacity="0.85"/><circle cx="946.2" cy="552.2" r="2.1" fill="#7a8aa0" fill-opacity="0.85"/><circle cx="978.2" cy="552.2" r="2.1" fill="#a08060" fill-opacity="0.85"/><circle cx="938.6" cy="552.2" r="2.1" fill="#f08a2c" fill-opacity="0.85"/><circle cx="968.6" cy="552.2" r="2.1" fill="#f08a2c" fill-opacity="0.85"/><circle cx="945.6" cy="552.2" r="2.1" fill="#f08a2c" fill-opacity="0.85"/><circle cx="1051.9" cy="552.2" r="2.1" fill="#f08a2c" fill-opacity="0.85"/><circle cx="1006.1" cy="552.2" r="2.1" fill="#f08a2c" fill-opacity="0.85"/><circle cx="1096.7" cy="552.2" r="2.1" fill="#f08a2c" fill-opacity="0.85"/><circle cx="1016.6" cy="552.2" r="2.1" fill="#a08060" fill-opacity="0.85"/><circle cx="1046.1" cy="552.2" r="2.1" fill="#a08060" fill-opacity="0.85"/><circle cx="999.3" cy="552.2" r="2.1" fill="#7a8aa0" fill-opacity="0.85"/><circle cx="1021.3" cy="552.2" r="2.1" fill="#a08060" fill-opacity="0.85"/><circle cx="987.7" cy="552.2" r="2.1" fill="#7a8aa0" fill-opacity="0.85"/><circle cx="947.4" cy="552.2" r="2.1" fill="#7a8aa0" fill-opacity="0.85"/><circle cx="925.2" cy="552.2" r="2.1" fill="#f08a2c" fill-opacity="0.85"/><circle cx="938.0" cy="552.2" r="2.1" fill="#7a8aa0" fill-opacity="0.85"/><circle cx="1103.9" cy="552.2" r="2.1" fill="#f08a2c" fill-opacity="0.85"/><circle cx="1058.5" cy="552.2" r="2.1" fill="#f08a2c" fill-opacity="0.85"/><circle cx="1097.5" cy="552.2" r="2.1" fill="#f08a2c" fill-opacity="0.85"/><circle cx="1032.2" cy="552.2" r="2.1" fill="#7a8aa0" fill-opacity="0.85"/><circle cx="1067.7" cy="552.2" r="2.1" fill="#7a8aa0" fill-opacity="0.85"/><circle cx="982.0" cy="552.2" r="2.1" fill="#f08a2c" fill-opacity="0.85"/><circle cx="979.2" cy="552.2" r="2.1" fill="#a08060" fill-opacity="0.85"/><circle cx="997.1" cy="552.2" r="2.1" fill="#a08060" fill-opacity="0.85"/><circle cx="1008.8" cy="552.2" r="2.1" fill="#7a8aa0" fill-opacity="0.85"/><circle cx="930.3" cy="552.2" r="2.1" fill="#f08a2c" fill-opacity="0.85"/><circle cx="968.4" cy="552.2" r="2.1" fill="#7a8aa0" fill-opacity="0.85"/><circle cx="995.9" cy="552.2" r="2.1" fill="#f08a2c" fill-opacity="0.85"/><circle cx="960.9" cy="552.2" r="2.1" fill="#f08a2c" fill-opacity="0.85"/><circle cx="990.9" cy="552.2" r="2.1" fill="#f08a2c" fill-opacity="0.85"/><circle cx="1055.7" cy="552.2" r="2.1" fill="#f08a2c" fill-opacity="0.85"/><circle cx="1073.5" cy="552.2" r="2.1" fill="#f08a2c" fill-opacity="0.85"/><circle cx="953.0" cy="552.2" r="2.1" fill="#f08a2c" fill-opacity="0.85"/><circle cx="1099.1" cy="552.2" r="2.1" fill="#f08a2c" fill-opacity="0.85"/><circle cx="1006.5" cy="552.2" r="2.1" fill="#f08a2c" fill-opacity="0.85"/><circle cx="999.2" cy="552.2" r="2.1" fill="#f08a2c" fill-opacity="0.85"/><circle cx="957.6" cy="552.2" r="2.1" fill="#a08060" fill-opacity="0.85"/><circle cx="953.6" cy="552.2" r="2.1" fill="#a08060" fill-opacity="0.85"/><circle cx="961.7" cy="552.2" r="2.1" fill="#f08a2c" fill-opacity="0.85"/><circle cx="974.3" cy="552.2" r="2.1" fill="#f08a2c" fill-opacity="0.85"/><circle cx="1093.7" cy="552.2" r="2.1" fill="#f08a2c" fill-opacity="0.85"/><circle cx="1051.2" cy="552.2" r="2.1" fill="#f08a2c" fill-opacity="0.85"/><circle cx="1029.9" cy="552.2" r="2.1" fill="#f08a2c" fill-opacity="0.85"/><circle cx="950.7" cy="552.2" r="2.1" fill="#f08a2c" fill-opacity="0.85"/><circle cx="1047.6" cy="552.2" r="2.1" fill="#f08a2c" fill-opacity="0.85"/><circle cx="993.5" cy="552.2" r="2.1" fill="#f08a2c" fill-opacity="0.85"/><circle cx="1104.4" cy="552.2" r="2.1" fill="#f08a2c" fill-opacity="0.85"/><circle cx="1010.3" cy="552.2" r="2.1" fill="#f08a2c" fill-opacity="0.85"/><circle cx="1071.1" cy="552.2" r="2.1" fill="#a08060" fill-opacity="0.85"/><circle cx="1062.8" cy="552.2" r="2.1" fill="#7a8aa0" fill-opacity="0.85"/><circle cx="1087.8" cy="552.2" r="2.1" fill="#7a8aa0" fill-opacity="0.85"/><circle cx="1096.2" cy="552.2" r="2.1" fill="#f08a2c" fill-opacity="0.85"/><circle cx="965.8" cy="552.2" r="2.1" fill="#7a8aa0" fill-opacity="0.85"/><circle cx="1061.3" cy="552.2" r="2.1" fill="#7a8aa0" fill-opacity="0.85"/><circle cx="939.0" cy="552.2" r="2.1" fill="#f08a2c" fill-opacity="0.85"/><circle cx="1036.6" cy="552.2" r="2.1" fill="#f08a2c" fill-opacity="0.85"/><circle cx="1065.1" cy="552.2" r="2.1" fill="#f08a2c" fill-opacity="0.85"/><circle cx="986.5" cy="552.2" r="2.1" fill="#f08a2c" fill-opacity="0.85"/><circle cx="1083.7" cy="552.2" r="2.1" fill="#7a8aa0" fill-opacity="0.85"/><circle cx="984.9" cy="552.2" r="2.1" fill="#f08a2c" fill-opacity="0.85"/><circle cx="941.8" cy="552.2" r="2.1" fill="#f08a2c" fill-opacity="0.85"/><circle cx="945.2" cy="552.2" r="2.1" fill="#a08060" fill-opacity="0.85"/><circle cx="1057.8" cy="552.2" r="2.1" fill="#f08a2c" fill-opacity="0.85"/><circle cx="972.6" cy="552.2" r="2.1" fill="#f08a2c" fill-opacity="0.85"/><circle cx="956.3" cy="552.2" r="2.1" fill="#7a8aa0" fill-opacity="0.85"/><circle cx="1092.1" cy="552.2" r="2.1" fill="#f08a2c" fill-opacity="0.85"/><circle cx="1099.9" cy="552.2" r="2.1" fill="#a08060" fill-opacity="0.85"/><circle cx="940.0" cy="552.2" r="2.1" fill="#f08a2c" fill-opacity="0.85"/><circle cx="1029.7" cy="552.2" r="2.1" fill="#f08a2c" fill-opacity="0.85"/><circle cx="997.1" cy="552.2" r="2.1" fill="#f08a2c" fill-opacity="0.85"/><circle cx="1026.4" cy="552.2" r="2.1" fill="#f08a2c" fill-opacity="0.85"/><circle cx="974.7" cy="552.2" r="2.1" fill="#a08060" fill-opacity="0.85"/><circle cx="1050.0" cy="552.2" r="2.1" fill="#f08a2c" fill-opacity="0.85"/><circle cx="1088.3" cy="552.2" r="2.1" fill="#f08a2c" fill-opacity="0.85"/><circle cx="965.0" cy="552.2" r="2.1" fill="#a08060" fill-opacity="0.85"/><circle cx="953.8" cy="552.2" r="2.1" fill="#7a8aa0" fill-opacity="0.85"/><circle cx="953.9" cy="552.2" r="2.1" fill="#f08a2c" fill-opacity="0.85"/><circle cx="1088.3" cy="552.2" r="2.1" fill="#f08a2c" fill-opacity="0.85"/><circle cx="921.2" cy="552.2" r="2.1" fill="#f08a2c" fill-opacity="0.85"/><circle cx="1087.2" cy="552.2" r="2.1" fill="#a08060" fill-opacity="0.85"/><circle cx="990.1" cy="552.2" r="2.1" fill="#a08060" fill-opacity="0.85"/><circle cx="1019.5" cy="552.2" r="2.1" fill="#f08a2c" fill-opacity="0.85"/><circle cx="1044.5" cy="552.2" r="2.1" fill="#f08a2c" fill-opacity="0.85"/><circle cx="1102.5" cy="552.2" r="2.1" fill="#f08a2c" fill-opacity="0.85"/><circle cx="979.5" cy="552.2" r="2.1" fill="#f08a2c" fill-opacity="0.85"/><circle cx="986.7" cy="552.2" r="2.1" fill="#f08a2c" fill-opacity="0.85"/><circle cx="1008.8" cy="552.2" r="2.1" fill="#f08a2c" fill-opacity="0.85"/><circle cx="1039.3" cy="552.2" r="2.1" fill="#f08a2c" fill-opacity="0.85"/><circle cx="967.0" cy="552.2" r="2.1" fill="#a08060" fill-opacity="0.85"/><circle cx="1099.3" cy="552.2" r="2.1" fill="#7a8aa0" fill-opacity="0.85"/><circle cx="1104.8" cy="552.2" r="2.1" fill="#a08060" fill-opacity="0.85"/><circle cx="923.5" cy="552.2" r="2.1" fill="#7a8aa0" fill-opacity="0.85"/><circle cx="1067.5" cy="552.2" r="2.1" fill="#a08060" fill-opacity="0.85"/><circle cx="1045.6" cy="552.2" r="2.1" fill="#7a8aa0" fill-opacity="0.85"/><circle cx="1098.3" cy="552.2" r="2.1" fill="#f08a2c" fill-opacity="0.85"/><circle cx="1011.4" cy="552.2" r="2.1" fill="#f08a2c" fill-opacity="0.85"/><circle cx="1101.7" cy="552.2" r="2.1" fill="#7a8aa0" fill-opacity="0.85"/><circle cx="998.9" cy="552.2" r="2.1" fill="#7a8aa0" fill-opacity="0.85"/><circle cx="945.4" cy="552.2" r="2.1" fill="#f08a2c" fill-opacity="0.85"/><circle cx="1011.6" cy="552.2" r="2.1" fill="#f08a2c" fill-opacity="0.85"/><circle cx="1067.9" cy="552.2" r="2.1" fill="#f08a2c" fill-opacity="0.85"/><circle cx="958.4" cy="552.2" r="2.1" fill="#a08060" fill-opacity="0.85"/><circle cx="958.9" cy="552.2" r="2.1" fill="#a08060" fill-opacity="0.85"/><circle cx="1023.7" cy="552.2" r="2.1" fill="#f08a2c" fill-opacity="0.85"/><circle cx="986.5" cy="552.2" r="2.1" fill="#f08a2c" fill-opacity="0.85"/><circle cx="989.1" cy="552.2" r="2.1" fill="#a08060" fill-opacity="0.85"/><circle cx="979.7" cy="552.2" r="2.1" fill="#f08a2c" fill-opacity="0.85"/><circle cx="1056.6" cy="552.2" r="2.1" fill="#f08a2c" fill-opacity="0.85"/><circle cx="1027.2" cy="552.2" r="2.1" fill="#7a8aa0" fill-opacity="0.85"/><circle cx="1091.7" cy="552.2" r="2.1" fill="#f08a2c" fill-opacity="0.85"/><circle cx="932.4" cy="552.2" r="2.1" fill="#7a8aa0" fill-opacity="0.85"/><circle cx="1042.3" cy="552.2" r="2.1" fill="#a08060" fill-opacity="0.85"/><circle cx="1073.4" cy="552.2" r="2.1" fill="#f08a2c" fill-opacity="0.85"/><circle cx="955.3" cy="552.2" r="2.1" fill="#f08a2c" fill-opacity="0.85"/><circle cx="1094.8" cy="552.2" r="2.1" fill="#7a8aa0" fill-opacity="0.85"/><circle cx="965.6" cy="552.2" r="2.1" fill="#f08a2c" fill-opacity="0.85"/><circle cx="1033.0" cy="552.2" r="2.1" fill="#f08a2c" fill-opacity="0.85"/><circle cx="1067.2" cy="552.2" r="2.1" fill="#7a8aa0" fill-opacity="0.85"/><circle cx="1072.9" cy="552.2" r="2.1" fill="#f08a2c" fill-opacity="0.85"/><circle cx="1012.6" cy="552.2" r="2.1" fill="#f08a2c" fill-opacity="0.85"/><circle cx="973.3" cy="552.2" r="2.1" fill="#f08a2c" fill-opacity="0.85"/><circle cx="997.8" cy="552.2" r="2.1" fill="#f08a2c" fill-opacity="0.85"/><circle cx="983.7" cy="552.2" r="2.1" fill="#f08a2c" fill-opacity="0.85"/><circle cx="1080.0" cy="552.2" r="2.1" fill="#7a8aa0" fill-opacity="0.85"/><circle cx="1098.6" cy="552.2" r="2.1" fill="#f08a2c" fill-opacity="0.85"/><circle cx="1052.7" cy="552.2" r="2.1" fill="#f08a2c" fill-opacity="0.85"/><circle cx="935.1" cy="552.2" r="2.1" fill="#f08a2c" fill-opacity="0.85"/><circle cx="1013.6" cy="552.2" r="2.1" fill="#a08060" fill-opacity="0.85"/><circle cx="943.1" cy="552.2" r="2.1" fill="#f08a2c" fill-opacity="0.85"/><circle cx="959.7" cy="552.2" r="2.1" fill="#a08060" fill-opacity="0.85"/><circle cx="1091.8" cy="552.2" r="2.1" fill="#f08a2c" fill-opacity="0.85"/><circle cx="1078.5" cy="552.2" r="2.1" fill="#f08a2c" fill-opacity="0.85"/><circle cx="919.8" cy="552.2" r="2.1" fill="#7a8aa0" fill-opacity="0.85"/><circle cx="1044.1" cy="552.2" r="2.1" fill="#f08a2c" fill-opacity="0.85"/><circle cx="920.3" cy="552.2" r="2.1" fill="#f08a2c" fill-opacity="0.85"/><circle cx="1102.2" cy="552.2" r="2.1" fill="#7a8aa0" fill-opacity="0.85"/><circle cx="1030.4" cy="552.2" r="2.1" fill="#f08a2c" fill-opacity="0.85"/><circle cx="1104.4" cy="552.2" r="2.1" fill="#7a8aa0" fill-opacity="0.85"/><circle cx="992.6" cy="552.2" r="2.1" fill="#7a8aa0" fill-opacity="0.85"/><circle cx="1022.0" cy="552.2" r="2.1" fill="#f08a2c" fill-opacity="0.85"/><circle cx="1036.5" cy="552.2" r="2.1" fill="#f08a2c" fill-opacity="0.85"/><circle cx="990.9" cy="552.2" r="2.1" fill="#7a8aa0" fill-opacity="0.85"/><circle cx="941.1" cy="552.2" r="2.1" fill="#7a8aa0" fill-opacity="0.85"/><circle cx="1102.1" cy="552.2" r="2.1" fill="#f08a2c" fill-opacity="0.85"/><circle cx="982.6" cy="552.2" r="2.1" fill="#f08a2c" fill-opacity="0.85"/><circle cx="933.2" cy="552.2" r="2.1" fill="#f08a2c" fill-opacity="0.85"/><circle cx="1057.1" cy="552.2" r="2.1" fill="#f08a2c" fill-opacity="0.85"/><circle cx="1081.6" cy="552.2" r="2.1" fill="#f08a2c" fill-opacity="0.85"/><circle cx="1059.2" cy="552.2" r="2.1" fill="#7a8aa0" fill-opacity="0.85"/><circle cx="1020.1" cy="552.2" r="2.1" fill="#f08a2c" fill-opacity="0.85"/><circle cx="1099.7" cy="552.2" r="2.1" fill="#f08a2c" fill-opacity="0.85"/><circle cx="1079.4" cy="552.2" r="2.1" fill="#f08a2c" fill-opacity="0.85"/><circle cx="1022.2" cy="552.2" r="2.1" fill="#f08a2c" fill-opacity="0.85"/><circle cx="1057.7" cy="552.2" r="2.1" fill="#f08a2c" fill-opacity="0.85"/><circle cx="1054.5" cy="552.2" r="2.1" fill="#7a8aa0" fill-opacity="0.85"/><circle cx="964.1" cy="552.2" r="2.1" fill="#f08a2c" fill-opacity="0.85"/><circle cx="1058.0" cy="552.2" r="2.1" fill="#a08060" fill-opacity="0.85"/><circle cx="937.0" cy="552.2" r="2.1" fill="#f08a2c" fill-opacity="0.85"/><circle cx="1036.8" cy="552.2" r="2.1" fill="#f08a2c" fill-opacity="0.85"/><circle cx="998.6" cy="552.2" r="2.1" fill="#f08a2c" fill-opacity="0.85"/><circle cx="979.0" cy="552.2" r="2.1" fill="#f08a2c" fill-opacity="0.85"/><circle cx="1101.9" cy="552.2" r="2.1" fill="#7a8aa0" fill-opacity="0.85"/><circle cx="921.8" cy="552.2" r="2.1" fill="#f08a2c" fill-opacity="0.85"/><circle cx="1088.6" cy="552.2" r="2.1" fill="#7a8aa0" fill-opacity="0.85"/><circle cx="1048.5" cy="552.2" r="2.1" fill="#7a8aa0" fill-opacity="0.85"/><circle cx="950.6" cy="552.2" r="2.1" fill="#7a8aa0" fill-opacity="0.85"/><circle cx="1075.2" cy="552.2" r="2.1" fill="#7a8aa0" fill-opacity="0.85"/><circle cx="924.1" cy="552.2" r="2.1" fill="#f08a2c" fill-opacity="0.85"/><circle cx="1067.7" cy="552.2" r="2.1" fill="#7a8aa0" fill-opacity="0.85"/><circle cx="964.7" cy="552.2" r="2.1" fill="#f08a2c" fill-opacity="0.85"/><circle cx="1004.4" cy="552.2" r="2.1" fill="#7a8aa0" fill-opacity="0.85"/><circle cx="974.8" cy="552.2" r="2.1" fill="#f08a2c" fill-opacity="0.85"/><circle cx="1084.5" cy="552.2" r="2.1" fill="#f08a2c" fill-opacity="0.85"/><circle cx="968.6" cy="552.2" r="2.1" fill="#f08a2c" fill-opacity="0.85"/><circle cx="993.3" cy="552.2" r="2.1" fill="#7a8aa0" fill-opacity="0.85"/><circle cx="1060.0" cy="552.2" r="2.1" fill="#f08a2c" fill-opacity="0.85"/><circle cx="926.3" cy="552.2" r="2.1" fill="#a08060" fill-opacity="0.85"/><circle cx="968.1" cy="552.2" r="2.1" fill="#f08a2c" fill-opacity="0.85"/><circle cx="961.8" cy="552.2" r="2.1" fill="#a08060" fill-opacity="0.85"/><circle cx="992.6" cy="552.2" r="2.1" fill="#7a8aa0" fill-opacity="0.85"/><circle cx="1086.4" cy="552.2" r="2.1" fill="#a08060" fill-opacity="0.85"/><circle cx="939.3" cy="552.2" r="2.1" fill="#7a8aa0" fill-opacity="0.85"/><circle cx="1019.8" cy="552.2" r="2.1" fill="#f08a2c" fill-opacity="0.85"/><circle cx="987.5" cy="552.2" r="2.1" fill="#a08060" fill-opacity="0.85"/><circle cx="1002.8" cy="552.2" r="2.1" fill="#f08a2c" fill-opacity="0.85"/><circle cx="996.5" cy="552.2" r="2.1" fill="#f08a2c" fill-opacity="0.85"/><circle cx="1062.3" cy="552.2" r="2.1" fill="#f08a2c" fill-opacity="0.85"/><circle cx="1042.1" cy="552.2" r="2.1" fill="#a08060" fill-opacity="0.85"/><circle cx="997.1" cy="552.2" r="2.1" fill="#f08a2c" fill-opacity="0.85"/><circle cx="1090.6" cy="552.2" r="2.1" fill="#f08a2c" fill-opacity="0.85"/><circle cx="988.4" cy="552.2" r="2.1" fill="#f08a2c" fill-opacity="0.85"/><circle cx="1040.3" cy="552.2" r="2.1" fill="#f08a2c" fill-opacity="0.85"/><circle cx="1073.7" cy="552.2" r="2.1" fill="#f08a2c" fill-opacity="0.85"/><circle cx="1092.2" cy="552.2" r="2.1" fill="#7a8aa0" fill-opacity="0.85"/><circle cx="920.7" cy="552.2" r="2.1" fill="#7a8aa0" fill-opacity="0.85"/><circle cx="979.6" cy="552.2" r="2.1" fill="#a08060" fill-opacity="0.85"/><circle cx="970.1" cy="552.2" r="2.1" fill="#f08a2c" fill-opacity="0.85"/><circle cx="1048.2" cy="552.2" r="2.1" fill="#f08a2c" fill-opacity="0.85"/><circle cx="985.7" cy="552.2" r="2.1" fill="#f08a2c" fill-opacity="0.85"/><circle cx="1011.7" cy="552.2" r="2.1" fill="#f08a2c" fill-opacity="0.85"/><circle cx="921.6" cy="552.2" r="2.1" fill="#f08a2c" fill-opacity="0.85"/><circle cx="963.8" cy="552.2" r="2.1" fill="#f08a2c" fill-opacity="0.85"/><circle cx="962.0" cy="552.2" r="2.1" fill="#f08a2c" fill-opacity="0.85"/><circle cx="1055.7" cy="552.2" r="2.1" fill="#a08060" fill-opacity="0.85"/><circle cx="993.1" cy="552.2" r="2.1" fill="#7a8aa0" fill-opacity="0.85"/><circle cx="1039.6" cy="552.2" r="2.1" fill="#7a8aa0" fill-opacity="0.85"/><circle cx="966.0" cy="552.2" r="2.1" fill="#a08060" fill-opacity="0.85"/><circle cx="1072.4" cy="552.2" r="2.1" fill="#f08a2c" fill-opacity="0.85"/><circle cx="1050.2" cy="552.2" r="2.1" fill="#7a8aa0" fill-opacity="0.85"/><circle cx="995.8" cy="552.2" r="2.1" fill="#f08a2c" fill-opacity="0.85"/><circle cx="925.6" cy="552.2" r="2.1" fill="#7a8aa0" fill-opacity="0.85"/><circle cx="962.9" cy="552.2" r="2.1" fill="#f08a2c" fill-opacity="0.85"/><circle cx="1026.4" cy="552.2" r="2.1" fill="#a08060" fill-opacity="0.85"/><circle cx="978.8" cy="552.2" r="2.1" fill="#7a8aa0" fill-opacity="0.85"/><circle cx="1091.6" cy="552.2" r="2.1" fill="#7a8aa0" fill-opacity="0.85"/><circle cx="933.1" cy="552.2" r="2.1" fill="#f08a2c" fill-opacity="0.85"/><circle cx="1020.4" cy="552.2" r="2.1" fill="#7a8aa0" fill-opacity="0.85"/><circle cx="976.4" cy="552.2" r="2.1" fill="#7a8aa0" fill-opacity="0.85"/><circle cx="989.1" cy="552.2" r="2.1" fill="#f08a2c" fill-opacity="0.85"/><circle cx="941.7" cy="552.2" r="2.1" fill="#f08a2c" fill-opacity="0.85"/><circle cx="1073.8" cy="552.2" r="2.1" fill="#f08a2c" fill-opacity="0.85"/><circle cx="996.2" cy="552.2" r="2.1" fill="#f08a2c" fill-opacity="0.85"/><circle cx="939.0" cy="552.2" r="2.1" fill="#f08a2c" fill-opacity="0.85"/><circle cx="1032.3" cy="552.2" r="2.1" fill="#f08a2c" fill-opacity="0.85"/><circle cx="1057.3" cy="552.2" r="2.1" fill="#f08a2c" fill-opacity="0.85"/><circle cx="983.3" cy="552.2" r="2.1" fill="#f08a2c" fill-opacity="0.85"/><circle cx="1093.6" cy="552.2" r="2.1" fill="#f08a2c" fill-opacity="0.85"/><circle cx="967.7" cy="552.2" r="2.1" fill="#a08060" fill-opacity="0.85"/><circle cx="945.5" cy="552.2" r="2.1" fill="#f08a2c" fill-opacity="0.85"/><circle cx="924.4" cy="552.2" r="2.1" fill="#7a8aa0" fill-opacity="0.85"/><circle cx="995.3" cy="552.2" r="2.1" fill="#a08060" fill-opacity="0.85"/><circle cx="1010.4" cy="552.2" r="2.1" fill="#f08a2c" fill-opacity="0.85"/><circle cx="1042.4" cy="552.2" r="2.1" fill="#f08a2c" fill-opacity="0.85"/><circle cx="1099.2" cy="552.2" r="2.1" fill="#7a8aa0" fill-opacity="0.85"/><circle cx="1002.3" cy="552.2" r="2.1" fill="#f08a2c" fill-opacity="0.85"/><circle cx="1036.0" cy="552.2" r="2.1" fill="#7a8aa0" fill-opacity="0.85"/><circle cx="931.8" cy="552.2" r="2.1" fill="#7a8aa0" fill-opacity="0.85"/><circle cx="1096.5" cy="552.2" r="2.1" fill="#a08060" fill-opacity="0.85"/><circle cx="979.3" cy="552.2" r="2.1" fill="#7a8aa0" fill-opacity="0.85"/><circle cx="934.2" cy="552.2" r="2.1" fill="#7a8aa0" fill-opacity="0.85"/><circle cx="1023.8" cy="552.2" r="2.1" fill="#a08060" fill-opacity="0.85"/><circle cx="1039.7" cy="552.2" r="2.1" fill="#f08a2c" fill-opacity="0.85"/><circle cx="933.3" cy="552.2" r="2.1" fill="#f08a2c" fill-opacity="0.85"/><circle cx="972.7" cy="552.2" r="2.1" fill="#7a8aa0" fill-opacity="0.85"/><circle cx="976.3" cy="552.2" r="2.1" fill="#f08a2c" fill-opacity="0.85"/><circle cx="921.1" cy="552.2" r="2.1" fill="#f08a2c" fill-opacity="0.85"/><circle cx="1083.8" cy="552.2" r="2.1" fill="#f08a2c" fill-opacity="0.85"/><circle cx="1030.5" cy="552.2" r="2.1" fill="#7a8aa0" fill-opacity="0.85"/><circle cx="992.5" cy="552.2" r="2.1" fill="#f08a2c" fill-opacity="0.85"/><circle cx="1024.6" cy="552.2" r="2.1" fill="#7a8aa0" fill-opacity="0.85"/><circle cx="1063.9" cy="552.2" r="2.1" fill="#f08a2c" fill-opacity="0.85"/><circle cx="930.9" cy="552.2" r="2.1" fill="#f08a2c" fill-opacity="0.85"/><circle cx="1042.7" cy="552.2" r="2.1" fill="#f08a2c" fill-opacity="0.85"/><circle cx="1057.2" cy="552.2" r="2.1" fill="#7a8aa0" fill-opacity="0.85"/><circle cx="1101.3" cy="552.2" r="2.1" fill="#7a8aa0" fill-opacity="0.85"/><circle cx="981.4" cy="552.2" r="2.1" fill="#a08060" fill-opacity="0.85"/><circle cx="1006.6" cy="552.2" r="2.1" fill="#f08a2c" fill-opacity="0.85"/><circle cx="1011.0" cy="552.2" r="2.1" fill="#f08a2c" fill-opacity="0.85"/><circle cx="1024.8" cy="552.2" r="2.1" fill="#f08a2c" fill-opacity="0.85"/><circle cx="1080.0" cy="552.2" r="2.1" fill="#f08a2c" fill-opacity="0.85"/><circle cx="975.8" cy="552.2" r="2.1" fill="#7a8aa0" fill-opacity="0.85"/><circle cx="1063.8" cy="552.2" r="2.1" fill="#f08a2c" fill-opacity="0.85"/><circle cx="933.6" cy="552.2" r="2.1" fill="#f08a2c" fill-opacity="0.85"/><circle cx="974.6" cy="552.2" r="2.1" fill="#7a8aa0" fill-opacity="0.85"/><circle cx="974.4" cy="552.2" r="2.1" fill="#f08a2c" fill-opacity="0.85"/><circle cx="1006.3" cy="552.2" r="2.1" fill="#f08a2c" fill-opacity="0.85"/><circle cx="1050.7" cy="552.2" r="2.1" fill="#f08a2c" fill-opacity="0.85"/><circle cx="1010.0" cy="552.2" r="2.1" fill="#7a8aa0" fill-opacity="0.85"/><circle cx="919.7" cy="552.2" r="2.1" fill="#f08a2c" fill-opacity="0.85"/><circle cx="975.3" cy="552.2" r="2.1" fill="#7a8aa0" fill-opacity="0.85"/><circle cx="984.5" cy="552.2" r="2.1" fill="#f08a2c" fill-opacity="0.85"/><circle cx="968.2" cy="552.2" r="2.1" fill="#f08a2c" fill-opacity="0.85"/><circle cx="994.1" cy="552.2" r="2.1" fill="#f08a2c" fill-opacity="0.85"/><circle cx="924.1" cy="552.2" r="2.1" fill="#f08a2c" fill-opacity="0.85"/><circle cx="1030.1" cy="552.2" r="2.1" fill="#f08a2c" fill-opacity="0.85"/><circle cx="1018.3" cy="552.2" r="2.1" fill="#f08a2c" fill-opacity="0.85"/><circle cx="1011.3" cy="552.2" r="2.1" fill="#a08060" fill-opacity="0.85"/><circle cx="963.9" cy="552.2" r="2.1" fill="#f08a2c" fill-opacity="0.85"/><circle cx="1099.3" cy="552.2" r="2.1" fill="#f08a2c" fill-opacity="0.85"/><circle cx="1050.6" cy="552.2" r="2.1" fill="#f08a2c" fill-opacity="0.85"/><circle cx="1097.5" cy="552.2" r="2.1" fill="#f08a2c" fill-opacity="0.85"/><circle cx="1099.1" cy="552.2" r="2.1" fill="#a08060" fill-opacity="0.85"/><circle cx="1037.2" cy="552.2" r="2.1" fill="#f08a2c" fill-opacity="0.85"/><circle cx="1018.7" cy="552.2" r="2.1" fill="#f08a2c" fill-opacity="0.85"/><circle cx="1014.6" cy="552.2" r="2.1" fill="#f08a2c" fill-opacity="0.85"/><circle cx="1100.0" cy="552.2" r="2.1" fill="#f08a2c" fill-opacity="0.85"/><circle cx="1084.0" cy="552.2" r="2.1" fill="#a08060" fill-opacity="0.85"/><circle cx="1070.8" cy="552.2" r="2.1" fill="#7a8aa0" fill-opacity="0.85"/><circle cx="1008.2" cy="552.2" r="2.1" fill="#f08a2c" fill-opacity="0.85"/><circle cx="1029.7" cy="552.2" r="2.1" fill="#a08060" fill-opacity="0.85"/><circle cx="1048.5" cy="552.2" r="2.1" fill="#f08a2c" fill-opacity="0.85"/><circle cx="1011.6" cy="552.2" r="2.1" fill="#a08060" fill-opacity="0.85"/><circle cx="1060.2" cy="552.2" r="2.1" fill="#f08a2c" fill-opacity="0.85"/><circle cx="1031.1" cy="552.2" r="2.1" fill="#f08a2c" fill-opacity="0.85"/><circle cx="935.0" cy="552.2" r="2.1" fill="#7a8aa0" fill-opacity="0.85"/><circle cx="992.2" cy="552.2" r="2.1" fill="#f08a2c" fill-opacity="0.85"/><circle cx="977.4" cy="552.2" r="2.1" fill="#f08a2c" fill-opacity="0.85"/><circle cx="1031.7" cy="552.2" r="2.1" fill="#a08060" fill-opacity="0.85"/><circle cx="1015.5" cy="552.2" r="2.1" fill="#f08a2c" fill-opacity="0.85"/><circle cx="1035.0" cy="552.2" r="2.1" fill="#f08a2c" fill-opacity="0.85"/><circle cx="1009.1" cy="552.2" r="2.1" fill="#a08060" fill-opacity="0.85"/><circle cx="1003.5" cy="552.2" r="2.1" fill="#a08060" fill-opacity="0.85"/><circle cx="1012.2" cy="552.2" r="2.1" fill="#a08060" fill-opacity="0.85"/><circle cx="931.2" cy="552.2" r="2.1" fill="#f08a2c" fill-opacity="0.85"/><circle cx="926.8" cy="552.2" r="2.1" fill="#f08a2c" fill-opacity="0.85"/><circle cx="1015.4" cy="552.2" r="2.1" fill="#f08a2c" fill-opacity="0.85"/><circle cx="939.9" cy="552.2" r="2.1" fill="#f08a2c" fill-opacity="0.85"/><circle cx="964.9" cy="552.2" r="2.1" fill="#f08a2c" fill-opacity="0.85"/><circle cx="996.5" cy="552.2" r="2.1" fill="#f08a2c" fill-opacity="0.85"/><circle cx="999.2" cy="552.2" r="2.1" fill="#f08a2c" fill-opacity="0.85"/><circle cx="942.0" cy="552.2" r="2.1" fill="#f08a2c" fill-opacity="0.85"/><circle cx="978.1" cy="552.2" r="2.1" fill="#f08a2c" fill-opacity="0.85"/><circle cx="1086.1" cy="552.2" r="2.1" fill="#f08a2c" fill-opacity="0.85"/><circle cx="1000.6" cy="552.2" r="2.1" fill="#a08060" fill-opacity="0.85"/><circle cx="1007.5" cy="552.2" r="2.1" fill="#7a8aa0" fill-opacity="0.85"/><circle cx="1050.2" cy="552.2" r="2.1" fill="#f08a2c" fill-opacity="0.85"/><circle cx="1080.8" cy="552.2" r="2.1" fill="#f08a2c" fill-opacity="0.85"/><circle cx="923.0" cy="552.2" r="2.1" fill="#f08a2c" fill-opacity="0.85"/><circle cx="1008.5" cy="552.2" r="2.1" fill="#f08a2c" fill-opacity="0.85"/><circle cx="953.0" cy="552.2" r="2.1" fill="#f08a2c" fill-opacity="0.85"/><circle cx="1009.9" cy="552.2" r="2.1" fill="#f08a2c" fill-opacity="0.85"/><circle cx="1028.2" cy="552.2" r="2.1" fill="#f08a2c" fill-opacity="0.85"/><circle cx="1030.0" cy="552.2" r="2.1" fill="#7a8aa0" fill-opacity="0.85"/><circle cx="1032.7" cy="552.2" r="2.1" fill="#f08a2c" fill-opacity="0.85"/><circle cx="1095.4" cy="552.2" r="2.1" fill="#f08a2c" fill-opacity="0.85"/><circle cx="1002.2" cy="552.2" r="2.1" fill="#f08a2c" fill-opacity="0.85"/><circle cx="1064.6" cy="552.2" r="2.1" fill="#7a8aa0" fill-opacity="0.85"/><circle cx="1013.2" cy="552.2" r="2.1" fill="#f08a2c" fill-opacity="0.85"/><circle cx="1004.5" cy="552.2" r="2.1" fill="#a08060" fill-opacity="0.85"/><circle cx="952.6" cy="552.2" r="2.1" fill="#f08a2c" fill-opacity="0.85"/><circle cx="975.8" cy="552.2" r="2.1" fill="#7a8aa0" fill-opacity="0.85"/><circle cx="922.9" cy="552.2" r="2.1" fill="#f08a2c" fill-opacity="0.85"/><circle cx="921.8" cy="552.2" r="2.1" fill="#f08a2c" fill-opacity="0.85"/><circle cx="1036.1" cy="552.2" r="2.1" fill="#f08a2c" fill-opacity="0.85"/><circle cx="1077.1" cy="552.2" r="2.1" fill="#f08a2c" fill-opacity="0.85"/><circle cx="1008.8" cy="552.2" r="2.1" fill="#f08a2c" fill-opacity="0.85"/><circle cx="977.5" cy="552.2" r="2.1" fill="#a08060" fill-opacity="0.85"/><circle cx="1087.2" cy="552.2" r="2.1" fill="#a08060" fill-opacity="0.85"/><circle cx="1088.9" cy="552.2" r="2.1" fill="#f08a2c" fill-opacity="0.85"/><circle cx="921.9" cy="552.2" r="2.1" fill="#f08a2c" fill-opacity="0.85"/><circle cx="1050.9" cy="552.2" r="2.1" fill="#f08a2c" fill-opacity="0.85"/><circle cx="934.5" cy="552.2" r="2.1" fill="#f08a2c" fill-opacity="0.85"/><circle cx="1097.8" cy="552.2" r="2.1" fill="#f08a2c" fill-opacity="0.85"/><circle cx="1098.7" cy="552.2" r="2.1" fill="#7a8aa0" fill-opacity="0.85"/><circle cx="959.3" cy="552.2" r="2.1" fill="#f08a2c" fill-opacity="0.85"/><circle cx="942.1" cy="552.2" r="2.1" fill="#7a8aa0" fill-opacity="0.85"/><circle cx="1094.5" cy="552.2" r="2.1" fill="#f08a2c" fill-opacity="0.85"/><circle cx="1052.1" cy="552.2" r="2.1" fill="#f08a2c" fill-opacity="0.85"/><circle cx="1009.9" cy="552.2" r="2.1" fill="#a08060" fill-opacity="0.85"/><circle cx="1002.2" cy="552.2" r="2.1" fill="#7a8aa0" fill-opacity="0.85"/><circle cx="1102.8" cy="552.2" r="2.1" fill="#f08a2c" fill-opacity="0.85"/><circle cx="991.2" cy="552.2" r="2.1" fill="#f08a2c" fill-opacity="0.85"/><circle cx="951.7" cy="552.2" r="2.1" fill="#7a8aa0" fill-opacity="0.85"/><circle cx="1034.5" cy="552.2" r="2.1" fill="#a08060" fill-opacity="0.85"/><circle cx="972.3" cy="552.2" r="2.1" fill="#f08a2c" fill-opacity="0.85"/><circle cx="1104.0" cy="552.2" r="2.1" fill="#f08a2c" fill-opacity="0.85"/><circle cx="1064.5" cy="552.2" r="2.1" fill="#f08a2c" fill-opacity="0.85"/><circle cx="1076.4" cy="552.2" r="2.1" fill="#a08060" fill-opacity="0.85"/><circle cx="1090.1" cy="552.2" r="2.1" fill="#f08a2c" fill-opacity="0.85"/><circle cx="972.7" cy="552.2" r="2.1" fill="#f08a2c" fill-opacity="0.85"/><circle cx="1000.3" cy="552.2" r="2.1" fill="#a08060" fill-opacity="0.85"/><circle cx="988.3" cy="552.2" r="2.1" fill="#f08a2c" fill-opacity="0.85"/><circle cx="942.2" cy="552.2" r="2.1" fill="#f08a2c" fill-opacity="0.85"/><circle cx="1031.3" cy="552.2" r="2.1" fill="#f08a2c" fill-opacity="0.85"/><circle cx="919.2" cy="654.7" r="2.1" fill="#3e78be" fill-opacity="0.85"/><circle cx="921.3" cy="654.7" r="2.1" fill="#3e78be" fill-opacity="0.85"/><circle cx="923.5" cy="654.7" r="2.1" fill="#cd8c55" fill-opacity="0.85"/><rect x="494.2" y="297" width="199.2" height="114.3" fill="none" stroke="#7000ff" stroke-width="2.2" stroke-dasharray="8,4.8"/><rect x="494.2" y="421" width="199.2" height="114.3" fill="none" stroke="#7000ff" stroke-width="2.2" stroke-dasharray="8,4.8"/><rect x="703.2" y="421" width="199.4" height="114.3" fill="none" stroke="#7000ff" stroke-width="2.2" stroke-dasharray="8,4.8"/><rect x="494.2" y="545.5" width="199.2" height="114.3" fill="none" stroke="#7000ff" stroke-width="2.2" stroke-dasharray="8,4.8"/><rect x="703.2" y="545.5" width="199.4" height="114.3" fill="none" stroke="#7000ff" stroke-width="2.2" stroke-dasharray="8,4.8"/><rect x="912.3" y="545.5" width="199.3" height="114.3" fill="none" stroke="#7000ff" stroke-width="2.2" stroke-dasharray="8,4.8"/><line x1="488" y1="296.5" x2="488" y2="412.8" stroke="#7a8ea8" stroke-width="2"/><line x1="484" y1="405.5" x2="488" y2="405.5" stroke="#7a8ea8" stroke-width="1.5"/><line x1="484" y1="383.6" x2="488" y2="383.6" stroke="#7a8ea8" stroke-width="1.5"/><line x1="484" y1="361.8" x2="488" y2="361.8" stroke="#7a8ea8" stroke-width="1.5"/><line x1="484" y1="339.9" x2="488" y2="339.9" stroke="#7a8ea8" stroke-width="1.5"/><line x1="484" y1="318.1" x2="488" y2="318.1" stroke="#7a8ea8" stroke-width="1.5"/><line x1="484" y1="303.2" x2="488" y2="303.2" stroke="#7a8ea8" stroke-width="1.5"/><line x1="488" y1="420.5" x2="488" y2="536.8" stroke="#e0609a" stroke-width="2"/><line x1="484" y1="530.4" x2="488" y2="530.4" stroke="#e0609a" stroke-width="1.5"/><line x1="484" y1="510.8" x2="488" y2="510.8" stroke="#e0609a" stroke-width="1.5"/><line x1="484" y1="491.1" x2="488" y2="491.1" stroke="#e0609a" stroke-width="1.5"/><line x1="484" y1="471.5" x2="488" y2="471.5" stroke="#e0609a" stroke-width="1.5"/><line x1="484" y1="451.9" x2="488" y2="451.9" stroke="#e0609a" stroke-width="1.5"/><line x1="484" y1="428.3" x2="488" y2="428.3" stroke="#e0609a" stroke-width="1.5"/><line x1="488" y1="545" x2="488" y2="662" stroke="#75b35a" stroke-width="2"/><line x1="484" y1="552.2" x2="488" y2="552.2" stroke="#75b35a" stroke-width="1.5"/><line x1="484" y1="654.7" x2="488" y2="654.7" stroke="#75b35a" stroke-width="1.5"/><line x1="493" y1="666" x2="694" y2="666" stroke="#ff8c64" stroke-width="2"/><line x1="500.5" y1="666" x2="500.5" y2="670" stroke="#ff8c64" stroke-width="1.5"/><line x1="544.9" y1="666" x2="544.9" y2="670" stroke="#ff8c64" stroke-width="1.5"/><line x1="589.2" y1="666" x2="589.2" y2="670" stroke="#ff8c64" stroke-width="1.5"/><line x1="633.5" y1="666" x2="633.5" y2="670" stroke="#ff8c64" stroke-width="1.5"/><line x1="677.9" y1="666" x2="677.9" y2="670" stroke="#ff8c64" stroke-width="1.5"/><line x1="687.2" y1="666" x2="687.2" y2="670" stroke="#ff8c64" stroke-width="1.5"/><line x1="702" y1="666" x2="904" y2="666" stroke="#7a8ea8" stroke-width="2"/><line x1="709.1" y1="666" x2="709.1" y2="670" stroke="#7a8ea8" stroke-width="1.5"/><line x1="749.0" y1="666" x2="749.0" y2="670" stroke="#7a8ea8" stroke-width="1.5"/><line x1="788.9" y1="666" x2="788.9" y2="670" stroke="#7a8ea8" stroke-width="1.5"/><line x1="828.8" y1="666" x2="828.8" y2="670" stroke="#7a8ea8" stroke-width="1.5"/><line x1="868.7" y1="666" x2="868.7" y2="670" stroke="#7a8ea8" stroke-width="1.5"/><line x1="895.8" y1="666" x2="895.8" y2="670" stroke="#7a8ea8" stroke-width="1.5"/><line x1="911" y1="666" x2="1113" y2="666" stroke="#e0609a" stroke-width="2"/><line x1="919.2" y1="666" x2="919.2" y2="670" stroke="#e0609a" stroke-width="1.5"/><line x1="954.9" y1="666" x2="954.9" y2="670" stroke="#e0609a" stroke-width="1.5"/><line x1="990.6" y1="666" x2="990.6" y2="670" stroke="#e0609a" stroke-width="1.5"/><line x1="1026.3" y1="666" x2="1026.3" y2="670" stroke="#e0609a" stroke-width="1.5"/><line x1="1062.0" y1="666" x2="1062.0" y2="670" stroke="#e0609a" stroke-width="1.5"/><line x1="1104.8" y1="666" x2="1104.8" y2="670" stroke="#e0609a" stroke-width="1.5"/></svg>
<div class="t" style="left:474.6px;top:400.0px;font-size:11.5px;color:#333;font-weight:normal;letter-spacing:0.00px;">0</div>
<div class="t" style="left:468.2px;top:378.1px;font-size:11.5px;color:#333;font-weight:normal;letter-spacing:0.00px;">10</div>
<div class="t" style="left:468.2px;top:356.3px;font-size:11.5px;color:#333;font-weight:normal;letter-spacing:0.00px;">20</div>
<div class="t" style="left:468.2px;top:334.4px;font-size:11.5px;color:#333;font-weight:normal;letter-spacing:0.00px;">30</div>
<div class="t" style="left:468.2px;top:312.6px;font-size:11.5px;color:#333;font-weight:normal;letter-spacing:0.00px;">40</div>
<div class="t" style="left:458.6px;top:297.7px;font-size:11.5px;color:#333;font-weight:normal;letter-spacing:0.00px;">46.8</div>
<div class="t" style="left:474.6px;top:524.9px;font-size:11.5px;color:#333;font-weight:normal;letter-spacing:0.00px;">0</div>
<div class="t" style="left:468.2px;top:505.2px;font-size:11.5px;color:#333;font-weight:normal;letter-spacing:0.00px;">10</div>
<div class="t" style="left:468.2px;top:485.6px;font-size:11.5px;color:#333;font-weight:normal;letter-spacing:0.00px;">20</div>
<div class="t" style="left:468.2px;top:466.0px;font-size:11.5px;color:#333;font-weight:normal;letter-spacing:0.00px;">30</div>
<div class="t" style="left:468.2px;top:446.3px;font-size:11.5px;color:#333;font-weight:normal;letter-spacing:0.00px;">40</div>
<div class="t" style="left:468.2px;top:422.8px;font-size:11.5px;color:#333;font-weight:normal;letter-spacing:0.00px;">52</div>
<div class="t" style="left:448.0px;top:546.7px;font-size:11.5px;color:#333;font-weight:normal;letter-spacing:0.00px;transform:scaleX(0.7945);transform-origin:0 0;">ACTIVE</div>
<div class="t" style="left:436.0px;top:649.2px;font-size:11.5px;color:#333;font-weight:normal;letter-spacing:0.00px;transform:scaleX(0.8485);transform-origin:0 0;">INACTIVE</div>
<div class="t" style="left:497.3px;top:670.8px;font-size:11.5px;color:#333;font-weight:normal;letter-spacing:0.00px;">0</div>
<div class="t" style="left:538.5px;top:670.8px;font-size:11.5px;color:#333;font-weight:normal;letter-spacing:0.00px;">10</div>
<div class="t" style="left:582.8px;top:670.8px;font-size:11.5px;color:#333;font-weight:normal;letter-spacing:0.00px;">20</div>
<div class="t" style="left:627.2px;top:670.8px;font-size:11.5px;color:#333;font-weight:normal;letter-spacing:0.00px;">30</div>
<div class="t" style="left:676.0px;top:670.8px;font-size:11.5px;color:#333;font-weight:normal;letter-spacing:0.00px;">42.1</div>
<div class="t" style="left:705.9px;top:670.8px;font-size:11.5px;color:#333;font-weight:normal;letter-spacing:0.00px;">0</div>
<div class="t" style="left:742.6px;top:670.8px;font-size:11.5px;color:#333;font-weight:normal;letter-spacing:0.00px;">10</div>
<div class="t" style="left:782.5px;top:670.8px;font-size:11.5px;color:#333;font-weight:normal;letter-spacing:0.00px;">20</div>
<div class="t" style="left:822.4px;top:670.8px;font-size:11.5px;color:#333;font-weight:normal;letter-spacing:0.00px;">30</div>
<div class="t" style="left:862.3px;top:670.8px;font-size:11.5px;color:#333;font-weight:normal;letter-spacing:0.00px;">40</div>
<div class="t" style="left:884.6px;top:670.8px;font-size:11.5px;color:#333;font-weight:normal;letter-spacing:0.00px;">46.8</div>
<div class="t" style="left:916.0px;top:670.8px;font-size:11.5px;color:#333;font-weight:normal;letter-spacing:0.00px;">0</div>
<div class="t" style="left:948.5px;top:670.8px;font-size:11.5px;color:#333;font-weight:normal;letter-spacing:0.00px;">10</div>
<div class="t" style="left:984.2px;top:670.8px;font-size:11.5px;color:#333;font-weight:normal;letter-spacing:0.00px;">20</div>
<div class="t" style="left:1019.9px;top:670.8px;font-size:11.5px;color:#333;font-weight:normal;letter-spacing:0.00px;">30</div>
<div class="t" style="left:1055.6px;top:670.8px;font-size:11.5px;color:#333;font-weight:normal;letter-spacing:0.00px;">40</div>
<div class="t" style="left:1098.4px;top:670.8px;font-size:11.5px;color:#333;font-weight:normal;letter-spacing:0.00px;">52</div>
<svg style="left:0px;top:0px;" width="1380" height="900" viewBox="0 0 1380 900"><line x1="849" y1="319.5" x2="709.5" y2="363.5" stroke="#7000ff" stroke-width="2"/><polyline points="719.4,364.6 709.5,363.5 717.0,356.9" fill="none" stroke="#7000ff" stroke-width="2"/><line x1="853" y1="341.5" x2="739.5" y2="398.5" stroke="#7000ff" stroke-width="2"/><polyline points="749.5,398.0 739.5,398.5 745.8,390.8" fill="none" stroke="#7000ff" stroke-width="2"/><line x1="887" y1="350.3" x2="815.5" y2="410" stroke="#7000ff" stroke-width="2"/><polyline points="825.1,407.3 815.5,410 819.9,401.0" fill="none" stroke="#7000ff" stroke-width="2"/><line x1="921" y1="342" x2="875" y2="410" stroke="#7000ff" stroke-width="2"/><polyline points="883.5,404.7 875,410 876.7,400.2" fill="none" stroke="#7000ff" stroke-width="2"/><line x1="945" y1="342" x2="970.5" y2="521" stroke="#7000ff" stroke-width="2"/><polyline points="973.2,511.4 970.5,521 965.2,512.5" fill="none" stroke="#7000ff" stroke-width="2"/><line x1="1007" y1="302" x2="1161.5" y2="272" stroke="#7000ff" stroke-width="2"/><polyline points="1151.8,269.7 1161.5,272 1153.3,277.7" fill="none" stroke="#7000ff" stroke-width="2"/></svg>
<div class="ab" style="left:856px;top:300.5px;width:151.5px;height:31px;background:#fff;border:2px solid #7000ff;border-radius:5px"></div>
<div class="t" style="left:896.0px;top:309.3px;font-size:15px;color:#7000ff;font-weight:bold;letter-spacing:0.00px;transform:scaleX(0.9571);transform-origin:0 0;">Grid Lines</div>
<div class="ab" style="left:1164.5px;top:251.5px;width:151.5px;height:41px;border:2px dashed #7000ff"></div>
<div class="ab" style="left:493px;top:690px;width:31.5px;height:31.5px;background:#fff;border:1px solid #dcdcdc;border-radius:3px"></div>
<svg style="left:506.5px;top:703.5px;" width="6" height="7" viewBox="0 0 6 7"><polygon points="4.5,0 4.5,6.5 0,3.25" fill="#555"/></svg>
<div class="ab" style="left:529.5px;top:690px;width:32px;height:31.5px;background:#fff;border:1px solid #dcdcdc;border-radius:3px"></div>
<svg style="left:537.5px;top:697px;" width="16" height="17" viewBox="0 0 16 17"><rect x="1" y="2.8" width="12.8" height="11.8" rx="1" fill="none" stroke="#888" stroke-width="1.2"/><line x1="1" y1="5.6" x2="13.8" y2="5.6" stroke="#888" stroke-width="1.2"/><line x1="4.3" y1="0.8" x2="4.3" y2="3.5" stroke="#888" stroke-width="1.2"/><line x1="10.5" y1="0.8" x2="10.5" y2="3.5" stroke="#888" stroke-width="1.2"/><rect x="8.3" y="9.3" width="3.3" height="3.3" fill="#888"/></svg>
<div class="ab" style="left:566.5px;top:690px;width:32px;height:31.5px;background:#fff;border:1px solid #cfd6df;border-radius:3px"></div>
<svg style="left:573.5px;top:696.8px;" width="18" height="18" viewBox="0 0 18 18"><circle cx="9" cy="9" r="6.6" fill="none" stroke="#888" stroke-width="1.2"/><polyline points="8.6,4.8 8.6,8.7 12.2,8.7" fill="none" stroke="#888" stroke-width="1.2"/></svg>
<div class="ab" style="left:820.5px;top:690px;width:31px;height:31.5px;background:#fff;border:1px solid #dcdcdc;border-radius:3px"></div>
<svg style="left:827.5px;top:697px;" width="18" height="17" viewBox="0 0 18 17"><path d="M0.5,1 V15.5 H16" fill="none" stroke="#555" stroke-width="1"/><circle cx="3.5" cy="12" r="1.35" fill="#555"/><circle cx="6" cy="12.5" r="1.35" fill="#555"/><circle cx="5" cy="10" r="1.35" fill="#555"/><circle cx="7.5" cy="9.5" r="1.35" fill="#555"/><circle cx="9" cy="11" r="1.35" fill="#555"/><circle cx="8" cy="7" r="1.35" fill="#555"/><circle cx="10.5" cy="8" r="1.35" fill="#555"/><circle cx="12" cy="9" r="1.35" fill="#555"/><circle cx="11" cy="5" r="1.35" fill="#555"/><circle cx="13.5" cy="5.5" r="1.35" fill="#555"/><circle cx="14.5" cy="3" r="1.35" fill="#555"/><circle cx="12" cy="3" r="1.35" fill="#555"/></svg>
<div class="ab" style="left:856px;top:690px;width:103px;height:31.5px;background:#fff;border:1px solid #dcdcdc;border-radius:3px"></div>
<div class="ab" style="left:927px;top:691px;width:1px;height:30px;background:#dcdcdc"></div>
<div class="t" style="left:868.5px;top:698.8px;font-size:15px;color:#333;font-weight:normal;letter-spacing:0.00px;transform:scaleX(0.9194);transform-origin:0 0;">8 hours</div>
<svg style="left:935.5px;top:697px;" width="14" height="17" viewBox="0 0 14 17"><path d="M3.5,7 V4.5 Q3.5,1 7,1 Q10.5,1 10.5,4.5 V7" fill="none" stroke="#555" stroke-width="1.6"/><rect x="1.5" y="7" width="11" height="9" rx="1" fill="none" stroke="#555" stroke-width="1.6"/><circle cx="7" cy="11.5" r="1.4" fill="#555"/></svg>
<div class="ab" style="left:963.5px;top:690px;width:31.5px;height:31.5px;background:#fff;border:1px solid #ececec;border-radius:3px"></div>
<svg style="left:971px;top:698px;" width="16" height="16" viewBox="0 0 16 16"><path d="M3.5,8 A5.5,5.5 0 1 0 5,4.2" fill="none" stroke="#ccc" stroke-width="1.3"/><polygon points="2,3 6.5,3 4.5,7" fill="#ccc"/><polyline points="9,5 9,8.5 11.5,10" fill="none" stroke="#ccc" stroke-width="1.3"/></svg>
<div class="ab" style="left:1221.5px;top:690px;width:32.5px;height:31.5px;background:#fff;border:1px solid #dcdcdc;border-radius:3px"></div>
<svg style="left:1230px;top:697px;" width="16" height="17" viewBox="0 0 16 17"><rect x="1" y="2.8" width="12.8" height="11.8" rx="1" fill="none" stroke="#888" stroke-width="1.2"/><line x1="1" y1="5.6" x2="13.8" y2="5.6" stroke="#888" stroke-width="1.2"/><line x1="4.3" y1="0.8" x2="4.3" y2="3.5" stroke="#888" stroke-width="1.2"/><line x1="10.5" y1="0.8" x2="10.5" y2="3.5" stroke="#888" stroke-width="1.2"/><rect x="8.3" y="9.3" width="3.3" height="3.3" fill="#888"/></svg>
<div class="ab" style="left:1258.5px;top:690px;width:63.5px;height:31.5px;background:#fff;border:1px solid #d6dbe2;border-radius:3px"></div>
<div class="ab" style="left:1290.5px;top:691px;width:1px;height:30px;background:#dcdcdc"></div>
<svg style="left:1266px;top:696.8px;" width="18" height="18" viewBox="0 0 18 18"><circle cx="9" cy="9" r="6.6" fill="none" stroke="#888" stroke-width="1.2"/><polyline points="8.6,4.8 8.6,8.7 12.2,8.7" fill="none" stroke="#888" stroke-width="1.2"/></svg>
<svg style="left:1303px;top:702px;" width="6" height="8" viewBox="0 0 6 8"><polygon points="0,0 0,8 5,4" fill="#444"/></svg>
<!--TIMELINE-->
<svg style="left:0px;top:0px;" width="1380" height="900" viewBox="0 0 1380 900"><polyline points="494.5,732.2 497.2,757.4 499.8,734.3 502.2,756.7 504.2,741.5 506.5,732.0 509.1,757.5 512.0,733.8 514.4,757.7 516.2,734.5 518.7,755.8 521.2,741.0 523.2,735.5 526.0,734.4 528.9,758.4 530.8,734.0 532.7,758.2 534.8,732.5 537.3,756.1 539.1,732.3 541.4,757.4 544.0,734.7 546.9,733.7 549.4,758.2 551.4,732.0 553.3,756.8 556.1,734.0 558.0,757.9 559.9,733.3 561.8,757.3 564.5,732.7 566.8,755.9 569.7,732.7 572.0,756.5 574.6,734.1 577.3,756.1 579.9,732.4 582.6,757.2 585.5,733.0 588.4,753.1 590.9,738.2 593.7,756.5 596.3,733.5 598.8,749.7 601.1,755.8 603.3,733.6 606.3,756.5 608.3,733.5 611.0,737.5 613.8,757.3 615.8,731.5 617.9,756.3 619.9,732.8 622.0,756.3 624.3,733.4 626.9,756.2 628.9,731.8 631.1,755.6 633.4,733.2 636.3,757.6 639.1,753.2 641.3,732.9 643.3,757.2 646.1,732.8 649.1,757.7 651.2,734.2 653.4,755.7 655.8,755.9 658.2,731.7 660.3,758.5 662.5,732.5 665.1,756.9 667.7,732.7 669.7,758.4 671.6,732.2 674.3,757.2 676.9,733.9 678.8,757.7 681.1,732.1 683.5,756.5 686.3,733.5 689.0,758.0 690.9,733.4 692.9,751.1 695.4,756.7 697.6,732.5 700.2,758.0 702.1,734.4 704.8,757.4 707.4,733.9 709.5,756.1 712.4,734.0 715.2,756.2 717.4,731.6 719.7,758.0 722.7,753.7 724.8,732.8 726.7,756.7 728.9,732.5 731.7,756.1 734.2,733.6 736.0,739.1 738.3,755.8 740.4,734.5 742.4,758.0 744.9,733.2 746.8,755.8 748.8,734.5 750.9,757.2 752.7,733.0 755.6,733.1 758.1,758.1 761.0,733.0 763.1,757.9 765.9,732.1 768.7,756.3 770.8,732.3 773.4,757.0 776.2,732.2 778.6,757.2 781.1,732.3 783.8,757.9 786.5,731.6 788.4,758.4 790.6,734.3 792.7,757.6 795.3,732.5 797.3,757.7 799.6,731.8 801.7,734.0 804.0,757.5 806.2,733.8 808.1,757.8 810.6,731.7 812.4,757.2 815.0,741.4 817.3,752.5 820.2,733.6 823.0,757.8 825.9,732.5 827.8,748.4 829.9,757.2 831.7,731.7 834.0,757.7 836.7,750.7 839.0,740.0 842.0,733.1 844.9,757.6 847.6,734.3 850.0,755.5 851.9,733.2 854.4,736.4 857.3,756.8 859.1,732.2 861.7,731.4 864.0,739.0 866.8,756.4 869.8,731.8 872.6,757.3 874.5,733.1 876.6,735.4 878.8,756.3 881.6,732.7 884.4,757.8 887.4,732.4 889.8,756.6 892.1,732.5 894.1,756.7 896.6,733.2 899.3,757.5 902.1,733.9 903.9,757.1 905.8,734.3 908.5,758.2 911.2,732.0 913.7,758.2 915.6,734.0 917.8,758.4 920.3,733.1 922.6,758.4 924.7,757.4 927.6,753.7 930.2,733.7 933.1,756.8 935.8,733.1 937.6,757.5 939.6,733.1 942.5,756.0 944.6,734.4 947.2,757.6 949.8,732.1 951.8,758.2 954.0,746.3 956.3,734.3 958.4,758.5 960.6,756.5 963.5,732.4 965.6,756.5 967.8,742.4 969.7,734.4 971.7,749.5 974.4,746.3 976.8,757.3 979.3,732.8 981.5,757.5 984.4,733.5 986.8,756.2 989.8,733.9 991.7,755.6 994.7,740.9 997.3,732.8 1000.1,734.3 1002.5,756.2 1004.9,732.1 1006.7,755.5 1009.0,758.2 1011.9,732.4 1014.5,756.3 1016.3,731.6 1018.4,757.4 1021.1,732.4 1023.3,750.4 1025.2,756.0 1027.6,732.7 1030.2,757.7 1033.0,732.7 1036.0,739.5 1037.8,755.6 1040.5,734.2 1043.3,758.4 1045.8,732.3 1048.0,755.8 1050.3,732.0 1052.6,756.0 1055.2,732.0 1057.7,758.4 1060.0,732.0 1062.9,758.1 1065.5,752.6 1068.0,732.1 1069.8,756.6 1071.9,735.4 1074.0,734.4 1076.2,756.3 1078.1,732.1 1081.1,757.0 1084.1,734.5 1086.4,743.2 1088.5,748.4 1090.5,756.4 1092.4,732.8 1094.5,757.0 1097.0,733.3 1099.7,755.6 1102.6,731.9 1105.0,755.8 1107.2,732.1 1110.0,755.8 1112.3,733.8 1115.2,756.7 1117.2,752.6 1119.3,734.4 1122.3,758.4 1124.3,732.1 1126.7,757.1 1129.1,732.5 1132.0,758.4 1134.3,734.4 1137.1,737.0 1140.0,738.9 1142.7,757.9 1145.4,732.4 1147.9,758.5 1149.8,731.8 1151.7,757.7 1154.4,750.3 1157.3,757.4 1159.5,732.3 1161.7,755.7 1164.6,733.3 1166.7,755.8 1169.1,732.9 1171.9,758.2 1174.1,732.2 1176.2,756.8 1179.0,734.0 1180.8,757.9 1182.9,732.0 1185.8,755.9 1187.6,731.6 1190.6,758.3 1192.7,732.3 1194.9,757.8 1197.2,733.3 1200.0,756.6 1202.6,732.7 1204.6,755.6 1207.3,732.8 1209.7,755.6 1212.6,732.2 1215.3,756.4 1218.1,753.0 1220.2,733.7 1222.2,738.6 1225.0,758.2 1226.8,731.7 1228.7,755.7 1231.5,733.8 1233.5,758.4 1235.5,732.9 1238.4,756.4 1241.0,731.6 1243.1,757.0 1245.2,733.3 1247.2,742.7 1249.2,757.1 1251.2,732.1 1253.2,758.3 1256.1,733.2 1258.2,733.8 1260.6,757.2 1263.1,733.7 1266.1,758.1 1268.8,746.0 1271.7,733.8 1274.5,758.2 1276.5,749.0 1278.5,734.1 1280.4,756.2 1282.6,732.7 1285.2,747.8 1287.1,757.0 1289.2,732.0 1291.9,755.9 1294.8,733.5 1296.9,757.8 1299.3,733.9 1301.9,757.7 1304.0,756.2 1306.1,733.8 1308.5,755.9 1310.3,752.1 1312.9,731.8 1315.2,756.8 1317.2,732.0" fill="none" stroke="#4f7fb8" stroke-width="0.9" stroke-opacity="0.65"/><polyline points="494.7,732.8 497.2,742.2 499.6,757.0 501.3,733.2 503.7,757.5 505.5,733.4 507.4,757.8 509.5,733.9 511.8,757.6 514.0,734.0 516.8,758.0 519.2,732.1 521.4,757.9 523.6,731.8 526.4,756.1 528.3,734.3 530.1,757.6 532.0,733.7 534.4,747.9 537.0,756.3 538.9,732.3 541.0,758.3 543.3,733.1 545.7,755.9 548.0,734.3 550.2,742.5 552.0,757.8 554.5,733.4 556.6,755.8 559.0,733.3 561.4,756.2 563.6,733.9 566.2,757.6 568.3,731.9 570.6,756.6 572.7,733.7 575.5,756.0 578.4,733.1 581.1,756.0 583.4,751.7 585.7,732.4 588.1,757.9 590.2,733.2 592.7,756.7 594.5,732.1 597.1,758.1 599.4,733.6 602.2,758.2 603.9,757.3 606.6,734.3 608.5,757.7 610.6,732.6 613.0,733.7 615.3,756.3 617.1,733.4 618.9,756.1 620.8,732.5 623.0,756.2 625.6,734.1 628.2,756.8 630.1,752.3 632.8,732.7 634.9,755.8 636.8,756.5 638.8,733.3 641.1,757.0 643.8,732.0 645.7,750.2 647.8,755.8 650.0,734.0 652.4,757.9 654.9,732.3 657.8,756.6 660.2,731.6 662.9,757.2 664.9,733.7 667.1,757.9 669.5,733.9 672.2,756.7 674.3,732.2 676.4,758.1 678.2,734.3 680.3,758.0 682.8,736.9 685.2,731.5 687.0,757.7 689.1,733.8 691.1,757.7 693.6,734.0 696.5,731.7 698.9,755.7 701.4,733.1 704.2,756.4 706.2,733.2 708.1,757.2 710.3,732.3 712.5,747.9 714.9,756.4 717.2,733.2 720.0,756.5 722.0,732.4 724.1,758.0 726.0,734.4 728.5,757.2 731.1,732.0 733.0,757.1 734.8,733.3 737.3,758.4 739.1,732.2 741.2,756.4 743.3,731.9 745.1,755.8 747.5,731.5 749.8,745.2 752.4,757.6 755.1,731.6 757.2,757.9 759.3,734.2 762.1,757.5 764.2,733.4 766.4,733.4 768.7,758.2 770.9,734.3 773.1,757.9 775.4,733.3 778.2,756.7 780.2,747.3 783.1,734.3 785.0,746.1 786.8,757.6 788.6,731.5 790.8,756.7 793.3,733.4 795.5,757.1 798.2,733.9 799.9,755.5 801.7,732.7 803.5,755.8 806.0,733.7 808.7,757.7 810.4,733.5 812.6,755.5 814.8,733.1 817.1,757.3 819.7,734.1 822.5,742.0 825.3,757.5 827.2,733.6 829.9,756.1 832.7,731.8 835.0,756.7 836.7,732.6 838.8,758.3 840.7,733.6 843.5,757.9 845.5,733.0 847.3,757.3 849.8,733.2 852.6,757.3 854.5,732.8 856.7,758.2 858.9,731.8 860.8,757.8 863.0,734.3 865.8,757.0 868.1,733.6 869.9,758.4 872.0,733.8 873.9,757.1 875.7,732.1 877.6,757.0 879.8,757.2 882.1,732.2 884.0,755.4 886.7,757.0 889.3,755.4 891.1,732.3 893.6,756.0 896.3,732.2 899.0,757.9 901.3,733.6 903.6,755.7 906.3,732.6 908.5,758.0 910.6,732.8 912.6,755.9 914.9,732.3 917.2,758.3 919.7,733.6 922.1,757.5 924.9,731.7 927.2,758.4 929.5,742.5 931.7,734.1 933.7,756.5 935.7,733.9 937.7,757.2 940.3,733.7 943.1,758.5 945.9,732.7 948.0,741.5 949.8,757.9 952.0,733.9 954.8,757.3 956.6,733.4 958.4,755.8 961.3,733.1 963.4,756.3 965.3,751.9 967.4,737.7 969.3,732.6 971.1,755.8 973.9,733.4 976.2,756.7 978.8,733.1 981.5,755.7 983.3,732.0 985.3,756.9 987.7,749.0 990.1,734.1 992.2,758.0 994.7,733.6 997.3,757.7 1000.0,731.9 1002.7,733.9 1005.0,757.4 1007.5,731.8 1009.3,756.1 1011.0,731.8 1012.8,756.1 1015.7,732.2 1017.8,755.8 1019.9,732.0 1022.4,755.6 1025.1,733.5 1026.8,758.1 1029.5,734.2 1032.1,757.2 1034.7,731.5 1037.5,756.0 1039.4,733.5 1041.6,756.8 1044.0,732.2 1046.5,756.5 1048.5,747.9 1050.4,734.1 1052.6,757.5 1054.9,734.5 1057.3,757.7 1059.2,738.1 1061.7,733.0 1063.9,731.2 1065.7,756.8 1068.2,732.3 1071.0,757.8 1073.8,750.9 1076.6,758.1 1079.3,746.0 1081.6,733.6 1083.9,758.0 1086.1,731.7 1088.5,742.4 1091.2,757.2 1093.5,734.3 1095.9,733.3 1098.5,757.7 1100.6,733.5 1102.6,757.8 1105.0,755.6 1107.1,734.4 1109.9,758.1 1112.1,732.7 1114.1,757.5 1115.9,731.6 1117.8,757.4 1120.6,732.0 1122.5,756.1 1124.5,744.8 1126.4,732.3 1129.2,755.9 1131.5,734.4 1133.8,736.6 1135.7,756.8 1137.5,732.2 1139.6,758.2 1142.1,757.8 1144.7,732.9 1146.8,738.0 1149.0,755.8 1151.5,733.9 1154.3,756.4 1156.7,734.2 1158.4,758.2 1160.3,733.3 1162.2,739.5 1164.6,756.8 1166.7,749.3 1169.2,732.0 1171.8,756.2 1173.7,733.4 1176.3,757.8 1178.4,734.3 1180.7,755.7 1182.5,733.8 1184.3,756.0 1186.9,732.9 1188.9,743.5 1191.8,758.2 1194.0,733.1 1196.0,757.6 1198.8,732.3 1201.3,755.9 1203.1,739.0 1205.3,731.8 1207.5,756.9 1209.4,733.1 1211.9,755.6 1214.5,733.2 1216.6,757.1 1219.1,731.5 1221.8,758.3 1224.2,732.6 1226.8,757.6 1229.7,732.1 1232.1,757.3 1234.1,733.4 1236.8,756.2 1239.0,731.7 1241.1,758.2 1243.1,733.9 1245.7,757.3 1248.3,732.6 1250.3,757.4 1252.4,734.1 1254.5,755.6 1256.4,731.9 1258.6,749.5 1261.2,756.3 1263.7,753.5 1265.5,732.2 1267.5,758.2 1269.7,743.2 1271.5,746.9 1273.9,731.5 1275.7,755.7 1277.4,731.6 1279.9,757.8 1281.8,732.6 1284.2,755.6 1287.0,742.6 1289.1,732.1 1291.7,736.0 1294.0,756.5 1295.8,732.4 1297.7,747.0 1300.6,757.3 1303.3,733.2 1305.2,755.5 1307.2,733.5 1309.5,755.8 1311.3,733.3 1313.3,756.2 1316.2,739.0" fill="none" stroke="#f08a3c" stroke-width="0.9" stroke-opacity="0.65"/><polyline points="493.5,756.2 495.5,732.9 497.1,756.7 498.5,731.7 500.6,756.4 502.6,733.0 504.4,755.7 506.1,757.9 508.0,732.7 509.5,757.1 510.9,732.6 512.6,743.2 514.4,758.3 516.5,733.1 518.6,758.0 520.6,734.2 522.7,755.9 524.6,731.7 526.1,758.2 528.2,733.5 530.0,756.2 531.8,734.0 533.7,757.6 535.0,733.6 536.7,755.9 538.7,746.9 540.0,733.1 541.6,732.7 543.4,755.7 545.2,734.5 547.0,758.7 549.1,757.3 551.0,731.7 553.0,735.2 554.3,757.0 556.2,755.8 557.7,753.5 559.5,734.0 561.4,750.2 563.1,756.8 564.8,740.2 566.5,734.3 568.2,755.5 569.9,733.0 571.8,757.3 573.1,731.9 574.6,755.0 576.6,756.0 578.2,733.4 579.7,756.1 581.7,732.4 583.8,756.0 585.4,732.0 587.5,757.3 589.2,732.7 590.9,755.8 592.8,732.3 594.6,758.1 596.1,733.3 597.7,757.2 599.4,733.0 601.1,756.4 603.1,734.5 605.1,742.4 606.5,755.7 608.0,733.8 609.7,755.6 611.5,756.4 613.4,734.3 614.8,757.2 616.7,732.2 618.4,755.6 619.7,733.4 621.3,757.4 623.1,757.7 624.6,734.1 626.5,756.3 628.3,732.3 630.2,756.3 632.0,746.8 633.7,733.7 635.2,747.7 636.9,757.6 638.7,732.9 640.4,741.3 642.5,758.0 644.3,732.5 646.1,756.6 647.6,732.0 649.0,740.6 650.6,755.9 652.0,731.9 653.9,748.8 655.3,755.7 656.8,733.4 658.3,749.8 660.4,755.6 661.9,733.0 664.0,738.9 666.0,757.5 667.8,734.0 669.7,756.1 671.6,734.4 673.6,757.5 675.0,734.5 676.3,733.4 678.1,758.0 679.5,733.3 681.1,756.9 682.9,734.2 684.7,756.8 686.5,734.0 688.4,758.3 690.3,733.3 691.6,757.0 693.3,731.6 694.6,756.0 696.6,732.6 698.6,756.5 700.4,756.0 702.4,732.6 704.0,756.0 705.4,731.6 707.5,757.6 709.4,731.6 710.8,758.4 712.9,734.2 714.9,757.2 716.4,732.7 717.9,756.1 719.4,742.3 721.1,731.8 722.9,757.5 724.4,733.5 726.3,756.4 727.9,732.7 729.2,757.8 730.8,732.8 732.8,755.6 734.8,757.3 736.7,733.7 738.7,758.1 740.8,733.9 742.4,732.5 744.0,755.7 745.7,731.7 747.3,758.2 748.7,732.3 750.4,758.2 752.2,734.5 753.6,758.4 755.5,732.1 756.8,756.9 758.7,733.2 760.2,757.7 761.9,733.2 763.7,758.5 765.2,731.6 766.9,757.5 768.9,731.8 770.7,756.9 772.2,731.7 773.8,758.0 775.2,733.6 777.0,756.8 778.4,731.8 780.0,756.8 781.9,731.7 783.7,755.6 785.8,733.0 787.9,758.1 789.6,732.3 791.0,755.8 793.0,732.7 794.8,756.8 796.2,732.2 797.8,751.1 799.2,757.4 800.8,732.3 802.8,755.5 804.3,732.5 806.1,755.5 807.4,736.3 809.3,733.1 811.1,755.8 812.5,740.8 814.0,732.3 815.8,756.8 817.3,732.4 819.3,740.6 821.3,757.8 822.9,733.5 824.4,757.1 826.0,732.6 827.7,757.6 829.4,732.1 831.0,757.0 832.6,732.7 834.4,755.6 836.4,733.5 837.9,755.7 839.5,731.8 841.5,756.5 843.2,732.3 845.3,748.7 847.3,758.1 849.2,732.7 850.7,757.2 852.3,734.2 853.9,758.5 855.5,733.9 857.5,755.8 859.3,744.4 861.3,734.4 863.0,733.9 864.8,756.5 866.9,734.3 868.9,756.0 870.3,731.5 872.1,757.5 874.0,732.4 875.5,758.3 876.9,734.5 879.0,756.3 880.9,734.4 883.0,756.5 885.0,732.9 887.0,757.4 888.6,732.8 890.2,755.6 892.2,733.5 894.1,757.0 895.6,733.6 897.7,757.1 899.2,734.1 900.8,754.6 902.9,756.2 905.0,732.9 907.1,757.2 909.0,735.1 910.6,731.7 911.9,756.6 913.5,733.3 915.1,756.1 917.0,734.4 918.3,757.3 920.2,733.6 921.9,755.9 923.8,748.1 925.2,732.3 927.1,757.6 929.2,733.2 931.1,731.4 933.1,742.5 935.0,757.5 936.9,739.4 938.3,733.6 940.0,757.6 942.1,733.0 943.4,757.2 944.7,733.9 946.7,757.8 948.2,744.3 950.1,733.0 951.4,756.3 953.5,734.1 955.1,756.8 956.8,732.7 958.5,755.9 960.4,731.9 962.0,756.9 963.7,744.2 965.2,734.3 967.2,758.0 968.5,733.6 970.4,757.2 971.9,733.8 973.7,756.9 975.7,747.5 977.2,731.7 979.1,757.0 980.8,732.1 982.9,756.6 984.3,733.5 986.1,758.1 987.9,733.2 990.0,742.0 991.7,757.8 993.0,734.1 994.9,758.1 996.5,734.3 998.1,757.1 999.9,732.3 1001.3,757.2 1002.6,746.5 1004.1,732.2 1005.8,758.3 1007.2,747.7 1009.2,732.1 1011.1,758.1 1012.7,733.0 1014.3,756.9 1015.8,734.2 1017.6,757.6 1019.6,746.3 1021.1,732.5 1022.9,746.4 1024.5,757.6 1026.2,733.6 1027.8,757.1 1029.9,732.9 1031.7,757.2 1033.1,732.0 1035.0,755.7 1036.5,733.0 1038.4,757.1 1040.0,758.4 1041.4,732.1 1042.8,757.8 1044.5,748.9 1046.2,734.2 1048.0,757.7 1049.8,734.2 1051.4,757.6 1053.4,733.5 1055.5,734.3 1057.2,755.6 1058.6,733.3 1060.6,757.2 1062.1,757.3 1063.9,732.9 1065.8,758.4 1067.6,732.4 1069.2,756.8 1070.7,733.7 1072.7,734.1 1074.5,757.5 1076.2,731.7 1077.9,757.7 1079.9,733.0 1081.6,757.5 1083.4,756.0 1084.9,743.9 1086.4,734.3 1088.2,757.7 1089.5,731.8 1091.0,756.7 1092.6,745.3 1094.1,734.4 1095.6,757.4 1097.5,733.3 1099.2,755.7 1100.6,732.6 1102.0,757.7 1103.7,747.1 1105.4,732.0 1107.2,749.6 1108.9,757.8 1110.5,734.1 1111.9,756.7 1113.9,732.7 1115.3,747.5 1116.6,757.5 1118.1,733.5 1120.2,757.5 1121.6,733.8 1123.2,756.1 1124.7,732.1 1126.3,756.5 1128.1,732.3 1129.6,746.4 1131.2,755.7 1133.1,732.5 1134.7,756.3 1136.0,734.2 1138.1,753.8 1140.0,758.0 1142.0,733.5 1143.5,757.4 1145.0,734.4 1146.6,754.9 1148.0,735.0 1150.1,755.6 1152.1,733.4 1153.5,757.9 1154.9,733.9 1156.7,757.7 1158.6,743.6 1160.3,733.7 1162.1,755.9 1163.5,734.7 1164.8,733.0 1166.4,756.1 1168.2,731.9 1169.5,756.1 1170.9,732.1 1172.4,758.2 1174.0,731.5 1175.4,732.8 1176.9,757.5 1178.2,731.6 1179.6,742.3 1180.9,758.1 1182.6,734.3 1184.2,756.8 1186.2,732.4 1188.0,746.3 1189.9,756.8 1191.5,732.9 1193.1,756.3 1194.7,731.5 1196.7,757.3 1198.4,734.2 1199.7,758.0 1201.4,731.8 1202.8,757.4 1204.4,733.1 1206.3,757.8 1207.9,732.0 1209.7,756.3 1211.3,757.3 1213.2,734.4 1215.0,757.7 1216.9,731.7 1218.4,757.2 1220.4,733.8 1222.4,758.2 1224.2,731.7 1226.0,757.5 1228.0,732.2 1229.3,757.2 1231.0,733.1 1232.4,756.5 1234.3,758.1 1236.4,733.9 1237.9,756.7 1239.8,732.7 1241.4,755.7 1243.3,758.8 1245.2,733.5 1246.8,756.0 1249.0,733.6 1250.7,756.0 1252.4,738.2 1253.8,734.1 1255.5,757.7 1257.0,732.1 1259.0,756.1 1260.6,731.6 1262.6,757.3 1264.0,751.6 1265.3,739.1 1267.4,732.1 1268.6,756.2 1270.6,732.8 1272.6,756.9 1274.5,732.3 1276.1,758.1 1277.5,732.6 1279.6,736.7 1281.3,756.9 1283.2,732.4 1284.7,755.9 1286.4,757.2 1288.4,731.6 1290.4,757.5 1291.8,731.8 1293.7,753.3 1295.8,755.6 1297.3,733.7 1299.4,757.0 1301.4,733.1 1303.3,757.7 1304.9,758.1 1306.3,732.0 1307.9,757.7 1309.4,732.8 1311.5,746.4 1313.0,743.6 1314.9,751.7 1316.8,757.6" fill="none" stroke="#d8708c" stroke-width="0.9" stroke-opacity="0.7"/><polyline points="494.6,732.8 496.1,757.8 498.2,733.2 500.6,757.8 502.7,732.8 504.5,757.0 507.0,732.2 509.4,756.4 511.5,733.8 513.3,744.0 514.9,757.3 516.4,734.4 518.0,758.1 520.4,733.4 522.2,758.2 523.7,732.6 525.6,758.3 527.8,733.0 529.9,756.6 531.9,733.1 534.2,757.6 535.9,732.2 537.4,756.1 538.9,733.2 541.4,739.7 543.7,757.6 545.7,731.8 547.8,756.8 549.7,732.7 552.1,756.7 554.1,733.6 556.2,757.1 558.2,733.9 560.4,757.3 562.6,733.6 564.4,755.7 566.1,733.5 568.1,756.5 569.6,732.3 571.5,756.2 573.8,733.0 575.9,755.8 578.3,732.3 580.2,756.9 582.0,732.0 584.2,757.6 586.6,734.0 588.6,757.9 590.3,734.3 592.6,757.2 594.2,731.7 595.9,757.6 597.7,732.7 599.9,758.1 601.7,733.5 603.3,757.4 605.3,734.2 606.9,755.7 608.5,734.5 610.2,757.0 612.1,734.0 614.3,757.3 616.7,734.3 618.3,757.5 620.1,732.2 622.0,756.9 624.4,757.2 626.2,742.9 628.6,732.5 630.2,757.7 632.4,732.0 634.3,755.6 636.7,734.2 638.2,755.7 640.5,733.5 642.6,756.8 644.7,732.1 646.6,755.8 648.7,756.6 651.1,731.8 653.6,757.4 655.6,734.4 657.2,757.5 659.0,732.2 660.6,756.6 662.3,733.9 664.0,755.2 666.2,756.3 667.9,733.2 670.3,757.0 672.6,731.6 674.4,756.4 676.3,732.5 678.6,755.7 680.4,731.9 682.0,740.1 684.1,731.8 685.9,757.7 688.2,733.6 690.2,757.5 691.9,738.5 694.3,734.5 696.3,741.6 698.3,758.4 700.7,732.8 702.9,757.6 704.7,731.8 707.0,757.2 708.8,733.6 710.6,757.3 712.8,732.9 715.0,756.9 716.5,754.0 719.0,738.4 720.7,731.7 723.0,758.4 724.6,733.0 726.8,755.8 728.5,734.4 730.5,756.6 732.2,732.8 733.9,757.5 736.2,734.0 737.9,757.8 739.5,733.9 741.7,758.4 744.0,732.4 745.9,757.4 748.0,731.6 750.4,757.1 752.5,733.4 754.2,756.1 756.5,731.5 758.6,755.9 760.7,732.2 762.5,758.1 764.2,732.8 766.4,756.3 768.5,733.6 770.2,756.6 771.8,732.3 773.9,756.1 775.9,733.9 778.1,755.8 779.8,733.9 782.2,758.1 783.9,732.3 785.4,745.1 787.8,758.4 789.5,734.5 791.1,757.7 793.1,732.9 794.9,757.1 797.1,732.8 799.3,756.4 801.0,733.0 802.9,756.0 804.7,732.1 806.3,758.1 808.1,733.4 810.3,756.0 812.2,734.4 814.7,755.9 816.2,734.5 818.3,756.0 820.7,733.5 823.2,757.3 825.0,732.8 827.0,755.9 829.0,755.7 830.5,731.6 832.5,757.7 834.6,733.6 836.6,755.7 838.9,752.7 841.2,731.8 843.1,735.4 845.3,756.5 846.8,732.5 849.0,756.6 850.6,732.8 852.7,756.1 854.6,734.3 856.6,755.8 858.6,732.2 860.9,743.4 862.8,755.8 864.3,749.5 866.2,734.1 868.4,755.9 870.5,734.4 872.7,756.0 875.0,734.1 876.9,757.7 879.1,732.4 880.6,750.0 882.8,757.2 884.5,733.1 886.8,756.5 889.2,733.3 891.5,756.0 893.7,733.8 895.6,756.8 897.5,731.9 899.1,758.4 900.9,733.5 902.8,755.7 905.2,733.7 907.4,756.9 909.6,740.2 912.0,734.2 914.2,757.9 916.7,733.3 918.2,756.0 920.0,732.4 922.1,740.1 923.9,756.2 926.0,733.3 928.0,737.6 930.3,756.1 932.7,756.9 934.9,733.3 936.5,731.4 938.1,756.1 940.5,733.3 942.8,756.0 944.8,732.7 946.5,757.4 948.3,732.1 950.1,758.6 952.3,757.4 954.8,732.6 956.6,756.5 959.1,732.0 960.7,757.0 962.9,734.4 964.4,756.5 966.5,731.9 968.1,758.2 970.0,732.2 971.9,757.6 973.6,732.6 975.5,755.8 977.1,732.3 979.1,755.9 980.8,732.7 982.9,756.7 985.1,740.8 987.5,732.7 989.3,757.5 991.4,733.4 993.8,757.3 996.1,734.1 997.8,758.4 999.6,733.2 1002.0,756.4 1003.8,732.2 1005.6,757.2 1007.3,733.3 1009.8,755.9 1011.7,731.6 1014.2,758.1 1016.0,733.9 1017.6,746.4 1019.7,732.7 1021.3,757.5 1022.9,731.8 1025.3,757.2 1027.3,732.5 1029.6,756.5 1031.5,734.4 1033.1,755.7 1034.6,750.4 1036.4,732.6 1038.0,757.5 1039.6,732.0 1041.9,757.2 1043.8,732.9 1045.9,757.1 1047.9,734.0 1050.1,756.5 1052.2,732.1 1054.4,757.5 1056.0,731.9 1057.6,757.7 1060.0,733.3 1061.8,756.5 1064.0,732.3 1066.1,755.6 1068.0,733.5 1070.3,756.1 1072.5,731.5 1074.3,757.7 1076.1,733.2 1078.6,756.5 1080.8,733.8 1082.4,756.9 1084.7,734.1 1086.2,756.6 1088.7,743.7 1090.7,732.7 1093.0,757.1 1095.5,732.3 1097.6,755.7 1099.8,731.7 1101.6,743.2 1103.7,757.3 1105.4,733.5 1107.6,757.1 1109.1,734.2 1111.3,755.7 1112.9,731.7 1114.7,755.7 1116.2,732.1 1118.2,757.0 1120.2,734.0 1122.1,758.5 1124.3,732.8 1126.4,755.8 1128.0,734.4 1129.7,756.6 1131.4,733.6 1133.7,756.1 1136.1,733.4 1138.3,756.7 1140.5,731.8 1142.9,755.7 1145.1,732.4 1146.8,758.5 1148.5,733.1 1150.8,755.8 1152.5,758.0 1154.7,733.1 1156.6,745.3 1158.3,755.8 1160.1,734.1 1162.5,733.2 1164.1,758.1 1166.1,733.1 1168.0,755.6 1170.1,734.0 1171.8,756.3 1173.5,734.3 1175.9,757.8 1177.6,731.9 1179.9,757.8 1181.8,732.1 1184.2,756.7 1186.4,733.1 1188.5,750.5 1190.3,757.2 1192.4,734.0 1194.8,756.8 1196.8,732.3 1198.8,756.5 1200.5,731.8 1202.0,756.5 1204.1,731.9 1205.7,757.1 1207.7,752.7 1209.8,732.4 1211.7,757.0 1213.6,758.3 1215.2,732.5 1216.9,757.1 1219.3,733.0 1221.7,732.6 1223.6,755.6 1226.0,733.6 1228.1,758.3 1230.4,733.5 1232.4,758.0 1234.4,732.6 1236.0,756.3 1238.1,731.7 1240.2,746.9 1242.4,757.3 1244.4,753.0 1246.5,733.3 1248.4,756.2 1250.3,731.8 1252.7,747.8 1255.1,757.2 1257.0,733.8 1258.8,757.1 1260.7,735.1 1262.9,734.1 1264.8,757.5 1266.6,732.4 1268.4,742.8 1270.2,757.8 1272.4,731.9 1274.4,758.3 1276.5,732.0 1278.3,756.4 1280.3,732.3 1282.2,757.7 1284.1,733.8 1286.1,757.1 1287.8,733.5 1290.0,756.0 1292.4,734.0 1294.4,755.9 1296.0,732.6 1297.7,756.0 1299.6,734.5 1302.0,745.6 1304.1,757.7 1306.6,734.1 1308.8,755.8 1311.0,733.3 1312.8,757.6 1314.6,732.1 1316.2,756.3" fill="none" stroke="#b07a70" stroke-width="0.9" stroke-opacity="0.6"/><polyline points="495.1,732.9 496.8,757.1 498.6,733.0 500.6,758.4 502.5,734.1 504.0,758.0 505.7,733.7 507.6,756.9 509.5,732.0 511.2,734.1 513.4,757.2 515.4,732.5 517.2,757.1 519.3,734.0 521.3,756.8 523.3,750.3 525.7,734.5 527.8,756.8 529.3,734.4 531.6,732.9 533.9,755.9 535.4,733.5 537.0,755.6 539.0,756.3 541.1,732.3 542.7,756.0 544.3,733.2 546.6,756.6 548.9,732.6 550.4,759.0 552.5,757.6 554.2,734.4 556.3,755.9 557.9,755.8 560.0,733.6 562.1,756.6 564.1,733.0 566.2,755.6 567.9,733.7 569.8,758.3 571.3,734.0 573.1,756.2 574.7,733.5 577.1,732.9 579.1,755.8 580.9,733.3 582.7,757.1 585.0,732.7 587.1,731.7 589.1,757.1 591.0,732.6 593.2,756.7 594.9,733.9 597.1,757.0 599.3,732.8 601.1,756.0 603.3,732.4 605.1,756.2 607.3,733.1 609.2,755.7 611.3,732.4 612.8,757.0 614.7,744.7 616.2,741.9 617.7,733.2 619.2,757.1 621.2,732.1 622.6,755.9 624.1,732.5 625.7,756.8 628.0,750.2 630.2,733.8 631.8,756.3 633.6,734.4 635.4,758.1 637.2,732.7 638.7,755.6 640.4,731.5 642.3,756.9 644.2,747.0 646.1,742.4 648.2,734.1 649.7,756.0 651.9,733.3 653.7,758.3 655.6,734.1 657.7,756.3 659.7,731.8 661.6,756.5 663.0,732.2 665.1,757.6 667.0,733.9 669.1,757.2 671.3,731.6 672.8,755.5 674.3,732.5 676.2,758.3 678.1,734.3 680.0,755.6 682.1,731.9 684.4,758.1 685.9,731.9 687.6,737.4 689.8,758.0 691.5,733.6 693.4,757.0 695.6,745.2 697.2,733.7 699.2,757.9 700.7,733.4 703.1,737.8 705.0,757.6 707.1,734.2 708.6,756.3 710.4,732.1 712.6,757.9 714.5,733.5 716.8,755.7 718.2,731.7 720.0,757.6 722.4,732.6 724.6,755.9 726.3,733.1 727.8,756.3 729.6,734.0 731.2,757.9 733.3,733.0 735.0,756.7 737.3,731.9 738.7,756.8 740.4,731.7 742.8,757.5 744.8,734.3 746.6,758.0 748.2,733.4 750.3,758.5 751.9,732.3 754.1,755.6 756.3,734.3 758.0,757.4 759.4,733.0 761.5,755.5 763.3,734.1 764.8,756.1 766.8,734.3 769.0,756.8 770.5,732.7 772.6,756.4 774.5,731.6 776.1,757.1 778.1,732.2 779.7,758.4 781.1,733.1 782.8,732.7 784.9,755.6 786.5,733.9 788.0,756.8 790.0,757.5 791.5,732.0 793.4,755.7 795.1,731.6 797.4,758.1 799.1,733.5 801.0,757.9 802.9,733.0 805.2,756.1 807.5,732.1 809.7,757.6 811.9,731.8 813.9,757.4 815.5,745.7 817.0,734.2 819.1,757.6 821.1,732.3 822.8,756.3 824.3,732.5 826.0,755.6 827.8,733.0 829.8,757.1 831.5,734.2 833.3,756.3 835.2,732.2 837.4,758.5 839.6,731.8 841.8,758.0 843.6,732.0 845.8,756.7 847.6,734.2 849.2,758.3 850.7,732.8 852.5,758.2 854.2,733.5 856.2,758.1 857.8,732.6 859.7,755.9 861.3,733.1 863.3,756.2 865.2,731.8 867.2,757.6 868.7,733.3 870.9,757.9 873.2,757.5 874.9,731.9 876.6,757.0 878.0,732.2 879.6,758.1 881.5,734.1 883.8,758.3 885.3,733.3 887.4,758.3 889.3,732.5 891.5,755.7 893.6,732.8 895.9,757.6 897.8,732.4 899.6,758.3 901.7,734.3 903.5,757.2 905.7,756.5 908.1,733.9 909.9,758.2 911.8,733.2 913.5,756.5 915.6,732.3 917.7,756.2 919.2,732.0 921.1,756.4 922.6,734.3 924.3,742.2 926.6,758.1 928.7,750.7 930.1,732.3 932.5,756.2 934.7,734.2 936.3,756.5 938.3,733.7 939.8,756.4 942.0,731.9 943.9,756.0 946.2,733.1 947.9,755.9 949.6,733.5 951.5,758.3 953.0,733.6 955.4,757.8 956.9,734.3 958.9,758.5 960.3,755.6 962.5,733.6 963.9,757.2 965.7,732.0 968.0,757.0 970.3,734.0 971.9,755.9 973.7,754.0 975.9,733.6 978.2,755.7 979.7,734.2 981.4,757.7 983.3,733.9 984.9,755.7 986.6,733.5 988.4,756.1 989.9,734.0 991.5,731.1 993.4,756.7 995.1,734.3 997.1,755.5 998.8,733.8 1000.9,756.5 1002.8,734.1 1005.0,757.9 1006.5,734.1 1008.9,757.5 1010.9,733.0 1012.7,758.0 1014.3,733.9 1016.1,756.6 1017.7,744.0 1019.9,732.0 1022.0,756.2 1023.7,736.9 1025.7,733.7 1027.7,756.9 1030.0,744.8 1032.0,757.6 1033.6,732.6 1035.8,753.3 1037.5,757.2 1039.4,732.2 1041.7,751.1 1043.2,757.2 1045.4,755.5 1047.2,731.6 1049.1,758.1 1050.9,734.5 1052.4,758.2 1054.5,734.2 1056.3,757.1 1058.3,749.0 1060.2,732.8 1062.1,758.4 1063.6,755.8 1065.6,731.8 1067.6,757.4 1069.5,748.0 1071.0,731.5 1073.3,756.0 1075.4,733.4 1077.3,758.3 1079.1,733.1 1081.3,740.6 1083.5,755.9 1085.2,733.0 1087.4,758.0 1089.4,732.0 1090.9,757.5 1093.0,731.6 1095.1,755.7 1097.1,732.3 1099.3,755.6 1101.5,733.4 1103.2,757.9 1105.2,733.5 1106.9,744.1 1108.8,756.7 1110.8,733.0 1112.7,755.9 1114.5,746.4 1116.8,734.3 1118.4,750.0 1120.6,755.7 1122.3,734.3 1124.1,758.0 1126.3,732.7 1127.8,757.3 1130.0,732.4 1132.3,756.4 1133.8,733.8 1135.8,756.1 1137.4,752.2 1139.7,733.4 1141.3,754.7 1143.1,757.3 1145.2,731.6 1147.3,756.6 1149.3,735.6 1151.3,750.6 1153.5,732.9 1155.2,757.0 1157.3,732.7 1159.4,756.6 1161.0,734.2 1162.6,736.9 1164.4,757.9 1166.7,731.6 1168.6,757.4 1170.7,733.4 1172.3,756.3 1174.5,733.3 1176.3,738.7 1178.4,755.5 1180.5,732.1 1182.7,756.8 1184.6,733.1 1186.1,757.1 1188.3,731.6 1189.8,756.8 1191.6,732.1 1193.2,757.4 1194.9,731.6 1196.6,758.2 1198.2,733.6 1200.5,742.8 1202.4,755.7 1204.0,732.0 1206.4,744.2 1208.0,758.3 1209.6,732.6 1211.3,756.7 1213.7,749.8 1215.2,732.7 1216.7,757.5 1218.7,731.7 1220.3,739.2 1221.9,758.5 1223.6,732.3 1225.4,758.1 1227.2,733.1 1229.4,752.4 1230.9,757.0 1232.8,750.1 1235.1,734.3 1237.5,737.8 1239.6,757.4 1241.4,732.9 1243.2,756.5 1245.1,732.4 1246.7,756.7 1248.4,733.3 1250.7,756.6 1252.2,734.0 1253.9,756.5 1255.7,733.3 1258.0,757.2 1260.0,731.8 1261.7,756.3 1263.5,732.7 1265.5,755.6 1267.3,734.5 1268.9,757.2 1270.5,731.7 1272.9,758.0 1274.7,732.7 1276.9,755.5 1279.2,732.8 1281.6,758.0 1283.9,733.3 1286.2,756.0 1288.4,731.9 1289.9,757.2 1292.3,731.8 1294.1,756.7 1295.6,734.1 1297.5,758.2 1299.5,732.9 1301.7,756.2 1303.3,734.2 1305.1,755.9 1306.9,731.9 1308.6,757.2 1310.9,733.3 1313.2,751.6 1315.5,742.4 1317.1,758.2" fill="none" stroke="#d86a88" stroke-width="0.9" stroke-opacity="0.65"/><polyline points="493.5,731 495.9,731 495.9,759 498.0,759 498.0,731 502.1,731 502.1,759 504.0,759 504.0,731 506.5,731 506.5,759 508.5,759 508.5,731 511.5,731 511.5,759 513.6,759 513.6,731 517.8,731 517.8,759 520.0,759 520.0,731 523.2,731 523.2,759 524.2,759 524.2,731 528.2,731 528.2,759 530.3,759 530.3,731 540.6,731 540.6,759 542.5,759 542.5,731 545.5,731 545.5,759 546.6,759 546.6,731 548.9,731 548.9,759 549.9,759 549.9,731 554.0,731 554.0,759 555.3,759 555.3,731 558.7,731 558.7,759 560.3,759 560.3,731 574.8,731 574.8,759 576.8,759 576.8,731 578.8,731 578.8,759 580.1,759 580.1,731 583.0,731 583.0,759 584.7,759 584.7,731 588.8,731 588.8,759 590.0,759 590.0,731 593.1,731 593.1,759 595.1,759 595.1,731 597.8,731 597.8,759 599.9,759 599.9,731 604.1,731 604.1,759 606.2,759 606.2,731 608.7,731 608.7,759 610.5,759 610.5,731 614.8,731 614.8,759 615.8,759 615.8,731 619.1,731 619.1,759 620.6,759 620.6,731 622.6,731 622.6,759 623.9,759 623.9,731 627.1,731 627.1,759 628.6,759 628.6,731 632.4,731 632.4,759 634.6,759 634.6,731 638.4,731 638.4,759 640.3,759 640.3,731 643.8,731 643.8,759 645.8,759 645.8,731 657.3,731 657.3,759 659.4,759 659.4,731 663.6,731 663.6,759 665.7,759 665.7,731 675.1,731 675.1,759 676.9,759 676.9,731 679.0,731 679.0,759 680.6,759 680.6,731 683.1,731 683.1,759 684.4,759 684.4,731 688.3,731 688.3,759 689.7,759 689.7,731 693.7,731 693.7,759 694.9,759 694.9,731 710.4,731 710.4,759 711.8,759 711.8,731 716.0,731 716.0,759 717.3,759 717.3,731 721.3,731 721.3,759 722.5,759 722.5,731 726.0,731 726.0,759 727.7,759 727.7,731 731.0,731 731.0,759 732.5,759 732.5,731 736.4,731 736.4,759 737.6,759 737.6,731 741.4,731 741.4,759 742.6,759 742.6,731 746.7,731 746.7,759 748.2,759 748.2,731 750.2,731 750.2,759 751.5,759 751.5,731 755.4,731 755.4,759 757.1,759 757.1,731 760.9,731 760.9,759 762.0,759 762.0,731 764.9,731 764.9,759 766.9,759 766.9,731 770.4,731 770.4,759 771.6,759 771.6,731 775.5,731 775.5,759 776.9,759 776.9,731 779.5,731 779.5,759 781.7,759 781.7,731 785.3,731 785.3,759 786.6,759 786.6,731 789.1,731 789.1,759 790.6,759 790.6,731 794.8,731 794.8,759 796.2,759 796.2,731 799.1,731 799.1,759 800.8,759 800.8,731 802.7,731 802.7,759 804.1,759 804.1,731 806.2,731 806.2,759 807.8,759 807.8,731 812.0,731 812.0,759 813.9,759 813.9,731 817.0,731 817.0,759 818.4,759 818.4,731 821.5,731 821.5,759 822.7,759 822.7,731 825.4,731 825.4,759 826.6,759 826.6,731 829.6,731 829.6,759 831.7,759 831.7,731 847.0,731 847.0,759 848.6,759 848.6,731 850.7,731 850.7,759 852.3,759 852.3,731 869.7,731 869.7,759 870.9,759 870.9,731 873.1,731 873.1,759 874.2,759 874.2,731 878.3,731 878.3,759 880.2,759 880.2,731 882.3,731 882.3,759 884.4,759 884.4,731 886.9,731 886.9,759 888.0,759 888.0,731 890.0,731 890.0,759 891.4,759 891.4,731 894.8,731 894.8,759 896.2,759 896.2,731 899.5,731 899.5,759 900.5,759 900.5,731 904.5,731 904.5,759 906.3,759 906.3,731 909.7,731 909.7,759 911.7,759 911.7,731 914.3,731 914.3,759 916.0,759 916.0,731 918.2,731 918.2,759 919.2,759 919.2,731 921.6,731 921.6,759 923.1,759 923.1,731 926.9,731 926.9,759 928.6,759 928.6,731 932.8,731 932.8,759 934.0,759 934.0,731 936.6,731 936.6,759 938.3,759 938.3,731 942.6,731 942.6,759 943.8,759 943.8,731 946.9,731 946.9,759 948.9,759 948.9,731 953.2,731 953.2,759 955.0,759 955.0,731 959.1,731 959.1,759 960.5,759 960.5,731 964.3,731 964.3,759 965.7,759 965.7,731 970.0,731 970.0,759 971.1,759 971.1,731 975.1,731 975.1,759 977.3,759 977.3,731 980.6,731 980.6,759 982.5,759 982.5,731 984.5,731 984.5,759 985.6,759 985.6,731 988.9,731 988.9,759 990.8,759 990.8,731 993.2,731 993.2,759 994.2,759 994.2,731 1008.7,731 1008.7,759 1010.6,759 1010.6,731 1013.7,731 1013.7,759 1015.4,759 1015.4,731 1017.5,731 1017.5,759 1019.1,759 1019.1,731 1021.8,731 1021.8,759 1022.9,759 1022.9,731 1026.5,731 1026.5,759 1028.0,759 1028.0,731 1030.2,731 1030.2,759 1032.3,759 1032.3,731 1036.3,731 1036.3,759 1038.3,759 1038.3,731 1041.2,731 1041.2,759 1042.5,759 1042.5,731 1046.4,731 1046.4,759 1048.6,759 1048.6,731 1064.6,731 1064.6,759 1066.7,759 1066.7,731 1082.8,731 1082.8,759 1084.2,759 1084.2,731 1088.0,731 1088.0,759 1089.2,759 1089.2,731 1091.0,731 1091.0,759 1092.7,759 1092.7,731 1095.5,731 1095.5,759 1097.3,759 1097.3,731 1100.3,731 1100.3,759 1102.1,759 1102.1,731 1105.7,731 1105.7,759 1107.3,759 1107.3,731 1111.3,731 1111.3,759 1112.4,759 1112.4,731 1116.2,731 1116.2,759 1118.2,759 1118.2,731 1121.7,731 1121.7,759 1123.1,759 1123.1,731 1125.9,731 1125.9,759 1127.6,759 1127.6,731 1130.6,731 1130.6,759 1132.1,759 1132.1,731 1149.2,731 1149.2,759 1151.0,759 1151.0,731 1166.3,731 1166.3,759 1167.6,759 1167.6,731 1171.6,731 1171.6,759 1172.7,759 1172.7,731 1176.5,731 1176.5,759 1178.6,759 1178.6,731 1181.6,731 1181.6,759 1183.7,759 1183.7,731 1186.6,731 1186.6,759 1188.8,759 1188.8,731 1190.7,731 1190.7,759 1191.9,759 1191.9,731 1195.9,731 1195.9,759 1197.9,759 1197.9,731 1200.5,731 1200.5,759 1201.9,759 1201.9,731 1203.9,731 1203.9,759 1205.9,759 1205.9,731 1207.7,731 1207.7,759 1209.8,759 1209.8,731 1212.8,731 1212.8,759 1214.5,759 1214.5,731 1218.6,731 1218.6,759 1220.3,759 1220.3,731 1228.8,731 1228.8,759 1230.7,759 1230.7,731 1233.2,731 1233.2,759 1235.2,759 1235.2,731 1237.4,731 1237.4,759 1239.5,759 1239.5,731 1242.5,731 1242.5,759 1244.2,759 1244.2,731 1248.4,731 1248.4,759 1250.4,759 1250.4,731 1265.7,731 1265.7,759 1267.0,759 1267.0,731 1268.9,731 1268.9,759 1270.1,759 1270.1,731 1273.9,731 1273.9,759 1275.5,759 1275.5,731 1278.7,731 1278.7,759 1279.8,759 1279.8,731 1283.1,731 1283.1,759 1284.2,759 1284.2,731 1286.6,731 1286.6,759 1287.9,759 1287.9,731 1290.4,731 1290.4,759 1292.3,759 1292.3,731 1294.2,731 1294.2,759 1296.3,759 1296.3,731 1305.6,731 1305.6,759 1307.4,759 1307.4,731 1309.3,731 1309.3,759 1310.3,759 1310.3,731 1312.6,731 1312.6,759 1314.7,759 1314.7,731 1318.0,731" fill="none" stroke="#6db25a" stroke-width="1.0" stroke-opacity="0.85"/></svg>
<div class="ab" style="left:1317.5px;top:733px;width:4px;height:27px;background:#222;border-radius:1px"></div>
<div class="ab" style="left:1319px;top:760px;width:1px;height:15px;background:#555"></div>
<svg style="left:0px;top:0px;" width="1380" height="900" viewBox="0 0 1380 900"><line x1="493" y1="774" x2="1321" y2="774" stroke="#777" stroke-width="2"/><line x1="494" y1="773" x2="494" y2="779" stroke="#777" stroke-width="2"/><line x1="535" y1="774" x2="535" y2="779" stroke="#777" stroke-width="1.6"/><line x1="669.8" y1="774" x2="669.8" y2="779" stroke="#777" stroke-width="1.6"/><line x1="809.5" y1="774" x2="809.5" y2="779" stroke="#777" stroke-width="1.6"/><line x1="944.5" y1="774" x2="944.5" y2="779" stroke="#777" stroke-width="1.6"/><line x1="1084" y1="774" x2="1084" y2="779" stroke="#777" stroke-width="1.6"/><line x1="1223" y1="774" x2="1223" y2="779" stroke="#777" stroke-width="1.6"/></svg>
<div class="t" style="left:526.5px;top:779.3px;font-size:11.5px;color:#333;font-weight:normal;letter-spacing:0.00px;transform:scaleX(0.8308);transform-origin:0 0;">Sep</div>
<div class="t" style="left:660.8px;top:779.3px;font-size:11.5px;color:#333;font-weight:normal;letter-spacing:0.06px;">Oct</div>
<div class="t" style="left:800.0px;top:779.3px;font-size:11.5px;color:#333;font-weight:normal;letter-spacing:0.00px;transform:scaleX(0.9290);transform-origin:0 0;">Nov</div>
<div class="t" style="left:935.5px;top:779.3px;font-size:11.5px;color:#333;font-weight:normal;letter-spacing:0.00px;transform:scaleX(0.8801);transform-origin:0 0;">Dec</div>
<div class="t" style="left:1072.0px;top:779.3px;font-size:11.5px;color:#333;font-weight:normal;letter-spacing:0.00px;transform:scaleX(0.9381);transform-origin:0 0;">2022</div>
<div class="t" style="left:1214.5px;top:779.3px;font-size:11.5px;color:#333;font-weight:normal;letter-spacing:0.00px;transform:scaleX(0.8579);transform-origin:0 0;">Feb</div>
<div class="ab" style="left:1320px;top:774px;width:1.5px;height:6px;background:#777"></div>
<div class="ab" style="left:493px;top:798.5px;width:244.5px;height:23.5px;background:#fff;border:1px solid #dcdcdc;border-radius:3px"></div>
<div class="ab" style="left:633.5px;top:799.5px;width:35px;height:21.5px;background:#eef4fa"></div>
<div class="ab" style="left:526.5px;top:799px;width:1px;height:22.5px;background:#dcdcdc"></div>
<div class="ab" style="left:563px;top:799px;width:1px;height:22.5px;background:#dcdcdc"></div>
<div class="ab" style="left:597.5px;top:799px;width:1px;height:22.5px;background:#dcdcdc"></div>
<div class="ab" style="left:633px;top:799px;width:1px;height:22.5px;background:#dcdcdc"></div>
<div class="ab" style="left:668.3px;top:799px;width:1px;height:22.5px;background:#dcdcdc"></div>
<div class="ab" style="left:699.5px;top:799px;width:1px;height:22.5px;background:#dcdcdc"></div>
<div class="t" style="left:502.5px;top:804.0px;font-size:13px;color:#333;font-weight:normal;letter-spacing:0.00px;transform:scaleX(0.9026);transform-origin:0 0;">1D</div>
<div class="t" style="left:535.0px;top:804.0px;font-size:13px;color:#333;font-weight:normal;letter-spacing:-0.50px;">1W</div>
<div class="t" style="left:571.0px;top:804.0px;font-size:13px;color:#333;font-weight:normal;letter-spacing:0.94px;">1M</div>
<div class="t" style="left:606.0px;top:804.0px;font-size:13px;color:#333;font-weight:normal;letter-spacing:0.94px;">3M</div>
<div class="t" style="left:641.0px;top:804.0px;font-size:13px;color:#2565b5;font-weight:normal;letter-spacing:0.94px;">6M</div>
<div class="t" style="left:676.5px;top:804.0px;font-size:13px;color:#333;font-weight:normal;letter-spacing:0.00px;transform:scaleX(0.9433);transform-origin:0 0;">1Y</div>
<div class="t" style="left:708.5px;top:804.0px;font-size:13px;color:#333;font-weight:normal;letter-spacing:0.00px;transform:scaleX(0.8646);transform-origin:0 0;">ALL</div>
<div class="ab" style="left:753.5px;top:798.5px;width:104px;height:23.5px;background:#fff;border:1px solid #dcdcdc;border-radius:3px"></div>
<div class="ab" style="left:834px;top:799px;width:1px;height:22.5px;background:#dcdcdc"></div>
<div class="t" style="left:763.0px;top:804.0px;font-size:13px;color:#333;font-weight:normal;letter-spacing:0.00px;transform:scaleX(0.8913);transform-origin:0 0;">CUSTOM</div>
<svg style="left:818.5px;top:807px;" width="8" height="4.5" viewBox="0 0 8 4.5"><polygon points="0,4.5 8,4.5 4.0,0" fill="#999"/></svg>
<svg style="left:839px;top:804px;" width="13" height="12" viewBox="0 0 13 12"><rect x="0.7" y="0.7" width="11.5" height="10" rx="1.5" fill="none" stroke="#666" stroke-width="1.2"/><path d="M3,3.5 v1.5 M3,3.5 h1.5 M10,3.5 v1.5 M10,3.5 h-1.5 M3,8 v-1.5 M3,8 h1.5 M10,8 v-1.5 M10,8 h-1.5" stroke="#666" stroke-width="1"/></svg>
</body></html>
